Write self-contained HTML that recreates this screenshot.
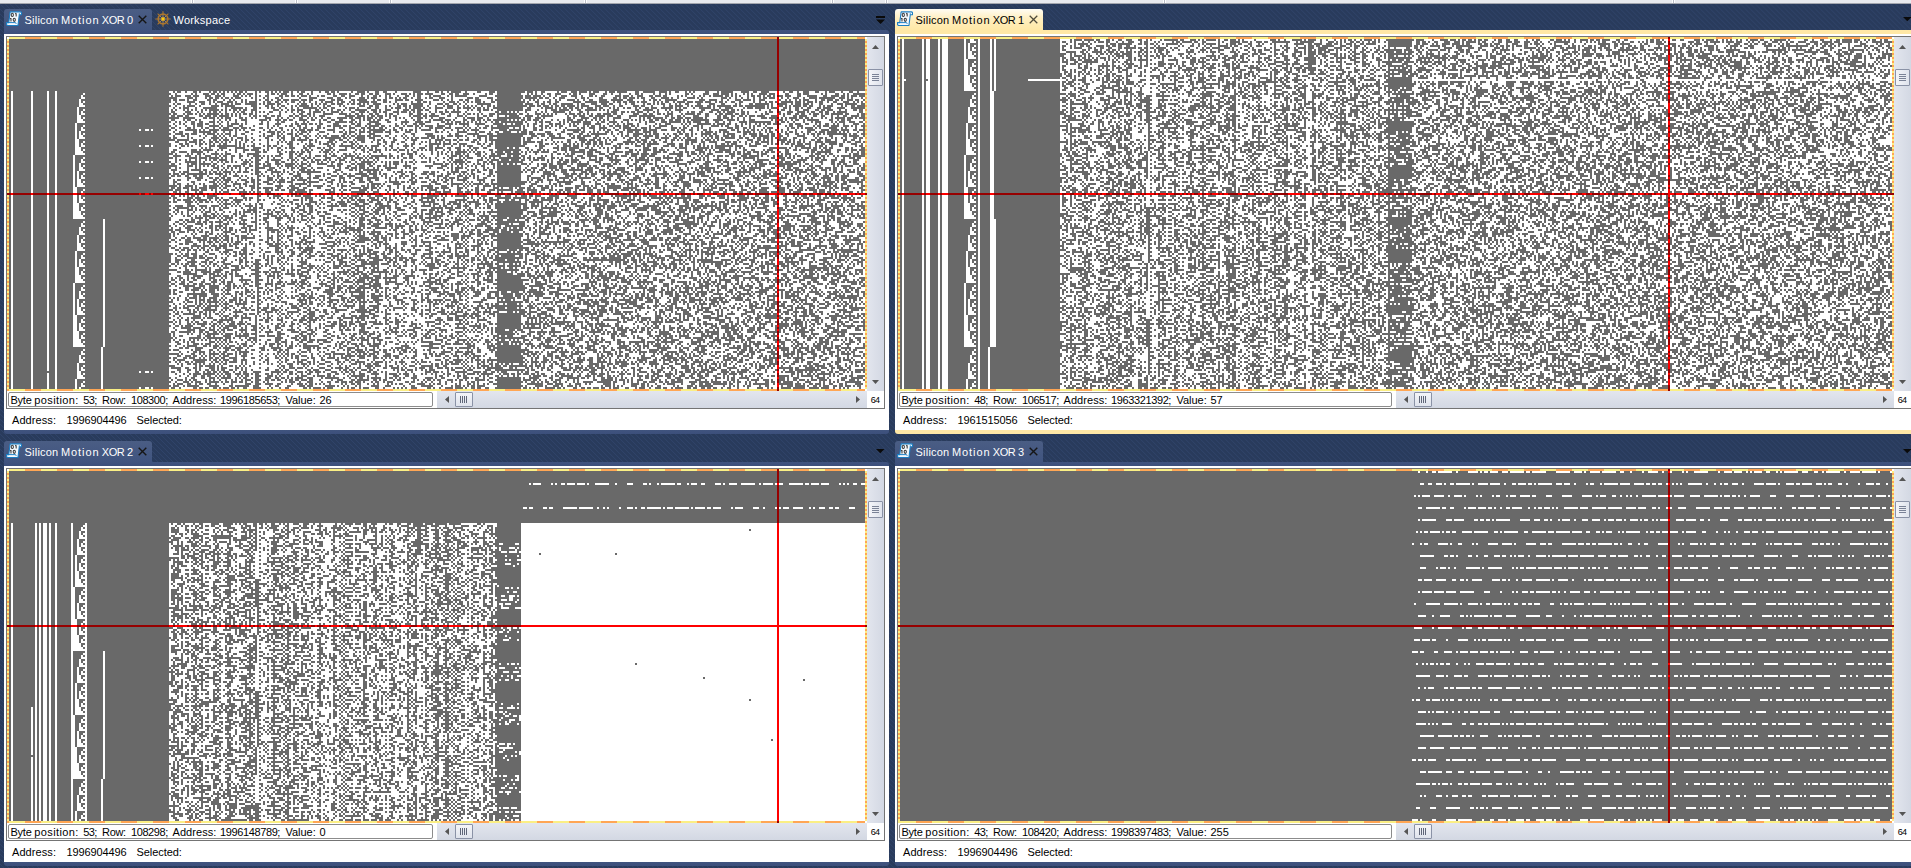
<!DOCTYPE html><html><head><meta charset="utf-8"><title>x</title><style>
*{box-sizing:border-box;margin:0;padding:0}
html,body{width:1911px;height:868px;overflow:hidden}
body{position:relative;font-family:"Liberation Sans",sans-serif;font-size:11px;color:#000;
 background:#2a3c5e repeating-linear-gradient(45deg,#293b5c 0,#293b5c 2.100px,#30446a 2.800px,#293b5c 3.536px)}
.a{position:absolute}
.top{left:0;top:0;width:1911px;height:4px;background:#e8eaef;border-bottom:1px solid #a3a6ae}
.tab{height:21px;border-radius:3px 3px 0 0}
.tab.in{background:linear-gradient(#4a5d84,#40547f)}
.tab.ac{background:linear-gradient(#fffcf3,#ffefc0 45%,#ffe8a6)}
.band.in{background:linear-gradient(#40547f,#3c4f7b)}
.band.ac{background:#ffe8a6}
.tt{top:0;height:23px;line-height:23px;white-space:nowrap;font-size:11px}
.in .tt{color:#fff}
.frame{background:#fff}
.ib{border:1px solid #747474}
.dash{background:
 repeating-linear-gradient(90deg,#fbef84 0,#fbef84 16px,#ffa654 16px,#ffa654 32px)}
.dashv{background:
 repeating-linear-gradient(180deg,#fbef84 0,#fbef84 2px,#ffa654 2px,#ffa654 4px)}
.sb{background:linear-gradient(90deg,#e3e6ee,#d3d8e3)}
.sbh{background:linear-gradient(180deg,#e3e6ee,#d3d8e3)}
.thumb{border:1px solid #8a92a6;border-radius:1px;background:linear-gradient(90deg,#f4f5f9,#dfe3ec)}
.thumbh{border:1px solid #8a92a6;border-radius:1px;background:linear-gradient(180deg,#f4f5f9,#dfe3ec)}
.tbx{border:1px solid #8c8c8c;border-radius:2px;background:#fff;height:15px;line-height:15px;white-space:nowrap;overflow:hidden;padding-left:2px}
.txt{white-space:nowrap;height:14px;line-height:14px}
.w{top:0;white-space:nowrap}
svg{position:absolute;display:block}
</style></head><body>
<div class="a top"></div>
<div class="a" style="left:191px;top:0;width:3px;height:3px;background:linear-gradient(90deg,#fff 0,#fff 1px,#b9bcc6 1px,#b9bcc6 2px,#fff 2px)"></div>
<div class="a" style="left:295px;top:0;width:3px;height:3px;background:linear-gradient(90deg,#fff 0,#fff 1px,#b9bcc6 1px,#b9bcc6 2px,#fff 2px)"></div>
<div class="a" style="left:389px;top:0;width:3px;height:3px;background:linear-gradient(90deg,#fff 0,#fff 1px,#b9bcc6 1px,#b9bcc6 2px,#fff 2px)"></div>
<div class="a" style="left:584px;top:0;width:3px;height:3px;background:linear-gradient(90deg,#fff 0,#fff 1px,#b9bcc6 1px,#b9bcc6 2px,#fff 2px)"></div>
<div class="a" style="left:831px;top:0;width:3px;height:3px;background:linear-gradient(90deg,#fff 0,#fff 1px,#b9bcc6 1px,#b9bcc6 2px,#fff 2px)"></div>
<div class="a" style="left:885px;top:0;width:3px;height:3px;background:linear-gradient(90deg,#fff 0,#fff 1px,#b9bcc6 1px,#b9bcc6 2px,#fff 2px)"></div>
<div class="a" style="left:1163px;top:0;width:3px;height:3px;background:linear-gradient(90deg,#fff 0,#fff 1px,#b9bcc6 1px,#b9bcc6 2px,#fff 2px)"></div>
<div class="a" style="left:1672px;top:0;width:3px;height:3px;background:linear-gradient(90deg,#fff 0,#fff 1px,#b9bcc6 1px,#b9bcc6 2px,#fff 2px)"></div>
<div class="a tab in" style="left:4px;top:9px;width:148px">
<svg class="a" style="left:2px;top:2px" width="16" height="16" viewBox="0 0 17 16" preserveAspectRatio="none">
<path d="M4.400.8H15.100c1 0 1.400.5 1.400 1.300V3.700H14.100L12.700 14.500H2.200C1.100 14.500.5 13.900.5 13V11.600H2.900z" fill="#f3f9fd" stroke="#1b7ec3" stroke-width="1.150" stroke-linejoin="round"/>
<path d="M.7 11.600H9.800c.7 0 1 .5 1 1.200M14.100 3.700V2.300" fill="none" stroke="#1b7ec3" stroke-width="1"/>
<g fill="none" stroke="#383838" stroke-width="1.100">
<ellipse cx="6.700" cy="3.900" rx="1.150" ry="1.600"/><path d="M10.800 2.200v3.400M9.800 3l1-.8"/>
<path d="M5.300 7.100v3.400M4.300 7.900l1-.8"/><ellipse cx="8.800" cy="8.800" rx="1.150" ry="1.600"/></g>
</svg>
<div class="a tt" style="left:20.500px;letter-spacing:.22px">Silicon</div>
<div class="a tt" style="left:57px;letter-spacing:.92px">Motion</div>
<div class="a tt" style="left:97.800px;letter-spacing:-.5px">XOR</div>
<div class="a tt" style="left:123px">0</div>
<svg class="a" style="left:134px;top:6px" width="9" height="9" viewBox="0 0 9 9"><path d="M.7.7l7.600 7.600M8.300.7L.7 8.300" stroke="#161616" stroke-width="1.4" fill="none"/></svg>
</div>
<div class="a in" style="left:152px;top:9px;width:90px;height:21px">
<svg class="a" style="left:2.5px;top:1.5px" width="16" height="16" viewBox="-8 -8 16 16">
<g stroke="#ad772e" fill="none">
<path d="M0-7.700V-5M0 5V7.700M-7.700 0H-5M5 0H7.700M-5.400-5.400L-3.600-3.600M3.600 3.600L5.400 5.400M-5.400 5.400L-3.600 3.600M3.600-3.600L5.400-5.400" stroke-width="1.050"/>
<path d="M0-4.500V4.500M-4.500 0H4.500M-3.200-3.200L3.200 3.200M-3.200 3.200L3.200-3.200" stroke-width=".7" stroke="#c9a066"/>
<circle r="4.800" stroke-width="1.700"/></g>
<circle r="1.700" fill="#f8cb12" stroke="#dfa314" stroke-width=".5"/>
</svg>
<div class="a tt" style="left:21.500px;letter-spacing:.22px">Workspace</div>
</div>
<div class="a band in" style="left:4px;top:30px;width:885px;height:4px;border-radius:0 3px 0 0"></div>
<div class="a band in" style="left:4px;top:430px;width:885px;height:4px;border-radius:0 0 3px 3px"></div>
<div class="a frame" style="left:4px;top:34px;width:885px;height:396px"></div>
<div class="a ib" style="left:6px;top:36px;width:879px;height:373px"></div>
<div class="a dash" style="left:7px;top:37px;width:860px;height:2px;background-position:2px 0"></div>
<div class="a dash" style="left:7px;top:389px;width:860px;height:2px;background-position:2px 0"></div>
<div class="a dashv" style="left:7px;top:39px;width:2px;height:350px"></div>
<div class="a dashv" style="left:865px;top:39px;width:2px;height:350px"></div>
<div class="a" style="left:7px;top:37px;width:2px;height:2px;background:#fff"></div>
<div class="a" style="left:865px;top:37px;width:2px;height:2px;background:#fff"></div>
<div class="a" style="left:865px;top:389px;width:2px;height:2px;background:#fff"></div>
<svg style="left:9px;top:39px" width="856" height="350" viewBox="0 0 428 175" shape-rendering="crispEdges"><rect width="428" height="175" fill="#696969"/><path d="M1 26.5h1m9 0h1m7 0h1m3 0h1m56 0h2m1 0h1m2 0h2m1 0h3m2 0h1m1 0h4m1 0h1m2 0h1m1 0h1m1 0h1m1 0h1m1 0h1m1 0h1m2 0h1m1 0h4m1 0h1m1 0h2m2 0h1m1 0h1m1 0h1m1 0h1m3 0h1m1 0h2m1 0h1m2 0h3m1 0h3m1 0h2m2 0h1m2 0h1m1 0h6m1 0h2m4 0h1m1 0h3m2 0h2m2 0h4m1 0h8m4 0h3m1 0h3m2 0h1m1 0h2m1 0h1m5 0h2m1 0h5m2 0h4m3 0h1m14 0h1m3 0h1m1 0h2m2 0h6m1 0h1m3 0h2m3 0h1m4 0h1m1 0h1m3 0h3m1 0h1m3 0h1m5 0h4m2 0h2m6 0h2m4 0h1m1 0h2m2 0h3m1 0h1m1 0h1m1 0h5m2 0h4m1 0h1m6 0h4m4 0h2m2 0h2m4 0h4m1 0h2m1 0h2m2 0h2m1 0h2m3 0h3m2 0h3m1 0h1m3 0h3m1 0h3m2 0h2m1 0h3M1 27.5h1m9 0h1m7 0h1m3 0h1m13 0h1m43 0h2m1 0h7m1 0h1m1 0h3m3 0h1m2 0h1m1 0h1m2 0h4m1 0h1m2 0h1m1 0h1m3 0h1m1 0h5m1 0h1m2 0h1m1 0h1m3 0h2m1 0h3m2 0h2m1 0h1m1 0h7m2 0h1m1 0h2m4 0h1m1 0h2m2 0h1m2 0h2m2 0h1m2 0h3m3 0h1m1 0h3m3 0h1m1 0h1m1 0h1m3 0h1m4 0h4m2 0h2m2 0h1m2 0h2m3 0h2m1 0h5m1 0h1m2 0h2m12 0h3m1 0h1m1 0h1m1 0h2m1 0h2m2 0h2m3 0h4m1 0h1m2 0h1m1 0h4m3 0h4m2 0h2m1 0h3m1 0h4m1 0h2m2 0h1m1 0h5m1 0h2m1 0h2m1 0h1m1 0h7m2 0h1m1 0h5m3 0h2m3 0h1m4 0h1m1 0h1m1 0h3m1 0h1m1 0h1m1 0h3m4 0h1m3 0h1m1 0h3m2 0h4m2 0h1m3 0h6m1 0h1m1 0h4m2 0h2m1 0h1m1 0h2M1 28.5h1m9 0h1m7 0h1m3 0h1m12 0h1m43 0h1m1 0h1m3 0h2m3 0h1m3 0h3m3 0h2m3 0h1m1 0h4m3 0h1m1 0h1m1 0h1m1 0h2m1 0h1m1 0h2m2 0h5m2 0h1m2 0h1m2 0h1m1 0h1m3 0h1m1 0h3m1 0h1m2 0h4m2 0h2m2 0h2m3 0h3m1 0h2m1 0h2m2 0h1m1 0h2m1 0h1m1 0h3m1 0h3m2 0h2m1 0h1m2 0h4m1 0h1m4 0h3m1 0h1m1 0h1m6 0h6m4 0h4m14 0h1m3 0h1m4 0h1m1 0h2m1 0h2m1 0h2m3 0h2m3 0h2m1 0h3m2 0h1m1 0h2m2 0h5m3 0h1m3 0h1m1 0h2m3 0h3m2 0h1m3 0h1m2 0h5m1 0h1m1 0h1m1 0h3m1 0h2m1 0h1m1 0h2m1 0h1m5 0h1m2 0h1m1 0h1m1 0h1m1 0h3m1 0h1m2 0h1m2 0h1m1 0h1m2 0h1m1 0h1m3 0h1m3 0h3m2 0h3m5 0h3m2 0h2m4 0h1m2 0h1m1 0h1m3 0h1M1 29.5h1m9 0h1m7 0h1m3 0h1m12 0h2m46 0h5m3 0h1m1 0h4m1 0h1m2 0h1m2 0h1m1 0h1m2 0h1m1 0h1m3 0h5m1 0h1m1 0h3m1 0h1m1 0h3m2 0h1m1 0h8m1 0h4m4 0h5m3 0h2m2 0h2m1 0h1m1 0h4m3 0h1m1 0h1m3 0h4m1 0h1m2 0h1m1 0h1m1 0h1m2 0h2m1 0h2m2 0h2m1 0h1m2 0h3m3 0h3m1 0h7m3 0h1m2 0h4m3 0h2m13 0h1m6 0h1m2 0h1m2 0h2m1 0h2m3 0h5m1 0h2m2 0h1m1 0h5m2 0h5m2 0h1m1 0h1m2 0h1m3 0h1m1 0h1m2 0h3m2 0h3m4 0h1m1 0h2m1 0h4m4 0h1m1 0h1m1 0h9m3 0h1m1 0h2m1 0h2m1 0h2m1 0h2m1 0h2m1 0h1m2 0h1m3 0h1m1 0h1m1 0h2m1 0h2m3 0h2m1 0h2m4 0h1m8 0h2m3 0h1m1 0h1m1 0h4m1 0h1M1 30.5h1m9 0h1m7 0h1m3 0h1m11 0h1m45 0h1m2 0h1m3 0h1m1 0h2m2 0h5m2 0h1m2 0h3m1 0h2m1 0h1m1 0h3m1 0h1m1 0h4m1 0h1m1 0h2m2 0h1m1 0h2m2 0h1m3 0h1m4 0h1m3 0h1m2 0h3m3 0h3m2 0h1m3 0h4m2 0h1m5 0h3m1 0h1m2 0h1m2 0h4m4 0h1m2 0h3m4 0h5m3 0h1m1 0h2m1 0h1m1 0h3m2 0h1m2 0h3m3 0h5m1 0h1m13 0h1m1 0h2m1 0h1m1 0h1m1 0h5m1 0h2m1 0h1m1 0h3m4 0h1m1 0h2m1 0h2m2 0h3m4 0h2m6 0h2m3 0h5m1 0h2m1 0h1m2 0h1m1 0h2m6 0h3m2 0h6m3 0h2m4 0h2m1 0h2m1 0h3m3 0h1m4 0h1m1 0h2m3 0h6m2 0h2m1 0h1m1 0h2m1 0h1m1 0h1m3 0h3m1 0h2m2 0h1m3 0h1m2 0h1m1 0h2m3 0h1m2 0h2M1 31.5h1m9 0h1m7 0h1m3 0h1m11 0h1m1 0h1m43 0h2m1 0h5m4 0h2m3 0h2m1 0h1m1 0h1m3 0h2m3 0h1m1 0h2m1 0h1m1 0h1m4 0h3m1 0h1m2 0h2m2 0h1m1 0h1m1 0h2m2 0h2m1 0h1m1 0h2m1 0h2m1 0h2m1 0h1m4 0h2m1 0h1m2 0h2m1 0h1m1 0h2m5 0h1m3 0h3m2 0h1m1 0h2m1 0h7m1 0h2m2 0h1m2 0h1m1 0h6m1 0h2m3 0h1m1 0h2m1 0h1m1 0h1m1 0h1m3 0h1m1 0h3m2 0h1m14 0h1m1 0h3m2 0h2m1 0h1m2 0h2m2 0h7m4 0h2m6 0h1m5 0h2m1 0h1m2 0h1m2 0h1m3 0h1m1 0h1m3 0h3m1 0h1m1 0h1m1 0h1m2 0h2m1 0h1m4 0h1m3 0h1m4 0h1m3 0h2m1 0h1m2 0h1m1 0h2m2 0h2m2 0h5m1 0h2m1 0h2m1 0h1m2 0h1m2 0h1m6 0h1m3 0h1m1 0h1m3 0h1m1 0h1m2 0h2m1 0h2m2 0h3m3 0h2m1 0h1m1 0h1m1 0h1M1 32.5h1m9 0h1m7 0h1m3 0h1m11 0h2m43 0h2m1 0h1m2 0h4m1 0h2m1 0h2m2 0h2m1 0h2m1 0h2m4 0h1m1 0h1m3 0h2m6 0h1m1 0h1m1 0h1m4 0h1m2 0h3m1 0h4m1 0h1m3 0h2m1 0h1m1 0h1m1 0h1m2 0h2m2 0h1m3 0h2m1 0h1m2 0h1m2 0h1m1 0h1m1 0h2m4 0h6m1 0h1m1 0h1m3 0h2m6 0h3m1 0h3m3 0h1m2 0h2m2 0h1m1 0h2m1 0h5m7 0h3m13 0h1m4 0h2m1 0h1m2 0h2m1 0h1m2 0h2m6 0h2m1 0h1m2 0h3m3 0h2m3 0h1m2 0h3m1 0h2m1 0h2m2 0h4m1 0h1m2 0h1m1 0h1m1 0h1m2 0h2m1 0h2m1 0h1m1 0h2m2 0h4m2 0h4m3 0h3m2 0h5m1 0h1m1 0h4m2 0h1m7 0h1m1 0h2m5 0h2m1 0h1m3 0h1m3 0h1m1 0h3m2 0h4m1 0h2m3 0h1m6 0h2M1 33.5h1m9 0h1m7 0h1m3 0h1m11 0h3m43 0h2m1 0h3m1 0h1m4 0h2m1 0h5m4 0h1m1 0h1m5 0h8m3 0h4m2 0h1m1 0h2m1 0h1m2 0h3m1 0h1m1 0h1m5 0h1m1 0h2m1 0h2m1 0h1m2 0h4m1 0h1m1 0h7m3 0h2m2 0h1m2 0h3m1 0h1m1 0h3m2 0h1m2 0h1m1 0h1m5 0h2m1 0h3m1 0h3m1 0h1m3 0h2m1 0h2m1 0h1m1 0h1m1 0h1m1 0h2m1 0h2m2 0h1m1 0h1m15 0h1m3 0h1m2 0h1m3 0h1m1 0h1m2 0h1m2 0h1m4 0h1m1 0h1m4 0h3m3 0h1m3 0h2m1 0h2m2 0h5m3 0h1m2 0h3m1 0h5m1 0h2m2 0h1m4 0h2m1 0h1m1 0h1m4 0h2m2 0h1m1 0h1m7 0h1m2 0h1m2 0h1m10 0h1m1 0h1m1 0h2m3 0h1m1 0h1m1 0h1m4 0h1m2 0h1m2 0h3m1 0h1m1 0h1m3 0h4m1 0h1m1 0h2m2 0h1M1 34.5h1m9 0h1m7 0h1m3 0h1m10 0h1m45 0h2m1 0h2m1 0h1m3 0h3m1 0h3m7 0h4m1 0h2m6 0h1m1 0h3m2 0h1m1 0h3m1 0h1m2 0h2m1 0h2m1 0h2m1 0h2m1 0h2m7 0h1m1 0h1m2 0h2m2 0h5m1 0h1m3 0h1m1 0h4m2 0h2m2 0h3m1 0h2m1 0h1m3 0h2m1 0h1m1 0h1m4 0h1m1 0h2m1 0h2m4 0h2m3 0h2m2 0h1m4 0h1m1 0h1m2 0h1m1 0h1m1 0h2m15 0h2m2 0h5m1 0h1m4 0h1m1 0h1m1 0h1m2 0h1m2 0h1m2 0h1m1 0h2m3 0h1m1 0h1m2 0h3m1 0h1m1 0h1m1 0h2m1 0h1m2 0h2m1 0h1m1 0h2m2 0h1m3 0h2m6 0h1m1 0h1m1 0h1m2 0h3m1 0h2m6 0h1m1 0h2m1 0h2m4 0h5m1 0h1m3 0h1m5 0h1m1 0h1m4 0h2m2 0h1m1 0h2m2 0h1m1 0h2m2 0h3m2 0h1m4 0h3m4 0h3M1 35.5h1m9 0h1m7 0h1m3 0h1m10 0h1m2 0h1m42 0h1m1 0h1m1 0h3m1 0h1m1 0h1m1 0h1m1 0h2m1 0h1m1 0h1m5 0h1m1 0h1m1 0h1m1 0h1m2 0h1m1 0h1m2 0h2m3 0h8m3 0h1m1 0h2m1 0h1m2 0h1m3 0h3m1 0h2m2 0h1m1 0h2m1 0h1m1 0h2m2 0h1m1 0h2m1 0h2m6 0h2m3 0h1m1 0h2m3 0h3m1 0h2m3 0h1m2 0h1m3 0h1m2 0h3m1 0h4m1 0h3m1 0h1m1 0h4m1 0h1m1 0h2m2 0h1m3 0h1m1 0h2m13 0h1m3 0h3m1 0h3m1 0h2m3 0h1m5 0h1m1 0h2m2 0h2m6 0h1m1 0h1m1 0h1m1 0h2m3 0h8m2 0h2m5 0h2m1 0h3m1 0h1m1 0h2m4 0h9m2 0h3m4 0h1m4 0h1m2 0h1m1 0h1m1 0h8m1 0h4m1 0h3m1 0h1m2 0h2m1 0h2m2 0h2m3 0h3m2 0h1m2 0h1m3 0h3m1 0h2m1 0h3m2 0h1m2 0h1M1 36.5h1m9 0h1m7 0h1m3 0h1m10 0h1m1 0h1m43 0h1m2 0h5m3 0h3m1 0h1m1 0h3m1 0h1m2 0h1m1 0h2m1 0h3m1 0h1m1 0h1m2 0h3m1 0h1m1 0h1m1 0h1m1 0h2m2 0h3m1 0h2m1 0h2m1 0h2m1 0h1m2 0h2m1 0h1m4 0h1m1 0h3m4 0h1m1 0h4m2 0h2m3 0h1m1 0h2m2 0h1m1 0h1m2 0h3m3 0h1m3 0h1m1 0h1m1 0h1m2 0h4m1 0h2m1 0h1m2 0h1m2 0h1m5 0h2m1 0h6m1 0h7m2 0h1m3 0h1m1 0h1m1 0h1m1 0h3m1 0h4m1 0h2m1 0h1m1 0h3m6 0h2m1 0h4m2 0h2m1 0h9m1 0h1m3 0h2m2 0h1m1 0h1m2 0h1m3 0h2m1 0h2m1 0h1m1 0h4m1 0h1m1 0h3m1 0h3m1 0h1m2 0h2m2 0h3m2 0h2m2 0h1m1 0h1m4 0h3m2 0h1m1 0h3m1 0h4m1 0h1m2 0h2m2 0h3m3 0h2m4 0h1m1 0h1m2 0h2m2 0h1m2 0h2m1 0h1m5 0h6m2 0h1M1 37.5h1m9 0h1m7 0h1m3 0h1m10 0h1m1 0h2m43 0h1m2 0h3m1 0h1m3 0h1m1 0h1m1 0h1m1 0h1m6 0h1m1 0h1m2 0h1m1 0h1m1 0h1m1 0h1m2 0h1m2 0h1m1 0h5m1 0h5m1 0h6m1 0h2m2 0h2m2 0h1m1 0h4m5 0h3m4 0h1m1 0h2m2 0h1m1 0h3m2 0h1m2 0h3m1 0h1m2 0h2m1 0h5m2 0h2m3 0h1m1 0h2m2 0h3m2 0h2m1 0h3m1 0h2m1 0h1m2 0h1m1 0h1m1 0h1m1 0h3m3 0h1m10 0h1m2 0h2m1 0h3m3 0h1m1 0h1m1 0h1m1 0h1m1 0h4m1 0h1m3 0h1m2 0h1m1 0h1m1 0h1m1 0h2m2 0h1m4 0h1m2 0h2m1 0h5m3 0h2m2 0h1m2 0h2m2 0h1m1 0h1m3 0h4m1 0h1m5 0h1m2 0h2m2 0h3m1 0h1m2 0h1m4 0h1m2 0h1m2 0h1m1 0h6m1 0h1m2 0h4m2 0h1m1 0h1m2 0h2m2 0h1m2 0h2m1 0h1m3 0h1m1 0h1m2 0h1m6 0h1m2 0h4m1 0h1M1 38.5h1m9 0h1m7 0h1m3 0h1m10 0h2m44 0h1m2 0h1m3 0h1m2 0h5m2 0h1m3 0h1m2 0h1m5 0h1m1 0h1m1 0h1m1 0h4m1 0h1m2 0h1m1 0h1m2 0h2m2 0h1m2 0h4m2 0h1m2 0h1m3 0h1m1 0h1m1 0h2m3 0h10m5 0h1m4 0h1m1 0h1m2 0h1m3 0h1m1 0h1m1 0h1m2 0h6m1 0h1m4 0h1m2 0h1m5 0h4m2 0h3m3 0h1m1 0h5m1 0h2m2 0h1m2 0h2m1 0h3m1 0h1m5 0h3m4 0h2m1 0h1m6 0h7m1 0h2m2 0h1m3 0h2m2 0h1m5 0h1m3 0h2m2 0h4m4 0h1m8 0h5m2 0h1m1 0h2m2 0h1m1 0h4m3 0h3m2 0h4m2 0h1m2 0h2m2 0h2m2 0h1m1 0h1m3 0h1m4 0h3m4 0h2m1 0h4m2 0h1m4 0h3m2 0h2m2 0h3m1 0h2m1 0h2m2 0h2m4 0h1M1 39.5h1m9 0h1m7 0h1m3 0h1m10 0h2m1 0h1m47 0h2m6 0h4m2 0h1m3 0h1m1 0h1m1 0h1m3 0h4m2 0h1m1 0h2m1 0h1m1 0h4m3 0h3m1 0h1m1 0h2m1 0h2m1 0h2m2 0h2m1 0h1m1 0h1m1 0h2m1 0h2m2 0h3m5 0h1m2 0h1m3 0h1m1 0h1m3 0h1m1 0h1m2 0h3m1 0h2m1 0h1m1 0h1m1 0h3m1 0h2m3 0h1m1 0h2m1 0h3m3 0h5m1 0h3m1 0h1m4 0h1m3 0h2m1 0h4m12 0h1m1 0h1m2 0h2m3 0h1m1 0h11m2 0h1m1 0h3m4 0h2m2 0h1m2 0h2m1 0h2m4 0h4m1 0h4m1 0h1m1 0h1m2 0h1m5 0h1m1 0h2m2 0h1m3 0h1m3 0h1m5 0h1m1 0h5m2 0h1m3 0h1m1 0h2m1 0h2m1 0h2m1 0h5m3 0h1m5 0h1m1 0h1m1 0h1m4 0h1m2 0h1m2 0h1m1 0h4m1 0h1m1 0h2m1 0h1m5 0h1m3 0h1m1 0h1M1 40.5h1m9 0h1m7 0h1m3 0h1m10 0h3m43 0h1m2 0h4m1 0h1m2 0h2m1 0h1m1 0h6m1 0h2m1 0h2m1 0h1m1 0h2m1 0h2m3 0h6m4 0h1m1 0h2m3 0h1m2 0h1m2 0h3m4 0h2m2 0h2m1 0h1m2 0h2m2 0h2m2 0h4m2 0h2m1 0h1m1 0h1m2 0h1m1 0h1m2 0h2m2 0h3m1 0h4m1 0h3m1 0h1m2 0h4m1 0h1m5 0h1m3 0h1m1 0h4m2 0h2m2 0h1m2 0h1m1 0h1m2 0h1m7 0h1m1 0h1m1 0h1m1 0h1m2 0h1m2 0h1m3 0h1m1 0h4m1 0h2m1 0h2m1 0h1m3 0h2m3 0h1m1 0h2m1 0h1m1 0h1m1 0h1m1 0h1m1 0h2m1 0h4m3 0h1m1 0h1m1 0h1m1 0h1m1 0h2m2 0h1m2 0h1m2 0h2m2 0h1m3 0h1m1 0h1m1 0h1m9 0h2m5 0h2m4 0h1m1 0h2m1 0h2m3 0h8m1 0h1m4 0h1m1 0h2m1 0h1m2 0h2m1 0h1m6 0h5m2 0h2m1 0h1m2 0h1m2 0h6M1 41.5h1m9 0h1m7 0h1m3 0h1m10 0h4m43 0h2m1 0h1m1 0h2m1 0h2m2 0h2m2 0h3m3 0h1m1 0h1m1 0h2m1 0h3m1 0h4m1 0h7m1 0h2m1 0h4m1 0h1m2 0h5m1 0h3m1 0h1m1 0h5m1 0h3m2 0h2m6 0h1m2 0h1m1 0h1m1 0h4m5 0h4m2 0h5m4 0h3m4 0h1m3 0h5m2 0h1m1 0h1m1 0h1m3 0h1m1 0h1m1 0h1m1 0h1m1 0h1m1 0h2m1 0h2m1 0h1m2 0h1m11 0h1m1 0h4m1 0h1m2 0h1m3 0h4m1 0h1m1 0h1m1 0h1m5 0h1m4 0h3m1 0h1m2 0h2m4 0h2m1 0h2m1 0h5m1 0h2m1 0h1m3 0h3m3 0h1m6 0h1m1 0h1m2 0h1m4 0h2m2 0h3m2 0h2m1 0h2m1 0h4m4 0h1m11 0h2m2 0h1m2 0h1m1 0h2m1 0h4m1 0h3m1 0h1m3 0h5m1 0h1m1 0h1m3 0h2m3 0h2m2 0h1M1 42.5h1m9 0h1m7 0h1m3 0h1m9 0h1m46 0h2m1 0h2m1 0h1m1 0h3m2 0h1m3 0h1m2 0h2m1 0h2m1 0h3m1 0h1m4 0h1m1 0h1m1 0h6m2 0h2m1 0h3m3 0h5m1 0h1m2 0h1m3 0h1m2 0h1m1 0h1m2 0h5m3 0h6m2 0h1m2 0h3m2 0h2m3 0h7m1 0h2m1 0h1m1 0h3m2 0h1m3 0h6m1 0h3m4 0h1m1 0h1m5 0h3m5 0h4m5 0h1m1 0h2m1 0h1m4 0h2m1 0h2m2 0h2m1 0h3m2 0h1m3 0h1m1 0h2m1 0h1m1 0h1m1 0h2m4 0h2m3 0h3m1 0h2m1 0h1m1 0h2m1 0h1m3 0h2m1 0h3m1 0h4m1 0h1m1 0h2m3 0h5m1 0h1m1 0h1m1 0h3m7 0h1m1 0h1m4 0h1m2 0h2m1 0h2m1 0h1m1 0h1m1 0h2m1 0h1m1 0h1m1 0h1m2 0h1m4 0h4m2 0h1m3 0h2m2 0h3m1 0h1m1 0h2m2 0h2m1 0h1m1 0h2m1 0h4m3 0h2M1 43.5h1m9 0h1m7 0h1m3 0h1m9 0h1m3 0h1m43 0h2m1 0h4m1 0h3m1 0h1m3 0h3m5 0h1m1 0h2m3 0h3m2 0h5m1 0h6m1 0h2m1 0h1m1 0h3m1 0h1m2 0h2m2 0h2m1 0h5m2 0h3m2 0h1m4 0h1m2 0h1m1 0h2m3 0h2m1 0h1m5 0h1m2 0h2m1 0h2m2 0h2m1 0h1m3 0h1m2 0h1m1 0h1m4 0h2m4 0h2m1 0h6m1 0h1m1 0h4m1 0h3m2 0h1m1 0h2m12 0h1m1 0h1m1 0h2m1 0h2m2 0h1m2 0h1m1 0h1m1 0h1m2 0h3m1 0h1m2 0h3m1 0h1m1 0h1m2 0h2m1 0h1m1 0h2m2 0h1m3 0h1m3 0h1m2 0h1m1 0h5m1 0h1m1 0h2m4 0h2m1 0h5m1 0h1m1 0h2m3 0h1m1 0h4m4 0h1m1 0h1m2 0h3m2 0h1m1 0h3m1 0h1m1 0h1m2 0h2m1 0h5m1 0h3m1 0h1m2 0h2m3 0h5m1 0h1m2 0h1m3 0h1m4 0h2m3 0h1m1 0h1m1 0h2M1 44.5h1m9 0h1m7 0h1m3 0h1m9 0h1m2 0h1m43 0h1m2 0h2m1 0h3m2 0h1m1 0h3m1 0h1m2 0h2m1 0h2m1 0h1m3 0h2m3 0h1m3 0h1m1 0h4m2 0h2m1 0h1m1 0h3m2 0h5m1 0h2m1 0h1m2 0h2m1 0h2m2 0h1m1 0h4m1 0h2m2 0h3m3 0h3m2 0h1m2 0h1m1 0h2m2 0h1m1 0h3m1 0h2m2 0h6m1 0h1m1 0h4m2 0h1m4 0h1m3 0h2m4 0h1m1 0h1m1 0h2m1 0h1m1 0h1m2 0h2m9 0h2m1 0h2m1 0h1m1 0h4m2 0h2m1 0h1m1 0h1m1 0h4m1 0h2m1 0h5m1 0h1m2 0h2m3 0h2m4 0h3m1 0h2m1 0h1m4 0h2m1 0h2m3 0h1m1 0h2m3 0h5m3 0h1m1 0h1m2 0h2m1 0h2m1 0h1m1 0h3m1 0h8m3 0h1m2 0h2m2 0h1m1 0h1m1 0h4m1 0h1m3 0h2m1 0h4m1 0h1m2 0h1m1 0h1m1 0h1m4 0h1m1 0h1m1 0h4m4 0h2m1 0h1m1 0h4m1 0h3M1 45.5h1m9 0h1m7 0h1m3 0h1m9 0h1m2 0h2m27 0h1m2 0h2m1 0h1m9 0h2m1 0h4m6 0h1m1 0h1m1 0h2m5 0h1m6 0h1m1 0h1m1 0h1m1 0h3m2 0h4m1 0h2m1 0h2m1 0h2m1 0h2m1 0h1m1 0h1m1 0h1m3 0h1m3 0h1m2 0h4m4 0h4m1 0h2m1 0h2m1 0h1m1 0h1m1 0h2m8 0h2m1 0h1m2 0h2m1 0h1m1 0h1m2 0h1m1 0h2m5 0h2m1 0h3m1 0h3m1 0h2m1 0h2m1 0h1m1 0h1m4 0h6m1 0h3m4 0h1m6 0h1m2 0h3m2 0h1m2 0h6m1 0h3m1 0h1m7 0h1m1 0h4m1 0h2m1 0h1m1 0h1m2 0h2m2 0h2m1 0h1m7 0h1m2 0h1m4 0h2m3 0h2m2 0h1m1 0h1m2 0h2m2 0h2m1 0h2m2 0h1m1 0h4m4 0h2m2 0h1m1 0h2m1 0h1m1 0h1m2 0h1m1 0h1m1 0h1m1 0h1m1 0h2m2 0h1m1 0h2m1 0h3m1 0h5m4 0h3m4 0h1m4 0h1m4 0h2m2 0h1M1 46.5h1m9 0h1m7 0h1m3 0h1m9 0h1m1 0h1m44 0h2m1 0h2m2 0h5m2 0h1m6 0h1m2 0h3m1 0h2m1 0h2m1 0h4m2 0h5m1 0h3m4 0h1m2 0h1m1 0h3m1 0h2m1 0h1m3 0h1m1 0h4m3 0h4m1 0h2m2 0h1m1 0h1m3 0h2m3 0h1m2 0h1m5 0h1m3 0h2m2 0h3m3 0h2m1 0h9m2 0h1m1 0h2m1 0h4m5 0h4m1 0h1m3 0h2m1 0h2m2 0h2m4 0h3m1 0h1m3 0h1m2 0h6m3 0h5m2 0h4m3 0h1m2 0h2m1 0h1m1 0h1m1 0h3m2 0h1m1 0h3m2 0h2m3 0h1m2 0h2m4 0h1m2 0h10m2 0h1m1 0h3m1 0h4m1 0h1m4 0h1m1 0h1m1 0h1m3 0h4m2 0h1m4 0h1m1 0h2m1 0h2m1 0h1m2 0h2m1 0h1m1 0h1m1 0h1m2 0h1m1 0h2m1 0h2m2 0h2m1 0h1m3 0h1m5 0h1m1 0h1m1 0h1m1 0h4m1 0h2M1 47.5h1m9 0h1m7 0h1m3 0h1m9 0h1m1 0h1m1 0h1m43 0h2m4 0h1m2 0h1m3 0h3m1 0h1m4 0h1m1 0h1m1 0h1m3 0h2m1 0h2m2 0h3m1 0h5m1 0h3m2 0h1m1 0h1m1 0h2m3 0h1m1 0h1m2 0h2m1 0h4m1 0h4m1 0h7m2 0h1m1 0h2m1 0h1m1 0h4m3 0h7m1 0h6m1 0h3m2 0h5m4 0h8m1 0h2m2 0h4m6 0h4m3 0h2m15 0h1m3 0h1m4 0h1m3 0h2m2 0h3m3 0h3m2 0h2m1 0h1m8 0h2m1 0h2m1 0h1m1 0h2m1 0h2m5 0h1m1 0h1m1 0h1m3 0h2m1 0h1m1 0h2m2 0h1m2 0h1m2 0h1m1 0h1m1 0h2m5 0h1m2 0h3m1 0h1m4 0h4m2 0h1m4 0h1m2 0h2m1 0h1m2 0h1m2 0h2m2 0h3m2 0h2m1 0h1m1 0h1m2 0h1m2 0h1m1 0h1m10 0h1m1 0h1m2 0h2M1 48.5h1m9 0h1m7 0h1m3 0h1m9 0h1m1 0h2m43 0h2m1 0h3m2 0h1m1 0h5m1 0h2m1 0h3m2 0h1m1 0h1m1 0h2m1 0h1m2 0h4m1 0h6m1 0h1m1 0h1m3 0h2m2 0h1m1 0h3m1 0h1m2 0h2m2 0h1m1 0h2m1 0h1m1 0h1m2 0h2m4 0h1m2 0h1m1 0h1m2 0h1m4 0h1m2 0h1m4 0h2m2 0h3m1 0h2m1 0h1m1 0h3m1 0h6m4 0h1m1 0h1m1 0h2m3 0h1m4 0h1m1 0h3m1 0h1m5 0h1m17 0h4m3 0h2m2 0h2m3 0h2m1 0h4m1 0h1m1 0h1m2 0h1m4 0h2m2 0h7m1 0h3m1 0h1m2 0h2m3 0h2m5 0h1m2 0h3m1 0h1m1 0h2m2 0h3m2 0h1m1 0h4m1 0h1m1 0h1m2 0h1m2 0h2m3 0h1m2 0h2m1 0h1m1 0h3m3 0h1m5 0h1m2 0h1m3 0h2m1 0h4m4 0h4m1 0h1m1 0h5m2 0h5m2 0h1m5 0h2M1 49.5h1m9 0h1m7 0h1m3 0h1m9 0h1m1 0h3m43 0h1m2 0h5m1 0h1m1 0h5m1 0h3m4 0h1m1 0h1m1 0h2m1 0h2m3 0h1m1 0h2m1 0h6m2 0h4m1 0h1m2 0h3m2 0h2m1 0h2m2 0h4m1 0h1m1 0h1m8 0h1m2 0h1m1 0h2m5 0h2m3 0h3m1 0h3m1 0h1m1 0h4m1 0h1m1 0h1m1 0h1m2 0h1m4 0h1m2 0h1m1 0h1m2 0h6m1 0h4m1 0h4m2 0h2m1 0h1m2 0h2m12 0h1m1 0h1m3 0h2m1 0h4m1 0h1m7 0h3m2 0h1m4 0h4m2 0h1m1 0h1m1 0h1m1 0h3m1 0h3m1 0h2m2 0h1m1 0h1m1 0h2m2 0h3m2 0h1m4 0h2m2 0h1m1 0h1m1 0h1m2 0h2m1 0h3m1 0h1m1 0h1m1 0h1m2 0h1m1 0h1m5 0h2m2 0h1m2 0h2m1 0h1m2 0h1m3 0h1m1 0h1m3 0h1m2 0h3m2 0h3m2 0h4m1 0h1m2 0h1m1 0h2m1 0h1m1 0h2m1 0h1m1 0h3m2 0h1m2 0h1M1 50.5h1m9 0h1m7 0h1m3 0h1m9 0h2m48 0h1m6 0h2m2 0h1m2 0h3m1 0h1m2 0h1m1 0h1m3 0h1m1 0h1m1 0h2m1 0h1m2 0h2m1 0h2m1 0h3m1 0h1m1 0h3m1 0h1m1 0h3m2 0h1m5 0h1m2 0h1m1 0h6m3 0h2m2 0h2m1 0h2m1 0h1m4 0h4m1 0h1m2 0h1m1 0h4m2 0h4m1 0h2m3 0h6m1 0h2m4 0h1m3 0h1m2 0h1m2 0h1m2 0h2m2 0h1m1 0h2m1 0h1m16 0h1m1 0h1m2 0h5m1 0h1m1 0h2m1 0h7m2 0h4m4 0h1m3 0h1m2 0h2m1 0h1m1 0h1m2 0h5m2 0h2m2 0h1m3 0h2m2 0h2m1 0h2m1 0h2m2 0h1m1 0h1m1 0h1m6 0h2m1 0h1m3 0h1m1 0h1m1 0h1m2 0h6m1 0h4m3 0h2m2 0h1m1 0h1m1 0h1m1 0h2m5 0h1m1 0h1m1 0h2m1 0h1m1 0h3m2 0h1m2 0h2m3 0h2m1 0h3m2 0h2m2 0h2m1 0h2M1 51.5h1m9 0h1m7 0h1m3 0h1m9 0h2m2 0h1m42 0h3m2 0h3m1 0h1m4 0h1m1 0h1m1 0h2m2 0h1m2 0h1m1 0h1m1 0h1m1 0h2m1 0h1m1 0h2m1 0h2m1 0h7m1 0h4m1 0h1m1 0h1m1 0h1m2 0h4m1 0h3m1 0h2m1 0h1m1 0h3m3 0h1m1 0h3m2 0h1m2 0h1m1 0h2m2 0h3m1 0h2m1 0h2m2 0h2m2 0h3m2 0h4m1 0h3m1 0h1m1 0h1m1 0h2m1 0h1m1 0h1m1 0h2m1 0h3m1 0h6m2 0h1m1 0h3m1 0h2m1 0h1m13 0h1m6 0h1m3 0h5m1 0h1m1 0h1m1 0h2m2 0h2m1 0h2m2 0h1m2 0h1m2 0h1m2 0h1m1 0h2m1 0h5m6 0h1m2 0h1m2 0h1m1 0h1m2 0h3m2 0h2m1 0h6m2 0h1m3 0h2m2 0h2m4 0h4m3 0h1m2 0h1m1 0h2m1 0h2m1 0h1m2 0h1m4 0h1m1 0h2m1 0h1m2 0h1m2 0h1m1 0h1m2 0h1m1 0h2m1 0h2m4 0h1m6 0h3m1 0h1m2 0h2m3 0h1M1 52.5h1m9 0h1m7 0h1m3 0h1m9 0h2m1 0h1m44 0h4m2 0h1m2 0h3m1 0h1m2 0h1m1 0h1m1 0h1m1 0h2m1 0h1m2 0h4m1 0h1m1 0h1m1 0h4m1 0h2m1 0h3m1 0h4m1 0h4m3 0h2m1 0h3m1 0h1m2 0h3m1 0h1m3 0h1m2 0h3m1 0h4m2 0h1m1 0h9m2 0h2m1 0h2m1 0h2m1 0h3m1 0h2m2 0h2m1 0h4m6 0h1m4 0h1m2 0h1m4 0h5m2 0h1m1 0h2m2 0h1m13 0h1m2 0h6m2 0h1m2 0h1m1 0h1m1 0h3m2 0h1m1 0h1m1 0h1m1 0h1m1 0h1m3 0h1m2 0h1m2 0h1m3 0h3m3 0h1m2 0h1m1 0h1m1 0h2m2 0h1m6 0h4m4 0h2m2 0h1m2 0h1m1 0h3m1 0h1m1 0h5m1 0h2m2 0h1m1 0h1m3 0h4m1 0h1m1 0h2m3 0h3m1 0h1m1 0h1m2 0h1m1 0h1m2 0h1m2 0h1m3 0h1m3 0h2m1 0h2m2 0h2m4 0h1m2 0h4m3 0h2m1 0h1M1 53.5h1m9 0h1m7 0h1m3 0h1m9 0h2m1 0h2m27 0h1m2 0h2m1 0h1m9 0h2m1 0h2m2 0h1m1 0h1m1 0h3m1 0h4m3 0h1m10 0h1m1 0h1m1 0h1m1 0h1m2 0h4m1 0h1m2 0h1m2 0h2m1 0h3m2 0h5m1 0h1m4 0h6m2 0h1m1 0h2m7 0h1m1 0h1m2 0h1m1 0h2m4 0h2m1 0h2m2 0h5m3 0h1m1 0h6m1 0h1m2 0h2m1 0h2m1 0h3m1 0h3m1 0h1m1 0h1m3 0h4m1 0h2m2 0h2m15 0h5m1 0h1m3 0h6m1 0h2m4 0h1m3 0h1m1 0h2m1 0h2m1 0h1m1 0h1m1 0h5m2 0h1m1 0h7m3 0h1m1 0h1m2 0h6m3 0h1m2 0h2m2 0h1m1 0h3m1 0h1m2 0h1m1 0h1m1 0h1m1 0h1m9 0h1m4 0h3m4 0h3m2 0h5m1 0h6m1 0h1m5 0h2m1 0h2m1 0h1m2 0h1m1 0h2m1 0h3m2 0h6m1 0h1m2 0h1M1 54.5h1m9 0h1m7 0h1m3 0h1m9 0h3m44 0h5m1 0h10m1 0h1m1 0h1m1 0h4m4 0h4m5 0h4m4 0h3m1 0h1m1 0h2m2 0h2m1 0h1m3 0h4m2 0h1m1 0h3m2 0h1m1 0h2m2 0h6m1 0h2m2 0h1m2 0h1m1 0h1m1 0h1m1 0h1m1 0h4m1 0h2m1 0h2m1 0h3m1 0h3m1 0h2m3 0h2m2 0h1m4 0h2m2 0h2m3 0h4m1 0h1m3 0h2m2 0h4m6 0h1m2 0h1m2 0h3m2 0h5m2 0h5m3 0h1m3 0h1m5 0h3m2 0h1m1 0h3m1 0h1m1 0h1m1 0h1m1 0h1m3 0h2m2 0h7m3 0h2m2 0h2m1 0h6m1 0h1m4 0h3m1 0h1m6 0h1m1 0h1m5 0h2m1 0h2m1 0h1m1 0h1m1 0h12m9 0h1m1 0h2m1 0h2m5 0h1m2 0h1m1 0h1m2 0h1m2 0h6m2 0h1m1 0h4M1 55.5h1m9 0h1m7 0h1m3 0h1m9 0h3m1 0h1m42 0h2m2 0h7m3 0h1m1 0h1m5 0h2m1 0h1m1 0h3m1 0h2m1 0h3m3 0h1m4 0h2m1 0h1m1 0h4m1 0h1m1 0h4m1 0h4m1 0h1m2 0h1m1 0h4m1 0h1m3 0h1m1 0h2m4 0h4m1 0h2m2 0h2m2 0h1m3 0h2m1 0h1m1 0h1m2 0h1m3 0h1m1 0h1m1 0h2m1 0h1m1 0h1m1 0h1m2 0h1m1 0h3m1 0h2m1 0h3m2 0h1m1 0h1m1 0h1m1 0h1m1 0h6m2 0h2m12 0h3m1 0h1m1 0h2m2 0h1m1 0h1m1 0h4m1 0h1m3 0h1m3 0h2m3 0h2m4 0h5m1 0h3m1 0h6m2 0h1m1 0h1m1 0h1m4 0h1m2 0h1m3 0h1m1 0h4m1 0h3m1 0h4m4 0h1m1 0h1m1 0h1m1 0h2m6 0h2m1 0h3m2 0h2m2 0h4m1 0h1m3 0h2m1 0h3m2 0h2m2 0h1m1 0h3m1 0h1m3 0h2m1 0h1m3 0h3m2 0h2m2 0h1m3 0h1M1 56.5h1m9 0h1m7 0h1m3 0h1m9 0h4m43 0h1m2 0h2m4 0h2m6 0h2m1 0h3m1 0h4m1 0h4m1 0h3m1 0h5m3 0h1m2 0h5m2 0h2m1 0h1m3 0h1m1 0h1m2 0h1m2 0h4m1 0h1m3 0h1m1 0h2m1 0h7m1 0h4m1 0h1m1 0h2m2 0h1m1 0h8m1 0h4m1 0h2m2 0h7m1 0h2m1 0h1m1 0h2m1 0h1m1 0h1m6 0h1m1 0h1m1 0h1m2 0h1m1 0h3m1 0h1m4 0h1m3 0h1m3 0h1m1 0h1m1 0h1m1 0h1m3 0h1m4 0h2m2 0h4m1 0h2m7 0h1m3 0h1m3 0h3m1 0h2m5 0h1m4 0h2m1 0h2m2 0h3m4 0h1m2 0h3m1 0h2m2 0h1m2 0h1m2 0h2m3 0h2m1 0h2m4 0h1m3 0h1m1 0h1m2 0h1m1 0h1m2 0h1m3 0h1m1 0h1m2 0h1m2 0h1m2 0h2m2 0h8m2 0h1m2 0h1m7 0h3m1 0h3m1 0h2m1 0h2m1 0h1M1 57.5h1m9 0h1m7 0h1m3 0h1m9 0h5m44 0h1m1 0h5m1 0h1m1 0h2m2 0h1m1 0h3m4 0h1m1 0h1m3 0h4m1 0h3m6 0h10m2 0h3m2 0h1m1 0h1m2 0h3m1 0h7m1 0h1m1 0h1m1 0h4m2 0h1m1 0h2m1 0h1m1 0h4m1 0h5m1 0h3m1 0h5m2 0h1m3 0h1m1 0h2m1 0h4m1 0h2m1 0h1m1 0h1m1 0h2m1 0h1m3 0h1m1 0h1m1 0h3m3 0h2m1 0h2m2 0h1m4 0h1m7 0h2m1 0h4m1 0h7m1 0h2m2 0h1m1 0h1m1 0h1m2 0h4m1 0h1m3 0h3m3 0h2m3 0h5m2 0h1m4 0h1m4 0h1m3 0h6m7 0h2m1 0h1m3 0h1m1 0h1m1 0h1m3 0h8m3 0h1m2 0h1m4 0h3m1 0h1m3 0h5m1 0h1m1 0h1m3 0h2m1 0h7m1 0h1m3 0h2m1 0h1m2 0h8m1 0h1m3 0h1M1 58.5h1m9 0h1m7 0h1m3 0h1m8 0h1m47 0h2m4 0h2m3 0h2m1 0h1m1 0h2m3 0h2m1 0h1m1 0h1m2 0h2m2 0h2m2 0h2m1 0h2m4 0h1m1 0h1m1 0h1m1 0h1m3 0h4m2 0h2m2 0h2m1 0h1m1 0h2m3 0h1m2 0h2m3 0h2m1 0h1m5 0h1m1 0h2m1 0h1m1 0h1m8 0h1m2 0h2m1 0h1m1 0h3m2 0h3m1 0h1m1 0h6m1 0h4m1 0h1m3 0h1m2 0h1m2 0h4m2 0h1m1 0h2m6 0h3m2 0h1m3 0h1m2 0h2m1 0h5m1 0h1m1 0h2m1 0h6m4 0h2m3 0h2m5 0h4m2 0h1m1 0h1m2 0h1m3 0h2m3 0h2m3 0h1m3 0h4m1 0h1m1 0h4m3 0h2m2 0h3m1 0h1m1 0h1m2 0h2m1 0h1m3 0h1m2 0h1m2 0h3m3 0h1m5 0h1m1 0h2m1 0h2m1 0h1m3 0h1m1 0h1m1 0h1m1 0h1m2 0h4m3 0h1m1 0h1m2 0h1m1 0h2m1 0h1m1 0h1m5 0h1M1 59.5h1m9 0h1m7 0h1m3 0h1m8 0h1m4 0h1m44 0h1m1 0h6m4 0h1m4 0h1m5 0h1m1 0h1m1 0h2m1 0h3m1 0h5m1 0h1m2 0h1m1 0h2m1 0h2m1 0h3m1 0h3m2 0h1m1 0h2m2 0h1m2 0h1m1 0h5m3 0h3m2 0h1m2 0h2m1 0h1m4 0h1m1 0h1m2 0h1m2 0h3m1 0h1m1 0h1m1 0h1m1 0h2m2 0h1m2 0h4m1 0h1m1 0h1m1 0h2m1 0h3m1 0h2m2 0h3m1 0h1m1 0h1m3 0h4m1 0h1m1 0h1m1 0h1m1 0h2m11 0h1m1 0h1m2 0h1m1 0h1m4 0h3m2 0h1m1 0h1m1 0h4m1 0h1m1 0h2m2 0h2m1 0h2m1 0h1m2 0h2m3 0h1m1 0h6m1 0h2m1 0h1m3 0h1m1 0h3m3 0h1m5 0h1m1 0h1m1 0h6m1 0h2m1 0h1m1 0h1m1 0h4m1 0h6m1 0h2m2 0h1m6 0h1m1 0h6m2 0h1m4 0h1m2 0h1m1 0h3m1 0h1m2 0h1m1 0h1m3 0h1m1 0h5m1 0h3m1 0h2m3 0h1m2 0h2M1 60.5h1m9 0h1m7 0h1m3 0h1m8 0h1m3 0h1m43 0h3m1 0h1m1 0h2m1 0h1m1 0h2m1 0h1m1 0h2m1 0h1m1 0h1m2 0h1m4 0h2m1 0h4m1 0h1m1 0h1m1 0h2m3 0h3m1 0h1m5 0h3m1 0h1m2 0h1m1 0h2m2 0h2m1 0h1m3 0h1m2 0h1m1 0h2m1 0h1m3 0h3m2 0h2m1 0h1m1 0h1m1 0h2m1 0h1m1 0h11m1 0h5m1 0h7m1 0h3m1 0h4m1 0h1m1 0h1m4 0h1m1 0h5m3 0h2m1 0h1m4 0h1m4 0h1m4 0h1m2 0h2m1 0h1m3 0h1m2 0h1m1 0h1m1 0h3m2 0h1m2 0h1m4 0h5m4 0h1m2 0h3m6 0h3m1 0h1m1 0h1m7 0h1m1 0h1m3 0h3m1 0h3m4 0h4m1 0h1m3 0h1m1 0h1m1 0h2m5 0h1m1 0h5m1 0h2m1 0h4m1 0h1m6 0h3m2 0h1m2 0h3m1 0h2m5 0h2m1 0h1m2 0h1m3 0h2m3 0h2m2 0h4m3 0h3M1 61.5h1m9 0h1m7 0h1m3 0h1m8 0h1m3 0h2m27 0h1m2 0h2m1 0h1m9 0h2m1 0h4m6 0h1m1 0h1m1 0h3m1 0h2m1 0h1m1 0h1m2 0h1m1 0h1m1 0h3m3 0h1m1 0h1m2 0h3m2 0h3m2 0h1m2 0h3m1 0h1m1 0h2m1 0h2m1 0h1m2 0h1m1 0h1m1 0h2m1 0h1m2 0h2m1 0h2m1 0h1m1 0h2m1 0h2m6 0h1m1 0h2m1 0h1m1 0h1m1 0h1m3 0h1m1 0h1m1 0h1m2 0h1m1 0h2m3 0h1m1 0h1m1 0h4m1 0h2m1 0h1m6 0h1m2 0h3m1 0h2m2 0h1m2 0h2m13 0h4m1 0h7m1 0h1m1 0h2m2 0h1m3 0h1m3 0h1m1 0h3m1 0h3m3 0h5m1 0h1m2 0h3m2 0h3m2 0h3m2 0h3m1 0h2m2 0h2m5 0h4m4 0h5m3 0h3m2 0h1m3 0h2m2 0h1m2 0h1m2 0h3m4 0h3m1 0h3m3 0h1m3 0h1m4 0h1m1 0h4m1 0h2m2 0h4m2 0h2m3 0h2m1 0h1m2 0h4M1 62.5h1m9 0h1m7 0h1m3 0h1m8 0h1m2 0h1m44 0h1m2 0h2m1 0h3m1 0h1m3 0h1m6 0h1m2 0h3m1 0h8m3 0h1m1 0h2m3 0h1m1 0h1m2 0h2m3 0h2m5 0h1m1 0h1m3 0h1m1 0h3m5 0h2m1 0h2m3 0h4m2 0h1m4 0h1m2 0h1m1 0h5m1 0h1m1 0h1m3 0h3m1 0h3m1 0h9m5 0h1m2 0h1m1 0h1m1 0h1m2 0h1m1 0h3m1 0h1m2 0h1m1 0h1m1 0h1m2 0h1m2 0h1m2 0h1m2 0h1m1 0h2m3 0h1m1 0h3m1 0h1m3 0h1m2 0h2m5 0h2m1 0h2m6 0h5m1 0h1m4 0h1m2 0h1m1 0h3m1 0h2m2 0h2m3 0h1m2 0h1m1 0h10m5 0h1m1 0h3m1 0h2m3 0h1m1 0h4m1 0h2m1 0h1m3 0h2m1 0h3m1 0h1m2 0h1m4 0h1m3 0h1m10 0h1m1 0h2m2 0h1m1 0h4m1 0h4m2 0h1m2 0h1m2 0h3m3 0h2M1 63.5h1m9 0h1m7 0h1m3 0h1m8 0h1m2 0h1m1 0h1m46 0h5m3 0h1m1 0h1m1 0h1m1 0h1m1 0h1m2 0h1m1 0h1m1 0h2m2 0h1m4 0h1m1 0h2m2 0h1m2 0h2m4 0h3m1 0h1m1 0h1m4 0h1m1 0h1m2 0h2m2 0h8m4 0h1m2 0h3m2 0h2m1 0h1m3 0h2m2 0h2m2 0h1m2 0h1m1 0h2m1 0h3m4 0h7m4 0h4m3 0h2m1 0h2m1 0h1m1 0h2m1 0h1m1 0h1m1 0h2m2 0h4m1 0h1m12 0h3m1 0h4m1 0h2m2 0h1m4 0h1m2 0h2m2 0h3m5 0h1m1 0h1m2 0h2m2 0h1m3 0h8m2 0h1m1 0h1m1 0h1m1 0h5m2 0h1m1 0h1m2 0h2m1 0h1m1 0h3m1 0h6m2 0h1m2 0h4m2 0h1m3 0h5m1 0h1m1 0h1m1 0h1m1 0h1m1 0h1m3 0h5m5 0h1m3 0h3m1 0h1m1 0h2m2 0h1m3 0h6m1 0h1m1 0h1m1 0h1m4 0h3m1 0h1M1 64.5h1m9 0h1m7 0h1m3 0h1m8 0h1m2 0h2m44 0h2m1 0h1m1 0h3m1 0h3m1 0h1m1 0h6m3 0h2m1 0h1m1 0h1m1 0h1m1 0h1m1 0h2m2 0h3m5 0h2m3 0h2m1 0h3m1 0h1m2 0h1m1 0h1m3 0h2m1 0h2m3 0h5m1 0h2m1 0h2m2 0h1m3 0h1m3 0h1m1 0h2m1 0h1m1 0h3m6 0h4m1 0h1m1 0h1m2 0h6m1 0h3m3 0h2m1 0h1m1 0h1m4 0h1m1 0h4m1 0h3m1 0h1m1 0h2m1 0h1m12 0h2m1 0h2m3 0h2m2 0h2m4 0h1m2 0h4m2 0h1m1 0h1m1 0h2m3 0h1m2 0h4m1 0h2m1 0h1m4 0h1m1 0h3m4 0h4m2 0h1m2 0h1m1 0h2m1 0h4m1 0h3m1 0h1m1 0h1m1 0h1m8 0h1m1 0h4m2 0h1m2 0h2m2 0h2m6 0h5m2 0h1m1 0h2m1 0h1m2 0h1m3 0h4m1 0h1m2 0h2m2 0h1m3 0h1m2 0h2m1 0h7m1 0h1M1 65.5h1m9 0h1m7 0h1m3 0h1m8 0h1m2 0h3m42 0h1m3 0h5m1 0h1m5 0h1m2 0h2m1 0h2m1 0h1m1 0h1m1 0h2m1 0h3m1 0h2m1 0h2m1 0h1m2 0h4m3 0h1m1 0h3m1 0h3m1 0h3m3 0h1m2 0h1m1 0h6m1 0h3m3 0h4m2 0h1m1 0h1m1 0h1m8 0h1m1 0h2m2 0h5m1 0h5m1 0h14m1 0h3m1 0h1m2 0h4m1 0h1m2 0h1m1 0h2m2 0h1m2 0h2m12 0h1m1 0h1m2 0h1m1 0h2m2 0h1m1 0h2m1 0h1m2 0h1m3 0h1m7 0h1m4 0h3m3 0h2m1 0h2m5 0h3m1 0h1m4 0h1m1 0h2m2 0h2m1 0h1m1 0h3m1 0h3m2 0h2m1 0h3m2 0h1m1 0h1m3 0h1m1 0h3m1 0h1m3 0h4m1 0h1m2 0h1m3 0h2m1 0h1m1 0h1m2 0h3m1 0h1m1 0h1m4 0h1m4 0h1m4 0h1m1 0h2m3 0h1m1 0h1m2 0h2m1 0h2m2 0h1m1 0h1m1 0h1M1 66.5h1m9 0h1m7 0h1m3 0h1m8 0h1m1 0h1m45 0h2m1 0h2m1 0h1m3 0h5m2 0h1m1 0h1m1 0h1m2 0h1m1 0h1m4 0h1m1 0h1m2 0h1m3 0h3m3 0h2m1 0h2m5 0h1m1 0h1m1 0h2m1 0h1m1 0h1m10 0h6m2 0h2m1 0h8m2 0h2m2 0h1m2 0h1m1 0h6m1 0h1m3 0h1m1 0h1m2 0h5m3 0h1m2 0h1m1 0h4m1 0h1m4 0h1m3 0h2m1 0h2m2 0h4m2 0h1m14 0h1m1 0h2m2 0h1m1 0h2m4 0h1m1 0h3m3 0h3m1 0h3m3 0h1m2 0h1m1 0h1m1 0h1m1 0h1m2 0h1m2 0h2m4 0h3m1 0h4m1 0h4m1 0h3m2 0h4m2 0h1m3 0h3m1 0h1m4 0h1m2 0h1m4 0h2m2 0h3m8 0h1m1 0h4m2 0h1m2 0h1m2 0h2m1 0h4m2 0h1m4 0h2m2 0h5m1 0h3m2 0h1m2 0h3m3 0h1m2 0h2M1 67.5h1m9 0h1m7 0h1m3 0h1m8 0h1m1 0h1m2 0h1m43 0h1m3 0h1m2 0h1m10 0h1m2 0h1m4 0h1m1 0h1m1 0h2m1 0h7m1 0h1m2 0h1m1 0h4m1 0h2m1 0h1m1 0h3m2 0h2m2 0h3m2 0h6m1 0h1m2 0h3m1 0h2m2 0h1m1 0h2m6 0h1m4 0h1m1 0h1m2 0h4m1 0h2m2 0h3m2 0h3m3 0h1m3 0h3m1 0h2m2 0h1m1 0h2m1 0h1m1 0h1m1 0h1m2 0h4m1 0h2m2 0h2m12 0h5m1 0h5m6 0h4m3 0h1m3 0h1m2 0h1m2 0h1m3 0h2m2 0h1m7 0h1m1 0h1m2 0h1m1 0h3m2 0h2m1 0h1m8 0h2m1 0h2m1 0h1m1 0h1m4 0h1m4 0h3m1 0h2m1 0h1m1 0h3m2 0h2m2 0h1m1 0h2m1 0h2m1 0h1m1 0h1m4 0h1m4 0h2m2 0h1m1 0h1m1 0h1m1 0h3m1 0h1m3 0h1m1 0h2m1 0h1m2 0h2m1 0h2m1 0h1m1 0h4m3 0h1M1 68.5h1m9 0h1m7 0h1m3 0h1m8 0h1m1 0h1m1 0h1m43 0h1m2 0h1m2 0h2m2 0h2m2 0h1m2 0h2m1 0h5m1 0h1m2 0h3m3 0h1m1 0h1m1 0h5m2 0h1m1 0h1m1 0h2m1 0h1m2 0h6m4 0h4m1 0h2m3 0h1m1 0h3m3 0h1m2 0h2m4 0h3m4 0h2m2 0h2m1 0h1m1 0h2m1 0h3m2 0h1m2 0h1m1 0h1m1 0h5m1 0h2m1 0h1m3 0h1m2 0h4m3 0h1m1 0h1m1 0h1m1 0h1m1 0h4m2 0h1m1 0h1m12 0h3m2 0h5m2 0h1m2 0h1m2 0h4m4 0h2m2 0h2m1 0h2m2 0h4m2 0h1m2 0h2m3 0h1m1 0h4m2 0h2m1 0h3m3 0h3m2 0h1m1 0h2m1 0h1m3 0h2m1 0h3m1 0h1m4 0h1m1 0h10m1 0h1m3 0h1m2 0h1m2 0h1m1 0h1m3 0h1m5 0h1m1 0h1m1 0h2m1 0h2m1 0h3m1 0h1m1 0h1m3 0h2m3 0h1m1 0h1m2 0h1m4 0h5M1 69.5h1m9 0h1m7 0h1m3 0h1m8 0h1m1 0h1m1 0h2m27 0h1m2 0h2m1 0h1m9 0h8m2 0h2m4 0h3m2 0h1m2 0h1m2 0h1m2 0h4m1 0h3m1 0h1m1 0h2m1 0h4m3 0h2m1 0h1m1 0h2m1 0h1m1 0h1m1 0h1m2 0h2m2 0h1m3 0h4m2 0h4m3 0h2m1 0h2m4 0h2m6 0h3m1 0h1m1 0h2m1 0h1m1 0h1m1 0h3m2 0h2m2 0h1m2 0h4m1 0h2m2 0h1m3 0h1m1 0h2m3 0h2m1 0h1m1 0h2m2 0h5m12 0h3m1 0h1m5 0h1m1 0h1m1 0h3m1 0h1m5 0h1m1 0h1m1 0h1m6 0h2m1 0h2m2 0h1m2 0h3m2 0h3m1 0h2m4 0h3m1 0h3m2 0h1m2 0h1m1 0h1m1 0h3m3 0h2m1 0h1m1 0h7m1 0h1m1 0h1m1 0h5m1 0h1m3 0h2m1 0h4m4 0h1m3 0h4m5 0h3m1 0h1m2 0h1m2 0h2m2 0h3m5 0h2m2 0h1m3 0h4m2 0h2M1 70.5h1m9 0h1m7 0h1m3 0h1m8 0h1m1 0h2m44 0h2m1 0h1m2 0h3m1 0h4m2 0h2m1 0h3m2 0h1m1 0h1m4 0h3m1 0h1m3 0h2m2 0h1m2 0h3m3 0h1m1 0h1m3 0h3m2 0h1m5 0h1m1 0h4m2 0h1m1 0h2m2 0h2m1 0h1m1 0h4m1 0h2m2 0h2m2 0h2m2 0h5m1 0h2m1 0h6m2 0h1m1 0h6m1 0h1m1 0h1m1 0h1m1 0h1m2 0h1m1 0h2m5 0h5m4 0h3m2 0h1m12 0h3m1 0h1m1 0h2m3 0h2m3 0h1m2 0h2m1 0h2m1 0h1m2 0h2m1 0h5m1 0h1m2 0h3m2 0h2m1 0h1m3 0h2m4 0h1m1 0h2m3 0h2m2 0h4m1 0h4m3 0h3m1 0h1m4 0h1m2 0h2m2 0h1m6 0h3m3 0h3m1 0h4m1 0h1m1 0h4m5 0h4m1 0h1m1 0h1m1 0h2m1 0h1m1 0h1m1 0h1m1 0h1m1 0h1m1 0h1m2 0h2m2 0h1m2 0h1m6 0h1M1 71.5h1m9 0h1m7 0h1m3 0h1m8 0h1m1 0h2m1 0h1m42 0h2m2 0h7m2 0h7m3 0h1m1 0h1m1 0h1m2 0h1m1 0h1m1 0h4m2 0h1m2 0h1m1 0h2m3 0h2m1 0h1m4 0h1m3 0h5m1 0h1m6 0h4m3 0h3m1 0h1m2 0h1m2 0h3m3 0h2m2 0h6m1 0h1m5 0h1m2 0h1m1 0h1m3 0h2m3 0h2m3 0h3m2 0h2m1 0h5m1 0h1m1 0h1m1 0h3m1 0h1m1 0h3m1 0h2m15 0h1m1 0h2m2 0h1m1 0h3m1 0h3m8 0h4m2 0h2m1 0h2m1 0h3m1 0h6m1 0h1m1 0h1m2 0h1m1 0h3m2 0h2m1 0h1m1 0h1m2 0h3m1 0h1m1 0h1m3 0h1m4 0h2m5 0h1m1 0h3m2 0h3m1 0h2m2 0h2m1 0h2m1 0h1m2 0h1m2 0h1m1 0h2m1 0h1m1 0h2m4 0h2m1 0h2m1 0h2m1 0h2m3 0h3m1 0h2m6 0h1m1 0h2m2 0h1m7 0h1M1 72.5h1m9 0h1m7 0h1m3 0h1m8 0h1m1 0h3m43 0h2m1 0h1m2 0h3m1 0h2m1 0h2m1 0h1m1 0h4m2 0h1m1 0h1m2 0h3m4 0h1m2 0h3m1 0h1m2 0h3m3 0h3m1 0h5m1 0h1m6 0h1m1 0h6m1 0h3m1 0h2m1 0h1m1 0h4m2 0h6m1 0h1m5 0h1m1 0h4m4 0h5m2 0h7m1 0h2m3 0h3m1 0h1m6 0h1m1 0h1m1 0h1m5 0h1m2 0h1m17 0h3m3 0h6m1 0h1m2 0h1m1 0h2m3 0h5m2 0h5m3 0h2m2 0h1m2 0h4m1 0h1m3 0h1m1 0h3m4 0h1m3 0h2m1 0h3m1 0h1m1 0h3m4 0h4m1 0h1m1 0h1m1 0h1m2 0h1m8 0h3m1 0h2m2 0h1m1 0h3m4 0h2m1 0h2m1 0h1m1 0h1m3 0h2m1 0h1m2 0h2m3 0h1m3 0h1m2 0h1m2 0h1m1 0h2m3 0h5m1 0h1m1 0h1M1 73.5h1m9 0h1m7 0h1m3 0h1m8 0h1m1 0h4m46 0h1m1 0h2m4 0h1m1 0h3m2 0h1m5 0h1m1 0h1m3 0h1m1 0h2m1 0h2m1 0h1m3 0h1m1 0h8m4 0h3m3 0h2m1 0h3m2 0h1m5 0h2m2 0h3m1 0h1m3 0h1m1 0h5m2 0h1m1 0h1m2 0h1m1 0h1m1 0h2m2 0h3m1 0h2m1 0h2m1 0h5m6 0h4m3 0h2m1 0h2m1 0h2m1 0h1m1 0h1m1 0h2m1 0h2m4 0h1m1 0h1m12 0h4m2 0h2m3 0h1m2 0h1m1 0h1m1 0h1m2 0h6m3 0h1m3 0h1m1 0h1m1 0h2m1 0h2m7 0h3m1 0h1m1 0h1m2 0h1m1 0h1m1 0h4m2 0h2m2 0h3m3 0h2m4 0h4m1 0h2m1 0h1m2 0h1m1 0h4m1 0h1m3 0h2m2 0h1m2 0h2m1 0h2m1 0h6m4 0h3m2 0h1m1 0h1m1 0h1m1 0h5m1 0h1m1 0h1m5 0h1m2 0h2m1 0h2m2 0h5M1 74.5h1m9 0h1m7 0h1m3 0h1m8 0h2m46 0h1m2 0h1m2 0h1m3 0h1m1 0h1m1 0h1m4 0h1m4 0h1m1 0h1m2 0h4m1 0h1m2 0h4m2 0h1m2 0h1m5 0h2m2 0h3m1 0h1m4 0h2m2 0h5m2 0h5m2 0h3m1 0h4m5 0h1m3 0h1m3 0h1m1 0h4m1 0h3m1 0h2m1 0h1m2 0h1m1 0h1m1 0h1m1 0h2m3 0h1m2 0h1m4 0h4m3 0h1m1 0h4m2 0h2m1 0h4m3 0h1m1 0h3m2 0h1m1 0h1m3 0h1m2 0h1m1 0h3m4 0h1m1 0h6m4 0h1m2 0h2m1 0h1m2 0h1m2 0h3m1 0h1m7 0h1m7 0h5m1 0h1m1 0h1m3 0h1m1 0h7m1 0h1m1 0h1m1 0h4m1 0h2m1 0h1m1 0h1m3 0h1m3 0h2m1 0h5m1 0h3m1 0h1m2 0h2m4 0h3m5 0h1m1 0h3m1 0h1m2 0h2m4 0h1m1 0h3m1 0h1m2 0h1m2 0h1m4 0h2m1 0h2m2 0h1M1 75.5h1m9 0h1m7 0h1m3 0h1m8 0h2m3 0h1m44 0h1m3 0h3m1 0h1m4 0h1m3 0h2m1 0h1m1 0h2m1 0h2m1 0h1m2 0h1m1 0h2m1 0h3m1 0h2m1 0h3m2 0h1m1 0h1m2 0h1m2 0h2m3 0h1m4 0h2m2 0h6m3 0h1m1 0h2m1 0h1m2 0h1m1 0h4m4 0h2m1 0h2m1 0h3m1 0h1m1 0h1m1 0h4m1 0h3m1 0h1m1 0h2m1 0h1m1 0h1m4 0h3m1 0h2m1 0h3m2 0h3m1 0h1m1 0h1m2 0h1m2 0h2m3 0h1m8 0h2m3 0h2m5 0h2m2 0h2m2 0h1m1 0h1m2 0h1m3 0h2m1 0h1m3 0h1m3 0h2m2 0h1m1 0h1m1 0h2m2 0h2m4 0h1m1 0h1m3 0h1m1 0h2m2 0h5m2 0h1m1 0h1m2 0h2m2 0h2m2 0h2m1 0h2m5 0h3m2 0h1m1 0h1m3 0h3m3 0h2m2 0h2m4 0h5m4 0h2m2 0h2m3 0h1m1 0h1m4 0h1m3 0h2m1 0h1m1 0h3m1 0h1m2 0h6M1 76.5h1m9 0h1m7 0h1m3 0h1m8 0h2m2 0h1m43 0h2m2 0h1m1 0h2m2 0h3m1 0h1m2 0h6m1 0h1m1 0h1m3 0h5m4 0h1m1 0h1m1 0h1m2 0h2m3 0h9m2 0h1m6 0h1m1 0h9m3 0h3m1 0h4m7 0h1m1 0h2m3 0h4m1 0h2m1 0h1m1 0h3m2 0h2m2 0h6m1 0h2m3 0h1m4 0h3m3 0h1m3 0h2m2 0h4m2 0h3m1 0h1m1 0h4m1 0h1m5 0h1m1 0h1m3 0h1m1 0h4m1 0h3m2 0h1m1 0h1m2 0h1m2 0h5m3 0h2m2 0h1m3 0h4m1 0h5m1 0h1m1 0h1m2 0h1m1 0h1m1 0h3m1 0h1m3 0h1m1 0h1m1 0h3m3 0h4m1 0h4m1 0h2m1 0h1m3 0h2m2 0h3m2 0h1m2 0h2m2 0h2m1 0h1m5 0h1m7 0h2m1 0h1m4 0h6m2 0h1m3 0h1m2 0h2m1 0h6m2 0h2m1 0h1m1 0h1M1 78.5h1m9 0h1m7 0h1m3 0h1m8 0h2m1 0h1m44 0h1m2 0h2m1 0h1m1 0h1m1 0h1m2 0h1m1 0h2m1 0h1m5 0h12m2 0h6m2 0h3m1 0h2m4 0h3m1 0h1m1 0h1m3 0h1m4 0h2m1 0h1m1 0h1m1 0h3m1 0h2m1 0h1m1 0h2m1 0h1m4 0h1m1 0h2m2 0h2m4 0h3m1 0h1m1 0h2m1 0h3m1 0h1m3 0h2m1 0h2m6 0h1m1 0h1m1 0h2m1 0h1m6 0h2m1 0h2m1 0h1m3 0h4m3 0h2m3 0h2m1 0h2m3 0h1m2 0h1m3 0h4m5 0h4m5 0h7m2 0h1m1 0h1m1 0h4m1 0h1m8 0h1m2 0h1m1 0h1m2 0h1m4 0h1m1 0h1m2 0h1m2 0h1m1 0h2m2 0h1m2 0h4m3 0h1m2 0h3m4 0h1m1 0h2m1 0h1m4 0h1m1 0h3m2 0h3m2 0h3m2 0h2m2 0h3m1 0h1m1 0h1m3 0h1m3 0h1m2 0h2m1 0h1m3 0h1m2 0h1m2 0h2m1 0h4m1 0h1M1 79.5h1m9 0h1m7 0h1m3 0h1m8 0h2m1 0h1m1 0h1m43 0h1m2 0h5m3 0h1m3 0h3m3 0h1m2 0h1m1 0h3m2 0h1m1 0h3m2 0h1m2 0h2m1 0h5m1 0h1m1 0h1m1 0h1m1 0h9m1 0h1m4 0h4m2 0h1m3 0h3m1 0h1m2 0h1m2 0h1m1 0h1m1 0h4m3 0h1m1 0h2m2 0h1m1 0h2m1 0h2m1 0h1m1 0h2m1 0h4m6 0h1m1 0h3m1 0h9m1 0h1m1 0h1m1 0h3m1 0h1m1 0h2m2 0h2m7 0h1m7 0h1m1 0h2m1 0h2m2 0h1m3 0h1m2 0h3m1 0h2m3 0h3m1 0h2m2 0h2m2 0h6m1 0h1m1 0h1m3 0h1m1 0h1m1 0h2m1 0h3m1 0h1m6 0h1m3 0h1m9 0h4m2 0h1m1 0h2m2 0h2m3 0h1m1 0h5m5 0h1m2 0h2m1 0h1m3 0h1m1 0h1m2 0h3m1 0h4m1 0h1m1 0h1m3 0h2m1 0h2m1 0h1m3 0h1m4 0h1m5 0h1m1 0h1m2 0h2M1 80.5h1m9 0h1m7 0h1m3 0h1m8 0h2m1 0h2m43 0h2m1 0h1m2 0h1m4 0h1m1 0h1m5 0h1m1 0h2m1 0h1m1 0h1m3 0h2m5 0h1m1 0h1m1 0h3m2 0h1m1 0h7m1 0h1m1 0h1m1 0h2m3 0h1m1 0h1m1 0h1m2 0h3m1 0h5m2 0h3m1 0h2m1 0h1m2 0h1m4 0h1m1 0h1m4 0h1m1 0h1m1 0h1m2 0h2m1 0h3m1 0h3m1 0h2m2 0h2m1 0h1m2 0h1m1 0h1m2 0h5m6 0h3m1 0h1m1 0h2m2 0h1m5 0h3m2 0h1m2 0h2m1 0h2m2 0h2m3 0h1m6 0h1m1 0h2m1 0h2m1 0h2m1 0h3m1 0h3m3 0h1m6 0h4m1 0h1m1 0h2m4 0h1m2 0h4m1 0h4m1 0h1m1 0h1m1 0h1m1 0h2m1 0h2m2 0h1m1 0h1m3 0h3m1 0h9m2 0h1m2 0h1m5 0h3m3 0h1m1 0h1m2 0h1m2 0h1m1 0h2m2 0h1m1 0h2m2 0h1m1 0h2m1 0h1m1 0h2m4 0h7m1 0h1m2 0h1m3 0h5M1 81.5h1m9 0h1m7 0h1m3 0h1m8 0h2m1 0h3m43 0h1m2 0h4m4 0h1m1 0h1m2 0h1m2 0h1m1 0h2m1 0h1m1 0h1m1 0h2m1 0h1m3 0h8m1 0h7m1 0h3m1 0h1m1 0h1m2 0h4m1 0h3m4 0h2m1 0h2m2 0h3m4 0h1m2 0h2m1 0h1m3 0h2m2 0h2m2 0h3m2 0h1m2 0h3m1 0h3m2 0h3m7 0h4m1 0h2m4 0h1m1 0h1m1 0h1m6 0h3m1 0h1m2 0h2m2 0h1m9 0h2m1 0h1m7 0h3m1 0h2m1 0h1m2 0h1m1 0h2m1 0h2m2 0h2m1 0h1m1 0h3m1 0h2m3 0h1m1 0h1m3 0h1m4 0h4m3 0h5m2 0h1m3 0h1m2 0h2m1 0h2m3 0h2m4 0h5m2 0h2m3 0h1m1 0h1m3 0h1m1 0h2m1 0h1m1 0h2m1 0h2m4 0h2m3 0h3m2 0h1m3 0h1m1 0h1m1 0h1m1 0h4m2 0h3m2 0h1m3 0h2m1 0h1m1 0h1m2 0h3M1 82.5h1m9 0h1m7 0h1m3 0h1m8 0h3m45 0h9m2 0h3m1 0h10m1 0h1m4 0h1m1 0h1m1 0h2m1 0h2m1 0h2m1 0h1m2 0h4m1 0h2m2 0h5m1 0h1m2 0h1m1 0h1m3 0h2m1 0h1m1 0h1m1 0h3m1 0h1m1 0h1m4 0h2m4 0h2m3 0h3m4 0h2m1 0h3m2 0h4m2 0h2m1 0h3m1 0h2m1 0h1m3 0h2m1 0h1m2 0h1m4 0h2m1 0h1m1 0h2m3 0h1m1 0h1m1 0h1m1 0h1m16 0h2m2 0h1m1 0h1m1 0h2m1 0h2m3 0h4m1 0h1m3 0h3m2 0h1m1 0h1m4 0h1m2 0h2m2 0h2m1 0h1m1 0h3m4 0h4m1 0h2m1 0h1m3 0h1m2 0h3m2 0h3m2 0h1m1 0h1m1 0h2m1 0h1m2 0h1m1 0h1m1 0h1m1 0h1m3 0h5m1 0h1m1 0h2m1 0h1m2 0h1m3 0h4m3 0h2m2 0h4m1 0h2m1 0h2m1 0h1m1 0h1m4 0h1m1 0h2m1 0h1m1 0h2m1 0h3m1 0h2m2 0h1m1 0h1M1 83.5h1m9 0h1m7 0h1m3 0h1m8 0h3m2 0h1m43 0h2m4 0h2m4 0h2m4 0h2m4 0h1m1 0h1m1 0h2m1 0h1m1 0h1m1 0h2m4 0h1m1 0h2m1 0h9m2 0h1m1 0h4m2 0h1m1 0h1m3 0h2m1 0h4m6 0h1m3 0h1m1 0h2m5 0h2m1 0h2m1 0h1m6 0h2m1 0h3m2 0h2m1 0h4m5 0h1m1 0h2m1 0h1m2 0h2m1 0h2m2 0h1m3 0h3m2 0h4m2 0h2m13 0h1m2 0h2m4 0h1m1 0h1m1 0h2m1 0h2m1 0h1m2 0h1m1 0h3m5 0h1m2 0h1m2 0h1m3 0h1m5 0h1m2 0h1m1 0h1m4 0h3m8 0h2m1 0h2m1 0h4m5 0h1m2 0h1m10 0h1m1 0h1m2 0h2m2 0h1m2 0h1m2 0h2m1 0h1m1 0h3m3 0h2m1 0h1m1 0h3m2 0h1m2 0h2m8 0h2m2 0h1m1 0h2m6 0h2m4 0h1M1 84.5h1m9 0h1m7 0h1m3 0h1m8 0h3m1 0h1m43 0h2m1 0h1m6 0h1m1 0h1m1 0h2m1 0h1m1 0h1m1 0h1m1 0h2m1 0h1m3 0h6m1 0h3m1 0h1m2 0h1m2 0h6m1 0h1m1 0h5m1 0h1m2 0h2m1 0h2m2 0h3m1 0h1m1 0h3m1 0h9m2 0h2m1 0h1m1 0h1m1 0h2m1 0h1m4 0h1m2 0h2m3 0h4m1 0h1m2 0h7m6 0h1m4 0h1m3 0h2m1 0h1m1 0h2m1 0h1m1 0h1m1 0h1m2 0h2m13 0h1m3 0h1m1 0h1m1 0h2m8 0h1m1 0h4m1 0h4m3 0h5m3 0h1m1 0h1m4 0h5m2 0h2m1 0h1m6 0h1m3 0h1m1 0h1m1 0h1m2 0h1m1 0h2m2 0h1m3 0h1m4 0h1m2 0h2m1 0h1m3 0h1m2 0h1m1 0h4m1 0h2m2 0h1m2 0h1m5 0h5m3 0h1m1 0h3m2 0h1m4 0h2m1 0h4m1 0h1m3 0h1m3 0h2m1 0h3m1 0h2m1 0h1M1 85.5h1m9 0h1m7 0h1m3 0h1m8 0h3m1 0h2m43 0h2m2 0h4m3 0h1m1 0h1m1 0h1m1 0h2m1 0h1m1 0h2m2 0h6m1 0h3m1 0h1m5 0h3m1 0h1m2 0h1m1 0h3m2 0h3m2 0h2m3 0h2m2 0h1m1 0h6m2 0h2m2 0h1m2 0h1m1 0h2m1 0h1m3 0h3m1 0h1m3 0h1m1 0h2m1 0h3m4 0h5m1 0h2m3 0h1m3 0h1m1 0h1m1 0h3m3 0h4m1 0h1m3 0h9m1 0h2m15 0h6m2 0h3m1 0h1m2 0h2m1 0h1m1 0h1m2 0h2m3 0h3m1 0h2m4 0h2m2 0h2m1 0h2m4 0h3m6 0h2m5 0h4m2 0h2m5 0h1m1 0h1m3 0h1m1 0h4m2 0h1m3 0h1m2 0h2m1 0h1m2 0h1m1 0h1m1 0h1m1 0h6m2 0h4m4 0h1m3 0h3m1 0h1m1 0h1m1 0h2m1 0h1m3 0h1m2 0h1m2 0h1m2 0h1m1 0h1m1 0h1m5 0h1M1 86.5h1m9 0h1m7 0h1m3 0h1m8 0h4m44 0h2m1 0h1m1 0h1m1 0h2m1 0h2m1 0h3m1 0h1m3 0h2m1 0h3m1 0h2m1 0h2m1 0h1m1 0h1m4 0h1m2 0h1m1 0h3m1 0h1m1 0h1m3 0h1m1 0h4m1 0h1m1 0h2m2 0h1m2 0h2m2 0h1m2 0h7m1 0h4m2 0h1m1 0h2m3 0h2m3 0h2m1 0h1m1 0h2m2 0h8m2 0h2m1 0h3m2 0h1m4 0h2m2 0h2m1 0h1m2 0h1m1 0h1m2 0h3m1 0h1m1 0h1m18 0h2m4 0h2m4 0h1m6 0h3m1 0h2m1 0h1m2 0h1m2 0h1m1 0h3m3 0h1m1 0h2m1 0h1m3 0h4m1 0h2m1 0h5m1 0h3m7 0h1m2 0h2m3 0h2m1 0h1m1 0h3m2 0h1m3 0h3m1 0h2m2 0h2m3 0h1m1 0h2m1 0h3m3 0h2m1 0h1m1 0h1m4 0h5m3 0h7m3 0h1m1 0h1m2 0h1m3 0h1m3 0h1m1 0h2m1 0h4m1 0h1M1 87.5h1m9 0h1m7 0h1m3 0h1m8 0h4m1 0h1m43 0h2m1 0h2m1 0h2m1 0h1m1 0h5m2 0h2m2 0h1m1 0h1m1 0h5m2 0h1m1 0h1m1 0h3m1 0h1m1 0h3m5 0h2m1 0h1m1 0h1m1 0h2m1 0h3m2 0h2m2 0h3m1 0h3m3 0h7m1 0h1m1 0h2m1 0h1m3 0h2m2 0h1m2 0h1m2 0h2m1 0h2m1 0h2m3 0h2m1 0h2m1 0h1m1 0h1m4 0h1m1 0h2m2 0h2m2 0h3m1 0h1m1 0h1m4 0h1m1 0h2m1 0h2m1 0h3m13 0h2m1 0h2m2 0h1m2 0h2m5 0h2m2 0h2m1 0h2m1 0h1m2 0h1m1 0h2m1 0h2m3 0h1m2 0h3m1 0h6m1 0h1m1 0h1m3 0h2m1 0h3m3 0h1m2 0h3m1 0h2m1 0h1m3 0h5m1 0h2m3 0h5m2 0h2m1 0h2m1 0h3m2 0h1m1 0h3m2 0h1m1 0h3m1 0h1m3 0h1m1 0h1m1 0h5m6 0h1m2 0h5m1 0h1m1 0h2m3 0h2m3 0h2m1 0h1M1 88.5h1m9 0h1m7 0h1m3 0h1m8 0h5m43 0h1m1 0h5m1 0h1m2 0h2m1 0h1m1 0h1m4 0h1m2 0h1m1 0h1m3 0h1m1 0h1m1 0h2m3 0h4m1 0h1m1 0h3m1 0h1m3 0h1m1 0h1m3 0h1m1 0h2m1 0h1m3 0h2m1 0h3m3 0h4m2 0h7m2 0h1m1 0h1m1 0h1m2 0h2m1 0h2m1 0h2m1 0h3m1 0h1m2 0h4m1 0h1m2 0h1m2 0h3m1 0h1m5 0h2m1 0h4m1 0h1m1 0h1m1 0h3m1 0h2m5 0h1m15 0h1m2 0h2m3 0h2m8 0h2m1 0h2m1 0h1m1 0h1m2 0h1m2 0h1m1 0h3m3 0h2m2 0h1m1 0h2m2 0h3m1 0h4m4 0h1m1 0h1m1 0h4m2 0h1m3 0h1m3 0h1m1 0h1m1 0h1m2 0h2m3 0h1m1 0h3m2 0h1m1 0h8m1 0h4m7 0h2m4 0h1m1 0h1m1 0h1m8 0h3m4 0h2m3 0h1m4 0h3m2 0h3m2 0h1m2 0h1M1 89.5h1m9 0h1m7 0h1m3 0h1m8 0h6m43 0h10m1 0h1m4 0h1m1 0h1m3 0h1m1 0h1m1 0h1m4 0h3m2 0h4m1 0h1m1 0h3m3 0h3m4 0h2m2 0h1m1 0h3m1 0h2m1 0h1m2 0h4m1 0h1m2 0h3m2 0h2m1 0h4m1 0h1m3 0h3m3 0h4m1 0h1m1 0h2m1 0h6m2 0h1m1 0h1m2 0h1m6 0h1m1 0h5m1 0h1m1 0h1m1 0h3m1 0h4m1 0h1m1 0h1m2 0h2m1 0h1m5 0h1m8 0h1m2 0h3m4 0h3m1 0h3m1 0h7m2 0h3m1 0h1m1 0h1m2 0h1m1 0h1m5 0h2m1 0h1m1 0h1m1 0h4m2 0h1m1 0h4m2 0h2m2 0h3m1 0h2m2 0h1m1 0h2m4 0h1m3 0h2m1 0h2m1 0h1m1 0h4m1 0h3m1 0h3m2 0h2m2 0h1m2 0h4m2 0h1m5 0h4m1 0h1m1 0h2m1 0h3m4 0h2m1 0h1m1 0h1m2 0h1m2 0h4m1 0h2m1 0h1M1 90.5h1m9 0h1m7 0h1m3 0h1m23 0h1m33 0h4m2 0h1m2 0h1m2 0h2m1 0h2m2 0h5m1 0h1m2 0h1m1 0h2m1 0h2m3 0h4m1 0h1m1 0h1m2 0h5m2 0h4m1 0h1m1 0h1m1 0h1m3 0h1m1 0h4m1 0h1m1 0h4m1 0h3m1 0h3m1 0h1m1 0h2m3 0h1m2 0h2m3 0h2m2 0h1m1 0h2m2 0h2m1 0h1m1 0h5m2 0h2m1 0h2m2 0h1m1 0h1m2 0h3m4 0h1m1 0h1m3 0h1m2 0h1m3 0h1m1 0h1m4 0h2m4 0h1m1 0h3m2 0h2m1 0h3m1 0h2m1 0h1m1 0h2m1 0h1m1 0h3m1 0h4m5 0h1m4 0h2m1 0h1m4 0h4m1 0h6m1 0h3m3 0h2m2 0h2m3 0h2m3 0h1m4 0h2m1 0h1m1 0h1m1 0h2m1 0h3m1 0h1m1 0h2m1 0h1m1 0h1m1 0h1m3 0h4m1 0h2m4 0h1m1 0h1m2 0h1m1 0h1m1 0h2m1 0h1m1 0h2m2 0h1m1 0h2m4 0h3m1 0h1m2 0h1m1 0h1m2 0h2m1 0h1m1 0h7M1 91.5h1m9 0h1m7 0h1m3 0h1m13 0h1m9 0h1m32 0h3m2 0h2m1 0h1m4 0h1m2 0h1m2 0h1m2 0h1m4 0h2m1 0h1m1 0h3m1 0h1m1 0h3m3 0h4m2 0h4m1 0h4m1 0h1m2 0h2m1 0h3m1 0h1m1 0h3m1 0h2m3 0h1m3 0h2m2 0h1m1 0h2m1 0h1m2 0h3m2 0h2m1 0h1m1 0h3m1 0h6m2 0h2m2 0h4m5 0h4m1 0h3m1 0h1m3 0h2m1 0h1m1 0h6m2 0h1m2 0h3m14 0h1m1 0h3m1 0h1m2 0h1m2 0h1m4 0h1m4 0h1m2 0h1m1 0h1m2 0h2m1 0h1m3 0h2m1 0h1m1 0h1m1 0h1m1 0h1m1 0h1m1 0h1m2 0h1m3 0h2m1 0h1m1 0h1m1 0h2m1 0h2m4 0h1m1 0h4m6 0h1m1 0h1m1 0h1m1 0h2m3 0h1m1 0h3m2 0h1m1 0h1m1 0h2m2 0h1m1 0h4m1 0h1m5 0h2m1 0h2m3 0h6m2 0h1m1 0h1m5 0h1m3 0h4m6 0h1m1 0h5M1 92.5h1m9 0h1m7 0h1m3 0h1m12 0h1m10 0h1m32 0h2m1 0h2m2 0h1m1 0h4m4 0h1m1 0h2m1 0h3m1 0h1m3 0h2m1 0h2m4 0h4m1 0h1m1 0h1m1 0h1m1 0h4m2 0h2m1 0h9m1 0h3m1 0h1m2 0h1m1 0h4m5 0h1m1 0h3m1 0h2m3 0h1m2 0h1m4 0h2m4 0h1m1 0h1m1 0h2m2 0h2m1 0h1m1 0h2m1 0h1m1 0h2m5 0h1m2 0h1m2 0h1m3 0h3m1 0h3m5 0h2m1 0h1m7 0h1m1 0h3m3 0h4m2 0h2m1 0h2m3 0h1m2 0h2m4 0h2m2 0h2m1 0h4m2 0h1m1 0h7m3 0h2m2 0h1m1 0h1m1 0h1m2 0h2m4 0h3m1 0h2m1 0h3m12 0h2m2 0h2m1 0h3m1 0h1m4 0h3m1 0h2m1 0h1m3 0h7m2 0h2m2 0h3m3 0h2m1 0h7m1 0h1m3 0h2m2 0h5m3 0h1m3 0h2m3 0h1M1 93.5h1m9 0h1m7 0h1m3 0h1m12 0h2m9 0h1m33 0h2m1 0h3m1 0h1m3 0h4m1 0h3m2 0h1m4 0h1m1 0h8m1 0h1m3 0h1m1 0h5m1 0h4m1 0h1m1 0h2m1 0h1m1 0h7m2 0h2m1 0h5m4 0h4m2 0h1m1 0h4m3 0h3m4 0h3m1 0h1m2 0h1m5 0h2m2 0h1m1 0h2m1 0h1m1 0h1m2 0h3m1 0h2m1 0h1m2 0h2m1 0h2m1 0h1m1 0h1m1 0h1m4 0h1m3 0h3m2 0h2m10 0h1m1 0h3m1 0h1m1 0h2m2 0h2m1 0h2m1 0h4m1 0h2m2 0h2m3 0h3m3 0h4m2 0h1m1 0h3m1 0h1m2 0h5m1 0h1m1 0h1m1 0h2m1 0h1m1 0h1m3 0h2m3 0h3m3 0h1m2 0h3m1 0h1m4 0h2m1 0h1m3 0h2m2 0h1m2 0h1m1 0h1m1 0h1m4 0h1m1 0h2m3 0h1m1 0h1m7 0h2m6 0h1m2 0h3m2 0h1m1 0h4m1 0h1m4 0h3m3 0h1M1 94.5h1m9 0h1m7 0h1m3 0h1m11 0h1m11 0h1m32 0h1m1 0h3m1 0h2m3 0h2m1 0h1m1 0h2m1 0h1m2 0h1m1 0h1m1 0h1m2 0h1m2 0h4m3 0h1m1 0h2m1 0h1m1 0h2m4 0h3m1 0h1m1 0h1m4 0h1m1 0h2m1 0h2m2 0h3m2 0h5m1 0h1m1 0h1m1 0h1m5 0h1m2 0h1m1 0h1m2 0h2m6 0h2m1 0h1m2 0h1m1 0h3m1 0h2m1 0h2m1 0h2m1 0h3m5 0h1m1 0h1m1 0h4m1 0h1m1 0h4m1 0h5m3 0h1m3 0h1m2 0h1m1 0h1m2 0h1m2 0h1m1 0h1m1 0h1m1 0h2m2 0h1m3 0h1m1 0h4m3 0h6m1 0h6m4 0h1m3 0h1m3 0h3m1 0h4m1 0h1m1 0h2m2 0h3m1 0h5m2 0h1m5 0h2m3 0h3m2 0h3m1 0h4m1 0h1m1 0h1m1 0h1m4 0h1m1 0h3m1 0h4m1 0h3m3 0h2m2 0h1m4 0h1m1 0h4m1 0h1m3 0h1m1 0h4m2 0h1m2 0h2m2 0h2m1 0h2m1 0h2m1 0h1M1 95.5h1m9 0h1m7 0h1m3 0h1m11 0h1m1 0h1m9 0h1m34 0h1m3 0h3m4 0h1m1 0h1m1 0h4m1 0h1m2 0h1m1 0h1m1 0h1m2 0h1m1 0h1m1 0h2m1 0h1m4 0h5m6 0h1m1 0h1m1 0h1m2 0h4m1 0h3m1 0h5m1 0h2m1 0h1m1 0h1m1 0h1m1 0h1m2 0h1m7 0h5m1 0h7m1 0h1m2 0h3m1 0h2m2 0h1m2 0h1m3 0h2m1 0h9m1 0h4m1 0h2m1 0h1m2 0h1m2 0h2m7 0h1m3 0h1m7 0h3m1 0h2m1 0h1m1 0h1m2 0h3m1 0h2m1 0h1m4 0h2m2 0h1m1 0h1m4 0h1m1 0h5m4 0h1m4 0h7m1 0h1m1 0h1m3 0h1m2 0h2m5 0h1m3 0h1m1 0h2m1 0h1m1 0h3m1 0h1m1 0h1m1 0h5m1 0h1m1 0h1m4 0h1m3 0h2m1 0h1m1 0h1m4 0h1m2 0h1m4 0h1m4 0h1m1 0h1m1 0h1m5 0h1m2 0h1m1 0h2m4 0h4m2 0h3m1 0h1m1 0h2m1 0h1M1 96.5h1m9 0h1m7 0h1m3 0h1m11 0h2m10 0h1m32 0h1m2 0h2m3 0h1m1 0h2m1 0h2m2 0h1m2 0h1m1 0h5m4 0h2m1 0h2m3 0h1m1 0h4m1 0h3m1 0h1m2 0h1m2 0h2m1 0h2m1 0h1m2 0h2m2 0h1m1 0h1m1 0h2m3 0h4m1 0h2m5 0h2m1 0h1m2 0h1m1 0h1m1 0h1m5 0h2m1 0h4m1 0h2m2 0h2m3 0h4m1 0h1m2 0h1m1 0h1m2 0h1m1 0h1m1 0h5m2 0h1m1 0h1m2 0h2m2 0h1m3 0h2m3 0h1m5 0h1m3 0h2m1 0h4m2 0h1m3 0h2m1 0h1m1 0h2m1 0h1m2 0h1m2 0h1m1 0h4m1 0h1m1 0h1m2 0h1m5 0h2m2 0h5m2 0h1m2 0h1m1 0h2m4 0h4m6 0h3m2 0h3m1 0h3m1 0h1m1 0h2m1 0h1m1 0h2m1 0h1m1 0h2m2 0h1m2 0h5m2 0h4m3 0h1m1 0h1m4 0h1m2 0h2m1 0h2m1 0h1m1 0h1m2 0h2m1 0h1m2 0h1m3 0h4m4 0h2m4 0h4M1 97.5h1m9 0h1m7 0h1m3 0h1m11 0h3m9 0h1m33 0h1m1 0h1m1 0h6m1 0h1m1 0h4m1 0h1m2 0h2m1 0h1m1 0h1m1 0h2m2 0h6m1 0h1m1 0h7m1 0h4m1 0h1m1 0h4m1 0h2m2 0h4m1 0h3m1 0h2m1 0h1m1 0h1m2 0h1m1 0h3m1 0h1m1 0h2m1 0h1m1 0h1m1 0h2m3 0h1m2 0h3m3 0h1m2 0h2m3 0h1m1 0h4m1 0h1m1 0h8m1 0h3m4 0h2m1 0h2m3 0h1m3 0h3m3 0h1m13 0h1m2 0h2m1 0h2m6 0h2m1 0h5m1 0h4m3 0h1m1 0h2m1 0h2m3 0h1m1 0h1m1 0h1m2 0h1m2 0h1m2 0h2m2 0h4m4 0h2m2 0h1m2 0h1m2 0h1m1 0h3m4 0h2m1 0h4m2 0h2m5 0h1m3 0h2m1 0h2m1 0h1m1 0h4m2 0h2m1 0h1m1 0h2m4 0h1m2 0h1m2 0h3m1 0h3m2 0h1m3 0h3m1 0h1m1 0h2m1 0h11m1 0h1M1 98.5h1m9 0h1m7 0h1m3 0h1m10 0h1m12 0h1m33 0h1m1 0h5m1 0h3m1 0h3m4 0h3m1 0h1m1 0h1m3 0h3m2 0h1m3 0h3m1 0h2m1 0h3m1 0h1m1 0h2m2 0h1m1 0h1m3 0h5m2 0h1m1 0h1m1 0h2m1 0h1m2 0h1m1 0h11m1 0h1m4 0h4m3 0h1m1 0h1m1 0h2m1 0h1m1 0h3m1 0h2m1 0h2m1 0h1m2 0h3m1 0h2m3 0h2m2 0h1m4 0h1m5 0h3m2 0h1m3 0h1m16 0h2m1 0h1m1 0h3m1 0h3m1 0h4m2 0h3m2 0h1m1 0h1m1 0h2m1 0h1m4 0h1m2 0h1m4 0h3m3 0h2m2 0h1m2 0h1m2 0h1m1 0h3m1 0h1m1 0h9m2 0h2m1 0h2m2 0h1m2 0h1m1 0h2m1 0h1m1 0h4m2 0h3m3 0h1m1 0h5m2 0h2m3 0h4m3 0h2m1 0h2m3 0h1m2 0h1m2 0h1m1 0h1m1 0h3m2 0h2m4 0h1m3 0h1m2 0h2M1 99.5h1m9 0h1m7 0h1m3 0h1m10 0h1m2 0h1m9 0h1m33 0h2m1 0h2m2 0h1m2 0h1m4 0h1m2 0h1m5 0h1m1 0h1m2 0h1m1 0h2m1 0h1m7 0h6m3 0h2m1 0h1m1 0h2m1 0h5m1 0h1m1 0h1m2 0h5m1 0h2m3 0h2m1 0h1m2 0h1m1 0h3m1 0h1m5 0h1m1 0h1m2 0h1m3 0h1m1 0h2m2 0h1m2 0h3m1 0h1m1 0h4m2 0h2m2 0h2m2 0h4m3 0h1m2 0h1m1 0h1m1 0h4m2 0h3m1 0h2m12 0h3m1 0h2m1 0h1m2 0h3m1 0h1m1 0h2m2 0h1m1 0h11m1 0h3m1 0h2m1 0h1m7 0h4m2 0h2m2 0h2m1 0h3m3 0h1m2 0h2m2 0h1m4 0h1m1 0h4m1 0h1m1 0h3m2 0h1m4 0h7m2 0h1m1 0h1m5 0h5m1 0h1m1 0h1m7 0h1m2 0h4m3 0h1m1 0h2m1 0h2m2 0h3m1 0h2m2 0h3m1 0h1m1 0h1m3 0h3M1 100.5h1m9 0h1m7 0h1m3 0h1m10 0h1m1 0h1m10 0h1m32 0h1m2 0h2m1 0h2m3 0h3m5 0h1m1 0h1m2 0h1m1 0h1m3 0h1m1 0h2m1 0h1m1 0h1m1 0h6m2 0h2m1 0h1m1 0h2m2 0h4m2 0h4m3 0h3m1 0h4m1 0h5m1 0h1m1 0h2m1 0h2m2 0h1m7 0h1m3 0h2m2 0h1m1 0h9m1 0h1m2 0h2m1 0h7m6 0h2m2 0h2m1 0h1m1 0h3m1 0h1m2 0h1m1 0h1m1 0h2m14 0h1m4 0h2m1 0h2m1 0h1m1 0h5m1 0h2m4 0h2m1 0h1m4 0h1m1 0h1m1 0h1m1 0h2m2 0h1m2 0h1m1 0h1m1 0h1m6 0h2m4 0h1m4 0h1m2 0h1m2 0h1m4 0h2m2 0h1m4 0h1m2 0h4m1 0h4m1 0h2m1 0h1m1 0h3m5 0h2m2 0h1m1 0h3m4 0h1m1 0h4m1 0h1m2 0h4m4 0h1m4 0h1m1 0h1m4 0h4m9 0h2M1 101.5h1m9 0h1m7 0h1m3 0h1m10 0h1m1 0h2m9 0h1m33 0h2m1 0h4m4 0h3m1 0h1m1 0h1m3 0h1m2 0h1m1 0h2m1 0h1m1 0h1m3 0h4m2 0h6m2 0h2m1 0h1m1 0h1m1 0h1m1 0h2m1 0h1m1 0h1m2 0h1m5 0h5m5 0h1m2 0h1m1 0h1m1 0h3m5 0h3m1 0h2m3 0h1m1 0h7m3 0h2m1 0h1m1 0h2m5 0h1m2 0h7m1 0h2m1 0h2m1 0h1m1 0h2m1 0h1m1 0h1m1 0h1m1 0h2m1 0h2m13 0h2m4 0h1m1 0h1m14 0h2m1 0h1m2 0h1m1 0h4m2 0h1m2 0h3m2 0h1m4 0h4m1 0h4m4 0h8m1 0h1m1 0h2m1 0h1m3 0h1m1 0h4m1 0h1m2 0h2m3 0h2m2 0h2m1 0h1m2 0h1m1 0h1m1 0h2m1 0h2m1 0h3m2 0h1m1 0h1m6 0h1m1 0h1m3 0h1m3 0h8m2 0h3m1 0h1m1 0h5m3 0h4m1 0h1M1 102.5h1m9 0h1m7 0h1m3 0h1m10 0h2m11 0h1m32 0h5m2 0h1m2 0h2m2 0h3m1 0h2m1 0h1m1 0h2m1 0h1m2 0h1m1 0h1m3 0h1m1 0h1m1 0h1m1 0h1m1 0h2m1 0h3m3 0h1m3 0h1m1 0h3m1 0h1m3 0h1m2 0h1m1 0h4m4 0h3m2 0h1m1 0h3m1 0h1m2 0h6m1 0h2m2 0h1m1 0h1m3 0h3m1 0h2m3 0h4m1 0h3m1 0h2m1 0h3m2 0h3m1 0h3m4 0h1m1 0h5m3 0h1m2 0h1m1 0h2m12 0h1m9 0h1m1 0h2m1 0h1m2 0h1m1 0h1m1 0h2m2 0h2m4 0h1m4 0h1m1 0h4m1 0h1m2 0h3m2 0h2m3 0h1m1 0h2m3 0h6m1 0h1m5 0h1m1 0h2m5 0h1m1 0h2m3 0h1m2 0h2m1 0h1m1 0h1m1 0h4m1 0h1m1 0h1m3 0h1m1 0h1m1 0h10m1 0h1m1 0h1m2 0h1m2 0h1m2 0h1m2 0h1m1 0h4m1 0h4m4 0h2m1 0h1m2 0h1m2 0h1m3 0h1M1 103.5h1m9 0h1m7 0h1m3 0h1m10 0h2m1 0h1m9 0h1m33 0h2m1 0h7m5 0h1m3 0h1m3 0h1m4 0h1m2 0h1m1 0h4m1 0h3m1 0h7m5 0h1m1 0h1m2 0h1m1 0h3m1 0h3m1 0h1m1 0h7m4 0h1m1 0h2m1 0h2m1 0h2m2 0h1m2 0h3m1 0h1m1 0h1m1 0h2m1 0h1m1 0h2m1 0h3m1 0h3m3 0h1m2 0h1m3 0h6m1 0h1m1 0h3m1 0h1m1 0h1m1 0h1m1 0h1m5 0h5m1 0h2m13 0h4m1 0h1m2 0h1m1 0h1m2 0h3m1 0h3m1 0h1m1 0h1m2 0h2m1 0h3m1 0h3m1 0h1m1 0h2m3 0h1m2 0h1m1 0h1m1 0h1m5 0h2m1 0h2m5 0h2m2 0h1m1 0h1m2 0h1m1 0h3m1 0h1m1 0h2m2 0h1m1 0h3m1 0h1m1 0h1m5 0h1m2 0h2m1 0h1m1 0h1m1 0h2m2 0h1m2 0h1m4 0h2m6 0h2m6 0h3m1 0h2m6 0h2m4 0h2m1 0h2m2 0h2m1 0h1m1 0h1M1 104.5h1m9 0h1m7 0h1m3 0h1m10 0h3m10 0h1m32 0h1m2 0h2m1 0h1m3 0h1m1 0h2m1 0h1m2 0h2m1 0h2m3 0h1m2 0h4m2 0h2m2 0h6m1 0h3m1 0h3m3 0h2m1 0h3m1 0h1m3 0h1m5 0h3m3 0h2m1 0h9m2 0h4m1 0h1m1 0h3m2 0h3m3 0h1m2 0h2m1 0h5m1 0h7m2 0h1m1 0h5m2 0h2m4 0h1m1 0h3m1 0h1m1 0h1m1 0h2m1 0h2m18 0h2m1 0h4m2 0h3m1 0h1m3 0h1m1 0h1m2 0h1m2 0h1m3 0h1m4 0h2m1 0h1m4 0h3m1 0h2m2 0h4m3 0h1m1 0h1m2 0h1m1 0h5m2 0h4m1 0h1m1 0h2m1 0h2m1 0h3m7 0h1m1 0h5m1 0h1m1 0h2m2 0h3m1 0h2m12 0h2m1 0h6m1 0h3m2 0h1m2 0h1m1 0h2m1 0h1m4 0h2m1 0h3m1 0h3m1 0h1m1 0h1M1 105.5h1m9 0h1m7 0h1m3 0h1m10 0h4m9 0h1m32 0h3m2 0h1m2 0h1m2 0h1m2 0h1m1 0h1m1 0h1m1 0h1m1 0h1m2 0h3m4 0h4m3 0h2m1 0h4m1 0h6m2 0h1m1 0h3m2 0h3m1 0h1m5 0h7m2 0h1m1 0h1m5 0h1m1 0h1m2 0h1m1 0h1m1 0h1m3 0h6m1 0h1m2 0h1m1 0h2m2 0h1m2 0h2m3 0h2m3 0h6m1 0h2m1 0h2m1 0h4m2 0h1m2 0h1m1 0h1m2 0h2m3 0h1m5 0h1m4 0h1m2 0h1m2 0h1m2 0h1m1 0h1m1 0h3m2 0h5m1 0h1m2 0h4m2 0h1m1 0h5m2 0h2m1 0h3m1 0h1m4 0h3m4 0h2m2 0h1m1 0h4m1 0h1m1 0h1m3 0h4m1 0h1m4 0h1m2 0h1m1 0h2m2 0h1m1 0h4m3 0h1m2 0h2m2 0h3m1 0h1m3 0h3m2 0h4m1 0h1m1 0h1m3 0h4m8 0h3m2 0h4m1 0h1m11 0h2M1 106.5h1m9 0h1m7 0h1m3 0h1m9 0h1m13 0h1m32 0h5m1 0h3m1 0h3m1 0h4m2 0h5m1 0h1m3 0h2m2 0h1m1 0h1m2 0h3m1 0h2m1 0h2m3 0h2m4 0h2m1 0h1m2 0h3m3 0h1m2 0h2m2 0h1m1 0h4m1 0h3m1 0h2m1 0h2m1 0h2m1 0h1m1 0h1m2 0h1m3 0h2m1 0h2m2 0h1m2 0h3m1 0h1m1 0h2m1 0h6m2 0h1m2 0h1m5 0h2m1 0h1m2 0h1m2 0h4m2 0h3m2 0h2m2 0h4m2 0h1m1 0h1m2 0h3m2 0h2m3 0h1m1 0h3m1 0h4m1 0h2m1 0h2m1 0h5m1 0h1m3 0h2m2 0h1m1 0h2m1 0h1m1 0h1m1 0h3m3 0h1m1 0h1m1 0h2m1 0h1m1 0h1m1 0h2m2 0h4m3 0h1m1 0h1m2 0h1m1 0h1m1 0h1m1 0h1m4 0h1m2 0h1m4 0h1m2 0h1m3 0h3m1 0h1m4 0h1m1 0h2m1 0h1m6 0h1m1 0h3m1 0h1m4 0h6m3 0h1m1 0h1m2 0h1m3 0h1m6 0h2M1 107.5h1m9 0h1m7 0h1m3 0h1m9 0h1m3 0h1m9 0h1m34 0h1m1 0h2m1 0h1m2 0h1m3 0h3m1 0h2m3 0h3m1 0h1m1 0h1m1 0h2m1 0h1m4 0h1m2 0h5m1 0h6m1 0h1m1 0h4m2 0h2m2 0h2m2 0h2m1 0h2m1 0h2m3 0h2m2 0h2m1 0h1m1 0h2m1 0h1m4 0h1m4 0h2m2 0h1m2 0h2m1 0h1m1 0h5m3 0h3m5 0h3m1 0h1m1 0h3m1 0h1m2 0h2m1 0h1m1 0h4m1 0h1m1 0h2m1 0h2m1 0h1m13 0h1m2 0h1m3 0h2m2 0h1m1 0h4m2 0h1m1 0h1m1 0h1m3 0h3m1 0h2m3 0h1m1 0h1m1 0h2m2 0h1m3 0h1m6 0h1m3 0h1m5 0h1m1 0h7m1 0h1m2 0h1m1 0h1m1 0h1m1 0h3m1 0h1m1 0h1m5 0h2m1 0h1m2 0h3m2 0h2m1 0h1m1 0h3m1 0h1m1 0h1m3 0h1m1 0h1m4 0h2m2 0h2m2 0h5m4 0h4m2 0h2m1 0h1m1 0h1m1 0h1m1 0h1m1 0h2m2 0h2m1 0h1M1 108.5h1m9 0h1m7 0h1m3 0h1m9 0h1m2 0h1m10 0h1m33 0h3m2 0h1m3 0h2m2 0h1m2 0h1m1 0h4m1 0h5m1 0h2m2 0h2m1 0h1m1 0h6m1 0h1m1 0h1m1 0h1m2 0h2m1 0h1m1 0h2m2 0h2m2 0h2m1 0h1m3 0h2m3 0h3m4 0h1m1 0h1m1 0h3m5 0h2m2 0h2m2 0h2m2 0h4m2 0h1m1 0h5m1 0h3m2 0h2m1 0h3m3 0h2m3 0h1m7 0h3m1 0h1m1 0h1m1 0h1m1 0h1m1 0h1m2 0h1m7 0h2m2 0h1m1 0h4m3 0h1m4 0h1m1 0h2m7 0h9m1 0h5m1 0h2m3 0h1m2 0h1m4 0h1m1 0h1m2 0h1m1 0h2m4 0h1m1 0h2m4 0h2m5 0h1m2 0h1m1 0h2m1 0h2m1 0h1m1 0h4m2 0h2m1 0h1m1 0h2m1 0h1m1 0h2m1 0h1m1 0h1m3 0h1m1 0h1m2 0h1m2 0h1m1 0h1m1 0h1m1 0h1m2 0h2m1 0h1m2 0h2m1 0h8m1 0h1m1 0h1m5 0h1m4 0h3M1 109.5h1m9 0h1m7 0h1m3 0h1m9 0h1m2 0h2m9 0h1m33 0h2m1 0h2m1 0h2m5 0h1m3 0h1m3 0h1m1 0h2m1 0h1m1 0h6m1 0h1m2 0h2m1 0h5m1 0h1m1 0h1m1 0h2m1 0h1m2 0h1m1 0h6m1 0h2m2 0h8m2 0h1m1 0h1m1 0h1m3 0h1m1 0h2m1 0h1m1 0h4m5 0h2m4 0h1m2 0h1m4 0h1m2 0h4m1 0h1m4 0h1m1 0h3m1 0h2m2 0h2m2 0h1m1 0h3m2 0h1m1 0h2m2 0h1m2 0h1m14 0h1m1 0h4m2 0h1m2 0h1m1 0h1m2 0h1m2 0h6m2 0h3m2 0h1m1 0h1m3 0h1m3 0h1m6 0h1m2 0h2m2 0h2m1 0h1m1 0h1m1 0h1m1 0h1m5 0h2m3 0h2m1 0h3m2 0h1m1 0h3m1 0h1m1 0h2m1 0h1m2 0h6m2 0h1m2 0h2m2 0h2m2 0h2m1 0h1m1 0h3m1 0h1m1 0h2m6 0h2m2 0h4m2 0h4m5 0h1m1 0h1m1 0h2m1 0h1m1 0h4m2 0h1M1 110.5h1m9 0h1m7 0h1m3 0h1m9 0h1m1 0h1m11 0h1m33 0h2m3 0h2m1 0h2m2 0h5m2 0h2m1 0h4m2 0h4m1 0h1m2 0h1m1 0h4m3 0h2m2 0h1m1 0h2m2 0h3m1 0h1m1 0h2m1 0h1m1 0h1m1 0h4m1 0h1m1 0h1m1 0h3m1 0h2m3 0h4m2 0h1m4 0h1m1 0h2m5 0h1m1 0h1m2 0h1m1 0h1m2 0h1m2 0h1m3 0h3m1 0h3m1 0h1m3 0h3m1 0h4m1 0h1m1 0h1m2 0h1m2 0h1m2 0h1m2 0h3m6 0h1m4 0h1m1 0h3m1 0h1m2 0h1m1 0h1m1 0h1m2 0h3m6 0h1m1 0h1m1 0h2m1 0h2m21 0h1m1 0h1m3 0h1m2 0h2m1 0h2m1 0h1m1 0h1m2 0h1m1 0h2m5 0h1m1 0h1m1 0h1m1 0h1m8 0h4m5 0h2m2 0h1m3 0h1m3 0h7m3 0h1m1 0h3m2 0h1m1 0h3m4 0h3m1 0h2m4 0h3m1 0h1m4 0h1m1 0h2m3 0h1M1 111.5h1m9 0h1m7 0h1m3 0h1m9 0h1m1 0h1m1 0h1m9 0h1m33 0h2m2 0h4m5 0h2m3 0h1m2 0h2m1 0h1m2 0h3m1 0h3m2 0h1m2 0h1m1 0h1m2 0h4m1 0h1m1 0h2m1 0h1m1 0h1m1 0h6m4 0h9m3 0h1m1 0h2m4 0h1m1 0h2m1 0h2m3 0h1m5 0h4m2 0h1m2 0h3m2 0h2m2 0h3m1 0h1m1 0h2m1 0h1m2 0h1m2 0h2m1 0h1m1 0h1m1 0h2m1 0h1m1 0h1m1 0h4m1 0h1m2 0h1m1 0h2m12 0h1m2 0h4m1 0h1m1 0h1m1 0h2m3 0h1m2 0h1m2 0h3m2 0h1m1 0h3m1 0h2m1 0h3m1 0h3m2 0h1m3 0h1m3 0h2m2 0h1m1 0h1m1 0h1m5 0h2m1 0h4m2 0h2m1 0h1m1 0h3m2 0h1m1 0h1m11 0h1m1 0h2m1 0h1m1 0h1m2 0h4m2 0h1m1 0h1m1 0h1m2 0h1m1 0h2m3 0h1m7 0h1m1 0h3m2 0h1m1 0h3m3 0h1m1 0h2m2 0h2m1 0h2m1 0h2m3 0h1M1 112.5h1m9 0h1m7 0h1m3 0h1m9 0h1m1 0h2m10 0h1m32 0h1m2 0h1m1 0h1m1 0h1m2 0h1m2 0h2m1 0h2m1 0h1m1 0h1m2 0h3m4 0h4m1 0h2m1 0h3m4 0h2m2 0h1m1 0h3m1 0h1m1 0h1m1 0h1m1 0h4m3 0h1m1 0h6m1 0h4m1 0h2m2 0h1m1 0h2m2 0h3m9 0h1m4 0h2m1 0h1m1 0h3m1 0h3m1 0h2m1 0h1m1 0h1m4 0h1m2 0h2m2 0h3m2 0h1m1 0h1m1 0h3m1 0h1m8 0h1m2 0h2m1 0h2m2 0h1m1 0h1m1 0h2m1 0h1m2 0h3m2 0h1m2 0h1m1 0h1m8 0h3m1 0h1m2 0h5m1 0h1m1 0h5m1 0h1m1 0h1m1 0h1m2 0h2m1 0h1m1 0h2m3 0h3m3 0h1m2 0h2m4 0h1m2 0h1m2 0h2m1 0h2m1 0h1m1 0h3m1 0h1m4 0h1m3 0h2m2 0h2m3 0h1m1 0h1m1 0h2m1 0h1m5 0h1m4 0h1m1 0h1m2 0h1m1 0h1m1 0h3m1 0h4m3 0h1m2 0h5m1 0h3m1 0h1m1 0h1m1 0h1m1 0h1M1 113.5h1m9 0h1m7 0h1m3 0h1m9 0h1m1 0h3m9 0h1m33 0h2m1 0h3m2 0h1m4 0h2m2 0h1m1 0h2m1 0h1m1 0h1m1 0h1m1 0h2m4 0h1m1 0h1m2 0h1m1 0h1m2 0h1m1 0h1m1 0h1m1 0h5m1 0h4m1 0h2m3 0h2m4 0h1m1 0h1m1 0h2m1 0h2m4 0h1m4 0h2m5 0h3m2 0h1m1 0h5m1 0h1m2 0h1m1 0h1m2 0h2m1 0h1m1 0h4m5 0h2m1 0h1m2 0h3m1 0h1m1 0h2m1 0h1m1 0h1m1 0h2m1 0h2m1 0h1m3 0h2m4 0h1m7 0h1m1 0h4m3 0h1m1 0h2m2 0h3m3 0h3m1 0h1m1 0h1m2 0h1m3 0h1m3 0h3m1 0h1m2 0h2m1 0h1m1 0h3m2 0h2m3 0h1m3 0h1m3 0h1m1 0h1m2 0h1m1 0h1m2 0h3m1 0h4m1 0h2m1 0h1m1 0h1m1 0h3m3 0h1m2 0h3m1 0h7m2 0h3m3 0h1m1 0h2m3 0h1m4 0h2m2 0h6m4 0h3m2 0h1m2 0h1m4 0h2m1 0h2m1 0h3m1 0h1M1 114.5h1m9 0h1m7 0h1m3 0h1m9 0h2m12 0h1m32 0h5m1 0h2m1 0h4m1 0h4m1 0h1m1 0h4m1 0h1m3 0h3m2 0h1m2 0h2m1 0h2m3 0h5m3 0h1m1 0h1m1 0h3m1 0h4m3 0h1m2 0h1m1 0h1m1 0h1m1 0h2m1 0h1m3 0h1m1 0h4m2 0h1m1 0h2m2 0h1m1 0h1m3 0h4m1 0h4m2 0h7m1 0h6m5 0h4m1 0h1m8 0h5m4 0h2m6 0h1m1 0h2m2 0h1m1 0h2m2 0h1m2 0h2m1 0h3m1 0h1m1 0h7m1 0h1m4 0h2m3 0h1m4 0h1m2 0h2m1 0h6m1 0h2m4 0h1m1 0h2m1 0h1m1 0h1m1 0h1m1 0h2m2 0h1m3 0h1m2 0h1m1 0h1m1 0h1m2 0h1m1 0h1m1 0h1m1 0h1m2 0h4m2 0h5m1 0h2m1 0h1m1 0h1m3 0h2m2 0h1m2 0h1m1 0h1m1 0h1m2 0h2m1 0h1m1 0h1m1 0h2m2 0h1m1 0h2m10 0h1m3 0h1m1 0h1m1 0h1m3 0h5M1 115.5h1m9 0h1m7 0h1m3 0h1m9 0h2m2 0h1m9 0h1m36 0h4m2 0h1m1 0h1m6 0h1m1 0h2m4 0h4m5 0h5m4 0h5m1 0h2m1 0h2m2 0h1m1 0h1m2 0h1m2 0h3m2 0h3m1 0h1m1 0h2m1 0h7m1 0h1m2 0h2m2 0h2m1 0h3m2 0h1m1 0h2m2 0h2m1 0h1m1 0h2m2 0h3m1 0h1m1 0h1m4 0h1m2 0h5m2 0h1m1 0h3m1 0h2m1 0h2m2 0h1m1 0h1m1 0h3m2 0h1m1 0h1m11 0h4m1 0h1m1 0h2m1 0h2m1 0h1m1 0h1m1 0h1m1 0h2m3 0h2m1 0h1m1 0h1m1 0h3m1 0h1m3 0h1m1 0h1m1 0h8m1 0h1m1 0h4m1 0h2m5 0h1m1 0h5m1 0h2m2 0h1m1 0h1m2 0h1m2 0h1m3 0h3m1 0h1m3 0h2m1 0h1m1 0h2m4 0h1m1 0h5m2 0h1m1 0h1m1 0h2m1 0h3m4 0h2m1 0h3m2 0h1m7 0h1m2 0h1m3 0h1m1 0h1m2 0h3m2 0h3m4 0h1M1 116.5h1m9 0h1m7 0h1m3 0h1m9 0h2m1 0h1m10 0h1m32 0h4m2 0h1m4 0h2m1 0h2m5 0h1m4 0h2m2 0h1m1 0h1m1 0h9m3 0h1m3 0h1m5 0h3m1 0h1m1 0h2m1 0h1m4 0h2m1 0h2m1 0h1m2 0h3m1 0h1m6 0h1m2 0h1m3 0h2m1 0h1m9 0h1m1 0h1m1 0h2m1 0h1m1 0h2m2 0h4m1 0h6m1 0h1m1 0h2m2 0h3m3 0h7m2 0h2m4 0h1m6 0h2m1 0h1m1 0h2m1 0h1m2 0h3m2 0h1m1 0h1m5 0h2m2 0h1m2 0h1m2 0h3m3 0h2m2 0h1m3 0h2m4 0h1m1 0h3m3 0h1m2 0h2m1 0h1m1 0h1m2 0h5m1 0h3m1 0h3m1 0h2m2 0h1m1 0h2m2 0h2m1 0h1m4 0h2m1 0h1m5 0h1m1 0h1m6 0h4m6 0h2m1 0h4m2 0h1m1 0h2m3 0h2m2 0h1m1 0h2m1 0h2m1 0h1m2 0h1m2 0h1m2 0h1m1 0h2m1 0h1m2 0h1M1 117.5h1m9 0h1m7 0h1m3 0h1m9 0h2m1 0h2m9 0h1m33 0h6m7 0h3m2 0h1m3 0h1m1 0h1m1 0h1m1 0h1m2 0h1m2 0h3m1 0h2m4 0h3m1 0h1m1 0h1m1 0h1m1 0h1m1 0h1m5 0h1m3 0h2m1 0h4m1 0h4m1 0h1m2 0h2m1 0h1m2 0h1m1 0h1m3 0h1m3 0h1m2 0h3m1 0h2m1 0h1m1 0h2m1 0h1m1 0h1m1 0h3m1 0h5m2 0h1m2 0h1m2 0h2m1 0h3m2 0h1m1 0h2m1 0h1m1 0h1m4 0h1m1 0h1m1 0h1m2 0h2m8 0h2m4 0h1m2 0h2m1 0h1m1 0h2m4 0h4m1 0h3m1 0h2m1 0h4m2 0h1m1 0h3m2 0h1m1 0h1m3 0h1m2 0h5m1 0h2m1 0h5m1 0h2m4 0h2m1 0h4m2 0h5m1 0h2m2 0h1m1 0h1m1 0h3m1 0h2m3 0h4m1 0h3m1 0h2m1 0h2m2 0h2m3 0h2m3 0h1m3 0h2m1 0h1m1 0h2m1 0h1m1 0h1m3 0h1m1 0h3m8 0h1m1 0h2m2 0h1m2 0h1m1 0h1M1 118.5h1m9 0h1m7 0h1m3 0h1m9 0h3m11 0h1m32 0h4m2 0h3m1 0h2m5 0h3m1 0h1m4 0h1m2 0h2m1 0h1m4 0h3m1 0h2m3 0h3m4 0h1m2 0h5m2 0h2m4 0h1m1 0h3m2 0h1m2 0h3m1 0h1m1 0h4m1 0h1m2 0h2m1 0h1m3 0h2m4 0h2m1 0h3m3 0h3m5 0h1m1 0h5m1 0h2m1 0h2m1 0h3m1 0h3m3 0h1m1 0h3m1 0h1m2 0h3m3 0h2m14 0h1m4 0h1m4 0h1m3 0h2m1 0h3m2 0h1m1 0h3m1 0h2m2 0h1m2 0h1m5 0h1m2 0h1m2 0h2m1 0h2m2 0h1m1 0h1m1 0h1m3 0h7m1 0h1m1 0h2m3 0h2m2 0h2m1 0h3m1 0h3m1 0h1m1 0h1m3 0h1m2 0h1m1 0h1m5 0h4m2 0h11m1 0h2m2 0h3m2 0h1m1 0h1m5 0h2m1 0h1m2 0h1m1 0h2m2 0h1m4 0h3m1 0h5M1 119.5h1m9 0h1m7 0h1m3 0h1m9 0h3m1 0h1m9 0h1m32 0h1m1 0h1m1 0h1m2 0h2m1 0h1m2 0h1m2 0h4m3 0h3m1 0h1m1 0h2m1 0h4m1 0h6m2 0h4m1 0h2m1 0h1m1 0h1m1 0h8m1 0h2m3 0h3m1 0h4m2 0h1m2 0h1m2 0h3m1 0h2m1 0h1m7 0h1m3 0h1m7 0h3m3 0h2m1 0h3m1 0h1m1 0h1m3 0h2m1 0h3m4 0h6m1 0h2m1 0h1m1 0h2m1 0h1m1 0h1m1 0h2m12 0h4m1 0h1m3 0h1m2 0h2m1 0h5m1 0h1m1 0h1m1 0h3m1 0h1m1 0h1m2 0h1m1 0h1m2 0h1m5 0h2m5 0h1m1 0h2m1 0h1m1 0h4m1 0h2m2 0h5m2 0h4m1 0h1m1 0h2m4 0h2m1 0h1m1 0h1m1 0h4m1 0h1m1 0h3m4 0h2m8 0h1m1 0h1m2 0h3m2 0h1m1 0h1m2 0h2m3 0h2m8 0h1m3 0h2m1 0h2m2 0h2m1 0h6M1 120.5h1m9 0h1m7 0h1m3 0h1m9 0h4m10 0h1m32 0h1m2 0h2m1 0h1m1 0h1m1 0h2m2 0h3m1 0h2m1 0h1m2 0h1m1 0h1m1 0h3m1 0h3m6 0h2m4 0h2m1 0h1m1 0h3m1 0h5m1 0h1m1 0h2m3 0h6m1 0h1m1 0h3m2 0h1m1 0h1m1 0h1m2 0h2m1 0h1m4 0h1m1 0h1m4 0h3m1 0h1m1 0h2m1 0h4m2 0h9m2 0h2m3 0h1m3 0h6m1 0h1m1 0h4m2 0h2m5 0h1m17 0h1m1 0h1m1 0h3m2 0h1m1 0h1m1 0h2m1 0h7m2 0h5m1 0h1m1 0h1m2 0h1m3 0h1m3 0h2m3 0h1m2 0h1m1 0h1m1 0h1m2 0h3m2 0h1m3 0h3m2 0h9m2 0h1m1 0h1m1 0h1m2 0h2m1 0h1m6 0h2m2 0h2m1 0h2m1 0h2m2 0h1m2 0h1m2 0h1m6 0h1m2 0h4m3 0h3m3 0h3m2 0h2m4 0h2m3 0h2m1 0h1m1 0h1M1 121.5h1m9 0h1m7 0h1m3 0h1m9 0h5m9 0h1m33 0h2m1 0h2m2 0h2m2 0h4m2 0h3m3 0h2m2 0h1m3 0h4m1 0h1m1 0h2m1 0h1m2 0h4m1 0h1m1 0h2m3 0h1m1 0h2m3 0h1m3 0h1m1 0h3m1 0h2m1 0h2m2 0h1m1 0h1m1 0h2m5 0h1m5 0h2m2 0h1m2 0h3m6 0h3m1 0h1m1 0h1m1 0h1m1 0h3m7 0h1m1 0h1m2 0h5m2 0h1m1 0h1m1 0h1m2 0h1m2 0h3m3 0h2m13 0h4m1 0h1m3 0h2m1 0h1m2 0h2m1 0h2m2 0h2m2 0h7m4 0h3m1 0h1m1 0h4m1 0h1m5 0h3m8 0h3m2 0h4m2 0h1m5 0h1m1 0h3m2 0h1m3 0h1m3 0h1m1 0h2m3 0h3m1 0h1m1 0h4m1 0h2m2 0h3m1 0h1m1 0h1m3 0h2m2 0h2m2 0h1m1 0h3m2 0h1m3 0h5m3 0h1m1 0h1m2 0h1m5 0h1m2 0h1M1 122.5h1m9 0h1m7 0h1m3 0h1m8 0h1m14 0h1m32 0h1m2 0h2m3 0h1m1 0h2m2 0h1m2 0h1m3 0h1m1 0h2m1 0h1m1 0h1m2 0h1m1 0h4m3 0h3m3 0h2m4 0h1m3 0h1m1 0h1m4 0h1m1 0h1m3 0h1m1 0h4m4 0h2m2 0h3m1 0h5m1 0h1m1 0h2m4 0h1m4 0h2m2 0h3m4 0h2m1 0h1m1 0h1m1 0h3m1 0h2m2 0h1m4 0h2m1 0h1m1 0h1m4 0h1m1 0h5m2 0h1m1 0h4m15 0h1m2 0h3m6 0h3m4 0h1m1 0h1m1 0h1m1 0h4m4 0h1m1 0h1m1 0h1m1 0h1m2 0h2m1 0h1m1 0h5m2 0h3m2 0h1m1 0h1m1 0h1m1 0h5m3 0h1m1 0h5m2 0h1m1 0h1m1 0h2m2 0h1m3 0h1m1 0h1m2 0h2m1 0h2m1 0h1m2 0h1m1 0h2m1 0h2m1 0h2m2 0h5m1 0h1m1 0h1m1 0h1m1 0h1m2 0h4m2 0h1m2 0h3m3 0h2m1 0h1m3 0h7m3 0h1m1 0h1M1 123.5h1m9 0h1m7 0h1m3 0h1m8 0h1m4 0h1m9 0h1m33 0h2m1 0h3m6 0h2m3 0h2m5 0h3m3 0h1m2 0h1m1 0h1m1 0h2m2 0h1m2 0h3m1 0h2m1 0h1m1 0h2m2 0h5m1 0h1m2 0h2m2 0h5m1 0h1m3 0h1m1 0h1m2 0h1m2 0h1m2 0h1m1 0h1m3 0h2m6 0h8m1 0h3m1 0h1m1 0h4m2 0h1m3 0h5m2 0h3m1 0h2m1 0h4m1 0h1m1 0h2m1 0h4m1 0h4m14 0h2m7 0h2m3 0h3m1 0h3m1 0h2m3 0h1m1 0h1m2 0h1m2 0h2m1 0h1m3 0h2m2 0h1m1 0h1m2 0h2m1 0h3m2 0h1m1 0h3m2 0h3m3 0h3m2 0h1m1 0h1m2 0h2m1 0h2m5 0h1m1 0h1m2 0h1m3 0h3m1 0h2m2 0h1m4 0h3m2 0h3m3 0h1m1 0h1m1 0h1m1 0h1m1 0h6m2 0h2m2 0h5m1 0h4m1 0h2m5 0h5M1 124.5h1m9 0h1m7 0h1m3 0h1m8 0h1m3 0h1m10 0h1m32 0h5m1 0h2m2 0h2m4 0h1m1 0h2m5 0h2m1 0h1m2 0h1m1 0h1m1 0h1m1 0h1m1 0h5m3 0h2m1 0h3m3 0h5m1 0h2m1 0h1m2 0h4m4 0h4m3 0h1m3 0h2m4 0h1m7 0h1m2 0h1m2 0h1m2 0h2m3 0h6m2 0h7m5 0h1m1 0h1m2 0h1m1 0h2m1 0h1m3 0h1m3 0h3m2 0h1m1 0h1m1 0h1m16 0h2m1 0h3m3 0h2m3 0h1m2 0h5m2 0h5m3 0h1m2 0h4m5 0h2m2 0h1m2 0h1m8 0h1m3 0h3m1 0h2m1 0h1m1 0h1m1 0h1m1 0h1m5 0h1m4 0h1m2 0h4m1 0h1m3 0h3m2 0h1m3 0h2m2 0h1m2 0h1m1 0h1m4 0h1m2 0h6m1 0h2m3 0h1m1 0h1m1 0h1m2 0h4m1 0h1m3 0h4m2 0h1m3 0h1m2 0h2M1 125.5h1m9 0h1m7 0h1m3 0h1m8 0h1m3 0h2m9 0h1m33 0h1m2 0h4m2 0h1m4 0h1m1 0h1m1 0h1m3 0h1m1 0h1m1 0h1m3 0h7m2 0h1m1 0h2m1 0h3m1 0h1m2 0h1m1 0h2m1 0h6m1 0h1m1 0h3m2 0h3m1 0h3m4 0h2m2 0h2m1 0h1m1 0h2m3 0h1m1 0h3m1 0h1m2 0h3m1 0h1m1 0h2m1 0h3m1 0h4m1 0h3m1 0h1m2 0h1m3 0h3m1 0h3m1 0h1m2 0h1m2 0h1m1 0h1m2 0h1m1 0h1m2 0h6m14 0h2m4 0h1m1 0h1m1 0h1m1 0h4m7 0h2m7 0h2m1 0h1m1 0h1m3 0h1m1 0h3m2 0h1m2 0h8m1 0h1m5 0h2m2 0h1m1 0h1m2 0h2m1 0h2m2 0h1m1 0h1m1 0h2m1 0h2m1 0h1m2 0h1m2 0h2m1 0h1m2 0h1m1 0h3m4 0h4m5 0h2m1 0h1m4 0h2m2 0h2m1 0h1m2 0h3m1 0h1m1 0h1m1 0h7m1 0h1m1 0h2m2 0h1m1 0h1m2 0h3M1 126.5h1m9 0h1m7 0h1m3 0h1m8 0h1m2 0h1m11 0h1m33 0h1m1 0h2m2 0h5m1 0h3m2 0h2m3 0h4m1 0h1m1 0h3m2 0h1m1 0h1m3 0h1m1 0h1m2 0h1m1 0h1m1 0h1m1 0h3m1 0h1m1 0h3m1 0h1m1 0h4m1 0h2m1 0h5m5 0h1m2 0h1m1 0h1m1 0h1m8 0h1m1 0h3m2 0h1m1 0h1m1 0h3m1 0h2m1 0h2m2 0h1m2 0h1m2 0h4m1 0h1m4 0h1m3 0h3m4 0h1m1 0h3m4 0h4m5 0h1m3 0h2m4 0h2m1 0h1m8 0h3m5 0h6m1 0h5m1 0h2m1 0h2m1 0h1m4 0h1m2 0h1m1 0h3m2 0h3m1 0h2m1 0h1m1 0h2m3 0h2m2 0h1m4 0h1m1 0h1m5 0h2m1 0h1m5 0h1m2 0h2m1 0h4m3 0h2m2 0h3m1 0h1m1 0h1m6 0h4m2 0h1m1 0h1m3 0h1m4 0h1m1 0h2m5 0h1m1 0h2m2 0h1m3 0h1m1 0h1m3 0h2m2 0h1M1 127.5h1m9 0h1m7 0h1m3 0h1m8 0h1m2 0h1m1 0h1m9 0h1m33 0h1m2 0h5m10 0h2m4 0h1m1 0h1m3 0h2m1 0h1m2 0h1m1 0h2m1 0h2m1 0h2m1 0h1m1 0h3m1 0h2m1 0h8m3 0h1m1 0h1m1 0h1m1 0h5m4 0h4m1 0h3m1 0h3m3 0h3m2 0h2m1 0h2m1 0h1m1 0h3m1 0h1m2 0h3m1 0h4m1 0h1m3 0h4m3 0h1m4 0h1m2 0h1m1 0h1m1 0h3m3 0h3m2 0h2m2 0h1m6 0h1m4 0h1m1 0h1m1 0h1m6 0h2m2 0h1m4 0h1m1 0h2m1 0h2m5 0h1m2 0h2m1 0h2m2 0h1m1 0h1m6 0h2m1 0h2m2 0h1m2 0h1m1 0h2m1 0h3m1 0h1m4 0h1m2 0h2m1 0h1m3 0h1m2 0h1m3 0h3m5 0h1m1 0h2m1 0h1m1 0h1m6 0h1m1 0h2m2 0h1m1 0h3m1 0h1m1 0h1m1 0h1m2 0h1m2 0h1m1 0h1m1 0h2m1 0h3m3 0h1m1 0h2m4 0h1m1 0h1m1 0h3m1 0h2m1 0h2M1 128.5h1m9 0h1m7 0h1m3 0h1m8 0h1m2 0h2m10 0h1m32 0h5m1 0h3m1 0h2m2 0h1m4 0h3m3 0h2m1 0h3m1 0h1m1 0h2m1 0h2m2 0h1m1 0h1m2 0h5m1 0h2m2 0h2m1 0h2m1 0h1m2 0h1m3 0h1m2 0h3m3 0h2m2 0h2m3 0h4m7 0h1m1 0h1m6 0h1m2 0h2m2 0h9m1 0h2m1 0h2m1 0h4m2 0h2m1 0h1m3 0h2m2 0h1m1 0h3m3 0h4m2 0h2m2 0h2m5 0h1m3 0h1m1 0h1m3 0h1m4 0h6m2 0h2m1 0h1m2 0h1m1 0h1m1 0h1m4 0h1m4 0h2m1 0h2m1 0h2m1 0h2m1 0h1m2 0h1m1 0h1m2 0h1m2 0h1m1 0h1m2 0h3m1 0h3m2 0h1m3 0h1m2 0h1m1 0h2m2 0h1m2 0h3m1 0h3m1 0h2m2 0h2m1 0h1m2 0h1m1 0h2m2 0h2m2 0h3m6 0h1m1 0h1m7 0h3m2 0h5m2 0h2m2 0h2m5 0h1m6 0h2M1 129.5h1m9 0h1m7 0h1m3 0h1m8 0h1m2 0h3m9 0h1m33 0h1m1 0h1m1 0h3m1 0h1m4 0h1m1 0h1m1 0h2m4 0h2m1 0h1m1 0h3m2 0h1m1 0h2m1 0h2m2 0h1m1 0h2m1 0h1m2 0h3m1 0h1m1 0h2m1 0h1m2 0h2m1 0h1m1 0h1m4 0h1m1 0h2m1 0h1m2 0h5m3 0h1m1 0h2m5 0h3m4 0h3m1 0h1m1 0h1m2 0h3m2 0h1m1 0h5m1 0h1m2 0h7m1 0h4m1 0h2m1 0h3m1 0h1m1 0h5m1 0h1m4 0h1m9 0h1m2 0h1m1 0h1m1 0h4m1 0h2m4 0h1m1 0h1m1 0h4m4 0h1m2 0h10m1 0h1m2 0h2m1 0h4m1 0h2m2 0h1m4 0h1m3 0h1m2 0h1m1 0h3m1 0h2m3 0h3m1 0h1m3 0h2m1 0h2m1 0h1m1 0h1m6 0h3m6 0h2m1 0h2m1 0h2m1 0h1m1 0h1m1 0h2m1 0h1m1 0h1m1 0h1m3 0h1m1 0h1m2 0h2m1 0h1m1 0h1m2 0h4m3 0h1m2 0h1m9 0h1m2 0h1M1 130.5h1m9 0h1m7 0h1m3 0h1m8 0h1m1 0h1m12 0h1m32 0h1m1 0h2m1 0h3m2 0h3m1 0h1m3 0h1m2 0h1m2 0h1m1 0h1m1 0h2m4 0h1m2 0h1m1 0h5m2 0h2m1 0h2m2 0h2m1 0h8m5 0h1m1 0h2m1 0h1m1 0h1m1 0h2m5 0h1m2 0h1m1 0h1m2 0h1m2 0h1m1 0h1m1 0h2m5 0h2m1 0h3m4 0h4m3 0h2m2 0h1m2 0h1m5 0h1m3 0h1m2 0h1m2 0h1m1 0h7m3 0h5m1 0h1m1 0h1m3 0h1m1 0h4m3 0h3m2 0h7m1 0h2m3 0h1m1 0h1m1 0h3m3 0h1m3 0h1m1 0h1m4 0h3m2 0h1m6 0h1m2 0h1m2 0h2m3 0h1m2 0h5m1 0h1m3 0h1m2 0h2m7 0h1m1 0h1m4 0h1m2 0h1m1 0h1m1 0h2m4 0h1m3 0h4m1 0h3m4 0h1m1 0h6m3 0h1m4 0h2m3 0h3m1 0h3m2 0h1m1 0h1m1 0h3m1 0h1m2 0h1m1 0h2M1 131.5h1m9 0h1m7 0h1m3 0h1m8 0h1m1 0h1m2 0h1m9 0h1m34 0h5m1 0h1m3 0h1m1 0h1m1 0h1m1 0h1m6 0h1m1 0h1m1 0h1m2 0h1m1 0h1m1 0h1m2 0h2m2 0h1m1 0h1m1 0h6m2 0h1m3 0h6m2 0h1m1 0h1m2 0h4m1 0h2m3 0h2m1 0h2m1 0h1m3 0h1m1 0h1m4 0h1m2 0h1m2 0h5m1 0h3m1 0h1m2 0h4m1 0h1m1 0h1m1 0h2m3 0h1m1 0h1m1 0h1m1 0h3m4 0h4m1 0h2m5 0h7m13 0h1m2 0h1m1 0h4m1 0h1m1 0h1m2 0h1m4 0h1m1 0h4m3 0h1m3 0h1m4 0h1m4 0h1m4 0h3m6 0h4m4 0h1m2 0h4m2 0h1m2 0h1m1 0h1m2 0h1m3 0h2m1 0h1m1 0h3m4 0h1m4 0h7m1 0h2m1 0h1m2 0h2m2 0h1m1 0h2m4 0h1m2 0h2m1 0h1m2 0h1m1 0h1m1 0h3m1 0h1m1 0h3m2 0h5m1 0h1m2 0h1m1 0h1m1 0h3m1 0h1M1 132.5h1m9 0h1m7 0h1m3 0h1m8 0h1m1 0h1m1 0h1m10 0h1m32 0h2m1 0h2m1 0h2m1 0h4m1 0h1m2 0h1m1 0h1m1 0h2m1 0h1m1 0h1m3 0h3m6 0h5m2 0h3m1 0h1m1 0h6m1 0h1m2 0h2m1 0h1m3 0h1m2 0h2m2 0h1m1 0h2m1 0h1m2 0h2m1 0h1m1 0h3m1 0h2m1 0h1m1 0h6m2 0h4m1 0h3m1 0h1m1 0h1m2 0h2m2 0h6m1 0h1m3 0h1m1 0h2m1 0h1m1 0h1m1 0h1m2 0h1m1 0h6m1 0h2m2 0h1m1 0h1m2 0h2m1 0h1m5 0h1m1 0h4m1 0h1m1 0h1m2 0h1m3 0h1m1 0h1m1 0h5m2 0h1m1 0h1m2 0h1m4 0h1m3 0h3m2 0h4m5 0h1m4 0h2m2 0h5m1 0h1m1 0h2m1 0h2m3 0h3m1 0h1m1 0h3m1 0h1m4 0h1m3 0h1m1 0h2m1 0h5m1 0h1m1 0h4m2 0h1m2 0h2m1 0h1m1 0h1m4 0h1m2 0h4m1 0h2m1 0h1m5 0h3m3 0h1m2 0h2m2 0h1m1 0h1m2 0h1m1 0h1m1 0h1m1 0h1M1 133.5h1m9 0h1m7 0h1m3 0h1m8 0h1m1 0h1m1 0h2m9 0h1m33 0h2m1 0h3m1 0h1m4 0h1m2 0h1m1 0h1m6 0h1m1 0h1m1 0h1m2 0h2m1 0h2m1 0h3m1 0h2m1 0h4m1 0h3m1 0h2m1 0h4m3 0h1m2 0h2m1 0h4m1 0h1m1 0h2m2 0h1m1 0h2m1 0h1m6 0h2m3 0h2m5 0h2m2 0h1m2 0h5m1 0h4m1 0h3m1 0h1m1 0h1m1 0h1m1 0h5m5 0h1m1 0h2m1 0h1m1 0h1m1 0h2m3 0h2m1 0h1m16 0h2m3 0h1m1 0h3m1 0h4m1 0h1m2 0h1m1 0h1m3 0h7m4 0h1m5 0h2m1 0h2m1 0h1m1 0h2m1 0h2m5 0h2m1 0h2m3 0h1m2 0h1m3 0h1m1 0h5m1 0h2m1 0h1m1 0h1m1 0h3m1 0h1m2 0h1m1 0h4m1 0h1m1 0h3m1 0h1m1 0h1m4 0h2m1 0h2m1 0h1m2 0h1m4 0h1m3 0h2m1 0h1m1 0h3m3 0h1m1 0h3m2 0h2m1 0h1m2 0h1m2 0h1m2 0h1m1 0h4M1 134.5h1m9 0h1m7 0h1m3 0h1m8 0h1m1 0h2m11 0h1m32 0h2m2 0h1m1 0h1m3 0h3m2 0h1m1 0h1m3 0h2m1 0h3m3 0h2m1 0h3m3 0h1m1 0h3m2 0h1m3 0h1m2 0h2m1 0h3m1 0h1m4 0h2m2 0h1m1 0h1m1 0h8m3 0h5m1 0h1m1 0h3m3 0h1m1 0h2m3 0h4m1 0h2m5 0h1m1 0h2m2 0h1m1 0h5m1 0h2m2 0h1m1 0h2m1 0h1m1 0h2m2 0h1m2 0h3m3 0h1m2 0h1m3 0h1m5 0h1m5 0h1m1 0h2m1 0h1m3 0h1m1 0h1m1 0h1m4 0h3m1 0h1m1 0h1m2 0h1m3 0h4m1 0h1m1 0h2m1 0h1m2 0h2m2 0h1m1 0h2m6 0h2m4 0h1m2 0h2m1 0h4m1 0h1m2 0h1m4 0h2m2 0h1m1 0h1m1 0h1m5 0h4m1 0h1m2 0h2m2 0h1m2 0h4m2 0h1m4 0h1m1 0h1m3 0h1m1 0h2m2 0h2m1 0h1m5 0h2m1 0h1m1 0h2m4 0h3m1 0h4m1 0h2M1 135.5h1m9 0h1m7 0h1m3 0h1m8 0h1m1 0h2m1 0h1m9 0h1m34 0h1m1 0h5m2 0h1m1 0h1m1 0h2m7 0h2m1 0h1m1 0h1m1 0h2m1 0h1m1 0h2m2 0h1m2 0h1m1 0h1m3 0h2m4 0h1m1 0h1m1 0h5m2 0h3m2 0h2m2 0h2m2 0h4m6 0h4m6 0h1m3 0h1m1 0h3m1 0h1m1 0h1m1 0h4m1 0h3m3 0h2m1 0h1m3 0h1m1 0h3m2 0h4m1 0h1m1 0h1m1 0h2m2 0h2m2 0h3m1 0h1m1 0h3m14 0h2m1 0h3m2 0h3m4 0h2m2 0h1m2 0h1m3 0h1m5 0h2m1 0h1m5 0h1m2 0h1m2 0h8m1 0h1m1 0h6m1 0h2m2 0h1m4 0h2m1 0h1m3 0h1m1 0h3m3 0h1m2 0h3m2 0h1m1 0h2m1 0h4m1 0h2m2 0h2m2 0h5m3 0h2m3 0h3m3 0h1m1 0h3m2 0h1m2 0h2m1 0h9m5 0h2m4 0h1m1 0h1M1 136.5h1m9 0h1m7 0h1m3 0h1m8 0h1m1 0h3m10 0h1m32 0h2m1 0h1m1 0h1m1 0h3m1 0h1m2 0h1m2 0h1m1 0h1m1 0h1m1 0h2m1 0h1m1 0h4m5 0h7m2 0h2m4 0h1m1 0h1m1 0h3m6 0h2m2 0h1m3 0h2m1 0h1m2 0h2m1 0h1m2 0h6m2 0h1m7 0h2m2 0h1m1 0h1m1 0h14m1 0h2m1 0h3m1 0h3m4 0h1m1 0h1m1 0h1m4 0h1m1 0h3m1 0h1m2 0h1m4 0h1m3 0h4m3 0h1m1 0h1m4 0h1m4 0h2m3 0h3m1 0h2m2 0h5m3 0h1m5 0h1m2 0h1m4 0h2m1 0h1m3 0h1m5 0h1m1 0h5m1 0h3m1 0h1m3 0h3m1 0h1m1 0h3m3 0h3m2 0h2m5 0h2m1 0h1m1 0h4m1 0h6m5 0h2m1 0h3m1 0h1m1 0h2m2 0h1m3 0h2m3 0h1m3 0h1m2 0h1m1 0h1m2 0h4m2 0h2m1 0h1m5 0h6M1 137.5h1m9 0h1m7 0h1m3 0h1m8 0h1m1 0h4m9 0h1m33 0h2m2 0h2m6 0h2m1 0h1m2 0h1m1 0h2m2 0h1m1 0h3m1 0h2m1 0h3m2 0h1m3 0h1m1 0h2m1 0h1m1 0h4m1 0h1m2 0h1m1 0h1m1 0h3m1 0h3m4 0h5m2 0h2m1 0h4m1 0h2m1 0h5m2 0h2m3 0h5m3 0h2m2 0h2m2 0h2m1 0h3m2 0h1m2 0h1m3 0h2m3 0h1m4 0h3m3 0h1m4 0h2m1 0h2m3 0h1m14 0h1m2 0h3m5 0h1m1 0h4m3 0h1m1 0h2m1 0h2m3 0h2m4 0h1m2 0h2m1 0h2m5 0h1m1 0h1m1 0h3m1 0h3m1 0h4m1 0h1m1 0h1m1 0h2m1 0h2m3 0h1m4 0h2m1 0h2m1 0h4m2 0h1m1 0h1m1 0h2m4 0h3m3 0h3m1 0h1m1 0h1m1 0h1m3 0h1m3 0h1m1 0h1m2 0h1m1 0h1m1 0h3m2 0h1m3 0h3m1 0h2m1 0h3m2 0h2m1 0h2m1 0h3m1 0h1M1 138.5h1m9 0h1m7 0h1m3 0h1m8 0h2m13 0h1m32 0h2m1 0h2m1 0h6m4 0h2m1 0h1m1 0h4m1 0h1m3 0h2m3 0h1m1 0h1m1 0h4m1 0h1m1 0h3m1 0h1m1 0h3m1 0h2m1 0h1m1 0h3m1 0h2m2 0h1m3 0h2m3 0h3m1 0h4m2 0h3m3 0h1m5 0h2m3 0h3m1 0h6m1 0h3m1 0h2m1 0h3m1 0h3m2 0h7m1 0h3m6 0h1m2 0h1m3 0h3m1 0h2m1 0h1m12 0h1m2 0h1m1 0h1m1 0h1m2 0h2m4 0h6m1 0h3m3 0h1m1 0h1m2 0h1m1 0h2m3 0h9m2 0h3m1 0h1m3 0h7m3 0h2m1 0h1m1 0h4m1 0h1m1 0h1m3 0h5m4 0h3m3 0h1m1 0h7m1 0h2m2 0h3m2 0h1m9 0h6m2 0h1m5 0h1m4 0h5m7 0h1m5 0h1m2 0h1M1 139.5h1m9 0h1m7 0h1m3 0h1m8 0h2m3 0h1m9 0h1m33 0h3m1 0h1m1 0h2m1 0h1m5 0h1m1 0h1m3 0h4m1 0h1m1 0h1m2 0h1m1 0h2m5 0h2m1 0h3m1 0h1m2 0h3m1 0h1m1 0h1m2 0h1m1 0h4m2 0h1m3 0h1m2 0h1m1 0h2m3 0h2m2 0h1m5 0h1m5 0h1m1 0h1m2 0h4m2 0h1m1 0h2m1 0h3m1 0h10m1 0h1m1 0h3m2 0h3m3 0h1m2 0h2m1 0h1m1 0h1m2 0h1m1 0h2m1 0h2m1 0h3m12 0h3m5 0h1m4 0h2m2 0h1m2 0h1m2 0h4m1 0h3m1 0h2m5 0h4m1 0h4m1 0h1m4 0h1m2 0h1m1 0h1m5 0h2m4 0h2m1 0h2m2 0h1m1 0h1m1 0h1m1 0h2m1 0h1m1 0h2m8 0h3m3 0h2m2 0h3m1 0h1m2 0h1m3 0h2m9 0h1m3 0h2m1 0h3m1 0h5m3 0h2m2 0h1m3 0h2m3 0h1m1 0h1m3 0h1m1 0h1M1 140.5h1m9 0h1m7 0h1m3 0h1m8 0h2m2 0h1m10 0h1m32 0h2m1 0h2m1 0h2m2 0h2m1 0h3m1 0h5m2 0h1m7 0h4m1 0h3m1 0h2m1 0h1m2 0h1m2 0h1m1 0h2m3 0h5m2 0h1m4 0h1m4 0h1m1 0h1m1 0h7m2 0h4m1 0h2m1 0h1m2 0h5m1 0h4m2 0h3m2 0h1m1 0h6m1 0h9m4 0h2m3 0h1m4 0h1m1 0h5m5 0h5m12 0h3m1 0h1m1 0h1m1 0h1m1 0h1m1 0h1m1 0h1m1 0h1m1 0h3m1 0h5m1 0h4m1 0h2m1 0h1m2 0h2m8 0h2m1 0h1m3 0h2m1 0h1m3 0h1m1 0h2m2 0h1m1 0h1m1 0h1m2 0h1m3 0h1m3 0h2m1 0h1m2 0h4m1 0h2m5 0h2m1 0h3m1 0h2m1 0h1m2 0h2m2 0h1m1 0h3m1 0h3m1 0h2m3 0h1m1 0h1m3 0h1m1 0h1m1 0h1m4 0h1m1 0h4m3 0h1m1 0h4m2 0h5M1 141.5h1m9 0h1m7 0h1m3 0h1m8 0h2m2 0h2m9 0h1m34 0h1m1 0h1m1 0h3m1 0h1m1 0h1m2 0h2m2 0h2m1 0h2m3 0h2m1 0h1m2 0h2m2 0h1m1 0h4m1 0h4m2 0h6m1 0h1m1 0h2m1 0h3m2 0h2m2 0h1m1 0h6m2 0h1m2 0h1m1 0h1m2 0h1m2 0h1m3 0h2m1 0h1m4 0h1m1 0h2m1 0h1m2 0h1m3 0h1m2 0h2m1 0h6m5 0h2m1 0h1m1 0h7m1 0h1m1 0h1m1 0h1m1 0h2m1 0h4m2 0h3m12 0h2m2 0h1m1 0h1m1 0h1m2 0h1m1 0h1m2 0h1m8 0h1m1 0h1m3 0h1m2 0h4m1 0h1m1 0h7m2 0h1m2 0h4m1 0h1m2 0h2m1 0h1m6 0h1m5 0h2m2 0h7m1 0h2m2 0h6m3 0h2m2 0h2m1 0h1m2 0h1m1 0h1m1 0h2m2 0h2m3 0h2m2 0h1m1 0h1m1 0h3m5 0h1m1 0h1m1 0h2m2 0h1m1 0h5m1 0h1m3 0h1m2 0h2m3 0h1M1 142.5h1m9 0h1m7 0h1m3 0h1m8 0h2m1 0h1m11 0h1m32 0h2m1 0h2m1 0h3m2 0h1m1 0h1m5 0h1m1 0h1m2 0h1m1 0h1m1 0h2m3 0h1m4 0h1m2 0h2m1 0h1m1 0h5m1 0h2m2 0h1m1 0h3m2 0h1m1 0h2m2 0h1m1 0h4m1 0h1m1 0h3m3 0h1m2 0h1m1 0h1m3 0h2m4 0h3m5 0h1m2 0h3m2 0h6m3 0h1m1 0h3m1 0h3m3 0h2m2 0h3m4 0h1m2 0h3m1 0h1m1 0h1m1 0h2m2 0h1m14 0h1m8 0h1m3 0h1m7 0h1m1 0h1m2 0h3m1 0h2m3 0h1m5 0h1m1 0h3m2 0h7m1 0h4m1 0h1m1 0h2m2 0h1m1 0h8m1 0h5m2 0h2m2 0h1m5 0h1m1 0h1m1 0h2m2 0h1m1 0h1m2 0h2m2 0h4m1 0h1m4 0h2m1 0h2m6 0h1m6 0h1m1 0h2m2 0h1m2 0h2m1 0h2m2 0h1m1 0h1m2 0h3m1 0h5M1 143.5h1m9 0h1m7 0h1m3 0h1m8 0h2m1 0h1m1 0h1m9 0h1m33 0h2m2 0h1m1 0h1m4 0h4m2 0h3m2 0h1m1 0h1m1 0h1m6 0h1m1 0h2m1 0h2m3 0h2m1 0h2m1 0h3m2 0h1m2 0h2m2 0h3m1 0h3m2 0h4m1 0h2m5 0h2m4 0h1m1 0h2m1 0h1m3 0h3m1 0h8m1 0h3m1 0h1m2 0h2m2 0h1m1 0h2m1 0h2m1 0h1m2 0h4m1 0h2m1 0h3m1 0h2m1 0h2m6 0h1m2 0h5m12 0h1m1 0h1m1 0h1m2 0h2m1 0h1m1 0h1m2 0h4m1 0h2m5 0h3m1 0h1m1 0h1m2 0h1m1 0h1m6 0h2m2 0h1m1 0h7m1 0h3m1 0h2m1 0h1m2 0h2m1 0h2m1 0h4m2 0h3m1 0h4m1 0h2m1 0h2m3 0h2m4 0h1m3 0h1m1 0h2m2 0h2m1 0h2m1 0h1m1 0h3m1 0h1m7 0h1m1 0h1m1 0h1m2 0h1m1 0h1m1 0h1m1 0h5m3 0h3m2 0h1m6 0h1M1 144.5h1m9 0h1m7 0h1m3 0h1m8 0h2m1 0h2m10 0h1m32 0h2m1 0h3m5 0h1m4 0h2m1 0h1m1 0h1m1 0h2m1 0h1m3 0h2m2 0h2m1 0h1m1 0h3m2 0h1m1 0h1m1 0h1m1 0h3m3 0h5m1 0h2m1 0h3m1 0h1m1 0h2m1 0h1m1 0h1m1 0h3m1 0h3m1 0h1m1 0h1m1 0h2m1 0h3m2 0h1m2 0h2m2 0h3m1 0h1m1 0h1m3 0h7m4 0h7m3 0h7m6 0h3m1 0h1m2 0h1m1 0h1m1 0h1m1 0h1m13 0h1m9 0h1m2 0h2m2 0h4m2 0h1m1 0h1m1 0h3m3 0h2m1 0h1m2 0h1m1 0h4m2 0h1m3 0h1m2 0h2m1 0h1m1 0h1m2 0h1m2 0h1m3 0h2m1 0h2m3 0h1m2 0h1m1 0h2m3 0h1m1 0h1m1 0h3m2 0h1m2 0h1m7 0h1m1 0h1m1 0h3m3 0h1m4 0h5m4 0h1m1 0h1m1 0h2m2 0h1m3 0h2m1 0h2m1 0h1m1 0h2m4 0h1m1 0h4m2 0h2m2 0h2M1 145.5h1m9 0h1m7 0h1m3 0h1m8 0h2m1 0h3m9 0h1m32 0h3m1 0h5m4 0h2m3 0h2m3 0h1m1 0h1m2 0h1m3 0h3m4 0h2m3 0h2m1 0h3m1 0h2m1 0h2m1 0h2m4 0h2m1 0h3m3 0h1m1 0h4m2 0h5m2 0h1m3 0h1m1 0h2m3 0h9m1 0h2m2 0h1m1 0h3m1 0h1m4 0h3m1 0h1m1 0h1m3 0h2m4 0h2m1 0h5m1 0h1m1 0h1m1 0h1m1 0h2m1 0h2m1 0h1m1 0h1m5 0h2m3 0h1m3 0h3m1 0h5m1 0h4m2 0h4m1 0h1m1 0h1m1 0h1m2 0h3m2 0h1m2 0h1m3 0h1m1 0h3m1 0h1m5 0h1m2 0h1m1 0h2m2 0h1m1 0h1m1 0h3m1 0h1m1 0h2m2 0h2m1 0h1m4 0h1m1 0h1m1 0h1m1 0h2m2 0h2m1 0h1m1 0h3m2 0h1m4 0h1m1 0h2m4 0h1m2 0h2m2 0h3m3 0h1m1 0h2m2 0h1m1 0h1m3 0h2m3 0h4m3 0h2m3 0h1m3 0h4m3 0h1M1 146.5h1m9 0h1m7 0h1m3 0h1m8 0h3m12 0h1m32 0h1m2 0h2m6 0h1m1 0h2m2 0h1m2 0h2m2 0h1m1 0h1m1 0h5m1 0h2m1 0h1m1 0h4m1 0h1m1 0h2m4 0h2m2 0h5m4 0h1m3 0h2m2 0h4m2 0h3m1 0h3m1 0h8m5 0h2m1 0h1m1 0h3m2 0h1m4 0h1m1 0h1m1 0h3m2 0h5m2 0h2m1 0h2m1 0h1m1 0h4m4 0h1m1 0h1m1 0h1m1 0h1m2 0h2m1 0h2m1 0h1m9 0h1m1 0h2m2 0h2m3 0h1m5 0h1m6 0h6m3 0h1m1 0h3m6 0h1m1 0h1m2 0h1m2 0h2m3 0h2m3 0h1m2 0h2m2 0h2m1 0h1m5 0h2m1 0h1m2 0h1m2 0h1m1 0h2m4 0h1m7 0h3m3 0h1m2 0h1m1 0h3m3 0h1m1 0h1m1 0h4m6 0h1m1 0h4m1 0h1m6 0h1m1 0h5m2 0h2m8 0h9M1 147.5h1m9 0h1m7 0h1m3 0h1m8 0h3m2 0h1m9 0h1m33 0h1m1 0h6m1 0h1m1 0h3m1 0h1m1 0h1m6 0h1m1 0h1m4 0h1m1 0h1m1 0h1m3 0h1m3 0h5m1 0h4m4 0h7m2 0h2m3 0h1m1 0h5m2 0h5m2 0h2m1 0h1m2 0h1m1 0h1m2 0h1m3 0h2m1 0h2m1 0h1m1 0h2m1 0h3m1 0h2m2 0h1m1 0h2m1 0h1m2 0h1m2 0h2m1 0h5m1 0h2m1 0h2m1 0h8m1 0h4m1 0h2m9 0h1m1 0h4m2 0h3m2 0h1m1 0h2m1 0h1m1 0h6m3 0h1m1 0h2m1 0h1m1 0h3m1 0h3m2 0h1m1 0h1m3 0h1m3 0h3m1 0h7m2 0h4m6 0h4m1 0h1m1 0h1m1 0h2m1 0h3m2 0h1m1 0h1m4 0h2m1 0h1m2 0h1m3 0h1m1 0h5m2 0h3m2 0h3m1 0h1m1 0h3m2 0h2m1 0h1m1 0h1m2 0h3m4 0h4m3 0h2m1 0h1m2 0h2m7 0h1M1 148.5h1m9 0h1m7 0h1m3 0h1m8 0h3m1 0h1m10 0h1m33 0h1m1 0h2m2 0h7m2 0h2m3 0h1m1 0h4m4 0h2m7 0h3m1 0h1m3 0h1m4 0h1m2 0h3m1 0h3m2 0h1m3 0h1m1 0h1m1 0h4m2 0h2m2 0h1m1 0h3m1 0h2m2 0h3m1 0h2m2 0h3m2 0h8m3 0h1m1 0h1m1 0h1m2 0h3m2 0h1m1 0h2m1 0h1m2 0h1m1 0h1m2 0h1m1 0h1m2 0h1m1 0h4m2 0h4m1 0h2m3 0h1m2 0h1m3 0h4m3 0h1m1 0h1m1 0h2m2 0h4m3 0h1m5 0h3m2 0h1m2 0h1m1 0h1m1 0h1m2 0h6m2 0h1m1 0h1m3 0h3m1 0h1m1 0h5m2 0h1m3 0h1m2 0h1m2 0h1m1 0h1m5 0h6m6 0h2m1 0h2m1 0h1m3 0h2m3 0h1m1 0h2m2 0h2m1 0h2m2 0h1m4 0h1m1 0h5m1 0h3m3 0h1m1 0h1m1 0h5m1 0h1m8 0h4m1 0h5M1 149.5h1m9 0h1m7 0h1m3 0h1m8 0h3m1 0h2m9 0h1m34 0h1m1 0h6m6 0h1m1 0h1m8 0h1m3 0h1m1 0h2m1 0h2m1 0h1m4 0h9m4 0h4m3 0h1m1 0h1m2 0h1m1 0h8m2 0h3m2 0h1m1 0h2m2 0h1m1 0h1m3 0h1m1 0h1m4 0h3m3 0h2m1 0h7m2 0h3m1 0h1m3 0h2m1 0h3m2 0h2m2 0h1m1 0h4m1 0h1m1 0h4m1 0h5m1 0h1m14 0h4m4 0h1m1 0h1m2 0h3m2 0h5m2 0h2m2 0h3m1 0h2m1 0h2m1 0h4m2 0h6m1 0h2m1 0h1m3 0h2m1 0h2m1 0h1m1 0h1m1 0h1m4 0h3m1 0h2m3 0h1m5 0h1m1 0h1m2 0h1m2 0h1m3 0h1m3 0h1m3 0h2m4 0h6m2 0h1m1 0h1m1 0h3m1 0h5m1 0h2m1 0h1m3 0h1m1 0h1m3 0h1m2 0h2m1 0h4m1 0h1m1 0h2m3 0h1M1 150.5h1m9 0h1m7 0h1m3 0h1m8 0h4m11 0h1m33 0h1m1 0h2m1 0h1m1 0h2m1 0h1m1 0h1m1 0h1m1 0h1m1 0h1m1 0h2m1 0h1m1 0h1m2 0h1m1 0h5m1 0h2m2 0h1m2 0h1m1 0h3m2 0h2m3 0h2m1 0h4m2 0h1m3 0h1m3 0h1m5 0h2m1 0h6m1 0h2m2 0h1m1 0h1m4 0h2m1 0h1m3 0h7m1 0h9m1 0h1m1 0h6m4 0h2m2 0h3m5 0h1m1 0h1m2 0h1m1 0h2m2 0h1m1 0h1m2 0h1m2 0h2m1 0h1m1 0h1m1 0h2m3 0h1m1 0h2m2 0h2m4 0h1m1 0h1m2 0h2m3 0h1m4 0h3m2 0h1m2 0h1m2 0h4m1 0h1m2 0h10m2 0h5m3 0h1m2 0h2m4 0h6m1 0h2m4 0h4m4 0h2m5 0h3m2 0h1m2 0h11m4 0h2m3 0h1m2 0h5m2 0h4m2 0h1m2 0h2m3 0h1m1 0h1m1 0h1m2 0h2m2 0h2M1 151.5h1m9 0h1m7 0h1m3 0h1m8 0h4m1 0h1m9 0h1m33 0h2m2 0h2m1 0h1m1 0h1m2 0h7m3 0h1m1 0h1m1 0h1m1 0h1m2 0h1m1 0h4m1 0h2m1 0h1m1 0h4m1 0h4m2 0h1m3 0h2m1 0h3m2 0h2m3 0h2m1 0h2m4 0h3m1 0h1m2 0h1m2 0h5m1 0h2m1 0h2m1 0h2m1 0h2m1 0h1m2 0h3m1 0h1m1 0h1m1 0h1m1 0h1m1 0h2m6 0h4m1 0h1m1 0h4m2 0h2m1 0h1m1 0h1m1 0h2m1 0h3m3 0h3m6 0h1m5 0h1m1 0h2m1 0h5m1 0h1m3 0h1m1 0h2m1 0h1m1 0h2m1 0h1m1 0h1m1 0h3m2 0h1m3 0h1m2 0h1m3 0h3m4 0h2m8 0h1m4 0h1m1 0h1m7 0h2m2 0h4m5 0h1m1 0h2m3 0h1m2 0h4m1 0h2m2 0h1m1 0h1m1 0h1m3 0h1m2 0h1m1 0h5m5 0h3m1 0h1m2 0h2m1 0h5m1 0h1m5 0h1m1 0h5m1 0h2m3 0h2m1 0h2M1 152.5h1m9 0h1m7 0h1m3 0h1m8 0h5m10 0h1m32 0h4m2 0h3m1 0h2m3 0h1m1 0h1m3 0h2m1 0h1m1 0h1m1 0h1m1 0h4m1 0h1m3 0h3m1 0h2m1 0h2m1 0h1m3 0h1m2 0h2m1 0h2m1 0h2m1 0h2m2 0h6m2 0h6m1 0h1m2 0h2m1 0h1m3 0h1m2 0h2m2 0h1m4 0h2m1 0h4m2 0h3m1 0h3m1 0h7m6 0h2m3 0h1m5 0h1m3 0h1m1 0h4m1 0h1m1 0h1m1 0h1m3 0h1m3 0h1m1 0h1m1 0h1m2 0h1m4 0h3m3 0h1m1 0h4m4 0h1m4 0h6m1 0h2m3 0h5m1 0h3m2 0h1m1 0h2m1 0h2m2 0h2m1 0h1m1 0h1m1 0h1m3 0h2m1 0h2m1 0h2m2 0h3m1 0h1m3 0h1m1 0h3m1 0h1m1 0h3m1 0h1m4 0h6m2 0h1m1 0h1m4 0h1m3 0h1m1 0h2m1 0h1m2 0h4m1 0h1m3 0h1m1 0h3m1 0h1m3 0h1m2 0h1m1 0h4m1 0h1m3 0h3m1 0h2M1 153.5h1m9 0h1m7 0h1m3 0h1m8 0h6m9 0h1m33 0h2m1 0h3m1 0h1m5 0h3m2 0h1m1 0h1m3 0h1m1 0h1m1 0h1m3 0h2m1 0h1m2 0h1m2 0h5m1 0h2m2 0h2m1 0h1m1 0h1m1 0h1m2 0h1m1 0h1m1 0h1m8 0h4m2 0h2m1 0h1m1 0h1m2 0h4m2 0h1m2 0h2m5 0h2m1 0h8m4 0h6m6 0h4m2 0h11m4 0h6m4 0h1m12 0h3m1 0h1m2 0h1m2 0h1m5 0h1m1 0h6m3 0h2m2 0h2m4 0h3m2 0h1m1 0h5m5 0h2m1 0h1m2 0h1m3 0h2m4 0h1m1 0h1m1 0h3m1 0h2m1 0h3m1 0h3m5 0h1m2 0h1m1 0h3m1 0h1m1 0h2m1 0h1m2 0h1m4 0h2m2 0h4m2 0h1m1 0h1m2 0h1m1 0h3m1 0h1m2 0h1m1 0h2m1 0h2m4 0h1m2 0h2m1 0h1m3 0h3m1 0h7M1 154.5h1m9 0h1m7 0h1m3 0h1m22 0h1m33 0h5m2 0h1m2 0h3m4 0h5m2 0h1m1 0h1m4 0h2m4 0h2m1 0h5m3 0h3m5 0h3m3 0h5m4 0h1m1 0h1m2 0h1m2 0h3m1 0h2m2 0h2m4 0h1m1 0h3m1 0h3m1 0h1m1 0h6m1 0h1m4 0h1m3 0h1m1 0h7m5 0h1m1 0h2m3 0h1m1 0h1m6 0h1m1 0h1m1 0h4m2 0h1m14 0h2m1 0h2m1 0h1m1 0h1m1 0h2m5 0h1m3 0h4m1 0h1m2 0h1m1 0h1m3 0h1m1 0h2m1 0h1m2 0h2m1 0h2m5 0h1m1 0h2m1 0h1m1 0h1m1 0h1m1 0h4m7 0h2m1 0h1m1 0h1m3 0h3m2 0h1m2 0h4m1 0h1m2 0h4m6 0h1m2 0h1m2 0h2m1 0h3m3 0h1m8 0h2m2 0h1m5 0h1m1 0h1m3 0h1m5 0h1m2 0h1m5 0h2M1 155.5h1m9 0h1m7 0h1m3 0h1m13 0h1m8 0h1m34 0h1m3 0h6m1 0h1m3 0h4m2 0h2m1 0h3m2 0h1m2 0h1m2 0h2m1 0h2m2 0h3m2 0h1m1 0h2m2 0h1m2 0h1m2 0h5m1 0h3m2 0h3m1 0h4m1 0h4m1 0h2m1 0h1m2 0h2m4 0h1m1 0h1m3 0h2m1 0h1m2 0h1m1 0h1m1 0h1m1 0h1m3 0h2m1 0h1m1 0h3m1 0h1m2 0h6m1 0h3m1 0h2m1 0h4m1 0h1m1 0h2m2 0h4m3 0h1m16 0h7m1 0h5m2 0h1m1 0h1m1 0h3m1 0h1m1 0h4m5 0h3m1 0h3m2 0h2m1 0h2m3 0h1m1 0h1m2 0h4m5 0h1m3 0h6m2 0h2m1 0h2m3 0h1m3 0h9m2 0h4m1 0h1m3 0h1m2 0h1m1 0h1m3 0h3m1 0h1m2 0h1m4 0h2m1 0h1m2 0h2m2 0h1m2 0h1m2 0h1m1 0h1m2 0h3m2 0h2m1 0h1m1 0h1m2 0h4M1 156.5h1m9 0h1m7 0h1m3 0h1m12 0h1m9 0h1m33 0h5m1 0h3m1 0h2m2 0h1m3 0h2m1 0h1m1 0h2m1 0h1m2 0h4m1 0h1m5 0h5m1 0h8m2 0h1m1 0h1m1 0h4m1 0h1m3 0h1m1 0h4m1 0h1m1 0h3m2 0h6m1 0h1m2 0h1m4 0h1m1 0h2m3 0h2m2 0h3m1 0h2m1 0h1m2 0h1m1 0h1m2 0h6m1 0h1m1 0h3m5 0h2m4 0h1m4 0h2m2 0h5m1 0h1m15 0h1m3 0h1m2 0h1m1 0h2m1 0h1m3 0h1m5 0h1m1 0h1m4 0h1m1 0h3m2 0h1m1 0h1m4 0h2m1 0h1m2 0h3m2 0h1m1 0h1m4 0h1m4 0h1m2 0h2m5 0h1m3 0h3m1 0h2m4 0h3m1 0h1m3 0h1m1 0h4m2 0h1m3 0h2m3 0h1m2 0h3m4 0h1m1 0h2m1 0h1m1 0h1m2 0h1m3 0h2m4 0h3m2 0h2m3 0h1m1 0h1m2 0h1m1 0h1m2 0h2m2 0h1M1 157.5h1m9 0h1m7 0h1m3 0h1m12 0h2m8 0h1m38 0h1m1 0h4m2 0h2m1 0h1m1 0h2m5 0h1m2 0h1m3 0h1m1 0h1m1 0h1m2 0h2m1 0h4m1 0h2m1 0h2m1 0h1m1 0h1m1 0h1m2 0h1m2 0h2m1 0h5m1 0h2m1 0h3m3 0h1m6 0h1m2 0h2m1 0h1m1 0h1m2 0h1m3 0h1m1 0h3m3 0h4m2 0h6m1 0h3m2 0h1m2 0h1m1 0h1m3 0h3m1 0h1m1 0h3m3 0h1m2 0h5m1 0h4m13 0h1m3 0h1m3 0h1m1 0h3m3 0h4m2 0h3m4 0h1m2 0h6m1 0h1m1 0h2m3 0h1m1 0h1m1 0h2m2 0h5m1 0h1m1 0h4m1 0h1m1 0h1m1 0h1m2 0h1m1 0h1m2 0h2m2 0h1m1 0h1m1 0h2m1 0h1m2 0h1m1 0h2m1 0h5m2 0h3m3 0h2m1 0h1m2 0h3m1 0h4m4 0h2m6 0h1m1 0h1m3 0h2m3 0h3m2 0h1m2 0h2m1 0h1m5 0h1m1 0h4M1 158.5h1m9 0h1m7 0h1m3 0h1m11 0h1m10 0h1m33 0h4m2 0h2m3 0h1m2 0h2m1 0h1m1 0h1m1 0h1m1 0h2m1 0h1m3 0h3m1 0h2m3 0h6m1 0h2m1 0h4m1 0h1m1 0h1m1 0h1m1 0h1m1 0h1m2 0h1m3 0h2m1 0h3m1 0h1m1 0h2m1 0h1m1 0h3m1 0h1m5 0h1m4 0h1m2 0h1m2 0h3m4 0h1m3 0h3m1 0h3m2 0h4m1 0h2m1 0h1m3 0h2m2 0h2m3 0h1m1 0h1m1 0h1m1 0h1m4 0h1m1 0h5m14 0h2m2 0h1m1 0h1m1 0h2m1 0h1m3 0h1m2 0h1m3 0h1m2 0h3m1 0h8m1 0h1m2 0h1m1 0h1m1 0h2m3 0h1m2 0h6m2 0h3m2 0h4m5 0h2m1 0h1m1 0h1m1 0h1m1 0h1m3 0h1m1 0h4m2 0h2m1 0h1m3 0h1m1 0h2m1 0h2m3 0h1m1 0h3m2 0h1m1 0h1m1 0h1m1 0h1m2 0h1m3 0h1m1 0h2m1 0h1m1 0h5m2 0h1m2 0h4m1 0h1m2 0h4m1 0h2m4 0h1M1 159.5h1m9 0h1m7 0h1m3 0h1m11 0h1m1 0h1m8 0h1m34 0h1m2 0h3m2 0h1m3 0h2m1 0h1m1 0h2m2 0h1m2 0h1m2 0h2m4 0h3m1 0h3m2 0h3m1 0h2m1 0h3m2 0h1m1 0h1m1 0h2m1 0h1m2 0h4m1 0h1m2 0h3m1 0h2m4 0h1m1 0h1m3 0h1m1 0h4m3 0h4m3 0h1m1 0h1m1 0h1m1 0h2m2 0h2m1 0h1m1 0h1m2 0h5m2 0h7m1 0h2m1 0h3m1 0h4m1 0h1m2 0h1m1 0h5m1 0h3m14 0h3m1 0h1m2 0h2m2 0h2m1 0h1m3 0h2m2 0h1m1 0h2m2 0h1m1 0h2m2 0h2m3 0h1m1 0h1m1 0h3m1 0h3m1 0h1m1 0h1m1 0h1m1 0h1m5 0h2m1 0h2m2 0h1m5 0h1m3 0h1m3 0h3m1 0h7m2 0h2m1 0h1m5 0h2m1 0h3m2 0h2m2 0h1m2 0h1m6 0h3m2 0h1m5 0h2m4 0h2m1 0h2m2 0h4m2 0h1m1 0h1m1 0h1m1 0h4m1 0h1M1 160.5h1m9 0h1m7 0h1m3 0h1m11 0h2m9 0h1m33 0h2m1 0h1m4 0h4m7 0h1m1 0h1m2 0h1m1 0h1m3 0h2m2 0h2m3 0h6m1 0h2m2 0h5m1 0h2m2 0h4m1 0h1m3 0h3m1 0h3m2 0h5m2 0h3m2 0h1m2 0h1m1 0h4m1 0h2m1 0h4m1 0h3m1 0h4m1 0h6m1 0h2m1 0h6m3 0h2m2 0h2m5 0h1m1 0h2m1 0h1m3 0h1m1 0h1m18 0h1m1 0h2m1 0h1m1 0h3m3 0h1m1 0h3m3 0h2m1 0h1m1 0h1m4 0h1m3 0h2m2 0h1m1 0h2m1 0h2m1 0h1m1 0h1m1 0h1m1 0h4m5 0h3m2 0h1m1 0h1m4 0h1m3 0h1m3 0h2m1 0h1m2 0h1m1 0h2m3 0h5m4 0h1m2 0h1m2 0h1m2 0h7m5 0h1m2 0h2m1 0h5m2 0h1m2 0h4m1 0h3m3 0h5m2 0h1m4 0h1m1 0h5M1 161.5h1m9 0h1m7 0h1m3 0h1m11 0h3m8 0h1m34 0h2m1 0h1m1 0h2m2 0h1m1 0h1m5 0h3m1 0h1m2 0h1m1 0h1m1 0h1m4 0h2m1 0h1m1 0h3m1 0h4m1 0h1m1 0h4m1 0h1m1 0h1m1 0h3m1 0h1m3 0h2m2 0h1m1 0h1m1 0h3m3 0h3m2 0h1m1 0h2m1 0h2m5 0h3m1 0h1m4 0h1m1 0h1m1 0h2m1 0h1m3 0h3m2 0h1m1 0h1m3 0h1m1 0h5m1 0h1m1 0h1m2 0h1m3 0h1m1 0h1m1 0h1m1 0h2m1 0h1m2 0h1m1 0h1m1 0h2m14 0h1m1 0h1m4 0h1m3 0h1m1 0h1m2 0h2m1 0h2m1 0h2m5 0h3m2 0h2m5 0h1m1 0h2m6 0h2m1 0h1m1 0h1m2 0h1m1 0h1m4 0h3m1 0h2m2 0h1m1 0h2m1 0h1m2 0h2m5 0h1m2 0h2m1 0h1m1 0h1m1 0h1m1 0h2m1 0h2m3 0h5m1 0h1m1 0h2m1 0h2m2 0h1m2 0h1m1 0h1m2 0h2m3 0h1m1 0h2m3 0h3m1 0h5m1 0h1m3 0h4m2 0h1m3 0h1M1 162.5h1m9 0h1m7 0h1m3 0h1m10 0h1m11 0h1m33 0h4m1 0h1m1 0h2m2 0h1m2 0h1m1 0h1m1 0h2m1 0h1m1 0h2m1 0h1m2 0h7m1 0h1m1 0h3m1 0h2m1 0h3m1 0h1m1 0h3m1 0h3m3 0h2m1 0h1m3 0h1m1 0h1m1 0h2m3 0h3m1 0h2m1 0h1m1 0h4m3 0h1m1 0h1m1 0h1m2 0h1m3 0h3m1 0h4m1 0h2m1 0h1m1 0h4m1 0h1m1 0h5m1 0h1m2 0h1m1 0h1m2 0h1m4 0h1m1 0h1m1 0h5m2 0h1m1 0h2m2 0h1m2 0h1m1 0h1m2 0h1m1 0h3m2 0h1m1 0h2m1 0h1m1 0h1m1 0h1m1 0h3m1 0h1m2 0h1m2 0h2m2 0h3m1 0h4m5 0h1m1 0h2m3 0h1m2 0h1m4 0h1m2 0h1m1 0h2m1 0h2m5 0h2m3 0h3m3 0h2m1 0h2m2 0h2m1 0h1m2 0h2m3 0h1m1 0h1m2 0h1m1 0h2m1 0h4m1 0h1m2 0h1m1 0h1m1 0h2m1 0h1m5 0h2m1 0h3m2 0h6m2 0h1m3 0h2m1 0h1m2 0h2m2 0h3m1 0h2m1 0h1m1 0h2M1 163.5h1m9 0h1m7 0h1m3 0h1m10 0h1m2 0h1m8 0h1m36 0h3m1 0h6m1 0h1m2 0h1m5 0h1m1 0h1m1 0h3m2 0h1m1 0h1m1 0h1m1 0h2m1 0h13m1 0h1m2 0h2m2 0h5m1 0h1m1 0h4m1 0h4m2 0h4m1 0h2m1 0h1m1 0h4m1 0h2m4 0h1m3 0h2m1 0h1m2 0h2m1 0h2m1 0h2m3 0h3m6 0h1m2 0h2m2 0h8m1 0h1m1 0h1m1 0h2m1 0h1m4 0h1m1 0h1m3 0h1m2 0h1m9 0h1m2 0h1m3 0h1m1 0h2m2 0h3m2 0h3m1 0h2m2 0h1m1 0h2m3 0h1m2 0h1m2 0h1m1 0h2m1 0h2m4 0h5m1 0h6m1 0h1m1 0h2m1 0h3m2 0h4m4 0h1m1 0h2m3 0h1m1 0h1m1 0h2m1 0h1m1 0h1m2 0h3m1 0h2m1 0h1m1 0h3m1 0h1m1 0h1m3 0h1m2 0h1m1 0h1m1 0h1m1 0h3m1 0h4m1 0h1m2 0h1m2 0h1m5 0h2m2 0h2m2 0h2m1 0h1m1 0h2m2 0h1m1 0h1M1 164.5h1m9 0h1m7 0h1m3 0h1m10 0h1m1 0h1m9 0h1m33 0h1m5 0h2m2 0h2m2 0h1m1 0h4m3 0h1m1 0h1m3 0h4m2 0h1m1 0h1m1 0h6m1 0h3m1 0h5m1 0h1m1 0h2m3 0h1m3 0h1m1 0h2m1 0h3m3 0h3m1 0h1m4 0h1m2 0h2m1 0h1m2 0h3m2 0h1m1 0h4m2 0h2m4 0h1m1 0h1m1 0h4m1 0h1m3 0h2m2 0h2m3 0h1m2 0h1m1 0h1m4 0h1m1 0h1m1 0h1m1 0h1m2 0h1m1 0h1m8 0h3m2 0h1m1 0h4m2 0h1m1 0h2m1 0h1m2 0h1m1 0h1m1 0h4m3 0h1m2 0h1m4 0h1m1 0h1m3 0h1m4 0h2m1 0h1m2 0h2m1 0h4m2 0h2m2 0h2m1 0h3m1 0h2m2 0h1m1 0h1m2 0h3m4 0h1m2 0h3m1 0h1m1 0h1m3 0h1m2 0h3m5 0h4m1 0h1m1 0h2m1 0h1m3 0h1m1 0h1m1 0h2m8 0h1m2 0h3m5 0h1m1 0h1m3 0h2m2 0h1m3 0h2m2 0h6M1 165.5h1m9 0h1m7 0h1m3 0h1m10 0h1m1 0h2m8 0h1m33 0h4m2 0h3m2 0h2m1 0h1m1 0h2m2 0h1m2 0h1m1 0h1m2 0h2m2 0h1m1 0h2m1 0h1m1 0h2m1 0h6m2 0h3m2 0h1m1 0h1m2 0h3m1 0h5m2 0h1m3 0h3m3 0h4m1 0h1m2 0h1m2 0h1m1 0h2m3 0h1m2 0h2m1 0h7m1 0h1m1 0h1m2 0h1m3 0h1m1 0h2m1 0h1m1 0h1m3 0h6m1 0h1m2 0h4m1 0h1m3 0h6m3 0h2m15 0h1m1 0h1m2 0h3m1 0h2m2 0h6m4 0h1m2 0h1m1 0h1m3 0h1m3 0h2m1 0h1m1 0h1m1 0h6m1 0h1m1 0h2m1 0h1m2 0h5m1 0h2m3 0h4m1 0h1m1 0h4m3 0h1m1 0h1m1 0h1m4 0h1m3 0h2m3 0h1m1 0h3m1 0h1m4 0h4m2 0h2m1 0h4m2 0h2m1 0h2m2 0h1m13 0h3m1 0h1m1 0h3m4 0h1m1 0h2M1 166.5h1m9 0h1m11 0h1m10 0h2m10 0h1m18 0h1m2 0h2m1 0h1m8 0h1m2 0h2m1 0h3m1 0h3m2 0h2m1 0h1m2 0h1m2 0h1m1 0h1m3 0h2m1 0h2m1 0h1m2 0h3m4 0h5m5 0h1m2 0h1m2 0h2m3 0h1m1 0h1m2 0h1m3 0h1m1 0h3m3 0h2m1 0h1m2 0h1m2 0h2m1 0h3m2 0h1m2 0h2m1 0h1m1 0h5m1 0h3m1 0h2m1 0h6m3 0h1m3 0h1m1 0h2m1 0h3m6 0h3m4 0h1m2 0h2m2 0h1m1 0h1m3 0h5m1 0h1m1 0h1m2 0h3m2 0h6m1 0h2m2 0h6m1 0h1m1 0h1m1 0h3m3 0h3m1 0h2m1 0h1m2 0h1m1 0h1m1 0h1m1 0h3m1 0h2m4 0h2m2 0h1m2 0h1m1 0h2m1 0h2m1 0h1m2 0h1m3 0h1m2 0h1m3 0h1m3 0h4m4 0h1m2 0h1m5 0h1m1 0h2m1 0h4m1 0h3m1 0h1m1 0h1m1 0h1m5 0h1m3 0h1m1 0h1m2 0h1m1 0h2m2 0h2m2 0h1m2 0h2m1 0h1m1 0h1m1 0h1m3 0h1M1 167.5h1m9 0h1m7 0h1m3 0h1m10 0h2m1 0h1m8 0h1m33 0h3m1 0h3m1 0h2m1 0h1m4 0h1m6 0h1m1 0h1m1 0h1m3 0h2m3 0h1m3 0h1m1 0h1m2 0h3m2 0h1m1 0h2m1 0h1m1 0h3m2 0h1m1 0h2m1 0h2m2 0h3m1 0h4m2 0h2m2 0h2m1 0h2m1 0h1m1 0h2m3 0h3m4 0h3m1 0h1m4 0h1m1 0h1m3 0h2m1 0h3m1 0h1m1 0h2m1 0h1m1 0h3m1 0h1m2 0h3m1 0h2m1 0h1m4 0h1m1 0h1m6 0h3m1 0h1m3 0h1m2 0h1m2 0h1m3 0h1m2 0h1m1 0h1m2 0h5m1 0h1m3 0h1m1 0h1m1 0h3m1 0h3m1 0h1m3 0h1m3 0h1m1 0h5m3 0h1m2 0h1m1 0h1m1 0h4m1 0h2m3 0h3m4 0h1m1 0h2m2 0h3m2 0h1m2 0h2m2 0h4m2 0h1m2 0h1m4 0h1m2 0h4m2 0h1m3 0h7m1 0h6m2 0h1m1 0h1m1 0h2m2 0h1m1 0h1m7 0h1m1 0h2m2 0h4m1 0h6M1 168.5h1m9 0h1m7 0h1m3 0h1m10 0h3m9 0h1m33 0h5m1 0h3m1 0h2m2 0h2m2 0h1m2 0h2m1 0h1m1 0h1m1 0h1m2 0h3m1 0h1m1 0h1m2 0h3m3 0h3m3 0h1m1 0h1m1 0h3m1 0h4m1 0h1m3 0h3m1 0h1m4 0h1m2 0h1m1 0h6m1 0h1m7 0h1m1 0h3m1 0h4m1 0h3m3 0h3m2 0h2m2 0h9m1 0h1m2 0h2m1 0h2m1 0h1m2 0h1m2 0h6m1 0h1m1 0h1m1 0h3m2 0h1m1 0h2m1 0h2m1 0h1m1 0h5m1 0h1m4 0h1m2 0h2m1 0h1m2 0h1m6 0h2m2 0h2m3 0h1m1 0h1m3 0h2m2 0h1m1 0h1m1 0h1m1 0h5m1 0h1m3 0h1m2 0h1m2 0h1m3 0h1m3 0h1m1 0h2m3 0h2m2 0h2m3 0h1m2 0h2m2 0h3m1 0h1m1 0h2m1 0h3m1 0h1m1 0h1m1 0h1m1 0h2m1 0h3m1 0h1m2 0h1m6 0h1m1 0h2m1 0h1m6 0h1m2 0h2m1 0h2m1 0h1m1 0h1m1 0h3m1 0h1m2 0h2M1 169.5h1m9 0h1m7 0h1m3 0h1m10 0h4m8 0h1m34 0h2m1 0h4m1 0h2m2 0h3m2 0h2m3 0h1m1 0h1m5 0h2m1 0h1m1 0h1m2 0h2m1 0h1m2 0h3m3 0h2m2 0h1m2 0h1m1 0h1m1 0h1m4 0h2m3 0h4m1 0h1m7 0h2m1 0h2m1 0h2m1 0h1m2 0h2m1 0h1m5 0h2m1 0h1m2 0h1m1 0h1m1 0h1m1 0h3m3 0h4m4 0h1m1 0h2m2 0h6m1 0h2m3 0h1m1 0h1m2 0h2m1 0h2m2 0h2m12 0h1m1 0h2m5 0h5m2 0h3m2 0h2m6 0h1m2 0h1m1 0h2m1 0h3m2 0h1m3 0h1m1 0h2m1 0h1m1 0h2m1 0h3m1 0h2m2 0h1m1 0h1m2 0h4m2 0h2m3 0h2m2 0h1m2 0h2m3 0h5m3 0h1m1 0h1m1 0h1m2 0h2m5 0h4m1 0h1m1 0h7m4 0h1m1 0h2m3 0h6m1 0h2m4 0h1m1 0h6m3 0h2m6 0h1M1 170.5h1m9 0h1m7 0h1m3 0h1m9 0h1m12 0h1m33 0h1m1 0h2m3 0h1m1 0h1m1 0h1m2 0h4m1 0h1m1 0h1m1 0h2m1 0h2m1 0h2m1 0h1m1 0h2m1 0h1m3 0h2m3 0h2m2 0h1m2 0h1m2 0h2m1 0h1m2 0h1m2 0h1m3 0h1m2 0h3m1 0h5m1 0h2m3 0h4m2 0h1m6 0h2m2 0h1m1 0h1m2 0h3m1 0h1m2 0h6m1 0h1m1 0h2m1 0h1m2 0h1m1 0h1m2 0h3m3 0h1m1 0h1m2 0h1m1 0h4m5 0h1m1 0h3m13 0h1m4 0h1m2 0h1m1 0h2m1 0h2m1 0h1m3 0h3m1 0h2m1 0h1m1 0h7m2 0h2m6 0h1m1 0h1m3 0h1m1 0h1m1 0h2m3 0h4m3 0h1m1 0h2m1 0h2m2 0h1m3 0h6m3 0h2m1 0h2m1 0h1m1 0h5m1 0h1m2 0h1m1 0h4m1 0h1m4 0h2m3 0h1m1 0h2m4 0h1m1 0h2m2 0h1m3 0h1m1 0h1m3 0h1m4 0h1m1 0h3m1 0h1m2 0h2m3 0h1m1 0h2M1 171.5h1m9 0h1m7 0h1m3 0h1m9 0h1m3 0h1m8 0h1m34 0h2m1 0h3m3 0h1m1 0h1m3 0h2m1 0h1m5 0h1m1 0h1m2 0h1m3 0h1m2 0h1m1 0h2m1 0h1m2 0h2m1 0h1m1 0h6m1 0h1m1 0h1m3 0h2m1 0h3m3 0h4m1 0h2m2 0h2m2 0h1m3 0h1m2 0h1m3 0h1m1 0h3m1 0h1m2 0h2m1 0h1m3 0h6m2 0h1m2 0h3m1 0h1m1 0h2m1 0h3m1 0h2m1 0h2m1 0h3m1 0h3m1 0h1m2 0h1m1 0h5m2 0h2m13 0h1m1 0h2m2 0h1m1 0h1m1 0h1m2 0h2m2 0h1m1 0h2m1 0h3m1 0h1m1 0h2m5 0h2m7 0h1m2 0h3m1 0h1m1 0h1m1 0h2m1 0h2m2 0h1m3 0h2m2 0h1m2 0h1m6 0h3m4 0h1m5 0h1m5 0h1m2 0h1m1 0h1m1 0h1m2 0h2m1 0h1m1 0h2m1 0h4m2 0h1m2 0h1m2 0h1m5 0h2m1 0h3m3 0h4m1 0h1m1 0h2m1 0h1m1 0h1m1 0h3m8 0h2M1 172.5h1m9 0h1m7 0h1m3 0h1m9 0h1m2 0h1m9 0h1m33 0h2m1 0h1m3 0h2m2 0h2m1 0h1m2 0h2m2 0h2m1 0h3m1 0h3m1 0h6m3 0h2m3 0h2m4 0h2m2 0h5m1 0h2m3 0h1m1 0h1m2 0h1m1 0h1m1 0h1m1 0h2m1 0h5m1 0h1m1 0h2m2 0h1m2 0h3m1 0h2m1 0h1m1 0h4m1 0h1m1 0h1m1 0h1m2 0h3m1 0h3m4 0h2m1 0h1m1 0h1m2 0h2m1 0h4m1 0h1m1 0h3m2 0h1m1 0h1m1 0h2m1 0h1m1 0h2m14 0h3m8 0h2m3 0h1m4 0h3m1 0h2m3 0h2m1 0h1m1 0h6m4 0h1m1 0h4m1 0h3m4 0h1m2 0h1m1 0h3m1 0h3m1 0h1m4 0h3m1 0h4m2 0h2m2 0h1m3 0h1m7 0h1m2 0h2m1 0h3m1 0h1m1 0h1m8 0h2m1 0h1m8 0h1m3 0h1m1 0h2m2 0h1m3 0h1m1 0h2m2 0h3m2 0h1m1 0h4m4 0h1M1 173.5h1m9 0h1m7 0h1m3 0h1m9 0h1m2 0h2m8 0h1m34 0h1m3 0h2m1 0h1m6 0h5m5 0h5m2 0h1m7 0h2m3 0h5m1 0h2m2 0h4m2 0h4m3 0h1m3 0h6m5 0h1m1 0h2m1 0h1m1 0h3m1 0h1m1 0h5m4 0h3m3 0h6m1 0h3m2 0h3m6 0h4m1 0h4m1 0h1m3 0h1m1 0h1m1 0h1m2 0h1m4 0h6m13 0h1m1 0h4m4 0h1m1 0h3m3 0h1m1 0h2m3 0h1m1 0h1m1 0h10m1 0h1m3 0h1m1 0h1m1 0h1m1 0h4m3 0h2m2 0h1m1 0h1m1 0h2m2 0h6m1 0h1m1 0h4m3 0h1m1 0h1m7 0h5m1 0h2m1 0h1m1 0h1m1 0h2m1 0h1m2 0h4m1 0h2m2 0h4m1 0h1m1 0h2m3 0h1m5 0h1m1 0h2m2 0h1m1 0h1m3 0h2m2 0h1m2 0h1m3 0h1m1 0h1m2 0h2M1 174.5h1m9 0h1m7 0h1m3 0h1m9 0h1m1 0h1m10 0h1m18 0h1m2 0h2m1 0h1m8 0h1m2 0h2m1 0h6m2 0h1m2 0h1m2 0h2m2 0h1m1 0h1m3 0h1m2 0h1m1 0h2m2 0h3m4 0h3m1 0h1m1 0h3m1 0h2m2 0h7m2 0h1m1 0h1m4 0h1m1 0h1m3 0h4m1 0h2m1 0h1m2 0h2m1 0h1m3 0h3m2 0h2m1 0h4m1 0h1m1 0h1m1 0h1m1 0h2m3 0h5m2 0h1m1 0h2m1 0h2m4 0h1m4 0h1m1 0h2m2 0h1m2 0h2m2 0h3m13 0h1m2 0h1m1 0h1m1 0h1m1 0h3m5 0h1m2 0h1m1 0h4m2 0h2m2 0h1m2 0h1m3 0h1m2 0h2m1 0h1m3 0h3m2 0h3m1 0h1m3 0h2m1 0h2m3 0h1m2 0h2m1 0h1m4 0h2m2 0h1m2 0h2m2 0h1m2 0h1m2 0h2m1 0h2m2 0h3m1 0h4m1 0h4m3 0h2m1 0h1m1 0h2m1 0h1m5 0h1m6 0h2m5 0h1m4 0h2m1 0h2m1 0h1m1 0h1m1 0h5m1 0h2" stroke="#fff" stroke-width="1" fill="none"/><path d="M0 77.5h428M384.5 0v175" stroke="#960000" stroke-width="1" fill="none"/><path d="M1 77.5h1M11 77.5h1M19 77.5h1M23 77.5h1M32 77.5h2M36 77.5h2M65 77.5h1M68 77.5h2M71 77.5h1M81 77.5h2M88 77.5h1M92 77.5h1M97 77.5h2M100 77.5h2M103 77.5h1M105 77.5h1M107 77.5h3M111 77.5h4M116 77.5h1M120 77.5h1M122 77.5h2M125 77.5h1M127 77.5h2M133 77.5h1M135 77.5h1M137 77.5h4M144 77.5h1M147 77.5h2M152 77.5h3M157 77.5h2M161 77.5h1M163 77.5h1M165 77.5h2M169 77.5h5M179 77.5h1M183 77.5h2M186 77.5h2M189 77.5h3M194 77.5h3M200 77.5h1M202 77.5h4M208 77.5h1M211 77.5h1M213 77.5h2M219 77.5h5M225 77.5h2M228 77.5h1M230 77.5h1M232 77.5h2M235 77.5h4M243 77.5h1M248 77.5h1M253 77.5h1M256 77.5h1M258 77.5h2M262 77.5h5M268 77.5h1M270 77.5h1M272 77.5h1M274 77.5h1M280 77.5h3M286 77.5h1M289 77.5h1M291 77.5h1M294 77.5h1M296 77.5h2M305 77.5h2M309 77.5h1M315 77.5h2M318 77.5h1M321 77.5h5M327 77.5h6M335 77.5h1M341 77.5h1M343 77.5h1M347 77.5h5M354 77.5h2M358 77.5h3M364 77.5h1M367 77.5h1M372 77.5h1M380 77.5h4M385 77.5h1M387 77.5h1M395 77.5h2M399 77.5h1M402 77.5h2M407 77.5h1M411 77.5h1M413 77.5h2M416 77.5h3M420 77.5h3M424 77.5h1M426 77.5h2M384.5 26v2M384.5 29v3M384.5 33v2M384.5 37v2M384.5 40v1M384.5 45v1M384.5 47v3M384.5 53v2M384.5 56v1M384.5 59v1M384.5 61v1M384.5 63v1M384.5 65v2M384.5 68v3M384.5 73v1M384.5 76v1M384.5 78v1M384.5 81v1M384.5 83v1M384.5 85v5M384.5 92v2M384.5 96v1M384.5 100v2M384.5 103v2M384.5 107v1M384.5 110v3M384.5 114v1M384.5 117v1M384.5 119v1M384.5 123v2M384.5 126v1M384.5 129v2M384.5 137v1M384.5 139v1M384.5 143v1M384.5 145v1M384.5 148v1M384.5 151v2M384.5 154v2M384.5 160v1M384.5 163v2M384.5 166v1M384.5 169v1M384.5 172v2" stroke="#f00" stroke-width="1" fill="none"/></svg>
<div class="a" style="left:7px;top:193px;width:2px;height:2px;background:#960000"></div>
<div class="a" style="left:865px;top:193px;width:2px;height:2px;background:#960000"></div>
<div class="a" style="left:777px;top:37px;width:2px;height:2px;background:#960000"></div>
<div class="a" style="left:777px;top:389px;width:2px;height:2px;background:#960000"></div>
<div class="a sb" style="left:867px;top:37px;width:17px;height:354px">
<svg style="left:5px;top:8px" width="7" height="4" viewBox="0 0 7 4"><path d="M0 4L3.500 0 7 4z" fill="#555"/></svg>
<svg style="left:5px;top:343px" width="7" height="4" viewBox="0 0 7 4"><path d="M0 0L3.500 4 7 0z" fill="#555"/></svg>
<div class="a thumb" style="left:1px;top:32px;width:15px;height:17px"><svg style="left:3px;top:4px" width="7" height="7" viewBox="0 0 7 7" shape-rendering="crispEdges"><path d="M0 .5h7M0 2.500h7M0 4.500h7M0 6.500h7" stroke="#7a8296" stroke-width="1"/></svg></div>
</div>
<div class="a tbx" style="left:8px;top:392px;width:424.5px;padding:0"><span class="a w" style="left:1.4px;letter-spacing:-0.20px">Byte</span><span class="a w" style="left:25.3px;letter-spacing:0.38px">position:</span><span class="a w" style="left:74.3px;letter-spacing:-0.60px">53;</span><span class="a w" style="left:93.1px;letter-spacing:-0.39px">Row:</span><span class="a w" style="left:122px;letter-spacing:-0.43px">108300;</span><span class="a w" style="left:163.5px;letter-spacing:0.07px">Address:</span><span class="a w" style="left:211.1px;letter-spacing:-0.39px">1996185653;</span><span class="a w" style="left:276.5px;letter-spacing:-0.03px">Value:</span><span class="a w" style="left:310.4px;letter-spacing:0.00px">26</span></div>
<div class="a sbh" style="left:437px;top:391px;width:430px;height:17px">
<svg style="left:8px;top:5px" width="4" height="7" viewBox="0 0 4 7"><path d="M4 0L0 3.500 4 7z" fill="#555"/></svg>
<svg style="left:418.5px;top:5px" width="4" height="7" viewBox="0 0 4 7"><path d="M0 0L4 3.500 0 7z" fill="#555"/></svg>
<div class="a thumbh" style="left:18px;top:1px;width:18px;height:15px"><svg style="left:4px;top:3px" width="8" height="7" viewBox="0 0 8 7" shape-rendering="crispEdges"><path d="M.5 0v7M2.500 0v7M4.500 0v7M6.500 0v7" stroke="#5f6678" stroke-width="1"/></svg></div>
</div>
<div class="a" style="left:867px;top:391px;width:17px;height:17px;background:#fff;font-size:9px;line-height:18px;text-align:center;letter-spacing:-.8px;color:#000;padding-right:1px">64</div>
<div class="a txt" style="left:12px;top:413px;letter-spacing:.08px">Address:</div>
<div class="a txt" style="left:66.5px;top:413px;letter-spacing:-.13px">1996904496</div>
<div class="a txt" style="left:136.5px;top:413px;letter-spacing:-.07px">Selected:</div>
<div class="a tab ac" style="left:895px;top:9px;width:148px">
<svg class="a" style="left:2px;top:2px" width="16" height="16" viewBox="0 0 17 16" preserveAspectRatio="none">
<path d="M4.400.8H15.100c1 0 1.400.5 1.400 1.300V3.700H14.100L12.700 14.500H2.200C1.100 14.500.5 13.900.5 13V11.600H2.900z" fill="#f3f9fd" stroke="#1b7ec3" stroke-width="1.150" stroke-linejoin="round"/>
<path d="M.7 11.600H9.800c.7 0 1 .5 1 1.200M14.100 3.700V2.300" fill="none" stroke="#1b7ec3" stroke-width="1"/>
<g fill="none" stroke="#383838" stroke-width="1.100">
<ellipse cx="6.700" cy="3.900" rx="1.150" ry="1.600"/><path d="M10.800 2.200v3.400M9.800 3l1-.8"/>
<path d="M5.300 7.100v3.400M4.300 7.900l1-.8"/><ellipse cx="8.800" cy="8.800" rx="1.150" ry="1.600"/></g>
</svg>
<div class="a tt" style="left:20.500px;letter-spacing:.22px">Silicon</div>
<div class="a tt" style="left:57px;letter-spacing:.92px">Motion</div>
<div class="a tt" style="left:97.800px;letter-spacing:-.5px">XOR</div>
<div class="a tt" style="left:123px">1</div>
<svg class="a" style="left:134px;top:6px" width="9" height="9" viewBox="0 0 9 9"><path d="M.7.7l7.600 7.600M8.300.7L.7 8.300" stroke="#4f4b3c" stroke-width="1.25" fill="none"/></svg>
</div>
<div class="a band ac" style="left:895px;top:30px;width:1021px;height:4px;border-radius:0 3px 0 0"></div>
<div class="a band ac" style="left:895px;top:430px;width:1021px;height:4px;border-radius:0 0 3px 3px"></div>
<div class="a frame" style="left:895px;top:34px;width:1021px;height:396px"></div>
<div class="a ib" style="left:897px;top:36px;width:1015px;height:373px"></div>
<div class="a dash" style="left:898px;top:37px;width:996px;height:2px;background-position:2px 0"></div>
<div class="a dash" style="left:898px;top:389px;width:996px;height:2px;background-position:2px 0"></div>
<div class="a dashv" style="left:898px;top:39px;width:2px;height:350px"></div>
<div class="a dashv" style="left:1892px;top:39px;width:2px;height:350px"></div>
<div class="a" style="left:898px;top:37px;width:2px;height:2px;background:#fff"></div>
<div class="a" style="left:1892px;top:37px;width:2px;height:2px;background:#fff"></div>
<div class="a" style="left:1892px;top:389px;width:2px;height:2px;background:#fff"></div>
<svg style="left:900px;top:39px" width="992" height="350" viewBox="0 0 496 175" shape-rendering="crispEdges"><rect width="496" height="175" fill="#696969"/><path d="M1 0.5h1m9 0h1m1 0h2m4 0h1m1 0h3m8 0h1m2 0h2m2 0h1m5 0h1m1 0h1m32 0h5m1 0h1m4 0h1m5 0h1m2 0h3m2 0h1m1 0h2m2 0h2m3 0h3m2 0h2m1 0h1m1 0h4m1 0h1m7 0h1m2 0h3m3 0h1m1 0h1m1 0h1m5 0h1m1 0h2m2 0h1m3 0h1m1 0h1m1 0h5m1 0h7m3 0h1m1 0h2m1 0h3m5 0h1m1 0h1m4 0h2m1 0h2m1 0h3m1 0h2m1 0h1m1 0h1m2 0h1m1 0h2m1 0h1m4 0h1m1 0h1m1 0h3m14 0h1m4 0h4m1 0h3m4 0h1m3 0h1m1 0h1m2 0h1m2 0h1m1 0h1m2 0h1m2 0h3m1 0h1m2 0h2m2 0h2m2 0h4m1 0h2m1 0h1m2 0h5m2 0h1m3 0h1m1 0h1m1 0h2m1 0h2m4 0h1m2 0h1m2 0h1m4 0h3m2 0h2m2 0h9m1 0h1m2 0h1m2 0h1m1 0h2m1 0h1m2 0h2m2 0h5m3 0h1m1 0h1m4 0h1m1 0h2m1 0h1m1 0h1m1 0h2m1 0h1m1 0h2m1 0h1m4 0h1m2 0h3m1 0h1m6 0h1m1 0h7m2 0h2m1 0h3m2 0h3m1 0h2m2 0h1m5 0h1m3 0h2m1 0h1m1 0h1m2 0h2m1 0h1m2 0h2M1 1.5h1m9 0h1m1 0h2m4 0h1m1 0h3m8 0h1m2 0h3m1 0h1m5 0h1m1 0h1m32 0h1m2 0h2m1 0h1m1 0h3m1 0h2m1 0h2m1 0h1m3 0h1m2 0h3m1 0h2m1 0h2m3 0h3m1 0h1m2 0h3m1 0h1m1 0h6m1 0h1m2 0h1m5 0h1m2 0h2m2 0h6m1 0h1m1 0h3m5 0h1m3 0h1m1 0h2m3 0h1m2 0h2m9 0h3m1 0h1m7 0h3m1 0h3m3 0h1m1 0h1m1 0h1m1 0h2m2 0h1m2 0h1m1 0h2m1 0h1m2 0h1m1 0h2m1 0h1m12 0h2m2 0h1m2 0h1m1 0h2m2 0h3m3 0h2m3 0h1m1 0h1m5 0h1m1 0h1m2 0h3m1 0h2m2 0h2m3 0h1m3 0h2m3 0h2m2 0h1m1 0h3m1 0h2m8 0h2m1 0h2m1 0h2m1 0h1m1 0h1m1 0h1m1 0h1m2 0h3m2 0h1m1 0h1m1 0h3m2 0h2m1 0h1m1 0h1m1 0h1m2 0h1m3 0h1m1 0h1m1 0h9m3 0h1m2 0h2m2 0h1m5 0h1m1 0h1m4 0h1m3 0h3m1 0h1m1 0h2m1 0h2m2 0h2m3 0h1m1 0h2m1 0h1m2 0h2m4 0h2m4 0h2m5 0h1m3 0h1m5 0h1m2 0h1m1 0h2m1 0h2m5 0h1M1 2.5h1m9 0h1m1 0h2m4 0h1m1 0h3m8 0h1m1 0h1m4 0h1m5 0h1m1 0h1m32 0h3m1 0h3m1 0h1m5 0h1m1 0h7m1 0h1m3 0h1m7 0h3m2 0h1m2 0h1m2 0h1m1 0h2m1 0h1m6 0h1m1 0h5m1 0h2m1 0h1m1 0h1m5 0h1m1 0h3m1 0h1m3 0h1m2 0h3m2 0h3m1 0h1m1 0h3m1 0h1m1 0h5m1 0h3m5 0h2m2 0h1m4 0h2m3 0h1m2 0h1m1 0h2m3 0h1m1 0h2m2 0h1m5 0h6m12 0h2m2 0h1m3 0h2m1 0h1m1 0h2m4 0h1m4 0h1m1 0h1m2 0h4m2 0h1m2 0h1m1 0h1m3 0h3m1 0h2m3 0h3m2 0h1m1 0h1m3 0h1m1 0h3m1 0h1m1 0h4m2 0h2m1 0h5m1 0h6m6 0h2m2 0h1m5 0h5m1 0h1m2 0h4m4 0h2m4 0h3m2 0h2m1 0h1m4 0h2m1 0h3m1 0h6m1 0h2m3 0h2m2 0h1m1 0h1m2 0h2m2 0h1m2 0h3m1 0h1m1 0h1m2 0h3m1 0h4m2 0h2m2 0h1m1 0h1m2 0h1m2 0h2m2 0h3m1 0h5m3 0h5m1 0h1m2 0h2m1 0h1M1 3.5h1m9 0h1m1 0h2m4 0h1m1 0h3m8 0h1m1 0h1m2 0h1m1 0h1m5 0h1m1 0h1m32 0h1m2 0h2m1 0h1m1 0h2m2 0h1m2 0h3m4 0h1m2 0h1m2 0h1m2 0h2m2 0h2m1 0h5m1 0h3m1 0h1m1 0h3m1 0h5m1 0h1m1 0h3m2 0h2m1 0h2m1 0h2m1 0h3m5 0h1m1 0h1m2 0h3m2 0h1m1 0h2m3 0h6m1 0h2m1 0h1m2 0h4m1 0h3m1 0h1m3 0h1m2 0h1m6 0h3m3 0h2m1 0h1m3 0h2m1 0h6m1 0h2m1 0h1m12 0h1m2 0h1m2 0h3m5 0h1m2 0h3m1 0h1m8 0h4m4 0h1m2 0h1m1 0h1m2 0h1m2 0h1m1 0h1m3 0h1m2 0h4m1 0h1m1 0h6m4 0h3m1 0h1m2 0h1m1 0h1m1 0h2m2 0h1m1 0h2m3 0h1m1 0h2m2 0h2m1 0h2m2 0h1m1 0h2m2 0h2m1 0h4m1 0h2m3 0h1m2 0h1m1 0h1m2 0h1m1 0h1m1 0h1m1 0h3m5 0h1m1 0h4m1 0h1m4 0h1m1 0h3m3 0h5m4 0h1m1 0h2m2 0h1m11 0h2m1 0h1m1 0h2m2 0h1m2 0h1m1 0h1m1 0h4m1 0h2m4 0h1m2 0h1m2 0h2m2 0h2m2 0h1M1 4.5h1m9 0h1m1 0h2m4 0h1m1 0h3m8 0h1m1 0h1m1 0h1m2 0h1m5 0h1m1 0h1m32 0h1m1 0h3m1 0h1m4 0h3m2 0h1m1 0h2m2 0h2m2 0h3m2 0h1m6 0h1m2 0h1m2 0h1m2 0h1m5 0h2m1 0h1m2 0h5m1 0h3m1 0h2m1 0h1m2 0h1m4 0h2m3 0h1m1 0h3m1 0h3m1 0h1m1 0h5m1 0h2m1 0h1m1 0h3m1 0h1m2 0h2m1 0h1m4 0h1m3 0h2m5 0h3m4 0h2m2 0h2m2 0h2m1 0h1m1 0h3m1 0h1m1 0h1m1 0h2m1 0h2m1 0h5m2 0h2m2 0h1m1 0h2m1 0h5m1 0h2m4 0h2m3 0h3m3 0h2m2 0h6m3 0h1m1 0h1m1 0h2m1 0h5m6 0h1m1 0h1m2 0h1m1 0h1m2 0h2m2 0h1m5 0h1m1 0h2m4 0h1m1 0h1m2 0h1m3 0h2m1 0h2m2 0h1m2 0h1m3 0h1m2 0h5m4 0h1m1 0h1m2 0h1m1 0h2m2 0h1m3 0h4m1 0h3m3 0h1m1 0h3m1 0h2m1 0h1m1 0h4m2 0h1m2 0h6m1 0h5m1 0h1m2 0h1m1 0h3m1 0h1m1 0h4m2 0h3m2 0h3m2 0h4m2 0h1m1 0h1m1 0h5m1 0h1m1 0h2m2 0h2m1 0h2M1 5.5h1m9 0h1m1 0h2m4 0h1m1 0h3m8 0h1m1 0h1m1 0h2m1 0h1m5 0h1m1 0h1m32 0h1m2 0h8m2 0h1m1 0h2m2 0h1m1 0h2m2 0h1m2 0h1m1 0h3m1 0h1m1 0h4m2 0h1m1 0h3m1 0h1m3 0h1m1 0h2m1 0h2m1 0h3m1 0h1m2 0h3m3 0h2m1 0h3m3 0h4m1 0h1m1 0h3m2 0h2m2 0h1m2 0h1m3 0h2m3 0h2m2 0h3m2 0h3m1 0h1m2 0h1m1 0h1m4 0h1m3 0h1m1 0h1m1 0h1m1 0h2m1 0h1m1 0h3m2 0h2m1 0h2m2 0h2m9 0h1m4 0h2m2 0h1m1 0h2m5 0h1m3 0h1m1 0h4m3 0h1m2 0h4m1 0h1m2 0h3m2 0h2m5 0h1m1 0h3m1 0h4m1 0h2m2 0h1m1 0h1m1 0h1m2 0h4m3 0h3m1 0h1m1 0h1m4 0h1m2 0h2m1 0h2m3 0h3m8 0h3m3 0h1m3 0h1m1 0h1m1 0h1m4 0h1m1 0h2m1 0h3m2 0h1m2 0h1m1 0h1m1 0h1m3 0h1m2 0h3m7 0h13m10 0h1m1 0h1m7 0h1m2 0h2m2 0h2m2 0h1m1 0h3m2 0h3m8 0h1m1 0h2m1 0h1m2 0h3m1 0h1M1 6.5h1m9 0h1m1 0h2m4 0h1m1 0h3m8 0h1m1 0h2m3 0h1m5 0h1m1 0h1m32 0h3m5 0h2m2 0h1m1 0h2m5 0h1m1 0h1m3 0h1m1 0h1m2 0h1m3 0h1m1 0h1m2 0h1m2 0h1m1 0h1m1 0h1m2 0h2m2 0h8m4 0h2m1 0h1m1 0h1m1 0h1m3 0h1m1 0h5m3 0h1m1 0h4m1 0h2m1 0h1m2 0h4m1 0h1m1 0h3m1 0h1m1 0h3m4 0h1m1 0h1m4 0h1m2 0h1m3 0h3m1 0h5m1 0h1m2 0h2m2 0h1m2 0h2m2 0h1m2 0h1m4 0h1m3 0h1m1 0h1m3 0h2m2 0h2m1 0h1m1 0h3m1 0h4m1 0h2m2 0h1m2 0h1m2 0h2m2 0h4m1 0h2m1 0h1m1 0h1m1 0h1m1 0h9m2 0h2m1 0h2m2 0h2m2 0h3m2 0h1m1 0h2m1 0h1m3 0h2m1 0h1m2 0h2m1 0h6m1 0h1m4 0h1m1 0h1m1 0h3m1 0h1m1 0h2m1 0h4m1 0h4m1 0h1m1 0h2m1 0h1m2 0h2m3 0h1m2 0h1m2 0h3m1 0h3m3 0h1m4 0h2m4 0h1m1 0h2m1 0h1m1 0h1m3 0h2m2 0h1m2 0h1m2 0h3m1 0h4m7 0h1m4 0h3m1 0h1m1 0h1m3 0h1m2 0h4m1 0h2m1 0h4m1 0h1m1 0h1m1 0h2M1 7.5h1m9 0h1m1 0h2m4 0h1m1 0h3m8 0h1m1 0h2m1 0h1m1 0h1m5 0h1m1 0h1m35 0h2m1 0h1m1 0h3m2 0h1m1 0h3m1 0h1m2 0h1m1 0h1m1 0h1m3 0h1m5 0h3m1 0h1m1 0h1m1 0h4m1 0h1m2 0h1m1 0h5m3 0h2m1 0h2m1 0h8m1 0h3m2 0h5m2 0h2m3 0h2m3 0h1m3 0h4m2 0h1m2 0h4m2 0h2m1 0h1m1 0h1m4 0h1m4 0h2m4 0h1m1 0h1m1 0h2m1 0h1m3 0h1m2 0h3m1 0h2m1 0h2m1 0h1m12 0h2m1 0h1m1 0h2m4 0h2m1 0h2m2 0h4m2 0h3m1 0h1m1 0h7m1 0h1m1 0h2m3 0h2m2 0h1m1 0h2m2 0h1m1 0h3m1 0h1m1 0h1m2 0h1m1 0h1m1 0h3m1 0h2m4 0h1m1 0h1m1 0h1m6 0h1m3 0h3m1 0h1m4 0h4m5 0h1m1 0h2m2 0h1m3 0h1m2 0h2m2 0h1m2 0h1m2 0h2m3 0h2m1 0h1m5 0h8m1 0h1m1 0h1m1 0h3m1 0h1m2 0h1m1 0h9m1 0h1m1 0h1m2 0h5m4 0h4m2 0h4m3 0h3m3 0h1m4 0h2m3 0h3m2 0h1m1 0h3M1 8.5h1m9 0h1m1 0h2m4 0h1m1 0h3m8 0h1m1 0h3m2 0h1m5 0h1m1 0h1m34 0h3m1 0h1m4 0h1m1 0h1m2 0h3m1 0h4m1 0h1m1 0h1m4 0h1m3 0h3m2 0h1m2 0h1m2 0h1m2 0h1m2 0h1m2 0h4m1 0h2m1 0h1m1 0h7m5 0h1m1 0h2m2 0h2m3 0h1m2 0h2m1 0h1m1 0h2m1 0h4m2 0h1m1 0h3m3 0h2m2 0h1m2 0h3m3 0h1m1 0h2m3 0h3m2 0h1m1 0h1m1 0h1m1 0h1m2 0h3m3 0h2m1 0h3m1 0h1m1 0h1m3 0h1m1 0h3m1 0h1m1 0h1m1 0h2m1 0h1m1 0h1m1 0h1m5 0h1m2 0h1m1 0h1m3 0h2m1 0h3m2 0h1m3 0h2m1 0h1m3 0h3m2 0h3m2 0h6m1 0h1m3 0h1m4 0h1m1 0h2m1 0h2m2 0h2m1 0h2m1 0h2m5 0h2m4 0h1m3 0h1m1 0h1m3 0h1m1 0h2m1 0h5m1 0h1m1 0h3m3 0h2m4 0h1m1 0h1m2 0h2m3 0h1m6 0h2m3 0h1m2 0h1m2 0h1m3 0h1m3 0h1m3 0h3m1 0h1m1 0h3m1 0h2m1 0h3m1 0h4m1 0h3m2 0h1m1 0h8m2 0h3m3 0h2m1 0h2m4 0h1m1 0h2m1 0h3m1 0h1m2 0h1M1 9.5h1m9 0h1m1 0h2m4 0h1m1 0h3m8 0h1m1 0h4m1 0h1m5 0h1m1 0h1m32 0h1m2 0h2m2 0h2m1 0h1m2 0h1m1 0h1m1 0h1m1 0h1m3 0h1m1 0h2m1 0h1m1 0h1m1 0h2m2 0h1m1 0h2m1 0h2m1 0h3m1 0h1m1 0h1m1 0h5m1 0h3m1 0h1m2 0h1m2 0h2m3 0h2m1 0h1m1 0h1m1 0h1m2 0h1m4 0h2m2 0h1m1 0h5m2 0h1m3 0h3m2 0h2m2 0h3m2 0h3m6 0h1m1 0h2m1 0h2m2 0h1m5 0h1m2 0h1m3 0h1m2 0h3m1 0h1m2 0h2m1 0h1m12 0h3m7 0h1m7 0h1m4 0h7m1 0h1m1 0h4m1 0h1m3 0h2m3 0h1m1 0h2m3 0h1m1 0h1m1 0h1m8 0h1m2 0h3m1 0h1m1 0h1m2 0h2m1 0h3m1 0h5m1 0h1m1 0h1m1 0h5m1 0h1m1 0h4m1 0h2m1 0h2m1 0h1m1 0h2m3 0h1m7 0h2m3 0h1m1 0h3m1 0h2m6 0h2m1 0h1m2 0h1m1 0h2m1 0h5m4 0h1m2 0h1m1 0h2m1 0h1m1 0h1m3 0h2m1 0h2m2 0h5m1 0h2m1 0h1m2 0h2m4 0h2m1 0h2m1 0h2m1 0h1m1 0h2m4 0h1m1 0h2m2 0h1m5 0h1m1 0h1M1 10.5h1m9 0h1m1 0h2m4 0h1m1 0h3m8 0h2m5 0h1m5 0h1m1 0h1m32 0h1m1 0h1m1 0h1m3 0h1m2 0h1m4 0h1m2 0h3m1 0h1m1 0h1m1 0h1m1 0h4m3 0h1m1 0h1m5 0h1m1 0h5m1 0h2m5 0h6m3 0h1m1 0h1m1 0h1m2 0h1m3 0h3m3 0h2m1 0h1m1 0h1m1 0h2m1 0h4m1 0h2m1 0h1m2 0h1m1 0h4m3 0h3m2 0h2m6 0h2m1 0h2m1 0h4m1 0h1m1 0h4m3 0h3m1 0h1m1 0h4m3 0h3m1 0h1m2 0h1m3 0h1m2 0h3m3 0h1m1 0h1m1 0h1m1 0h2m1 0h1m2 0h1m1 0h2m1 0h1m4 0h1m1 0h4m4 0h1m1 0h2m1 0h2m2 0h1m4 0h2m3 0h1m2 0h1m1 0h2m3 0h1m2 0h1m1 0h2m4 0h2m2 0h1m3 0h3m2 0h9m1 0h3m2 0h1m1 0h1m1 0h1m1 0h1m1 0h3m1 0h2m1 0h1m1 0h1m2 0h1m4 0h2m1 0h1m6 0h1m1 0h3m1 0h1m4 0h1m2 0h1m2 0h1m2 0h1m1 0h2m1 0h2m1 0h3m3 0h1m1 0h2m1 0h2m2 0h2m2 0h1m2 0h2m4 0h3m1 0h2m4 0h1m2 0h1m1 0h2m2 0h2m2 0h1m3 0h3m1 0h5m1 0h1m1 0h3m1 0h1M1 11.5h1m9 0h1m1 0h2m4 0h1m1 0h3m8 0h2m3 0h1m1 0h1m5 0h1m1 0h1m32 0h1m3 0h3m2 0h2m8 0h4m1 0h2m2 0h1m1 0h2m2 0h1m1 0h4m1 0h2m1 0h5m3 0h6m1 0h2m2 0h2m3 0h1m4 0h8m2 0h3m1 0h1m1 0h1m4 0h2m1 0h1m3 0h2m1 0h3m5 0h1m1 0h3m2 0h5m4 0h2m1 0h1m1 0h2m2 0h1m3 0h1m1 0h4m3 0h1m2 0h2m1 0h3m1 0h1m10 0h1m5 0h1m1 0h1m6 0h1m4 0h1m1 0h5m1 0h1m3 0h3m1 0h1m1 0h2m1 0h4m5 0h1m1 0h2m3 0h1m2 0h3m6 0h1m1 0h1m1 0h1m1 0h2m1 0h2m1 0h3m3 0h1m1 0h2m4 0h1m2 0h1m3 0h2m1 0h4m1 0h1m1 0h1m1 0h3m3 0h2m1 0h4m1 0h3m1 0h1m1 0h2m2 0h1m1 0h1m1 0h2m1 0h2m2 0h2m2 0h1m1 0h1m1 0h1m1 0h1m3 0h1m6 0h2m2 0h2m1 0h1m2 0h2m2 0h1m4 0h2m1 0h1m3 0h2m1 0h1m1 0h1m3 0h2m1 0h2m1 0h1m2 0h1m3 0h1m4 0h1m6 0h1m1 0h4m1 0h1m1 0h1m1 0h4M1 12.5h1m9 0h1m1 0h2m4 0h1m1 0h3m8 0h2m2 0h1m2 0h1m5 0h1m1 0h1m32 0h3m1 0h1m3 0h1m2 0h2m1 0h1m1 0h5m1 0h1m1 0h2m1 0h4m1 0h1m4 0h3m1 0h2m1 0h1m1 0h1m1 0h1m4 0h1m3 0h1m1 0h2m1 0h3m2 0h1m1 0h2m1 0h1m2 0h1m2 0h1m1 0h2m3 0h1m2 0h1m1 0h9m1 0h1m1 0h2m4 0h3m4 0h1m4 0h2m6 0h2m1 0h2m1 0h6m1 0h2m3 0h1m1 0h3m4 0h4m1 0h3m3 0h5m3 0h3m1 0h2m1 0h1m2 0h2m2 0h1m2 0h1m1 0h2m4 0h2m1 0h1m2 0h2m2 0h2m3 0h2m2 0h1m8 0h3m1 0h1m1 0h3m1 0h5m1 0h7m1 0h1m1 0h1m1 0h1m2 0h1m2 0h2m3 0h1m2 0h3m1 0h3m1 0h1m1 0h3m1 0h1m1 0h2m1 0h4m2 0h1m2 0h5m3 0h3m2 0h1m1 0h2m2 0h1m1 0h1m4 0h1m2 0h2m3 0h1m3 0h2m4 0h2m2 0h7m1 0h1m3 0h1m1 0h2m1 0h3m1 0h7m1 0h1m1 0h2m1 0h7m1 0h1m2 0h2m6 0h3m2 0h1m1 0h1m1 0h1m1 0h1m1 0h3m1 0h1M1 13.5h1m9 0h1m1 0h2m4 0h1m1 0h3m8 0h2m2 0h2m1 0h1m5 0h1m1 0h1m32 0h1m2 0h6m1 0h2m2 0h5m6 0h1m2 0h1m1 0h2m1 0h1m2 0h1m2 0h1m1 0h1m2 0h5m3 0h3m1 0h1m1 0h1m1 0h1m2 0h3m1 0h4m2 0h2m2 0h2m1 0h1m4 0h1m1 0h1m2 0h2m2 0h1m2 0h1m1 0h1m1 0h1m1 0h1m1 0h3m3 0h2m1 0h2m1 0h3m2 0h2m2 0h3m1 0h2m2 0h1m3 0h1m2 0h7m1 0h2m2 0h1m1 0h1m1 0h2m1 0h1m2 0h1m8 0h1m3 0h2m1 0h2m1 0h2m2 0h2m1 0h2m2 0h1m1 0h1m2 0h1m2 0h3m2 0h2m6 0h1m6 0h3m1 0h5m1 0h1m1 0h1m8 0h2m1 0h3m2 0h1m5 0h3m1 0h1m3 0h2m1 0h2m1 0h5m4 0h1m1 0h3m1 0h2m2 0h5m1 0h3m2 0h4m3 0h3m6 0h2m3 0h1m4 0h2m1 0h1m2 0h2m7 0h1m1 0h2m1 0h2m1 0h1m1 0h2m2 0h2m3 0h2m3 0h3m2 0h3m1 0h1m1 0h2m1 0h1m1 0h2m4 0h2m1 0h5m8 0h1m3 0h4m3 0h1M1 14.5h1m9 0h1m1 0h2m4 0h1m1 0h3m8 0h2m1 0h1m3 0h1m5 0h1m1 0h1m32 0h1m1 0h7m2 0h1m2 0h1m1 0h3m1 0h1m1 0h1m1 0h2m1 0h1m3 0h2m3 0h3m2 0h4m1 0h1m2 0h3m1 0h1m2 0h3m2 0h2m3 0h1m2 0h1m2 0h1m5 0h5m2 0h1m4 0h4m6 0h5m1 0h1m1 0h3m3 0h1m1 0h1m4 0h1m6 0h6m1 0h3m1 0h1m1 0h2m2 0h2m1 0h5m1 0h3m1 0h2m1 0h3m1 0h2m1 0h1m1 0h1m3 0h1m1 0h3m4 0h3m1 0h5m2 0h2m2 0h3m2 0h1m1 0h1m3 0h1m3 0h1m4 0h1m3 0h2m1 0h1m1 0h1m1 0h1m2 0h1m1 0h1m5 0h1m1 0h1m2 0h3m1 0h3m1 0h2m1 0h1m3 0h1m1 0h4m4 0h1m2 0h8m1 0h5m2 0h1m2 0h2m1 0h1m2 0h2m6 0h2m1 0h1m2 0h2m2 0h4m1 0h1m1 0h2m3 0h2m1 0h1m1 0h2m1 0h1m8 0h1m1 0h2m3 0h1m2 0h1m3 0h1m2 0h2m2 0h3m1 0h1m2 0h1m1 0h1m2 0h1m1 0h2m3 0h1m2 0h1m2 0h1m1 0h1m1 0h2m1 0h1m2 0h1m1 0h2m1 0h1m1 0h1m1 0h6M1 15.5h1m9 0h1m1 0h2m4 0h1m1 0h3m8 0h2m1 0h1m1 0h1m1 0h1m5 0h1m1 0h1m32 0h1m2 0h2m1 0h1m1 0h3m2 0h2m1 0h1m1 0h1m2 0h2m2 0h1m1 0h2m1 0h1m3 0h3m1 0h4m1 0h3m2 0h1m1 0h3m1 0h5m1 0h1m7 0h4m1 0h1m2 0h3m1 0h1m1 0h2m1 0h1m2 0h2m3 0h2m1 0h2m6 0h2m3 0h1m1 0h1m2 0h1m1 0h2m2 0h1m2 0h1m4 0h1m2 0h1m1 0h2m2 0h1m4 0h5m3 0h1m2 0h2m2 0h1m2 0h1m2 0h1m9 0h1m2 0h2m8 0h2m2 0h1m1 0h2m5 0h1m2 0h1m3 0h1m2 0h2m2 0h3m1 0h1m1 0h3m1 0h1m1 0h1m1 0h2m2 0h1m1 0h5m5 0h1m1 0h1m1 0h2m1 0h1m1 0h3m1 0h1m2 0h5m2 0h2m2 0h1m3 0h3m1 0h2m1 0h1m4 0h1m1 0h1m1 0h3m1 0h1m1 0h3m3 0h1m3 0h2m1 0h1m8 0h1m1 0h4m1 0h2m2 0h2m1 0h1m1 0h2m2 0h1m2 0h1m1 0h5m1 0h1m1 0h3m1 0h1m2 0h2m1 0h2m2 0h1m1 0h5m3 0h2m1 0h1m1 0h2m1 0h1m3 0h1m1 0h1m1 0h1m7 0h4m1 0h3m1 0h2m1 0h1m1 0h1m1 0h1M1 16.5h1m9 0h1m1 0h2m4 0h1m1 0h3m8 0h2m1 0h2m2 0h1m5 0h1m1 0h1m32 0h2m2 0h1m1 0h1m1 0h1m2 0h1m1 0h1m1 0h4m1 0h1m1 0h1m1 0h1m1 0h3m2 0h2m1 0h3m1 0h2m1 0h1m1 0h2m1 0h4m1 0h1m2 0h1m4 0h3m1 0h1m1 0h2m1 0h1m1 0h1m1 0h2m1 0h1m2 0h2m1 0h2m2 0h2m1 0h1m2 0h3m3 0h2m1 0h5m1 0h1m3 0h3m3 0h3m1 0h1m2 0h2m2 0h3m2 0h1m1 0h7m2 0h1m2 0h1m2 0h2m1 0h2m1 0h2m1 0h5m2 0h1m1 0h2m7 0h1m1 0h1m2 0h2m2 0h5m3 0h7m1 0h2m2 0h3m1 0h2m6 0h2m2 0h1m3 0h1m5 0h1m3 0h1m2 0h1m1 0h1m4 0h1m1 0h1m6 0h1m4 0h4m4 0h2m3 0h1m1 0h2m1 0h1m2 0h2m2 0h4m5 0h1m1 0h2m3 0h2m1 0h1m2 0h1m1 0h1m2 0h1m2 0h3m4 0h3m1 0h2m2 0h2m3 0h1m2 0h4m2 0h1m1 0h1m1 0h3m1 0h1m2 0h1m7 0h2m1 0h3m2 0h2m3 0h1m1 0h1m2 0h3m1 0h1m5 0h1m1 0h4m1 0h1m3 0h1m5 0h3m2 0h2m1 0h1M1 17.5h1m9 0h1m1 0h2m4 0h1m1 0h3m8 0h2m1 0h3m1 0h1m5 0h1m1 0h1m33 0h1m1 0h1m2 0h3m1 0h1m1 0h1m2 0h2m1 0h1m2 0h2m2 0h1m2 0h5m1 0h1m1 0h4m1 0h9m2 0h5m1 0h1m1 0h3m1 0h1m2 0h2m3 0h3m1 0h4m2 0h2m1 0h2m2 0h1m1 0h1m3 0h1m1 0h1m1 0h4m1 0h1m1 0h1m2 0h3m1 0h1m1 0h1m3 0h5m4 0h1m4 0h2m2 0h2m3 0h2m1 0h4m1 0h5m2 0h5m1 0h1m6 0h1m3 0h1m4 0h3m1 0h2m1 0h1m1 0h1m4 0h1m5 0h1m1 0h6m2 0h2m1 0h1m1 0h2m1 0h2m2 0h1m3 0h3m1 0h2m3 0h1m5 0h2m3 0h1m2 0h2m1 0h9m5 0h1m2 0h1m2 0h1m1 0h1m1 0h1m1 0h2m4 0h1m1 0h4m2 0h1m3 0h1m1 0h2m3 0h1m2 0h1m1 0h3m6 0h2m1 0h1m1 0h4m2 0h4m3 0h2m1 0h2m3 0h1m2 0h2m2 0h1m1 0h3m1 0h1m3 0h1m1 0h2m1 0h1m1 0h1m1 0h1m1 0h2m2 0h1m2 0h1m4 0h2m1 0h1m1 0h1m1 0h5m1 0h1m1 0h4m1 0h5m1 0h1m1 0h2m3 0h1M1 18.5h1m9 0h1m1 0h2m4 0h1m1 0h3m8 0h3m4 0h1m5 0h1m1 0h1m33 0h2m3 0h1m1 0h1m1 0h2m1 0h2m1 0h2m1 0h3m3 0h1m1 0h1m3 0h2m3 0h3m2 0h1m1 0h2m5 0h1m2 0h2m4 0h2m1 0h1m3 0h3m1 0h1m1 0h2m4 0h2m5 0h1m2 0h1m2 0h1m1 0h1m1 0h1m2 0h1m1 0h5m1 0h1m1 0h4m2 0h4m2 0h1m3 0h4m1 0h4m2 0h3m1 0h1m1 0h2m2 0h2m1 0h2m2 0h1m2 0h2m1 0h1m2 0h1m3 0h1m1 0h4m2 0h1m3 0h1m1 0h1m2 0h1m1 0h1m1 0h5m1 0h2m1 0h1m3 0h1m1 0h1m6 0h1m5 0h1m4 0h2m3 0h1m2 0h3m4 0h1m1 0h3m1 0h1m2 0h1m3 0h3m1 0h2m5 0h1m2 0h1m1 0h1m7 0h2m1 0h2m2 0h3m2 0h1m2 0h2m1 0h1m3 0h2m2 0h1m3 0h2m3 0h1m4 0h1m2 0h2m2 0h1m1 0h1m1 0h1m1 0h2m1 0h2m2 0h2m2 0h4m3 0h4m1 0h1m1 0h2m1 0h1m3 0h3m1 0h4m1 0h1m3 0h1m1 0h1m1 0h1m1 0h1m1 0h6m4 0h1m2 0h1m2 0h2m1 0h1m1 0h2m2 0h2m1 0h3m1 0h1m1 0h1m2 0h2M1 19.5h1m9 0h1m1 0h2m4 0h1m1 0h3m8 0h3m2 0h1m1 0h1m5 0h1m1 0h1m32 0h1m2 0h2m1 0h1m1 0h3m2 0h6m1 0h1m1 0h1m2 0h2m1 0h1m1 0h1m1 0h1m1 0h12m1 0h1m2 0h1m1 0h2m1 0h2m1 0h1m3 0h3m1 0h1m1 0h1m4 0h2m1 0h3m3 0h3m1 0h1m4 0h1m2 0h3m1 0h2m4 0h1m1 0h1m2 0h1m2 0h1m2 0h2m2 0h5m1 0h1m1 0h2m2 0h1m1 0h2m2 0h1m3 0h2m1 0h1m2 0h2m3 0h3m2 0h5m1 0h1m12 0h3m5 0h3m1 0h3m1 0h1m1 0h1m3 0h1m3 0h3m1 0h3m1 0h3m2 0h3m1 0h4m3 0h2m1 0h5m1 0h4m6 0h4m5 0h4m1 0h1m2 0h2m2 0h3m2 0h2m1 0h1m1 0h1m3 0h2m1 0h1m3 0h1m2 0h3m1 0h4m1 0h1m2 0h2m1 0h4m11 0h2m4 0h3m1 0h3m4 0h2m2 0h4m1 0h2m8 0h1m1 0h1m2 0h1m4 0h1m6 0h1m1 0h1m1 0h3m2 0h3m1 0h5m2 0h2m1 0h1m1 0h4m1 0h1m1 0h6m2 0h3M1 20.5h2m8 0h1m2 0h1m4 0h1m1 0h3m8 0h3m1 0h1m2 0h1m5 0h1m1 0h1m16 0h19m1 0h2m2 0h1m4 0h2m1 0h2m2 0h1m1 0h1m2 0h1m1 0h1m3 0h2m2 0h5m3 0h2m1 0h3m1 0h1m1 0h3m1 0h1m2 0h5m2 0h3m3 0h1m2 0h1m2 0h1m3 0h1m1 0h3m1 0h1m1 0h4m1 0h1m1 0h2m1 0h3m3 0h1m1 0h1m2 0h1m2 0h2m5 0h1m1 0h3m3 0h1m2 0h1m1 0h4m1 0h2m2 0h1m4 0h2m1 0h1m6 0h1m1 0h3m13 0h29m1 0h12m1 0h49m1 0h5m1 0h5m1 0h9m2 0h9m1 0h2m1 0h17m1 0h7m1 0h7m1 0h1m2 0h11m1 0h16m1 0h8m1 0h18m1 0h2m1 0h4m1 0h9M1 21.5h1m9 0h1m1 0h2m4 0h1m1 0h3m8 0h3m1 0h2m1 0h1m5 0h1m1 0h1m32 0h1m2 0h1m3 0h4m2 0h3m1 0h4m3 0h1m5 0h1m1 0h1m4 0h2m2 0h8m1 0h7m1 0h1m3 0h1m1 0h1m2 0h1m5 0h6m1 0h1m1 0h1m2 0h1m2 0h3m3 0h5m10 0h1m2 0h1m2 0h2m2 0h2m1 0h8m1 0h3m9 0h2m3 0h1m1 0h8m2 0h2m14 0h1m1 0h1m1 0h1m1 0h1m2 0h1m1 0h2m5 0h1m8 0h1m1 0h2m1 0h2m3 0h2m1 0h7m5 0h2m4 0h1m2 0h2m1 0h2m5 0h1m1 0h1m1 0h2m2 0h5m1 0h1m2 0h2m1 0h1m3 0h1m1 0h1m2 0h1m1 0h1m1 0h2m3 0h3m1 0h2m2 0h7m1 0h2m3 0h2m2 0h1m1 0h2m1 0h2m1 0h3m1 0h3m1 0h1m1 0h1m1 0h3m1 0h1m2 0h2m1 0h2m1 0h1m2 0h1m3 0h1m2 0h5m1 0h3m1 0h1m3 0h6m6 0h1m4 0h1m1 0h3m1 0h3m2 0h2m1 0h1m1 0h1m1 0h1m2 0h5m4 0h2M1 22.5h1m9 0h1m1 0h2m4 0h1m1 0h3m8 0h4m3 0h1m5 0h1m1 0h1m32 0h1m1 0h1m3 0h1m1 0h1m1 0h2m3 0h6m1 0h2m1 0h3m2 0h1m1 0h1m4 0h1m1 0h3m1 0h2m3 0h2m8 0h7m2 0h1m1 0h2m1 0h1m7 0h3m5 0h1m1 0h1m1 0h2m4 0h1m1 0h1m2 0h4m1 0h3m2 0h6m2 0h1m1 0h2m2 0h2m1 0h3m1 0h3m2 0h5m1 0h1m2 0h3m1 0h1m1 0h1m1 0h1m3 0h1m1 0h2m14 0h2m1 0h1m1 0h2m3 0h1m5 0h1m2 0h2m2 0h3m1 0h3m1 0h1m1 0h4m1 0h1m2 0h4m4 0h4m6 0h2m2 0h1m1 0h2m2 0h3m2 0h1m2 0h3m2 0h2m2 0h1m2 0h3m1 0h3m1 0h1m1 0h1m1 0h1m3 0h1m1 0h3m1 0h1m1 0h1m1 0h1m1 0h2m1 0h2m3 0h1m7 0h1m1 0h2m1 0h2m2 0h1m1 0h2m1 0h2m3 0h1m3 0h3m1 0h1m1 0h5m1 0h5m1 0h1m3 0h2m1 0h3m1 0h1m1 0h1m2 0h1m1 0h1m1 0h1m2 0h1m2 0h1m2 0h7m3 0h1m1 0h1m1 0h1m1 0h2m6 0h1m1 0h1m2 0h2m1 0h1M1 23.5h1m9 0h1m1 0h2m4 0h1m1 0h3m8 0h4m1 0h1m1 0h1m5 0h1m1 0h1m32 0h1m2 0h2m2 0h4m1 0h1m1 0h6m3 0h1m1 0h1m4 0h2m1 0h4m1 0h1m1 0h1m1 0h7m1 0h1m1 0h1m1 0h3m1 0h1m3 0h2m1 0h1m1 0h4m2 0h2m1 0h3m1 0h1m4 0h1m2 0h1m1 0h1m1 0h1m2 0h1m5 0h1m2 0h3m4 0h1m3 0h2m2 0h2m3 0h2m2 0h1m2 0h1m1 0h1m3 0h1m5 0h2m1 0h1m1 0h1m1 0h1m6 0h1m2 0h2m15 0h3m1 0h2m2 0h1m1 0h2m2 0h3m1 0h3m4 0h1m1 0h1m1 0h2m2 0h6m3 0h2m1 0h1m4 0h4m1 0h2m2 0h1m2 0h1m6 0h3m3 0h4m1 0h6m1 0h3m1 0h1m3 0h1m1 0h2m1 0h1m3 0h6m2 0h2m2 0h2m1 0h1m1 0h1m2 0h2m2 0h2m1 0h2m2 0h1m2 0h1m3 0h1m1 0h3m2 0h1m1 0h2m2 0h1m1 0h1m1 0h1m10 0h2m1 0h3m4 0h3m1 0h3m1 0h6m2 0h3m2 0h3m2 0h2m1 0h1m1 0h1m2 0h1m1 0h2m2 0h1m2 0h1m1 0h2m3 0h3m3 0h2M1 24.5h1m9 0h1m1 0h2m4 0h1m1 0h3m8 0h5m2 0h1m5 0h1m1 0h1m32 0h2m2 0h3m1 0h1m2 0h2m1 0h4m2 0h1m6 0h2m2 0h1m2 0h1m1 0h4m1 0h4m1 0h2m1 0h2m2 0h1m2 0h1m2 0h1m1 0h5m3 0h1m7 0h2m1 0h2m3 0h1m1 0h2m2 0h1m1 0h1m1 0h1m2 0h1m1 0h2m1 0h2m1 0h1m1 0h3m1 0h1m3 0h1m1 0h1m4 0h4m1 0h5m1 0h4m1 0h1m1 0h1m1 0h1m1 0h2m2 0h1m2 0h1m1 0h5m2 0h1m1 0h1m6 0h1m1 0h1m3 0h3m3 0h1m1 0h3m1 0h1m1 0h1m1 0h1m1 0h6m1 0h2m1 0h1m1 0h1m2 0h1m1 0h5m2 0h1m2 0h1m1 0h1m2 0h2m7 0h2m1 0h1m2 0h1m3 0h1m2 0h4m2 0h5m3 0h2m2 0h3m2 0h1m2 0h2m2 0h2m1 0h1m5 0h2m1 0h2m2 0h2m1 0h1m1 0h2m2 0h1m3 0h1m3 0h1m2 0h1m1 0h4m2 0h8m1 0h2m3 0h2m2 0h3m3 0h6m3 0h3m2 0h1m1 0h1m1 0h1m2 0h2m5 0h1m1 0h5m1 0h2m3 0h1m1 0h1m3 0h1m2 0h1m5 0h3m3 0h2m1 0h2m2 0h1M1 25.5h1m9 0h1m1 0h2m4 0h1m1 0h3m8 0h6m1 0h1m5 0h1m1 0h1m32 0h1m2 0h4m1 0h2m3 0h4m1 0h2m2 0h4m4 0h1m3 0h1m1 0h4m1 0h8m1 0h3m1 0h2m4 0h2m1 0h2m2 0h2m1 0h2m1 0h8m2 0h1m1 0h2m1 0h2m1 0h1m2 0h2m1 0h1m1 0h1m1 0h1m2 0h3m4 0h7m2 0h2m1 0h2m1 0h1m3 0h2m1 0h2m2 0h1m4 0h3m1 0h1m4 0h1m1 0h1m1 0h1m1 0h2m1 0h2m1 0h1m1 0h1m3 0h1m6 0h5m4 0h1m1 0h4m3 0h1m3 0h5m1 0h1m1 0h1m7 0h2m1 0h1m2 0h3m1 0h1m2 0h3m2 0h2m1 0h4m1 0h1m5 0h4m2 0h3m3 0h4m5 0h1m1 0h1m3 0h4m1 0h2m1 0h6m3 0h1m1 0h5m2 0h3m3 0h4m1 0h3m1 0h2m2 0h6m1 0h1m1 0h1m1 0h9m1 0h1m3 0h3m1 0h5m1 0h2m2 0h2m1 0h3m1 0h1m5 0h3m1 0h3m1 0h1m1 0h3m1 0h1m1 0h5m1 0h1m1 0h2m1 0h2m2 0h1m1 0h1m1 0h3m5 0h2M1 26.5h1m9 0h1m1 0h2m4 0h1m1 0h3m15 0h1m5 0h2m33 0h5m1 0h3m1 0h2m3 0h3m2 0h1m2 0h3m1 0h1m8 0h2m3 0h4m1 0h4m3 0h1m1 0h1m1 0h1m1 0h4m3 0h5m1 0h1m5 0h4m3 0h2m1 0h1m3 0h2m1 0h1m2 0h1m1 0h3m1 0h3m1 0h3m3 0h2m2 0h1m2 0h1m1 0h3m1 0h4m1 0h2m1 0h4m1 0h1m2 0h1m1 0h4m1 0h3m1 0h1m1 0h1m3 0h3m3 0h1m1 0h1m2 0h1m1 0h3m1 0h3m10 0h1m1 0h1m1 0h1m5 0h3m1 0h2m1 0h1m6 0h2m2 0h3m2 0h1m2 0h4m2 0h1m1 0h1m1 0h3m2 0h2m1 0h1m1 0h1m3 0h1m3 0h1m3 0h1m2 0h1m7 0h1m3 0h2m1 0h1m1 0h8m2 0h2m1 0h2m8 0h3m4 0h6m1 0h3m1 0h1m1 0h2m2 0h5m1 0h3m4 0h3m3 0h2m1 0h1m12 0h2m8 0h1m3 0h1m1 0h3m1 0h12m1 0h2m1 0h3m2 0h2m1 0h1m1 0h1m1 0h2m1 0h1m1 0h1m1 0h1M1 27.5h1m9 0h1m1 0h2m4 0h1m1 0h3m13 0h1m1 0h1m5 0h2m36 0h1m4 0h2m2 0h4m1 0h1m4 0h4m1 0h2m1 0h3m1 0h1m2 0h2m3 0h6m2 0h1m1 0h7m1 0h1m1 0h2m2 0h2m1 0h1m6 0h2m2 0h1m1 0h5m2 0h1m1 0h1m2 0h3m2 0h1m1 0h1m2 0h2m6 0h2m1 0h1m3 0h1m3 0h3m2 0h1m3 0h3m2 0h2m1 0h1m2 0h2m1 0h1m3 0h2m1 0h3m4 0h2m1 0h1m1 0h1m11 0h1m5 0h1m1 0h2m1 0h4m3 0h1m4 0h1m2 0h1m1 0h3m4 0h2m1 0h2m3 0h1m1 0h2m2 0h5m1 0h2m2 0h1m2 0h3m2 0h1m1 0h2m2 0h1m4 0h3m1 0h2m2 0h1m2 0h1m4 0h1m1 0h1m2 0h1m3 0h3m4 0h1m1 0h1m2 0h1m1 0h2m1 0h1m3 0h1m5 0h2m1 0h1m2 0h1m1 0h1m1 0h1m1 0h1m1 0h2m1 0h1m2 0h1m1 0h1m3 0h3m1 0h1m1 0h1m1 0h2m1 0h1m3 0h1m1 0h1m7 0h3m1 0h3m2 0h2m3 0h4m1 0h1m6 0h1m2 0h2m1 0h3m3 0h4m3 0h2m1 0h1m2 0h2m1 0h1M1 28.5h1m9 0h1m1 0h2m4 0h1m1 0h3m12 0h1m2 0h1m5 0h2m33 0h3m1 0h1m3 0h1m1 0h5m1 0h7m2 0h1m1 0h2m1 0h2m2 0h1m1 0h1m1 0h1m2 0h2m3 0h2m7 0h1m2 0h6m1 0h1m2 0h1m1 0h1m6 0h2m1 0h1m3 0h1m3 0h1m1 0h1m2 0h1m3 0h1m2 0h5m1 0h1m1 0h1m1 0h1m1 0h1m1 0h1m1 0h3m4 0h3m5 0h2m1 0h6m1 0h4m1 0h1m2 0h1m2 0h1m2 0h5m1 0h3m1 0h3m1 0h1m5 0h3m1 0h1m1 0h1m1 0h1m6 0h4m1 0h1m1 0h1m1 0h3m2 0h3m4 0h1m2 0h1m2 0h1m1 0h1m3 0h2m2 0h1m1 0h3m5 0h2m1 0h3m2 0h3m1 0h1m1 0h4m1 0h1m5 0h1m1 0h1m1 0h2m1 0h1m1 0h3m1 0h2m2 0h1m1 0h1m1 0h2m1 0h2m2 0h4m1 0h1m1 0h1m2 0h1m1 0h1m2 0h1m1 0h2m7 0h1m1 0h1m1 0h1m1 0h1m2 0h1m2 0h2m2 0h3m1 0h3m1 0h5m7 0h1m1 0h3m2 0h3m2 0h1m1 0h1m6 0h2m1 0h3m1 0h2m3 0h2m8 0h2m2 0h3m2 0h3m1 0h2m5 0h1M1 29.5h1m9 0h1m1 0h2m4 0h1m1 0h3m12 0h2m1 0h1m5 0h2m33 0h1m2 0h1m1 0h2m1 0h3m2 0h1m3 0h3m2 0h2m4 0h1m1 0h2m1 0h2m1 0h2m1 0h1m1 0h1m3 0h6m1 0h7m1 0h10m3 0h2m1 0h4m2 0h2m4 0h3m3 0h2m5 0h6m3 0h2m3 0h2m2 0h2m2 0h3m2 0h1m1 0h1m1 0h1m4 0h1m2 0h1m3 0h1m4 0h2m2 0h2m2 0h2m3 0h3m12 0h4m3 0h2m1 0h4m3 0h2m1 0h1m2 0h1m1 0h1m1 0h1m3 0h1m1 0h5m4 0h1m1 0h1m2 0h2m13 0h5m2 0h4m8 0h2m1 0h1m2 0h2m2 0h2m2 0h2m1 0h1m1 0h1m1 0h1m2 0h1m1 0h1m1 0h2m1 0h2m1 0h5m1 0h1m1 0h1m6 0h1m1 0h2m3 0h3m2 0h6m2 0h2m1 0h1m1 0h2m1 0h5m1 0h1m2 0h2m2 0h4m3 0h2m2 0h1m5 0h1m1 0h3m1 0h3m4 0h1m2 0h2m1 0h1m4 0h1m4 0h1m1 0h5m1 0h2m1 0h1m1 0h3m1 0h1m2 0h1M1 30.5h1m9 0h1m1 0h2m4 0h1m1 0h3m11 0h1m3 0h1m5 0h2m37 0h1m1 0h2m3 0h1m1 0h2m1 0h4m5 0h3m1 0h1m1 0h1m2 0h1m1 0h1m1 0h1m7 0h3m5 0h1m1 0h1m2 0h2m1 0h1m1 0h2m1 0h1m2 0h1m1 0h1m1 0h1m1 0h1m3 0h2m1 0h1m1 0h1m2 0h1m1 0h4m1 0h1m1 0h2m1 0h5m1 0h6m2 0h1m1 0h1m4 0h1m1 0h3m1 0h6m2 0h3m1 0h1m2 0h1m5 0h5m1 0h1m1 0h3m2 0h3m2 0h1m5 0h1m2 0h1m3 0h2m5 0h2m2 0h2m2 0h2m3 0h1m2 0h2m1 0h1m2 0h8m1 0h2m2 0h2m1 0h2m2 0h2m2 0h1m4 0h2m3 0h2m1 0h2m1 0h1m1 0h4m4 0h2m1 0h1m1 0h1m2 0h2m3 0h2m3 0h1m1 0h3m3 0h1m2 0h2m2 0h2m6 0h2m1 0h1m6 0h2m1 0h1m2 0h3m1 0h1m3 0h3m1 0h3m1 0h2m1 0h1m1 0h3m8 0h1m3 0h1m1 0h1m3 0h1m2 0h3m1 0h1m1 0h1m2 0h1m2 0h1m1 0h1m2 0h2m3 0h6m1 0h2m1 0h1m1 0h1m3 0h4m5 0h1m1 0h3M1 31.5h1m9 0h1m1 0h2m4 0h1m1 0h3m11 0h1m1 0h1m1 0h1m5 0h2m33 0h1m2 0h2m2 0h4m2 0h1m1 0h3m1 0h3m1 0h1m1 0h2m4 0h1m1 0h1m2 0h4m5 0h4m1 0h1m1 0h7m1 0h1m3 0h1m1 0h4m3 0h2m1 0h3m3 0h1m3 0h1m1 0h4m1 0h5m1 0h1m1 0h1m1 0h4m2 0h1m1 0h2m1 0h1m1 0h2m1 0h3m1 0h1m3 0h3m1 0h1m1 0h3m4 0h1m3 0h3m1 0h1m5 0h2m4 0h2m10 0h1m7 0h2m1 0h3m1 0h1m2 0h3m1 0h1m1 0h5m1 0h3m3 0h1m6 0h4m4 0h1m2 0h2m2 0h1m1 0h3m3 0h1m1 0h3m1 0h1m4 0h1m3 0h1m2 0h2m1 0h1m2 0h2m1 0h1m1 0h1m1 0h2m1 0h1m1 0h1m4 0h1m1 0h1m2 0h1m1 0h1m1 0h3m2 0h5m2 0h4m1 0h2m1 0h1m1 0h3m1 0h1m1 0h1m1 0h2m1 0h1m2 0h1m1 0h1m1 0h1m4 0h1m1 0h1m1 0h1m1 0h1m1 0h1m3 0h3m1 0h1m1 0h1m2 0h2m1 0h2m1 0h2m2 0h3m1 0h2m2 0h1m3 0h1m1 0h1m1 0h3m1 0h3m1 0h2m1 0h3m1 0h1m1 0h3m1 0h3m2 0h1m1 0h4m1 0h1m1 0h1M1 32.5h1m9 0h1m1 0h2m4 0h1m1 0h3m11 0h2m2 0h1m5 0h2m33 0h3m1 0h1m9 0h5m1 0h2m3 0h1m2 0h1m2 0h1m4 0h2m3 0h2m3 0h3m2 0h1m1 0h1m5 0h8m3 0h1m2 0h1m2 0h2m2 0h2m3 0h1m2 0h1m1 0h1m2 0h1m1 0h4m1 0h5m1 0h1m1 0h3m1 0h1m1 0h3m1 0h1m2 0h1m3 0h1m2 0h2m2 0h1m1 0h3m1 0h2m2 0h2m2 0h1m1 0h3m1 0h1m3 0h1m1 0h1m1 0h3m2 0h1m1 0h1m2 0h1m1 0h2m4 0h1m2 0h1m2 0h3m3 0h2m2 0h6m2 0h2m2 0h1m1 0h1m1 0h5m1 0h1m1 0h2m2 0h1m1 0h3m1 0h1m1 0h3m3 0h1m1 0h2m3 0h2m1 0h2m2 0h3m2 0h2m1 0h4m2 0h1m5 0h2m2 0h4m2 0h1m4 0h1m2 0h1m1 0h3m1 0h2m1 0h2m1 0h4m1 0h1m1 0h1m2 0h1m1 0h1m3 0h2m5 0h1m1 0h1m4 0h1m1 0h1m2 0h1m1 0h1m1 0h1m2 0h2m1 0h1m2 0h1m1 0h1m2 0h1m3 0h2m2 0h2m6 0h3m3 0h1m1 0h2m7 0h6m3 0h5m2 0h6m2 0h2m2 0h2M1 33.5h1m9 0h1m1 0h2m4 0h1m1 0h3m11 0h3m1 0h1m5 0h2m33 0h1m2 0h2m1 0h6m2 0h1m1 0h5m1 0h1m1 0h1m3 0h5m1 0h1m2 0h1m3 0h1m3 0h4m4 0h4m1 0h1m1 0h1m1 0h3m9 0h1m2 0h2m3 0h3m3 0h3m1 0h1m2 0h1m1 0h1m3 0h1m1 0h3m3 0h1m2 0h1m2 0h2m1 0h2m1 0h1m1 0h3m1 0h2m2 0h1m1 0h2m3 0h1m1 0h1m2 0h3m8 0h5m2 0h4m2 0h1m7 0h1m1 0h2m1 0h1m1 0h2m2 0h3m1 0h2m1 0h1m5 0h2m1 0h4m4 0h1m3 0h1m1 0h9m2 0h3m1 0h3m2 0h3m1 0h1m1 0h1m1 0h1m1 0h1m3 0h1m2 0h4m2 0h3m1 0h1m1 0h1m2 0h1m1 0h3m1 0h2m3 0h1m2 0h1m2 0h3m1 0h5m3 0h1m4 0h2m3 0h1m3 0h2m2 0h1m1 0h1m2 0h1m1 0h1m3 0h1m1 0h4m2 0h1m1 0h1m1 0h1m2 0h1m2 0h1m3 0h2m1 0h1m1 0h1m1 0h1m1 0h4m2 0h1m3 0h2m2 0h1m3 0h2m4 0h4m1 0h1m3 0h4m1 0h1m2 0h3m1 0h2m5 0h1m1 0h1m1 0h3M1 34.5h1m9 0h1m1 0h2m4 0h1m1 0h3m10 0h1m4 0h1m5 0h2m33 0h3m1 0h1m3 0h2m1 0h1m2 0h1m1 0h1m1 0h4m4 0h2m4 0h1m2 0h2m1 0h1m2 0h2m3 0h2m3 0h1m1 0h2m1 0h4m1 0h3m4 0h1m1 0h1m1 0h1m5 0h1m2 0h2m5 0h3m1 0h2m2 0h1m1 0h1m1 0h2m2 0h1m1 0h1m1 0h3m4 0h2m1 0h1m3 0h1m5 0h1m1 0h1m1 0h1m1 0h4m1 0h1m1 0h4m1 0h2m1 0h2m1 0h1m1 0h2m2 0h3m1 0h2m1 0h1m1 0h1m1 0h2m1 0h1m2 0h2m2 0h2m4 0h4m2 0h1m1 0h2m2 0h1m4 0h1m2 0h1m2 0h1m1 0h2m1 0h1m1 0h2m2 0h1m4 0h2m1 0h1m7 0h1m2 0h1m2 0h3m2 0h4m5 0h2m1 0h1m2 0h1m2 0h2m4 0h4m1 0h2m3 0h3m1 0h2m1 0h1m2 0h2m1 0h1m1 0h7m1 0h1m2 0h1m1 0h1m3 0h1m2 0h2m1 0h1m4 0h3m2 0h1m1 0h4m1 0h1m1 0h1m3 0h2m1 0h1m3 0h1m1 0h2m3 0h2m2 0h1m2 0h1m1 0h3m2 0h1m3 0h1m1 0h1m1 0h1m4 0h1m1 0h4m2 0h2m1 0h4m1 0h1m2 0h1m5 0h3m2 0h1M1 35.5h1m9 0h1m1 0h2m4 0h1m1 0h3m10 0h1m2 0h1m1 0h1m5 0h2m33 0h1m2 0h2m2 0h4m2 0h1m1 0h3m3 0h1m2 0h2m3 0h2m1 0h2m1 0h1m1 0h4m4 0h2m1 0h2m2 0h4m2 0h1m1 0h1m2 0h1m5 0h1m1 0h1m1 0h2m1 0h2m2 0h2m1 0h1m4 0h5m1 0h2m1 0h1m4 0h1m2 0h3m7 0h1m4 0h1m1 0h4m2 0h1m2 0h1m1 0h3m1 0h1m1 0h1m3 0h2m5 0h2m1 0h1m1 0h1m1 0h2m2 0h1m14 0h3m2 0h2m1 0h4m2 0h1m4 0h2m2 0h1m1 0h3m1 0h2m1 0h3m1 0h1m1 0h5m1 0h4m2 0h2m2 0h1m2 0h2m2 0h1m1 0h3m4 0h3m1 0h1m1 0h1m1 0h2m1 0h1m2 0h3m2 0h2m2 0h2m1 0h1m1 0h2m1 0h1m1 0h1m3 0h2m3 0h2m2 0h3m1 0h1m1 0h1m1 0h1m1 0h1m2 0h1m3 0h6m6 0h1m1 0h4m1 0h1m1 0h1m3 0h1m3 0h2m3 0h3m1 0h1m1 0h4m1 0h1m2 0h1m2 0h3m1 0h2m2 0h1m6 0h1m5 0h4m1 0h2m3 0h1m2 0h1m1 0h1m4 0h1m2 0h1m4 0h1m2 0h2m1 0h1M1 36.5h1m9 0h1m1 0h2m4 0h1m1 0h3m10 0h1m1 0h1m2 0h1m5 0h2m35 0h1m1 0h1m1 0h1m3 0h3m1 0h1m1 0h2m1 0h2m2 0h3m1 0h1m3 0h1m1 0h1m1 0h3m3 0h1m6 0h1m1 0h1m3 0h1m1 0h1m2 0h4m1 0h1m2 0h4m1 0h1m1 0h1m5 0h3m1 0h3m1 0h1m1 0h1m1 0h2m1 0h4m1 0h5m1 0h1m1 0h3m2 0h6m2 0h1m2 0h2m2 0h2m2 0h1m2 0h2m2 0h1m2 0h3m4 0h1m2 0h1m1 0h1m1 0h1m1 0h1m1 0h2m1 0h1m1 0h1m1 0h1m1 0h2m1 0h1m6 0h3m1 0h3m1 0h1m1 0h1m3 0h4m2 0h1m1 0h2m4 0h1m1 0h1m1 0h1m1 0h1m3 0h1m2 0h4m5 0h1m3 0h2m2 0h1m2 0h1m1 0h2m3 0h2m5 0h1m2 0h1m1 0h2m2 0h1m1 0h3m1 0h1m2 0h1m1 0h1m1 0h1m2 0h4m2 0h1m1 0h2m1 0h4m1 0h1m1 0h4m4 0h2m4 0h1m2 0h1m6 0h2m4 0h1m1 0h5m1 0h2m1 0h1m1 0h6m1 0h1m1 0h1m4 0h1m1 0h2m1 0h1m2 0h1m1 0h2m2 0h2m3 0h2m2 0h1m1 0h3m1 0h2m1 0h3m5 0h2m1 0h1m2 0h1m4 0h1m1 0h2m1 0h3m1 0h1M1 37.5h1m9 0h1m1 0h2m4 0h1m1 0h3m10 0h1m1 0h2m1 0h1m5 0h2m36 0h2m2 0h4m2 0h1m1 0h3m1 0h1m2 0h2m1 0h2m1 0h1m1 0h2m4 0h2m1 0h1m1 0h2m2 0h4m1 0h1m2 0h3m2 0h1m4 0h3m1 0h2m2 0h3m2 0h5m1 0h1m2 0h1m2 0h5m1 0h2m1 0h1m1 0h1m2 0h1m1 0h2m3 0h1m2 0h1m1 0h1m3 0h2m1 0h1m1 0h1m1 0h1m3 0h1m1 0h1m1 0h1m3 0h2m4 0h1m2 0h1m2 0h2m2 0h1m1 0h1m1 0h1m2 0h2m1 0h1m5 0h1m6 0h2m3 0h5m1 0h3m2 0h3m1 0h2m3 0h2m3 0h2m1 0h4m5 0h2m4 0h1m1 0h3m3 0h1m2 0h3m1 0h2m4 0h3m1 0h2m1 0h1m1 0h1m1 0h3m1 0h3m2 0h1m1 0h1m1 0h1m1 0h1m4 0h3m1 0h1m1 0h1m3 0h1m1 0h1m1 0h1m1 0h2m2 0h1m1 0h1m2 0h1m10 0h1m1 0h1m2 0h2m1 0h1m1 0h1m2 0h1m1 0h2m2 0h1m1 0h1m3 0h1m1 0h2m2 0h1m4 0h2m2 0h3m2 0h1m1 0h2m2 0h1m1 0h2m1 0h4m6 0h2m1 0h3m1 0h2m1 0h1m1 0h1m2 0h1m2 0h1m2 0h3m1 0h1m2 0h3m1 0h2m3 0h1M1 38.5h1m9 0h1m1 0h2m4 0h1m1 0h3m10 0h2m3 0h1m5 0h2m33 0h2m4 0h1m1 0h1m1 0h1m4 0h3m2 0h3m1 0h1m2 0h2m3 0h1m2 0h2m1 0h1m2 0h2m3 0h2m5 0h1m2 0h1m3 0h4m3 0h3m2 0h1m2 0h1m2 0h1m1 0h2m2 0h1m5 0h4m1 0h1m2 0h1m1 0h1m1 0h3m1 0h1m1 0h1m1 0h2m2 0h2m2 0h1m1 0h1m1 0h4m2 0h3m1 0h1m1 0h1m1 0h1m2 0h1m1 0h1m1 0h1m2 0h1m2 0h4m2 0h1m1 0h2m2 0h3m1 0h2m2 0h2m1 0h1m8 0h4m1 0h4m5 0h1m6 0h4m4 0h1m5 0h1m1 0h2m5 0h2m4 0h3m1 0h2m1 0h3m2 0h2m1 0h1m8 0h1m2 0h1m1 0h3m2 0h4m5 0h1m1 0h1m1 0h1m2 0h1m2 0h1m1 0h1m1 0h1m2 0h3m4 0h2m1 0h2m2 0h2m2 0h3m3 0h2m1 0h3m2 0h2m2 0h1m2 0h1m1 0h3m5 0h1m2 0h1m2 0h1m2 0h1m1 0h1m1 0h1m5 0h2m1 0h5m5 0h1m3 0h4m1 0h1m2 0h1m5 0h1m2 0h1m1 0h2m2 0h2m1 0h1m2 0h2m2 0h3m2 0h2M1 39.5h1m9 0h1m1 0h2m4 0h1m1 0h3m10 0h2m1 0h1m1 0h1m5 0h2m33 0h1m2 0h1m4 0h3m1 0h1m1 0h1m1 0h5m1 0h1m1 0h2m2 0h1m1 0h7m1 0h2m1 0h2m2 0h1m3 0h2m1 0h4m2 0h1m1 0h1m1 0h5m1 0h1m4 0h2m1 0h1m1 0h2m1 0h2m2 0h1m2 0h4m2 0h2m3 0h1m1 0h1m1 0h4m4 0h1m2 0h2m1 0h1m2 0h1m3 0h2m1 0h3m1 0h1m2 0h1m2 0h1m5 0h5m2 0h1m1 0h3m2 0h1m1 0h1m5 0h1m7 0h1m1 0h8m3 0h2m2 0h3m3 0h2m1 0h2m1 0h2m2 0h2m2 0h1m1 0h3m3 0h1m2 0h1m3 0h7m1 0h1m1 0h2m1 0h3m1 0h1m1 0h2m4 0h2m4 0h3m1 0h1m1 0h1m1 0h3m1 0h4m1 0h2m2 0h1m2 0h5m5 0h4m2 0h1m4 0h1m1 0h1m3 0h3m1 0h1m1 0h2m2 0h1m1 0h2m1 0h5m7 0h1m3 0h2m2 0h2m1 0h2m2 0h1m2 0h2m1 0h1m3 0h1m1 0h1m1 0h5m1 0h2m1 0h1m1 0h2m2 0h3m1 0h1m1 0h4m1 0h1m2 0h4m1 0h1m1 0h3m1 0h5m1 0h2m2 0h2M1 40.5h1m9 0h1m1 0h2m4 0h1m1 0h3m10 0h3m2 0h1m5 0h2m33 0h3m8 0h1m1 0h4m1 0h1m2 0h4m1 0h4m1 0h1m1 0h1m3 0h3m1 0h1m4 0h2m2 0h4m3 0h1m1 0h1m1 0h1m4 0h7m5 0h4m6 0h1m1 0h4m1 0h1m1 0h5m1 0h1m2 0h1m1 0h3m3 0h1m1 0h1m1 0h1m2 0h1m1 0h1m1 0h1m2 0h2m1 0h2m1 0h3m1 0h2m1 0h1m1 0h3m2 0h3m1 0h1m2 0h2m1 0h1m1 0h3m3 0h1m3 0h1m1 0h5m1 0h1m3 0h2m1 0h1m3 0h1m5 0h1m3 0h1m1 0h2m3 0h1m1 0h1m2 0h9m3 0h1m2 0h1m1 0h1m2 0h3m2 0h1m3 0h3m2 0h6m2 0h1m2 0h2m2 0h2m1 0h1m1 0h2m1 0h2m2 0h1m1 0h2m1 0h2m1 0h1m2 0h2m1 0h1m1 0h1m1 0h2m1 0h1m5 0h1m3 0h1m4 0h6m1 0h2m1 0h2m1 0h1m2 0h1m2 0h2m2 0h3m1 0h2m1 0h4m3 0h3m2 0h2m2 0h1m3 0h1m3 0h1m5 0h2m1 0h2m2 0h5m1 0h4m1 0h2m1 0h1m5 0h1m1 0h1m2 0h3m1 0h1m3 0h1m1 0h1m1 0h3M1 41.5h1m9 0h1m1 0h2m4 0h1m1 0h3m10 0h4m1 0h1m5 0h2m33 0h1m2 0h1m1 0h6m1 0h1m1 0h2m1 0h2m3 0h2m2 0h1m1 0h1m1 0h2m2 0h1m1 0h1m1 0h5m2 0h6m1 0h1m2 0h1m2 0h1m1 0h1m1 0h1m6 0h2m2 0h2m2 0h1m3 0h1m1 0h1m1 0h1m2 0h4m1 0h4m2 0h1m5 0h3m1 0h1m1 0h2m1 0h2m1 0h1m1 0h3m1 0h4m1 0h1m1 0h2m1 0h2m2 0h1m6 0h5m1 0h2m1 0h2m3 0h1m1 0h1m16 0h2m1 0h1m3 0h2m1 0h3m1 0h3m1 0h1m2 0h1m2 0h2m4 0h1m1 0h2m2 0h1m1 0h1m1 0h5m1 0h2m1 0h4m7 0h2m1 0h1m3 0h2m1 0h2m4 0h1m1 0h4m3 0h2m2 0h2m1 0h1m1 0h2m2 0h4m2 0h1m1 0h1m2 0h1m8 0h2m4 0h3m1 0h3m3 0h1m1 0h3m1 0h1m1 0h1m1 0h2m2 0h1m1 0h4m2 0h2m1 0h4m2 0h1m2 0h3m1 0h1m2 0h1m2 0h2m2 0h4m1 0h3m3 0h3m6 0h7m1 0h1m1 0h5m2 0h1m1 0h1m1 0h3m4 0h4m1 0h1m1 0h1M1 42.5h1m9 0h1m1 0h2m4 0h1m1 0h3m9 0h1m5 0h1m5 0h2m33 0h3m1 0h1m1 0h3m3 0h3m2 0h2m1 0h1m1 0h2m1 0h3m1 0h1m1 0h2m3 0h3m2 0h1m1 0h1m2 0h3m7 0h1m2 0h4m4 0h4m1 0h1m5 0h1m1 0h3m2 0h1m2 0h1m1 0h3m1 0h11m1 0h3m1 0h1m4 0h1m4 0h2m1 0h7m1 0h1m1 0h1m1 0h3m10 0h3m1 0h1m2 0h2m1 0h1m3 0h1m15 0h2m5 0h2m3 0h2m1 0h2m2 0h3m1 0h3m1 0h1m4 0h1m1 0h1m1 0h1m2 0h1m8 0h1m1 0h3m1 0h1m3 0h1m2 0h1m6 0h1m1 0h4m1 0h3m3 0h1m1 0h1m2 0h1m1 0h4m3 0h2m3 0h3m5 0h1m3 0h1m3 0h2m2 0h2m1 0h1m1 0h1m4 0h3m4 0h1m2 0h1m5 0h3m3 0h3m2 0h3m2 0h1m7 0h1m5 0h3m4 0h5m1 0h1m6 0h1m1 0h4m2 0h4m3 0h1m1 0h2m1 0h1m3 0h2m1 0h1m1 0h5m2 0h1m1 0h4M1 43.5h1m9 0h1m1 0h2m4 0h1m1 0h3m9 0h1m3 0h1m1 0h1m5 0h2m37 0h1m1 0h4m3 0h1m1 0h4m1 0h1m1 0h3m2 0h1m2 0h2m1 0h1m1 0h2m1 0h6m1 0h3m2 0h2m2 0h4m2 0h1m1 0h3m1 0h1m6 0h2m1 0h3m6 0h1m2 0h1m1 0h1m3 0h2m5 0h1m2 0h3m4 0h1m7 0h3m1 0h3m1 0h2m1 0h1m1 0h2m1 0h3m1 0h1m1 0h1m1 0h2m3 0h1m2 0h1m1 0h1m1 0h1m1 0h2m2 0h1m1 0h1m13 0h2m1 0h5m2 0h1m2 0h2m4 0h1m2 0h2m3 0h1m4 0h2m1 0h1m1 0h1m1 0h1m4 0h2m8 0h1m4 0h1m3 0h2m1 0h1m1 0h2m3 0h4m1 0h1m1 0h2m1 0h1m1 0h1m1 0h2m2 0h7m1 0h2m4 0h1m1 0h3m2 0h1m2 0h2m1 0h2m1 0h1m4 0h1m3 0h2m1 0h1m1 0h2m3 0h1m2 0h1m3 0h4m10 0h1m1 0h1m2 0h1m1 0h5m2 0h1m2 0h3m1 0h3m1 0h1m1 0h4m1 0h1m1 0h1m4 0h3m1 0h5m3 0h3m1 0h1m2 0h1m1 0h3m2 0h6m1 0h4M1 44.5h1m9 0h1m1 0h2m4 0h1m1 0h3m9 0h1m2 0h1m2 0h1m5 0h2m33 0h3m1 0h1m6 0h2m2 0h4m1 0h2m1 0h1m1 0h1m1 0h1m3 0h1m1 0h1m2 0h3m1 0h1m1 0h2m2 0h4m9 0h1m2 0h2m1 0h2m1 0h2m2 0h1m2 0h4m2 0h1m4 0h1m1 0h1m2 0h5m1 0h2m1 0h2m1 0h2m2 0h2m1 0h2m2 0h3m1 0h1m4 0h1m1 0h1m1 0h10m2 0h1m2 0h1m2 0h2m1 0h2m2 0h1m3 0h1m1 0h1m2 0h2m13 0h2m2 0h2m3 0h1m1 0h1m1 0h2m1 0h1m1 0h1m1 0h3m1 0h1m1 0h1m2 0h3m1 0h1m3 0h1m2 0h5m1 0h1m1 0h2m2 0h3m3 0h1m3 0h3m1 0h1m1 0h1m2 0h3m2 0h3m5 0h2m3 0h1m1 0h1m2 0h2m1 0h2m1 0h1m7 0h1m1 0h1m4 0h1m2 0h1m1 0h2m14 0h1m1 0h2m3 0h3m2 0h1m2 0h9m1 0h1m5 0h1m1 0h1m1 0h2m1 0h2m1 0h1m1 0h1m3 0h1m2 0h2m1 0h1m1 0h1m3 0h1m1 0h1m5 0h2m1 0h1m1 0h1m2 0h1m5 0h4m3 0h3m2 0h1m1 0h1m3 0h2m2 0h1M1 45.5h1m9 0h1m1 0h2m4 0h1m1 0h3m9 0h1m2 0h2m1 0h1m5 0h2m33 0h1m3 0h1m1 0h1m1 0h1m6 0h4m5 0h2m2 0h1m1 0h2m4 0h4m1 0h3m1 0h4m1 0h1m1 0h2m1 0h2m1 0h3m1 0h3m3 0h2m1 0h1m1 0h4m1 0h1m3 0h1m2 0h1m2 0h3m2 0h3m3 0h1m1 0h1m1 0h4m5 0h1m6 0h1m1 0h5m2 0h1m2 0h1m1 0h2m8 0h2m1 0h1m6 0h1m1 0h7m14 0h2m1 0h2m2 0h1m1 0h1m4 0h2m1 0h4m2 0h2m3 0h4m1 0h4m2 0h1m2 0h1m1 0h1m1 0h1m2 0h2m3 0h1m3 0h1m2 0h4m1 0h2m1 0h1m4 0h1m1 0h6m1 0h2m1 0h1m1 0h2m1 0h1m1 0h1m3 0h1m1 0h2m1 0h1m4 0h3m1 0h1m1 0h1m1 0h2m2 0h1m1 0h3m3 0h1m2 0h3m2 0h1m3 0h1m1 0h1m1 0h1m2 0h2m2 0h2m1 0h2m2 0h3m3 0h2m3 0h2m1 0h1m5 0h1m1 0h1m1 0h1m1 0h2m1 0h2m5 0h3m1 0h1m4 0h2m1 0h1m1 0h1m1 0h1m2 0h3m1 0h1m2 0h1m5 0h1m1 0h4m3 0h1m1 0h2M1 46.5h1m9 0h1m1 0h2m4 0h1m1 0h3m9 0h1m1 0h1m3 0h1m5 0h2m33 0h3m1 0h1m3 0h1m4 0h1m2 0h1m1 0h2m1 0h4m2 0h1m4 0h1m2 0h4m2 0h3m2 0h1m1 0h1m3 0h2m5 0h4m4 0h2m1 0h3m2 0h4m1 0h1m3 0h3m3 0h6m2 0h1m2 0h1m1 0h2m1 0h2m1 0h2m2 0h5m5 0h2m1 0h1m2 0h1m1 0h2m1 0h4m1 0h1m3 0h2m3 0h3m1 0h1m1 0h3m1 0h2m8 0h1m2 0h1m1 0h1m2 0h2m4 0h4m2 0h1m1 0h1m2 0h3m3 0h1m1 0h1m1 0h1m1 0h1m1 0h2m2 0h2m4 0h1m2 0h3m1 0h2m2 0h2m1 0h1m3 0h1m1 0h1m1 0h1m1 0h3m4 0h1m3 0h1m1 0h4m1 0h1m2 0h2m1 0h1m3 0h1m1 0h1m1 0h4m2 0h6m1 0h1m1 0h2m1 0h6m2 0h2m1 0h2m2 0h2m1 0h1m1 0h2m4 0h1m3 0h2m3 0h1m6 0h4m2 0h1m4 0h2m1 0h1m2 0h1m5 0h5m1 0h2m3 0h2m3 0h1m1 0h1m1 0h3m1 0h2m1 0h2m1 0h2m3 0h1m2 0h2m2 0h3m1 0h2m2 0h1m1 0h1m1 0h1m3 0h2M1 47.5h1m9 0h1m1 0h2m4 0h1m1 0h3m9 0h1m1 0h1m1 0h1m1 0h1m5 0h2m33 0h2m1 0h1m2 0h5m1 0h8m5 0h1m3 0h1m2 0h1m3 0h8m1 0h3m2 0h1m1 0h4m2 0h1m1 0h1m1 0h1m1 0h1m4 0h1m1 0h4m2 0h4m2 0h1m1 0h1m1 0h5m2 0h2m1 0h2m2 0h1m2 0h2m5 0h1m1 0h4m1 0h3m2 0h3m2 0h1m1 0h6m1 0h3m1 0h1m2 0h1m2 0h1m2 0h1m4 0h1m1 0h1m3 0h1m1 0h1m4 0h1m6 0h4m7 0h2m1 0h1m2 0h1m1 0h4m1 0h1m1 0h1m1 0h2m1 0h1m2 0h1m1 0h2m4 0h2m4 0h1m1 0h2m3 0h3m2 0h2m3 0h2m7 0h2m8 0h3m1 0h1m3 0h1m1 0h2m1 0h1m2 0h5m1 0h1m2 0h1m2 0h1m1 0h1m2 0h1m1 0h1m1 0h1m3 0h1m4 0h1m3 0h1m1 0h1m2 0h2m1 0h1m3 0h1m6 0h3m1 0h1m2 0h1m2 0h3m1 0h1m1 0h5m1 0h2m1 0h1m1 0h4m1 0h2m1 0h2m2 0h2m1 0h2m3 0h1m3 0h1m1 0h1m1 0h2m1 0h2m1 0h1m1 0h1m2 0h2m1 0h2m2 0h1m1 0h3m1 0h1m1 0h3m1 0h1m1 0h1M1 48.5h1m9 0h1m1 0h2m4 0h1m1 0h3m9 0h1m1 0h2m2 0h1m5 0h2m33 0h5m3 0h1m1 0h2m2 0h1m1 0h2m4 0h3m2 0h1m1 0h1m1 0h1m1 0h2m1 0h6m1 0h1m3 0h2m2 0h1m1 0h1m2 0h2m1 0h5m3 0h1m1 0h2m1 0h1m2 0h1m4 0h4m1 0h1m2 0h1m1 0h1m1 0h4m2 0h1m1 0h5m1 0h1m1 0h3m1 0h1m1 0h1m1 0h3m4 0h2m3 0h1m2 0h2m2 0h3m1 0h1m1 0h1m7 0h3m4 0h1m1 0h1m2 0h2m2 0h3m9 0h1m1 0h2m6 0h2m1 0h3m1 0h1m1 0h3m1 0h2m3 0h2m3 0h1m1 0h1m6 0h1m2 0h2m2 0h3m3 0h2m1 0h4m3 0h8m6 0h1m3 0h4m1 0h2m7 0h8m1 0h3m1 0h2m1 0h3m3 0h1m1 0h1m2 0h2m5 0h1m2 0h3m2 0h3m1 0h1m1 0h1m2 0h1m3 0h2m3 0h1m3 0h1m2 0h1m2 0h1m5 0h1m1 0h1m1 0h1m1 0h1m1 0h1m3 0h1m3 0h4m5 0h1m4 0h2m2 0h2m3 0h3m4 0h4m1 0h5m1 0h3m2 0h4M1 49.5h1m9 0h1m1 0h2m4 0h1m1 0h3m9 0h1m1 0h3m1 0h1m5 0h2m33 0h2m1 0h2m1 0h6m3 0h3m3 0h1m1 0h1m2 0h1m1 0h1m2 0h1m2 0h1m1 0h8m1 0h4m1 0h1m1 0h2m1 0h1m6 0h3m2 0h3m3 0h2m1 0h3m1 0h2m1 0h4m1 0h4m1 0h3m1 0h1m5 0h1m1 0h2m4 0h1m2 0h1m1 0h1m3 0h2m1 0h2m1 0h1m1 0h1m1 0h1m2 0h2m1 0h2m3 0h2m1 0h1m2 0h1m2 0h1m2 0h1m1 0h1m1 0h1m3 0h1m6 0h1m4 0h1m2 0h3m3 0h1m1 0h1m1 0h3m2 0h5m1 0h1m1 0h3m2 0h2m2 0h4m4 0h3m1 0h2m2 0h7m3 0h3m1 0h1m2 0h3m4 0h3m1 0h3m1 0h3m1 0h1m2 0h5m2 0h1m1 0h2m2 0h2m3 0h2m2 0h1m1 0h2m1 0h3m1 0h2m1 0h1m2 0h4m1 0h1m1 0h4m1 0h1m3 0h1m3 0h1m3 0h2m1 0h2m1 0h1m1 0h1m2 0h3m5 0h1m2 0h2m1 0h4m3 0h2m1 0h3m3 0h1m2 0h1m1 0h4m1 0h1m2 0h5m1 0h1m1 0h1m2 0h1m1 0h1m2 0h1m1 0h2m1 0h6m3 0h1m4 0h3M1 50.5h1m9 0h1m1 0h2m4 0h1m1 0h3m9 0h2m4 0h1m5 0h2m33 0h3m1 0h1m1 0h1m1 0h1m2 0h4m1 0h7m1 0h1m1 0h2m3 0h1m3 0h3m2 0h2m1 0h1m4 0h2m1 0h1m1 0h2m1 0h2m1 0h5m2 0h7m4 0h1m3 0h1m2 0h1m5 0h4m1 0h4m1 0h3m1 0h1m1 0h3m1 0h1m1 0h1m1 0h5m2 0h1m1 0h4m1 0h2m1 0h2m1 0h4m1 0h1m1 0h3m1 0h1m1 0h1m1 0h4m1 0h3m1 0h1m3 0h2m1 0h1m1 0h1m2 0h1m4 0h1m1 0h2m2 0h1m3 0h4m1 0h3m1 0h8m2 0h1m3 0h2m1 0h1m5 0h6m5 0h1m4 0h1m4 0h1m4 0h1m5 0h1m1 0h2m1 0h2m2 0h5m1 0h6m2 0h3m1 0h1m1 0h3m1 0h1m1 0h2m2 0h3m1 0h1m3 0h1m1 0h1m1 0h2m3 0h2m3 0h2m1 0h3m1 0h1m2 0h1m1 0h2m1 0h1m4 0h2m1 0h4m2 0h1m2 0h2m3 0h1m1 0h2m1 0h1m2 0h2m4 0h1m3 0h2m1 0h3m3 0h2m2 0h1m3 0h3m1 0h1m4 0h1m3 0h4m1 0h1m1 0h1m1 0h2m3 0h7M1 51.5h1m9 0h1m1 0h2m4 0h1m1 0h3m9 0h2m2 0h1m1 0h1m5 0h2m37 0h1m1 0h1m2 0h1m4 0h2m9 0h3m2 0h5m2 0h3m1 0h3m1 0h1m1 0h1m4 0h7m1 0h1m1 0h3m3 0h2m2 0h2m1 0h1m1 0h3m2 0h4m2 0h4m2 0h1m6 0h1m2 0h2m1 0h1m6 0h3m1 0h3m1 0h3m3 0h1m4 0h2m2 0h1m2 0h2m1 0h2m3 0h1m3 0h1m1 0h1m1 0h3m2 0h3m14 0h1m1 0h3m1 0h2m2 0h1m1 0h4m1 0h5m2 0h1m1 0h2m1 0h1m3 0h2m1 0h1m1 0h2m3 0h3m1 0h1m2 0h1m1 0h1m3 0h9m4 0h1m1 0h1m1 0h2m1 0h1m1 0h1m2 0h2m3 0h1m2 0h1m3 0h3m1 0h1m1 0h1m1 0h3m2 0h1m2 0h1m2 0h2m1 0h3m1 0h7m1 0h1m1 0h1m1 0h1m1 0h2m1 0h1m1 0h1m1 0h1m3 0h1m6 0h1m3 0h1m1 0h1m1 0h1m1 0h1m1 0h3m2 0h1m2 0h4m4 0h1m2 0h1m1 0h6m2 0h1m2 0h3m3 0h1m2 0h1m1 0h2m1 0h2m1 0h2m5 0h3m1 0h3m1 0h1m2 0h8M1 52.5h1m9 0h1m1 0h2m4 0h1m1 0h3m9 0h2m1 0h1m2 0h1m5 0h2m33 0h3m1 0h1m3 0h1m5 0h2m1 0h2m2 0h1m1 0h1m2 0h3m2 0h1m1 0h1m2 0h1m1 0h1m1 0h1m1 0h2m2 0h5m2 0h1m2 0h1m1 0h7m1 0h5m1 0h1m2 0h1m2 0h1m1 0h4m1 0h2m1 0h1m1 0h2m5 0h2m1 0h1m1 0h3m3 0h3m1 0h1m1 0h1m1 0h3m1 0h6m1 0h4m1 0h1m3 0h4m3 0h2m4 0h2m1 0h1m1 0h9m2 0h2m1 0h2m5 0h1m2 0h1m1 0h4m1 0h3m5 0h1m1 0h2m1 0h1m1 0h3m1 0h2m2 0h2m1 0h1m1 0h4m3 0h1m1 0h2m3 0h3m3 0h1m1 0h3m3 0h1m1 0h2m4 0h4m1 0h3m1 0h2m1 0h3m2 0h3m2 0h2m1 0h2m2 0h1m1 0h1m3 0h1m2 0h1m2 0h1m1 0h5m2 0h2m1 0h1m2 0h3m2 0h2m1 0h1m1 0h1m1 0h2m2 0h2m2 0h2m5 0h6m4 0h4m2 0h5m1 0h1m2 0h1m2 0h1m1 0h3m1 0h4m1 0h1m2 0h4m2 0h1m1 0h2m1 0h2m1 0h2m3 0h1m3 0h2m2 0h3m1 0h1m1 0h1m2 0h6M1 53.5h1m9 0h1m1 0h2m4 0h1m1 0h3m9 0h2m1 0h2m1 0h1m5 0h2m33 0h2m1 0h2m1 0h1m2 0h5m1 0h2m1 0h2m2 0h1m5 0h1m2 0h1m2 0h2m1 0h3m1 0h3m1 0h2m1 0h2m2 0h2m1 0h2m3 0h5m3 0h1m4 0h5m2 0h1m2 0h3m2 0h3m3 0h1m2 0h1m7 0h3m2 0h2m2 0h1m4 0h1m1 0h2m1 0h1m2 0h4m2 0h2m8 0h2m1 0h1m1 0h1m1 0h1m4 0h1m1 0h2m2 0h1m1 0h1m3 0h1m5 0h2m4 0h1m1 0h1m1 0h1m6 0h1m1 0h2m1 0h1m1 0h1m5 0h1m4 0h1m3 0h1m2 0h1m1 0h2m1 0h1m6 0h1m1 0h3m3 0h4m2 0h1m1 0h4m1 0h1m1 0h2m3 0h3m1 0h1m7 0h1m1 0h1m1 0h4m2 0h4m2 0h1m1 0h1m1 0h1m5 0h3m3 0h2m2 0h1m9 0h1m4 0h1m1 0h2m1 0h1m4 0h3m1 0h2m2 0h4m3 0h3m3 0h5m1 0h1m1 0h1m2 0h2m5 0h2m1 0h2m5 0h1m3 0h1m1 0h1m1 0h1m3 0h2m1 0h3m3 0h2m3 0h2m1 0h1m1 0h1m1 0h1m1 0h1m2 0h1M1 54.5h1m9 0h1m1 0h2m4 0h1m1 0h3m9 0h3m3 0h1m5 0h2m33 0h2m2 0h1m2 0h3m1 0h1m4 0h6m2 0h1m3 0h1m6 0h3m3 0h1m1 0h1m3 0h2m4 0h4m2 0h5m1 0h1m1 0h1m1 0h1m2 0h1m7 0h1m1 0h1m2 0h2m1 0h1m2 0h3m1 0h1m2 0h1m1 0h1m2 0h2m1 0h1m1 0h3m1 0h1m1 0h2m2 0h1m1 0h6m1 0h3m4 0h3m2 0h2m1 0h3m1 0h1m1 0h6m1 0h2m1 0h1m3 0h1m8 0h1m3 0h7m3 0h1m3 0h2m3 0h1m2 0h5m1 0h2m3 0h1m2 0h1m1 0h3m1 0h1m2 0h1m1 0h5m1 0h3m1 0h2m2 0h1m3 0h1m2 0h1m3 0h1m2 0h1m2 0h1m2 0h1m1 0h2m1 0h2m1 0h1m1 0h4m1 0h3m2 0h1m1 0h2m1 0h2m1 0h2m1 0h1m1 0h1m2 0h1m3 0h4m2 0h2m2 0h1m3 0h1m5 0h1m2 0h3m2 0h1m5 0h1m7 0h3m3 0h3m3 0h1m3 0h3m1 0h1m2 0h1m1 0h1m2 0h5m1 0h1m2 0h1m3 0h5m1 0h1m1 0h5m1 0h1m2 0h2m2 0h6m7 0h1M1 55.5h1m9 0h1m1 0h2m4 0h1m1 0h3m9 0h3m1 0h1m1 0h1m5 0h2m33 0h1m3 0h1m1 0h2m1 0h2m1 0h1m5 0h7m3 0h4m2 0h1m1 0h1m2 0h1m1 0h3m1 0h2m3 0h1m1 0h7m1 0h1m2 0h2m8 0h1m2 0h5m2 0h1m1 0h2m2 0h1m1 0h1m4 0h2m4 0h1m1 0h2m3 0h1m1 0h2m1 0h4m1 0h2m2 0h3m2 0h1m1 0h1m2 0h2m2 0h1m3 0h1m1 0h1m2 0h3m4 0h2m2 0h2m1 0h1m2 0h1m13 0h3m3 0h1m1 0h1m5 0h2m2 0h2m1 0h2m2 0h4m2 0h1m2 0h1m6 0h2m3 0h1m2 0h2m1 0h2m1 0h2m1 0h4m2 0h1m1 0h5m3 0h1m2 0h1m3 0h5m1 0h1m1 0h3m1 0h1m1 0h1m1 0h2m1 0h1m3 0h3m9 0h1m2 0h1m1 0h1m1 0h1m4 0h1m2 0h1m2 0h3m1 0h4m1 0h1m1 0h1m1 0h1m1 0h3m1 0h1m8 0h2m2 0h4m5 0h1m2 0h2m3 0h2m2 0h2m2 0h2m1 0h2m7 0h8m1 0h1m2 0h1m1 0h6m1 0h1m1 0h3m1 0h1m4 0h1M1 56.5h1m9 0h1m1 0h2m4 0h1m1 0h3m9 0h4m2 0h1m5 0h2m33 0h3m2 0h1m2 0h1m1 0h3m1 0h1m1 0h1m1 0h5m2 0h1m1 0h1m3 0h2m3 0h1m1 0h2m1 0h1m2 0h1m1 0h3m1 0h1m1 0h2m2 0h1m4 0h2m3 0h5m1 0h2m4 0h4m3 0h1m2 0h2m3 0h1m2 0h1m1 0h6m2 0h1m1 0h3m1 0h5m3 0h2m1 0h3m2 0h1m3 0h1m1 0h4m1 0h1m1 0h2m5 0h3m1 0h1m2 0h2m1 0h1m1 0h4m1 0h2m3 0h3m1 0h3m1 0h1m1 0h1m3 0h5m1 0h3m1 0h1m2 0h2m3 0h3m2 0h3m2 0h6m3 0h5m2 0h1m1 0h2m3 0h1m1 0h2m1 0h3m2 0h1m6 0h2m3 0h1m1 0h2m2 0h1m1 0h3m3 0h1m3 0h1m1 0h2m1 0h2m2 0h3m3 0h1m1 0h3m1 0h4m1 0h3m1 0h2m1 0h2m1 0h2m4 0h1m2 0h4m4 0h2m1 0h4m1 0h2m1 0h2m1 0h1m3 0h1m1 0h2m1 0h3m3 0h1m1 0h1m1 0h1m5 0h1m1 0h2m3 0h1m3 0h1m3 0h8m1 0h2m2 0h1m1 0h2m2 0h3m2 0h1m1 0h4m1 0h3M1 57.5h1m9 0h1m1 0h2m4 0h1m1 0h3m9 0h5m1 0h1m5 0h2m34 0h1m1 0h1m1 0h1m3 0h2m3 0h7m1 0h1m5 0h1m1 0h3m3 0h3m3 0h1m1 0h2m2 0h1m3 0h3m3 0h3m2 0h1m2 0h1m1 0h2m3 0h7m1 0h3m1 0h1m1 0h6m1 0h2m5 0h2m1 0h3m2 0h1m1 0h1m2 0h1m1 0h2m1 0h2m1 0h3m2 0h2m2 0h1m1 0h2m2 0h1m5 0h1m2 0h1m3 0h2m1 0h9m1 0h1m2 0h1m9 0h1m2 0h2m1 0h1m1 0h2m4 0h2m4 0h5m2 0h1m1 0h1m1 0h3m3 0h2m2 0h3m4 0h2m4 0h6m2 0h3m4 0h1m2 0h1m3 0h1m2 0h1m1 0h6m2 0h1m1 0h1m1 0h6m3 0h3m5 0h1m1 0h2m2 0h1m1 0h2m3 0h1m1 0h1m1 0h1m1 0h1m1 0h1m2 0h3m1 0h7m2 0h2m10 0h1m1 0h2m2 0h1m1 0h2m3 0h1m1 0h1m3 0h3m1 0h1m1 0h1m1 0h2m1 0h2m1 0h3m2 0h12m3 0h2m1 0h1m1 0h1m1 0h4m2 0h3m1 0h1m3 0h3m1 0h3M1 58.5h1m9 0h1m1 0h2m4 0h1m1 0h3m8 0h1m6 0h1m5 0h2m34 0h2m3 0h1m4 0h2m1 0h1m2 0h1m1 0h3m1 0h1m3 0h3m1 0h1m1 0h1m1 0h1m1 0h2m1 0h2m2 0h1m1 0h3m2 0h1m1 0h1m2 0h1m1 0h3m1 0h1m3 0h5m1 0h1m5 0h1m2 0h2m2 0h2m1 0h3m1 0h2m3 0h2m1 0h4m2 0h1m1 0h1m1 0h3m1 0h3m1 0h1m2 0h1m1 0h4m1 0h1m1 0h1m1 0h2m1 0h3m1 0h1m1 0h3m1 0h7m3 0h2m1 0h1m3 0h2m1 0h1m1 0h1m5 0h1m2 0h1m1 0h1m2 0h1m4 0h2m1 0h2m1 0h2m1 0h1m1 0h2m1 0h2m1 0h1m1 0h4m3 0h1m2 0h2m1 0h3m2 0h2m1 0h4m5 0h3m2 0h1m3 0h1m1 0h3m3 0h3m3 0h2m3 0h1m1 0h1m7 0h2m1 0h1m1 0h1m4 0h4m3 0h1m2 0h1m6 0h1m5 0h1m1 0h1m3 0h3m2 0h2m1 0h4m2 0h3m2 0h3m2 0h3m1 0h2m4 0h3m2 0h2m2 0h2m1 0h2m4 0h1m1 0h1m6 0h3m1 0h3m3 0h3m2 0h1m1 0h1m1 0h1m1 0h3m1 0h2m1 0h2m1 0h3m2 0h1m2 0h1m2 0h1M1 59.5h1m9 0h1m1 0h2m4 0h1m1 0h3m8 0h1m4 0h1m1 0h1m5 0h2m33 0h1m1 0h3m2 0h4m3 0h6m1 0h1m2 0h3m1 0h1m1 0h2m1 0h1m2 0h5m3 0h4m2 0h1m1 0h4m3 0h1m2 0h2m2 0h1m6 0h2m1 0h5m1 0h2m2 0h1m1 0h5m1 0h1m1 0h1m2 0h3m1 0h5m4 0h1m1 0h1m1 0h1m1 0h3m3 0h2m2 0h1m1 0h1m2 0h2m2 0h1m5 0h4m3 0h3m1 0h1m2 0h2m1 0h2m5 0h1m8 0h2m1 0h2m4 0h4m1 0h1m3 0h1m1 0h1m4 0h2m2 0h5m5 0h1m1 0h3m3 0h1m2 0h3m1 0h2m1 0h1m2 0h1m1 0h5m1 0h2m2 0h4m1 0h3m1 0h2m2 0h2m2 0h3m2 0h2m1 0h1m3 0h2m2 0h2m2 0h2m2 0h4m1 0h1m3 0h1m1 0h1m4 0h1m2 0h1m1 0h2m5 0h1m3 0h1m2 0h2m2 0h1m2 0h2m2 0h1m2 0h1m3 0h4m4 0h5m1 0h2m3 0h3m4 0h1m1 0h1m2 0h3m3 0h3m1 0h12m1 0h6m1 0h1m2 0h1m1 0h4m2 0h2M1 60.5h1m9 0h1m1 0h2m4 0h1m1 0h3m8 0h1m3 0h1m2 0h1m5 0h2m33 0h3m4 0h1m3 0h2m1 0h5m1 0h4m1 0h2m2 0h2m1 0h1m3 0h1m1 0h1m5 0h1m1 0h3m4 0h1m2 0h1m2 0h5m2 0h5m1 0h1m5 0h1m1 0h2m1 0h1m1 0h1m6 0h2m1 0h1m2 0h6m2 0h5m4 0h3m3 0h1m1 0h3m2 0h3m1 0h1m1 0h4m4 0h2m4 0h3m2 0h1m2 0h1m3 0h1m1 0h2m4 0h4m1 0h1m3 0h1m3 0h3m2 0h1m2 0h2m3 0h2m1 0h1m3 0h2m1 0h3m1 0h1m3 0h1m1 0h2m1 0h1m3 0h1m3 0h5m5 0h2m1 0h1m4 0h1m1 0h1m1 0h2m5 0h2m1 0h2m2 0h2m1 0h2m2 0h1m3 0h2m1 0h1m2 0h1m3 0h1m3 0h1m2 0h3m1 0h3m2 0h6m2 0h4m1 0h7m2 0h2m1 0h1m2 0h1m1 0h2m2 0h1m1 0h1m3 0h1m2 0h1m2 0h1m1 0h1m3 0h1m1 0h1m1 0h3m1 0h2m1 0h1m1 0h11m2 0h5m1 0h1m1 0h1m1 0h2m1 0h2m2 0h1m1 0h1m1 0h8m1 0h1m2 0h3m2 0h2M1 61.5h1m9 0h1m1 0h2m4 0h1m1 0h3m8 0h1m3 0h2m1 0h1m5 0h2m33 0h1m1 0h3m1 0h1m2 0h2m2 0h1m1 0h2m2 0h1m2 0h1m2 0h2m1 0h1m1 0h1m3 0h1m2 0h1m3 0h2m1 0h3m1 0h3m1 0h5m1 0h1m3 0h1m2 0h1m1 0h2m4 0h1m2 0h2m2 0h1m1 0h2m1 0h1m1 0h5m1 0h2m2 0h1m1 0h1m1 0h1m2 0h3m1 0h1m2 0h1m3 0h2m2 0h1m1 0h5m2 0h1m4 0h1m3 0h2m4 0h1m4 0h1m1 0h1m2 0h4m1 0h4m9 0h1m5 0h1m1 0h5m1 0h1m1 0h1m1 0h4m1 0h1m2 0h1m1 0h4m2 0h1m1 0h3m3 0h1m1 0h1m1 0h1m1 0h1m1 0h2m1 0h2m4 0h1m2 0h3m3 0h1m2 0h3m3 0h1m3 0h1m4 0h1m5 0h2m3 0h2m1 0h4m1 0h2m2 0h2m4 0h1m5 0h1m4 0h2m3 0h1m3 0h4m1 0h1m1 0h2m3 0h2m1 0h1m3 0h1m2 0h4m1 0h4m2 0h1m2 0h2m6 0h1m2 0h1m1 0h3m1 0h1m1 0h3m2 0h1m1 0h1m1 0h4m2 0h1m1 0h1m4 0h1m1 0h4m1 0h5m2 0h1m5 0h1m1 0h3m4 0h3M1 62.5h1m9 0h1m1 0h2m4 0h1m1 0h3m8 0h1m2 0h1m3 0h1m5 0h2m34 0h4m6 0h1m3 0h3m2 0h4m2 0h2m3 0h1m3 0h3m3 0h2m1 0h1m1 0h3m4 0h4m2 0h4m5 0h2m1 0h2m1 0h2m1 0h1m2 0h3m1 0h2m1 0h2m1 0h4m1 0h1m2 0h1m1 0h2m1 0h2m1 0h2m2 0h1m3 0h1m1 0h1m1 0h1m2 0h1m1 0h3m1 0h4m1 0h1m3 0h3m2 0h4m1 0h1m2 0h4m2 0h2m1 0h2m1 0h1m1 0h1m1 0h2m2 0h4m5 0h3m1 0h3m1 0h1m1 0h1m4 0h1m3 0h1m1 0h2m1 0h1m4 0h1m1 0h1m3 0h1m1 0h1m1 0h1m1 0h3m5 0h3m1 0h3m1 0h2m1 0h1m1 0h2m1 0h3m2 0h4m1 0h1m2 0h2m2 0h2m3 0h2m1 0h1m3 0h1m2 0h2m1 0h1m2 0h1m3 0h3m1 0h2m2 0h2m1 0h1m1 0h1m2 0h3m1 0h2m2 0h1m1 0h1m2 0h1m2 0h3m1 0h1m1 0h1m1 0h2m3 0h1m1 0h1m1 0h1m5 0h5m2 0h2m1 0h1m1 0h2m5 0h5m2 0h3m2 0h2m2 0h3m3 0h1m1 0h2m7 0h2m3 0h1m1 0h1m1 0h1m2 0h2m1 0h1m1 0h5m1 0h1M1 63.5h1m9 0h1m1 0h2m4 0h1m1 0h3m8 0h1m2 0h1m1 0h1m1 0h1m5 0h2m33 0h1m2 0h2m1 0h5m1 0h1m2 0h2m1 0h2m2 0h2m4 0h1m1 0h1m1 0h1m3 0h3m2 0h2m1 0h3m1 0h4m2 0h4m4 0h3m1 0h1m1 0h3m2 0h6m3 0h1m1 0h2m2 0h4m2 0h1m1 0h2m1 0h1m1 0h2m2 0h1m8 0h3m2 0h2m1 0h1m1 0h1m4 0h1m3 0h3m5 0h2m7 0h1m2 0h2m2 0h1m3 0h1m3 0h1m10 0h4m1 0h1m4 0h1m1 0h5m6 0h1m5 0h1m3 0h1m1 0h2m1 0h1m1 0h8m3 0h2m2 0h4m2 0h2m2 0h3m3 0h2m1 0h1m1 0h1m1 0h2m1 0h1m2 0h1m1 0h1m2 0h1m2 0h2m1 0h1m5 0h1m3 0h2m1 0h1m1 0h2m1 0h1m6 0h1m2 0h1m1 0h1m3 0h7m1 0h4m1 0h1m9 0h1m1 0h3m6 0h2m2 0h1m5 0h4m4 0h1m3 0h1m1 0h1m1 0h3m1 0h1m2 0h6m1 0h2m2 0h2m1 0h3m3 0h1m6 0h3m1 0h2m1 0h3m2 0h1m2 0h2M1 64.5h1m9 0h1m1 0h2m4 0h1m1 0h3m8 0h1m2 0h2m2 0h1m5 0h2m33 0h2m2 0h1m2 0h2m4 0h1m3 0h1m2 0h1m1 0h2m3 0h2m2 0h2m5 0h1m5 0h1m1 0h1m6 0h1m2 0h1m1 0h5m2 0h1m1 0h4m1 0h1m1 0h3m1 0h1m2 0h1m2 0h4m3 0h3m1 0h3m2 0h4m2 0h13m2 0h2m1 0h2m1 0h1m3 0h2m1 0h3m2 0h1m1 0h3m2 0h5m1 0h1m2 0h1m2 0h1m2 0h2m14 0h1m1 0h4m1 0h2m1 0h1m1 0h1m1 0h1m3 0h1m1 0h1m4 0h1m1 0h2m1 0h1m1 0h1m3 0h3m2 0h1m3 0h1m6 0h2m1 0h1m2 0h5m2 0h3m2 0h1m3 0h2m1 0h3m5 0h1m1 0h1m3 0h4m3 0h1m3 0h1m1 0h1m1 0h2m2 0h2m2 0h2m3 0h1m1 0h2m1 0h1m1 0h1m2 0h1m1 0h1m1 0h3m2 0h1m1 0h1m1 0h3m3 0h2m4 0h1m4 0h1m1 0h2m1 0h2m1 0h3m2 0h1m1 0h2m3 0h1m3 0h4m1 0h1m1 0h3m1 0h1m1 0h1m2 0h3m3 0h1m1 0h2m3 0h3m2 0h1m1 0h3m1 0h1m1 0h2m5 0h1m2 0h2M1 65.5h1m9 0h1m1 0h2m4 0h1m1 0h3m8 0h1m2 0h3m1 0h1m5 0h2m36 0h2m2 0h1m1 0h2m1 0h3m1 0h2m1 0h1m4 0h4m1 0h6m2 0h5m2 0h7m1 0h1m1 0h3m1 0h1m1 0h1m1 0h4m2 0h1m4 0h2m1 0h3m1 0h1m1 0h4m2 0h3m3 0h2m8 0h3m4 0h1m2 0h1m1 0h10m2 0h1m1 0h2m1 0h1m4 0h1m4 0h1m3 0h1m1 0h2m1 0h2m1 0h4m1 0h1m2 0h1m14 0h3m2 0h3m2 0h1m1 0h1m1 0h4m2 0h1m4 0h1m1 0h2m4 0h3m4 0h2m2 0h1m1 0h1m1 0h1m5 0h2m4 0h1m1 0h3m2 0h2m2 0h1m2 0h1m1 0h4m3 0h1m4 0h2m2 0h1m1 0h1m1 0h3m2 0h1m4 0h1m2 0h1m2 0h1m1 0h2m1 0h1m2 0h2m1 0h1m1 0h1m2 0h1m2 0h2m3 0h1m1 0h1m1 0h2m4 0h1m1 0h1m1 0h1m2 0h1m3 0h1m3 0h1m2 0h2m2 0h1m1 0h2m1 0h2m1 0h4m1 0h1m2 0h3m1 0h3m1 0h6m3 0h1m1 0h1m4 0h2m1 0h1m1 0h3m8 0h3m1 0h1m1 0h4m3 0h1M1 66.5h1m9 0h1m1 0h2m4 0h1m1 0h3m8 0h1m1 0h1m4 0h1m5 0h2m33 0h3m1 0h1m1 0h1m7 0h1m1 0h3m2 0h2m4 0h2m2 0h3m1 0h4m1 0h2m2 0h1m1 0h3m2 0h3m5 0h3m1 0h2m2 0h1m2 0h1m1 0h2m6 0h2m1 0h1m3 0h2m2 0h1m1 0h2m1 0h1m1 0h5m1 0h1m1 0h1m1 0h1m1 0h1m5 0h2m5 0h3m2 0h2m1 0h7m1 0h1m1 0h1m1 0h3m2 0h3m1 0h1m3 0h3m2 0h3m12 0h1m5 0h1m1 0h1m4 0h1m3 0h1m2 0h1m1 0h2m4 0h2m3 0h1m1 0h1m4 0h2m2 0h5m5 0h1m1 0h2m1 0h1m2 0h1m1 0h3m1 0h1m1 0h1m1 0h1m1 0h2m2 0h1m2 0h2m1 0h2m1 0h1m2 0h1m1 0h1m3 0h2m1 0h1m1 0h1m3 0h1m1 0h2m1 0h3m1 0h2m1 0h2m3 0h1m1 0h1m1 0h2m2 0h3m2 0h2m1 0h1m1 0h2m1 0h1m2 0h1m1 0h3m1 0h4m1 0h5m3 0h1m2 0h2m4 0h2m1 0h1m5 0h2m1 0h1m3 0h2m1 0h5m3 0h2m1 0h2m1 0h4m3 0h1m5 0h1m3 0h3m4 0h1m1 0h1m1 0h4M1 67.5h1m9 0h1m1 0h2m4 0h1m1 0h3m8 0h1m1 0h1m2 0h1m1 0h1m5 0h2m33 0h1m3 0h7m4 0h2m1 0h2m1 0h2m1 0h1m3 0h1m3 0h2m1 0h3m3 0h2m1 0h5m1 0h3m1 0h2m1 0h2m1 0h1m2 0h2m1 0h3m4 0h3m1 0h1m2 0h1m6 0h6m1 0h1m2 0h1m2 0h1m3 0h4m3 0h1m3 0h1m3 0h3m2 0h2m2 0h1m4 0h2m2 0h1m2 0h2m1 0h2m1 0h2m3 0h1m1 0h2m2 0h3m1 0h1m1 0h1m13 0h1m3 0h3m1 0h1m2 0h1m1 0h1m2 0h2m3 0h1m1 0h2m1 0h3m4 0h1m4 0h2m1 0h1m1 0h3m3 0h2m1 0h1m1 0h1m3 0h2m1 0h2m4 0h2m4 0h4m2 0h3m3 0h3m1 0h1m5 0h2m1 0h1m2 0h2m11 0h1m1 0h2m3 0h1m4 0h1m2 0h2m2 0h2m1 0h3m1 0h2m1 0h5m1 0h2m1 0h3m2 0h3m1 0h2m4 0h1m2 0h1m1 0h1m2 0h2m1 0h4m2 0h4m1 0h1m3 0h1m1 0h2m1 0h1m2 0h2m4 0h1m2 0h1m2 0h2m1 0h1m1 0h2m1 0h1m2 0h2m2 0h1m1 0h2m4 0h2M1 68.5h1m9 0h1m1 0h2m4 0h1m1 0h3m8 0h1m1 0h1m1 0h1m2 0h1m5 0h2m33 0h3m1 0h2m2 0h1m1 0h2m2 0h5m1 0h4m1 0h3m3 0h2m1 0h2m2 0h1m1 0h2m2 0h1m1 0h1m1 0h1m1 0h1m8 0h5m3 0h6m5 0h1m1 0h2m2 0h1m3 0h1m1 0h4m1 0h1m2 0h1m1 0h5m1 0h1m1 0h2m1 0h1m2 0h4m1 0h1m4 0h2m2 0h1m1 0h1m1 0h1m2 0h2m2 0h1m1 0h3m1 0h1m1 0h4m1 0h1m3 0h1m1 0h2m2 0h1m15 0h1m1 0h1m1 0h1m1 0h4m3 0h2m1 0h1m1 0h2m2 0h2m1 0h3m1 0h1m2 0h1m1 0h1m1 0h1m1 0h1m2 0h3m2 0h4m5 0h1m1 0h2m1 0h1m3 0h3m1 0h2m10 0h2m4 0h1m1 0h2m2 0h2m1 0h3m3 0h2m2 0h1m1 0h1m1 0h1m5 0h1m6 0h4m2 0h3m1 0h4m1 0h6m2 0h2m2 0h1m2 0h1m2 0h1m1 0h2m1 0h4m3 0h3m1 0h1m5 0h2m2 0h2m1 0h2m1 0h1m2 0h10m2 0h2m1 0h4m2 0h1m3 0h4m1 0h1m1 0h4m2 0h1m3 0h2m2 0h1M1 69.5h1m9 0h1m1 0h2m4 0h1m1 0h3m8 0h1m1 0h1m1 0h2m1 0h1m5 0h2m36 0h1m2 0h1m2 0h3m2 0h1m1 0h2m1 0h1m2 0h1m3 0h1m2 0h3m2 0h1m1 0h1m1 0h1m1 0h3m1 0h2m1 0h1m2 0h1m1 0h7m1 0h1m1 0h1m1 0h1m1 0h1m2 0h1m3 0h6m1 0h1m2 0h1m1 0h1m1 0h1m1 0h2m6 0h1m1 0h1m1 0h1m2 0h3m4 0h1m2 0h3m1 0h4m1 0h3m2 0h1m2 0h1m1 0h1m3 0h3m3 0h1m2 0h3m4 0h3m1 0h2m1 0h2m1 0h1m12 0h2m2 0h5m2 0h1m1 0h2m1 0h1m3 0h4m3 0h1m1 0h1m6 0h1m2 0h1m2 0h4m2 0h2m5 0h4m2 0h1m3 0h2m1 0h1m1 0h2m4 0h1m2 0h1m1 0h1m1 0h1m1 0h4m1 0h2m2 0h1m1 0h1m2 0h1m2 0h1m1 0h2m3 0h2m5 0h1m2 0h3m5 0h1m2 0h3m4 0h2m3 0h1m2 0h1m10 0h1m2 0h2m2 0h3m2 0h3m3 0h1m3 0h1m1 0h3m2 0h1m1 0h2m1 0h1m1 0h2m1 0h6m4 0h1m3 0h5m1 0h1m1 0h3m1 0h2m2 0h8m2 0h3M1 70.5h1m9 0h1m1 0h2m4 0h1m1 0h3m8 0h1m1 0h2m3 0h1m5 0h2m34 0h2m1 0h1m3 0h1m2 0h2m1 0h1m2 0h1m2 0h4m3 0h2m3 0h3m3 0h1m2 0h1m1 0h2m1 0h1m3 0h1m2 0h2m1 0h1m1 0h7m1 0h3m1 0h1m1 0h1m4 0h2m1 0h2m1 0h1m2 0h1m1 0h1m1 0h1m1 0h1m2 0h1m2 0h1m1 0h8m1 0h2m2 0h4m1 0h1m2 0h4m3 0h1m1 0h1m1 0h1m1 0h6m1 0h1m1 0h4m1 0h3m4 0h2m1 0h1m3 0h1m4 0h1m2 0h2m2 0h2m3 0h2m2 0h3m1 0h1m3 0h1m10 0h1m1 0h1m2 0h1m2 0h5m1 0h4m2 0h1m4 0h1m1 0h2m2 0h1m3 0h3m1 0h1m2 0h1m2 0h2m1 0h3m3 0h2m2 0h1m4 0h1m1 0h1m2 0h1m2 0h1m1 0h1m1 0h1m1 0h1m3 0h5m1 0h1m1 0h3m4 0h1m12 0h1m3 0h1m2 0h1m1 0h1m2 0h1m1 0h1m3 0h3m4 0h2m4 0h2m3 0h1m1 0h2m2 0h1m2 0h1m4 0h2m2 0h6m3 0h1m1 0h2m1 0h8m4 0h1m1 0h1m2 0h1m2 0h2m1 0h1m3 0h1m1 0h1m1 0h3m2 0h1M1 71.5h1m9 0h1m1 0h2m4 0h1m1 0h3m8 0h1m1 0h2m1 0h1m1 0h1m5 0h2m34 0h1m2 0h3m1 0h3m1 0h8m2 0h1m2 0h1m2 0h1m2 0h1m2 0h1m2 0h1m1 0h1m1 0h6m1 0h3m1 0h4m2 0h1m1 0h1m3 0h1m2 0h3m3 0h8m1 0h2m1 0h1m2 0h3m1 0h1m1 0h1m1 0h1m4 0h1m2 0h4m7 0h2m3 0h7m1 0h1m2 0h1m3 0h1m3 0h8m1 0h3m2 0h3m1 0h1m1 0h2m2 0h1m7 0h1m4 0h2m1 0h1m1 0h11m1 0h1m2 0h1m4 0h1m2 0h2m1 0h2m2 0h1m2 0h4m1 0h1m2 0h1m1 0h1m3 0h1m2 0h1m1 0h3m1 0h1m4 0h4m3 0h1m2 0h4m2 0h2m1 0h1m1 0h3m1 0h1m3 0h1m1 0h1m3 0h4m1 0h2m1 0h3m1 0h3m4 0h2m4 0h2m1 0h3m2 0h2m1 0h1m3 0h2m1 0h5m1 0h2m5 0h3m1 0h3m2 0h1m1 0h3m2 0h8m2 0h1m4 0h1m5 0h2m1 0h1m1 0h1m2 0h3m1 0h1m2 0h3m1 0h2m1 0h1m2 0h2m8 0h1m4 0h1m1 0h2m1 0h1M1 72.5h1m9 0h1m1 0h2m4 0h1m1 0h3m8 0h1m1 0h3m2 0h1m5 0h2m33 0h6m1 0h3m1 0h1m1 0h1m4 0h4m3 0h1m1 0h1m3 0h1m6 0h1m2 0h1m1 0h2m1 0h3m1 0h1m1 0h2m5 0h6m1 0h3m1 0h2m3 0h1m2 0h6m4 0h6m1 0h1m1 0h7m5 0h2m3 0h3m1 0h1m2 0h1m3 0h2m1 0h5m1 0h3m2 0h7m1 0h2m6 0h2m4 0h2m4 0h2m2 0h1m3 0h4m1 0h2m1 0h1m3 0h2m1 0h3m1 0h1m2 0h2m1 0h4m1 0h1m1 0h2m1 0h1m3 0h1m1 0h2m1 0h13m1 0h2m1 0h2m4 0h1m1 0h2m1 0h3m2 0h2m1 0h2m6 0h3m3 0h1m2 0h1m1 0h3m2 0h4m7 0h1m1 0h1m2 0h1m1 0h2m1 0h1m1 0h2m1 0h3m3 0h1m2 0h1m4 0h2m2 0h1m4 0h1m1 0h3m2 0h3m1 0h1m1 0h1m1 0h1m5 0h1m1 0h1m3 0h1m2 0h2m2 0h1m1 0h2m1 0h1m2 0h2m1 0h2m1 0h3m2 0h2m1 0h5m1 0h2m1 0h5m2 0h1m1 0h1m1 0h1m2 0h1m2 0h2m1 0h1M1 73.5h1m9 0h1m1 0h2m4 0h1m1 0h3m8 0h1m1 0h4m1 0h1m5 0h2m34 0h1m1 0h1m2 0h5m1 0h1m2 0h5m2 0h4m3 0h1m1 0h1m2 0h1m3 0h2m2 0h7m1 0h1m1 0h5m3 0h1m1 0h1m2 0h1m1 0h1m5 0h3m1 0h3m1 0h5m2 0h2m4 0h1m2 0h1m3 0h1m2 0h3m2 0h1m1 0h1m8 0h2m1 0h2m1 0h3m4 0h2m2 0h1m5 0h1m2 0h1m1 0h1m1 0h1m5 0h1m3 0h2m1 0h1m4 0h1m4 0h2m1 0h7m2 0h2m2 0h2m4 0h2m1 0h1m4 0h9m1 0h1m2 0h1m1 0h3m2 0h2m2 0h2m3 0h1m3 0h1m2 0h2m3 0h1m2 0h1m1 0h1m1 0h3m1 0h1m1 0h3m1 0h1m3 0h5m1 0h2m1 0h1m1 0h1m3 0h3m1 0h1m5 0h2m3 0h2m1 0h1m2 0h3m1 0h4m1 0h3m1 0h4m1 0h1m2 0h1m2 0h2m2 0h2m1 0h1m1 0h1m4 0h3m1 0h1m1 0h1m3 0h3m2 0h1m1 0h1m4 0h1m2 0h1m5 0h2m1 0h1m4 0h3m1 0h1m2 0h1m5 0h3m1 0h4m1 0h1m3 0h1m1 0h2m3 0h2M1 74.5h1m9 0h1m1 0h2m4 0h1m1 0h3m8 0h2m5 0h1m5 0h2m33 0h1m1 0h1m2 0h1m2 0h4m2 0h1m2 0h2m1 0h2m3 0h1m1 0h2m1 0h4m4 0h1m1 0h1m2 0h2m1 0h2m3 0h1m1 0h1m2 0h1m1 0h5m4 0h4m1 0h1m1 0h1m4 0h2m5 0h1m1 0h1m1 0h4m1 0h1m1 0h2m1 0h5m1 0h1m1 0h3m1 0h3m1 0h1m4 0h1m2 0h3m1 0h1m1 0h2m2 0h1m1 0h2m1 0h7m1 0h6m3 0h1m1 0h1m3 0h1m3 0h3m2 0h2m1 0h1m4 0h3m2 0h1m2 0h4m4 0h3m6 0h3m2 0h3m4 0h1m1 0h2m1 0h1m2 0h2m1 0h2m2 0h2m1 0h1m2 0h3m1 0h1m1 0h1m1 0h2m1 0h1m2 0h1m1 0h1m1 0h1m2 0h2m1 0h1m1 0h3m4 0h2m1 0h1m1 0h1m1 0h1m3 0h1m1 0h1m1 0h2m1 0h1m2 0h1m1 0h1m1 0h1m1 0h2m1 0h1m2 0h1m1 0h1m1 0h1m1 0h1m3 0h1m2 0h1m2 0h1m4 0h1m1 0h1m4 0h2m4 0h1m1 0h1m7 0h1m1 0h2m6 0h1m1 0h1m2 0h1m2 0h1m1 0h1m4 0h1m3 0h3m1 0h2m3 0h2m1 0h2m3 0h2m4 0h1m1 0h1m1 0h2m1 0h1m2 0h5m1 0h1M1 75.5h1m9 0h1m1 0h2m4 0h1m1 0h3m8 0h2m3 0h1m1 0h1m5 0h2m33 0h1m2 0h2m4 0h2m3 0h4m2 0h1m1 0h1m1 0h1m3 0h1m1 0h1m3 0h1m1 0h4m1 0h1m1 0h5m2 0h7m1 0h1m1 0h1m3 0h2m3 0h1m3 0h2m1 0h5m1 0h1m3 0h1m1 0h1m1 0h1m3 0h2m1 0h1m1 0h1m1 0h2m1 0h3m4 0h1m2 0h3m2 0h3m2 0h2m5 0h1m2 0h1m2 0h1m5 0h2m1 0h2m2 0h2m1 0h2m1 0h2m2 0h1m17 0h1m2 0h1m1 0h2m1 0h2m1 0h1m1 0h3m2 0h1m2 0h2m1 0h1m3 0h1m4 0h3m1 0h3m1 0h2m1 0h2m1 0h1m2 0h2m3 0h2m1 0h3m4 0h2m2 0h2m1 0h1m4 0h4m5 0h6m1 0h1m1 0h2m4 0h3m2 0h1m2 0h3m1 0h3m1 0h1m1 0h2m1 0h1m1 0h2m1 0h2m1 0h6m3 0h1m1 0h4m1 0h9m1 0h1m1 0h1m1 0h2m2 0h1m1 0h4m4 0h2m2 0h2m1 0h3m3 0h2m1 0h1m2 0h3m1 0h1m2 0h1m1 0h1m1 0h2m1 0h2m3 0h5m1 0h3m1 0h2m1 0h2m8 0h1M1 76.5h1m9 0h1m1 0h2m4 0h1m1 0h3m8 0h2m2 0h1m2 0h1m5 0h2m33 0h3m2 0h1m2 0h1m2 0h1m2 0h1m1 0h1m2 0h5m3 0h1m2 0h2m4 0h2m3 0h1m1 0h2m1 0h1m1 0h2m3 0h1m2 0h1m1 0h4m1 0h1m1 0h1m4 0h1m1 0h2m4 0h1m2 0h2m5 0h1m1 0h4m1 0h2m1 0h1m1 0h1m1 0h3m2 0h5m1 0h4m1 0h1m2 0h1m1 0h1m1 0h1m2 0h2m2 0h1m1 0h4m1 0h1m1 0h5m1 0h2m1 0h1m4 0h2m1 0h1m8 0h1m1 0h1m2 0h2m2 0h1m1 0h5m2 0h3m1 0h1m1 0h2m4 0h2m2 0h1m4 0h1m3 0h1m4 0h2m2 0h1m1 0h1m3 0h1m2 0h1m1 0h1m2 0h1m1 0h1m4 0h1m5 0h4m1 0h1m1 0h5m6 0h1m2 0h2m1 0h1m1 0h1m3 0h1m6 0h3m1 0h2m1 0h1m1 0h1m1 0h3m2 0h1m1 0h3m2 0h1m4 0h3m4 0h1m1 0h1m1 0h2m2 0h1m1 0h1m2 0h2m1 0h4m2 0h2m5 0h1m2 0h1m1 0h1m2 0h2m2 0h1m1 0h2m3 0h4m1 0h1m2 0h1m2 0h2m2 0h2m5 0h1m1 0h1m2 0h2m1 0h2m1 0h1m3 0h3m2 0h1m1 0h1m1 0h1m1 0h1M1 78.5h1m9 0h1m1 0h2m4 0h1m1 0h3m8 0h2m1 0h1m3 0h1m5 0h2m33 0h1m1 0h3m1 0h1m1 0h1m2 0h1m1 0h1m4 0h1m1 0h2m4 0h2m2 0h1m1 0h2m2 0h3m1 0h1m1 0h3m1 0h3m4 0h2m3 0h2m1 0h4m1 0h3m1 0h1m1 0h2m4 0h7m6 0h2m5 0h6m2 0h1m2 0h3m2 0h1m1 0h1m1 0h2m3 0h4m2 0h2m3 0h6m2 0h2m3 0h3m2 0h1m2 0h1m2 0h1m3 0h1m2 0h1m2 0h1m3 0h1m1 0h2m2 0h2m5 0h2m1 0h1m1 0h2m3 0h1m3 0h5m3 0h4m1 0h5m2 0h2m3 0h1m1 0h3m1 0h1m1 0h1m1 0h5m1 0h4m1 0h10m1 0h2m1 0h2m1 0h1m4 0h2m3 0h2m1 0h1m3 0h2m1 0h2m3 0h2m1 0h1m5 0h4m1 0h2m2 0h1m2 0h3m1 0h1m1 0h4m2 0h3m2 0h1m1 0h1m1 0h2m1 0h2m1 0h2m2 0h5m2 0h2m4 0h3m1 0h1m4 0h1m2 0h2m2 0h1m1 0h2m2 0h1m2 0h2m2 0h1m2 0h1m2 0h2m2 0h1m4 0h1m1 0h3m3 0h1m1 0h4m1 0h2m1 0h2M1 79.5h1m9 0h1m1 0h2m4 0h1m1 0h3m8 0h2m1 0h1m1 0h1m1 0h1m5 0h2m33 0h1m2 0h2m1 0h1m1 0h4m2 0h5m3 0h1m1 0h2m2 0h3m3 0h4m1 0h3m1 0h8m1 0h4m1 0h2m1 0h1m6 0h3m3 0h8m2 0h1m1 0h2m2 0h1m1 0h1m2 0h4m3 0h1m3 0h1m2 0h1m1 0h3m1 0h3m2 0h2m2 0h3m1 0h2m1 0h1m2 0h2m2 0h1m4 0h1m2 0h2m5 0h2m1 0h1m1 0h2m1 0h2m1 0h1m12 0h2m2 0h1m1 0h2m1 0h2m2 0h1m5 0h2m1 0h2m1 0h1m2 0h5m4 0h3m1 0h4m6 0h2m2 0h1m1 0h2m1 0h1m1 0h1m1 0h3m2 0h2m5 0h3m1 0h1m1 0h2m1 0h1m4 0h1m3 0h1m1 0h1m1 0h2m1 0h3m1 0h2m1 0h2m3 0h1m1 0h1m3 0h4m2 0h2m2 0h2m1 0h3m1 0h4m2 0h3m2 0h1m1 0h2m2 0h1m4 0h4m1 0h2m1 0h1m1 0h4m7 0h1m2 0h2m1 0h1m1 0h2m2 0h1m1 0h1m2 0h1m2 0h1m1 0h1m2 0h3m2 0h3m2 0h1m1 0h4m2 0h1m2 0h1m2 0h1m2 0h1m4 0h2m1 0h1M1 80.5h1m9 0h1m1 0h2m4 0h1m1 0h3m8 0h2m1 0h2m2 0h1m5 0h2m33 0h1m3 0h1m1 0h2m3 0h4m3 0h1m1 0h3m1 0h4m1 0h4m3 0h1m1 0h1m2 0h1m1 0h2m2 0h2m4 0h1m2 0h1m1 0h2m1 0h2m1 0h1m1 0h3m1 0h1m1 0h1m5 0h1m2 0h2m2 0h1m4 0h4m1 0h1m2 0h1m1 0h1m1 0h1m3 0h1m1 0h1m1 0h1m1 0h1m1 0h1m1 0h1m1 0h1m2 0h1m1 0h3m1 0h6m1 0h1m1 0h2m1 0h1m1 0h1m1 0h2m1 0h3m1 0h1m1 0h1m1 0h2m1 0h1m2 0h1m1 0h2m1 0h1m2 0h4m2 0h1m1 0h1m1 0h1m3 0h1m1 0h1m1 0h1m1 0h2m1 0h2m1 0h1m3 0h1m4 0h1m1 0h4m1 0h2m1 0h2m1 0h2m1 0h2m3 0h3m2 0h3m5 0h1m3 0h3m1 0h4m8 0h3m3 0h1m2 0h1m1 0h1m1 0h1m1 0h4m1 0h1m2 0h1m1 0h3m3 0h4m1 0h1m2 0h1m1 0h2m1 0h1m4 0h1m2 0h1m1 0h2m1 0h3m1 0h1m1 0h1m1 0h1m1 0h4m3 0h1m1 0h1m1 0h1m1 0h1m1 0h1m2 0h1m1 0h1m1 0h1m1 0h1m3 0h1m1 0h3m2 0h1m1 0h1m2 0h6m4 0h2m1 0h1m1 0h1m1 0h1m2 0h2m1 0h2m1 0h5m3 0h2m2 0h1m2 0h1m2 0h2m1 0h1m1 0h1m1 0h1M1 81.5h1m9 0h1m1 0h2m4 0h1m1 0h3m8 0h2m1 0h3m1 0h1m5 0h2m33 0h1m2 0h2m1 0h5m5 0h6m1 0h1m1 0h1m6 0h1m1 0h6m1 0h5m1 0h12m1 0h1m1 0h2m3 0h2m4 0h2m1 0h2m2 0h1m1 0h2m1 0h1m2 0h4m1 0h3m1 0h1m7 0h2m2 0h1m4 0h4m1 0h7m1 0h2m6 0h3m1 0h1m3 0h1m1 0h3m2 0h2m1 0h2m2 0h2m2 0h1m8 0h1m3 0h1m1 0h2m1 0h2m1 0h1m1 0h3m2 0h1m2 0h6m3 0h1m9 0h1m1 0h3m1 0h2m1 0h2m4 0h2m1 0h6m5 0h1m2 0h1m1 0h3m2 0h3m2 0h5m1 0h1m1 0h5m4 0h1m2 0h1m3 0h3m1 0h1m2 0h4m1 0h3m1 0h3m1 0h4m2 0h1m3 0h1m3 0h5m1 0h1m1 0h3m1 0h5m3 0h3m1 0h1m3 0h1m1 0h1m1 0h4m3 0h1m2 0h1m2 0h9m1 0h2m2 0h5m1 0h1m2 0h1m4 0h2m2 0h1m1 0h1m5 0h1m5 0h1m1 0h3m1 0h6M1 82.5h1m9 0h1m1 0h2m4 0h1m1 0h3m8 0h3m4 0h1m5 0h2m33 0h1m1 0h3m1 0h1m1 0h1m3 0h1m1 0h1m1 0h1m1 0h3m1 0h1m4 0h1m5 0h1m2 0h1m3 0h2m1 0h2m1 0h1m1 0h1m4 0h1m5 0h5m1 0h1m1 0h4m1 0h1m5 0h1m3 0h1m2 0h3m1 0h3m1 0h1m1 0h1m2 0h1m2 0h2m1 0h3m1 0h1m1 0h1m1 0h5m1 0h1m4 0h3m1 0h3m1 0h2m1 0h6m2 0h2m5 0h1m1 0h2m1 0h2m4 0h3m2 0h3m2 0h6m2 0h1m1 0h1m1 0h3m3 0h2m1 0h2m1 0h4m1 0h2m1 0h3m4 0h3m1 0h1m3 0h1m2 0h4m2 0h1m1 0h2m1 0h3m2 0h2m3 0h1m2 0h2m2 0h1m1 0h5m2 0h2m2 0h3m1 0h6m1 0h2m3 0h5m2 0h1m2 0h1m2 0h2m3 0h1m3 0h1m1 0h1m4 0h1m1 0h1m2 0h1m3 0h1m1 0h5m2 0h1m1 0h1m6 0h1m1 0h1m1 0h1m3 0h1m2 0h1m6 0h3m1 0h1m1 0h4m4 0h3m1 0h2m1 0h1m1 0h2m2 0h3m3 0h3m8 0h2m1 0h5m6 0h1m3 0h2M1 83.5h1m9 0h1m1 0h2m4 0h1m1 0h3m8 0h3m2 0h1m1 0h1m5 0h2m33 0h1m2 0h2m1 0h2m1 0h2m2 0h1m1 0h2m1 0h2m3 0h1m2 0h1m1 0h2m1 0h2m1 0h3m1 0h2m1 0h1m1 0h4m1 0h3m1 0h1m1 0h3m1 0h1m1 0h1m1 0h1m1 0h2m2 0h1m1 0h1m4 0h3m3 0h3m1 0h1m1 0h4m3 0h2m1 0h2m2 0h1m1 0h3m1 0h1m3 0h1m1 0h1m1 0h2m2 0h1m3 0h3m1 0h1m5 0h2m2 0h1m5 0h1m3 0h1m2 0h2m1 0h3m1 0h3m3 0h1m1 0h1m6 0h1m3 0h1m1 0h5m1 0h2m1 0h1m2 0h4m2 0h5m1 0h4m2 0h1m7 0h3m1 0h1m3 0h1m7 0h1m1 0h1m1 0h3m1 0h2m2 0h2m4 0h1m3 0h1m1 0h1m1 0h1m1 0h3m2 0h2m2 0h1m1 0h1m7 0h1m1 0h3m6 0h1m1 0h1m1 0h2m3 0h1m5 0h3m2 0h1m1 0h1m6 0h1m3 0h1m1 0h2m1 0h2m1 0h2m1 0h4m3 0h2m1 0h1m5 0h1m1 0h1m2 0h1m1 0h2m1 0h1m1 0h1m1 0h2m1 0h1m5 0h1m1 0h4m1 0h3m2 0h1m2 0h2m1 0h1m3 0h3m3 0h3m2 0h1m1 0h1m2 0h2m2 0h1M1 84.5h1m9 0h1m1 0h2m4 0h1m1 0h3m8 0h3m1 0h1m2 0h1m5 0h2m33 0h3m1 0h2m2 0h1m2 0h1m2 0h1m1 0h8m1 0h1m1 0h1m1 0h1m1 0h1m1 0h2m1 0h1m1 0h2m1 0h1m6 0h1m4 0h1m2 0h1m1 0h2m1 0h2m3 0h2m1 0h4m1 0h1m3 0h4m3 0h2m1 0h1m1 0h1m1 0h2m1 0h1m2 0h7m1 0h1m1 0h4m2 0h2m1 0h2m2 0h1m1 0h2m1 0h1m2 0h2m1 0h1m2 0h2m1 0h3m2 0h3m3 0h1m6 0h1m1 0h1m3 0h2m1 0h1m1 0h4m3 0h1m2 0h2m1 0h4m3 0h2m1 0h1m4 0h1m1 0h2m1 0h1m3 0h2m1 0h3m1 0h1m4 0h4m1 0h1m2 0h1m1 0h3m1 0h2m2 0h1m1 0h1m2 0h2m2 0h1m1 0h1m3 0h5m1 0h2m1 0h1m2 0h1m1 0h2m1 0h1m2 0h1m2 0h2m3 0h1m1 0h1m3 0h1m3 0h2m1 0h1m2 0h1m2 0h1m1 0h1m3 0h2m2 0h2m1 0h3m3 0h4m2 0h2m3 0h1m2 0h1m3 0h2m1 0h1m3 0h2m2 0h2m1 0h2m4 0h1m2 0h1m1 0h3m1 0h3m1 0h1m1 0h1m1 0h1m4 0h1m3 0h5m2 0h1m1 0h2m1 0h2m2 0h1m2 0h1m2 0h1m1 0h3m3 0h3m2 0h1M1 85.5h1m9 0h1m1 0h2m4 0h1m1 0h3m8 0h3m1 0h2m1 0h1m5 0h2m33 0h1m2 0h1m1 0h6m4 0h1m1 0h3m2 0h1m3 0h1m2 0h2m4 0h2m1 0h2m2 0h1m2 0h1m1 0h1m2 0h1m2 0h3m4 0h1m3 0h1m3 0h2m4 0h5m1 0h1m1 0h1m2 0h1m1 0h4m2 0h1m3 0h1m1 0h1m1 0h2m1 0h3m1 0h1m3 0h2m1 0h3m1 0h6m2 0h2m4 0h1m3 0h1m5 0h1m1 0h1m1 0h1m3 0h1m1 0h5m2 0h2m14 0h2m1 0h1m4 0h1m2 0h1m4 0h3m1 0h1m1 0h1m2 0h2m2 0h3m2 0h1m1 0h2m1 0h2m1 0h1m4 0h1m3 0h1m2 0h3m1 0h1m2 0h1m4 0h1m3 0h1m2 0h2m1 0h1m1 0h2m1 0h7m2 0h1m1 0h2m3 0h2m1 0h1m1 0h1m1 0h1m4 0h3m2 0h2m3 0h1m2 0h6m5 0h4m2 0h2m3 0h1m1 0h1m2 0h1m3 0h1m3 0h1m1 0h6m2 0h2m4 0h1m2 0h2m1 0h1m4 0h2m1 0h2m1 0h1m1 0h1m1 0h2m1 0h1m4 0h1m3 0h1m2 0h1m1 0h2m1 0h1m1 0h2m1 0h4m1 0h1m1 0h3m2 0h5m2 0h1M1 86.5h1m9 0h1m1 0h2m4 0h1m1 0h3m8 0h4m3 0h1m5 0h2m33 0h3m1 0h1m3 0h1m2 0h2m1 0h1m1 0h3m1 0h2m4 0h1m1 0h1m2 0h3m3 0h1m3 0h1m4 0h1m1 0h2m1 0h1m1 0h1m2 0h9m1 0h1m1 0h2m2 0h1m2 0h1m2 0h4m2 0h2m2 0h6m1 0h1m2 0h1m1 0h1m7 0h1m1 0h3m1 0h1m1 0h1m4 0h1m2 0h1m4 0h3m4 0h2m3 0h3m1 0h1m2 0h1m1 0h1m3 0h3m4 0h3m4 0h1m1 0h1m1 0h1m4 0h2m1 0h2m4 0h2m1 0h1m1 0h2m1 0h1m7 0h1m1 0h2m4 0h2m4 0h1m2 0h3m4 0h1m2 0h1m3 0h2m1 0h1m1 0h1m4 0h3m1 0h1m1 0h1m3 0h1m4 0h1m1 0h1m2 0h6m1 0h1m4 0h2m3 0h4m1 0h1m1 0h1m1 0h1m1 0h2m1 0h1m2 0h2m2 0h1m3 0h2m2 0h2m2 0h1m1 0h5m1 0h1m3 0h1m1 0h2m4 0h3m1 0h1m3 0h1m1 0h3m1 0h1m1 0h3m1 0h1m2 0h5m1 0h3m3 0h3m1 0h1m3 0h2m2 0h1m2 0h1m1 0h2m11 0h1m1 0h1m2 0h3m1 0h1m1 0h7M1 87.5h1m9 0h1m1 0h2m4 0h1m1 0h3m8 0h4m1 0h1m1 0h1m5 0h2m37 0h4m1 0h2m1 0h6m1 0h1m5 0h1m2 0h5m1 0h4m1 0h1m1 0h2m2 0h2m1 0h3m1 0h4m1 0h2m1 0h3m3 0h1m1 0h3m2 0h2m1 0h3m2 0h2m2 0h2m2 0h3m2 0h2m1 0h2m4 0h4m1 0h1m2 0h2m1 0h2m2 0h4m1 0h2m3 0h4m1 0h2m2 0h2m1 0h2m1 0h1m2 0h1m3 0h1m2 0h1m1 0h4m1 0h2m1 0h1m4 0h1m7 0h3m8 0h1m1 0h1m1 0h1m2 0h6m3 0h1m7 0h1m1 0h1m1 0h1m2 0h4m1 0h6m1 0h2m2 0h1m3 0h1m1 0h1m3 0h2m2 0h2m1 0h1m1 0h2m5 0h1m2 0h1m1 0h1m1 0h2m1 0h4m4 0h1m2 0h1m1 0h1m1 0h1m1 0h1m1 0h1m4 0h2m9 0h1m1 0h1m5 0h1m2 0h2m1 0h1m4 0h1m1 0h2m1 0h1m1 0h1m2 0h2m1 0h2m2 0h2m1 0h1m1 0h1m1 0h3m1 0h1m2 0h3m6 0h1m1 0h6m7 0h1m2 0h2m1 0h2m2 0h1m1 0h1m4 0h3m2 0h2m3 0h1m4 0h1m1 0h1m1 0h1M1 88.5h1m9 0h1m1 0h2m4 0h1m1 0h3m8 0h5m2 0h1m5 0h2m35 0h1m4 0h2m2 0h1m2 0h1m1 0h3m1 0h3m1 0h2m1 0h1m1 0h1m1 0h2m4 0h2m1 0h2m9 0h3m2 0h2m1 0h2m7 0h3m1 0h1m1 0h2m2 0h4m3 0h1m2 0h1m2 0h6m1 0h7m2 0h4m1 0h1m1 0h3m4 0h1m2 0h3m2 0h2m1 0h1m1 0h3m2 0h2m1 0h3m3 0h5m2 0h2m1 0h1m1 0h4m2 0h3m1 0h1m1 0h1m6 0h1m2 0h1m3 0h4m1 0h1m1 0h1m2 0h3m1 0h1m4 0h2m3 0h1m1 0h1m1 0h1m2 0h1m3 0h1m1 0h1m2 0h1m1 0h1m1 0h1m1 0h2m5 0h1m1 0h1m3 0h1m2 0h2m2 0h1m5 0h2m3 0h1m2 0h2m4 0h1m4 0h3m2 0h1m4 0h5m2 0h1m7 0h2m1 0h3m1 0h2m1 0h3m2 0h3m1 0h1m2 0h1m1 0h3m7 0h1m7 0h1m3 0h1m2 0h3m4 0h3m2 0h5m2 0h2m1 0h2m1 0h2m4 0h2m1 0h2m1 0h2m6 0h5m1 0h1m2 0h4m1 0h3M1 89.5h1m9 0h1m1 0h2m4 0h1m1 0h3m8 0h6m1 0h1m5 0h2m33 0h1m2 0h2m1 0h5m4 0h3m1 0h3m1 0h1m1 0h1m4 0h3m2 0h5m1 0h2m2 0h3m2 0h1m2 0h3m2 0h3m1 0h1m1 0h2m2 0h1m3 0h6m2 0h2m1 0h1m3 0h4m3 0h4m6 0h1m1 0h1m2 0h1m1 0h1m4 0h1m2 0h3m1 0h3m1 0h2m1 0h2m1 0h1m3 0h1m1 0h1m1 0h1m1 0h2m1 0h3m1 0h1m3 0h2m1 0h2m1 0h2m14 0h2m4 0h1m1 0h1m1 0h2m1 0h1m1 0h1m1 0h1m3 0h2m2 0h3m1 0h1m3 0h3m1 0h1m2 0h2m6 0h1m1 0h1m1 0h2m2 0h3m1 0h4m1 0h1m1 0h2m2 0h2m1 0h3m3 0h3m2 0h2m2 0h2m1 0h2m1 0h1m3 0h3m1 0h1m2 0h2m1 0h4m1 0h1m1 0h2m1 0h1m1 0h4m4 0h4m1 0h1m1 0h2m2 0h5m5 0h1m2 0h1m5 0h1m3 0h1m3 0h3m3 0h2m2 0h2m2 0h1m5 0h1m2 0h1m1 0h4m6 0h2m4 0h1m4 0h1m1 0h1m1 0h4m5 0h5m2 0h2m1 0h4M1 90.5h1m9 0h1m1 0h2m4 0h1m1 0h3m15 0h1m5 0h3m32 0h2m4 0h1m1 0h1m2 0h1m2 0h1m3 0h2m2 0h1m1 0h2m1 0h2m2 0h1m1 0h2m1 0h1m1 0h1m1 0h1m1 0h1m3 0h3m4 0h1m2 0h1m2 0h1m1 0h3m2 0h3m1 0h3m5 0h2m1 0h1m2 0h2m2 0h1m1 0h2m1 0h1m1 0h4m1 0h3m1 0h1m1 0h1m1 0h1m2 0h1m2 0h5m2 0h1m1 0h3m3 0h1m5 0h5m1 0h4m1 0h1m1 0h2m6 0h3m1 0h3m13 0h1m2 0h1m2 0h3m3 0h3m2 0h2m2 0h1m1 0h2m7 0h3m1 0h3m1 0h4m3 0h1m1 0h1m2 0h1m1 0h1m1 0h1m1 0h4m1 0h3m1 0h1m4 0h3m3 0h3m3 0h1m1 0h1m1 0h1m2 0h1m2 0h1m2 0h1m1 0h3m3 0h1m2 0h1m1 0h1m1 0h1m2 0h8m1 0h1m1 0h2m2 0h2m2 0h2m2 0h2m1 0h1m1 0h1m5 0h1m1 0h2m1 0h2m1 0h4m1 0h1m1 0h4m3 0h1m1 0h2m2 0h1m1 0h1m2 0h5m1 0h1m4 0h1m1 0h2m1 0h1m3 0h1m5 0h1m3 0h1m2 0h1m1 0h1m1 0h2m3 0h2m1 0h3m4 0h1m1 0h4M1 91.5h1m9 0h1m1 0h2m4 0h1m1 0h3m13 0h1m1 0h1m5 0h3m32 0h2m1 0h1m1 0h7m1 0h2m1 0h3m4 0h1m1 0h1m2 0h1m1 0h1m3 0h1m1 0h4m2 0h1m2 0h4m1 0h1m2 0h4m1 0h1m3 0h6m1 0h2m2 0h2m1 0h3m6 0h1m1 0h3m9 0h1m1 0h2m1 0h4m2 0h2m3 0h2m2 0h5m1 0h3m2 0h1m2 0h2m8 0h2m1 0h1m3 0h1m1 0h1m1 0h1m2 0h1m5 0h1m12 0h1m3 0h2m1 0h1m3 0h4m3 0h2m1 0h1m2 0h1m1 0h3m1 0h4m5 0h2m1 0h1m4 0h1m4 0h1m1 0h4m1 0h1m2 0h1m2 0h1m1 0h3m4 0h2m1 0h5m1 0h4m2 0h1m1 0h1m3 0h3m1 0h1m3 0h1m1 0h1m1 0h2m3 0h1m5 0h4m1 0h1m1 0h3m4 0h8m1 0h1m3 0h1m1 0h2m2 0h5m1 0h1m3 0h1m1 0h3m1 0h1m1 0h4m3 0h1m1 0h4m4 0h2m2 0h1m1 0h1m3 0h7m3 0h1m1 0h1m1 0h1m1 0h1m2 0h1m2 0h2m1 0h3m2 0h3m1 0h1m2 0h1m1 0h3M1 92.5h1m9 0h1m1 0h2m4 0h1m1 0h3m12 0h1m2 0h1m5 0h3m32 0h1m1 0h1m1 0h1m1 0h1m1 0h1m1 0h4m2 0h3m1 0h2m5 0h1m4 0h2m1 0h2m1 0h1m2 0h1m4 0h1m1 0h1m7 0h1m2 0h4m1 0h1m2 0h3m2 0h1m2 0h1m2 0h2m1 0h1m1 0h1m6 0h1m1 0h2m1 0h1m2 0h1m1 0h3m1 0h1m1 0h1m1 0h1m1 0h2m4 0h1m1 0h1m2 0h1m2 0h3m1 0h2m4 0h4m1 0h1m3 0h4m5 0h1m2 0h2m1 0h1m2 0h2m13 0h2m1 0h1m3 0h2m1 0h1m1 0h6m1 0h1m1 0h2m1 0h1m6 0h1m5 0h5m2 0h1m2 0h1m1 0h1m1 0h1m1 0h2m1 0h5m3 0h1m1 0h2m1 0h1m1 0h1m1 0h2m1 0h1m1 0h2m1 0h1m3 0h6m1 0h2m3 0h2m4 0h3m1 0h1m1 0h2m1 0h1m1 0h2m2 0h4m1 0h1m1 0h2m6 0h1m2 0h1m1 0h1m1 0h2m4 0h2m5 0h2m3 0h5m1 0h2m2 0h1m3 0h1m2 0h4m2 0h2m1 0h1m2 0h1m1 0h3m4 0h2m3 0h1m3 0h2m2 0h1m3 0h2m1 0h1m2 0h1m2 0h2m2 0h1m1 0h2m1 0h1m1 0h1m3 0h1M1 93.5h1m9 0h1m1 0h2m4 0h1m1 0h3m12 0h2m1 0h1m5 0h3m33 0h1m2 0h1m1 0h1m2 0h3m1 0h1m1 0h2m2 0h1m2 0h2m1 0h2m1 0h3m1 0h4m1 0h3m2 0h1m2 0h1m3 0h2m1 0h5m1 0h1m3 0h3m3 0h1m4 0h6m3 0h1m2 0h1m1 0h5m2 0h2m2 0h1m2 0h6m1 0h2m1 0h2m2 0h2m1 0h2m1 0h2m2 0h1m2 0h1m1 0h2m1 0h2m2 0h2m4 0h2m3 0h1m1 0h1m2 0h3m1 0h2m1 0h2m3 0h1m8 0h1m5 0h1m1 0h4m4 0h2m1 0h4m1 0h1m1 0h2m1 0h2m1 0h2m1 0h1m1 0h1m1 0h3m1 0h6m3 0h1m2 0h2m1 0h3m1 0h2m2 0h1m2 0h2m1 0h1m1 0h3m1 0h2m3 0h3m1 0h3m1 0h2m9 0h2m1 0h3m1 0h1m1 0h1m1 0h1m1 0h2m2 0h1m3 0h3m1 0h1m1 0h1m2 0h1m1 0h2m1 0h4m3 0h1m1 0h1m1 0h2m4 0h2m1 0h1m1 0h4m1 0h2m2 0h7m2 0h3m6 0h4m4 0h3m3 0h4m2 0h1m1 0h3m3 0h4m5 0h2m3 0h1m3 0h1m3 0h2m1 0h2M1 94.5h1m9 0h1m1 0h2m4 0h1m1 0h3m11 0h1m3 0h1m5 0h3m33 0h2m1 0h1m6 0h1m1 0h1m3 0h1m2 0h2m2 0h1m1 0h2m3 0h3m2 0h3m2 0h1m4 0h5m2 0h1m2 0h6m3 0h6m1 0h1m2 0h1m4 0h2m3 0h1m2 0h1m1 0h2m1 0h1m1 0h3m2 0h2m1 0h2m3 0h1m1 0h1m1 0h2m2 0h1m4 0h5m1 0h4m1 0h1m1 0h6m1 0h1m1 0h2m1 0h4m1 0h2m3 0h1m1 0h2m2 0h2m1 0h1m6 0h1m2 0h1m2 0h3m3 0h1m1 0h2m1 0h2m1 0h1m1 0h6m2 0h1m1 0h1m1 0h1m1 0h2m4 0h1m2 0h1m2 0h2m1 0h1m1 0h1m4 0h3m1 0h2m1 0h6m1 0h2m1 0h2m1 0h1m6 0h2m5 0h1m5 0h1m1 0h2m2 0h3m1 0h2m4 0h1m2 0h1m5 0h1m1 0h2m1 0h4m1 0h1m1 0h7m1 0h1m4 0h1m2 0h2m2 0h1m1 0h1m1 0h5m6 0h1m2 0h2m1 0h4m1 0h1m2 0h6m1 0h5m1 0h7m5 0h1m8 0h1m7 0h3m2 0h2m1 0h1m1 0h1m1 0h5M1 95.5h1m9 0h1m1 0h2m4 0h1m1 0h3m11 0h1m1 0h1m1 0h1m5 0h3m32 0h1m3 0h2m1 0h4m1 0h1m2 0h3m1 0h1m5 0h1m1 0h2m1 0h3m1 0h2m1 0h3m1 0h1m3 0h1m1 0h2m1 0h1m1 0h5m3 0h1m1 0h2m2 0h1m1 0h1m1 0h1m2 0h2m1 0h3m3 0h2m1 0h2m1 0h4m2 0h2m1 0h1m3 0h1m1 0h3m1 0h3m1 0h1m1 0h1m1 0h6m3 0h3m1 0h1m2 0h1m1 0h2m5 0h1m2 0h2m6 0h1m1 0h1m3 0h2m1 0h2m1 0h1m4 0h1m7 0h3m6 0h1m1 0h1m2 0h1m1 0h2m3 0h1m4 0h3m1 0h3m1 0h1m2 0h2m1 0h1m2 0h1m2 0h1m4 0h1m3 0h1m1 0h6m2 0h2m1 0h1m4 0h2m1 0h1m1 0h2m2 0h1m1 0h1m1 0h3m2 0h1m6 0h2m1 0h1m2 0h1m1 0h1m1 0h2m4 0h1m1 0h1m2 0h1m2 0h1m1 0h2m1 0h1m1 0h2m1 0h1m3 0h2m1 0h1m1 0h1m1 0h2m1 0h1m2 0h1m5 0h2m2 0h2m1 0h2m5 0h1m1 0h2m1 0h1m3 0h3m1 0h1m1 0h1m2 0h5m1 0h1m3 0h1m1 0h2m6 0h1m8 0h8m2 0h2m2 0h1m1 0h7M1 96.5h1m9 0h1m1 0h2m4 0h1m1 0h3m11 0h2m2 0h1m5 0h3m32 0h3m1 0h2m1 0h1m6 0h1m1 0h2m1 0h3m1 0h2m7 0h1m4 0h1m3 0h1m4 0h3m2 0h1m1 0h1m2 0h1m2 0h6m2 0h2m1 0h1m4 0h1m2 0h1m1 0h3m1 0h5m2 0h3m1 0h1m2 0h1m1 0h1m1 0h1m1 0h1m1 0h1m1 0h3m3 0h2m1 0h2m2 0h3m1 0h1m2 0h2m4 0h1m1 0h1m1 0h2m1 0h6m1 0h3m1 0h1m2 0h2m1 0h1m3 0h1m2 0h1m1 0h1m4 0h1m3 0h2m1 0h1m2 0h3m1 0h3m3 0h1m6 0h1m3 0h3m7 0h3m3 0h1m7 0h7m3 0h5m4 0h1m1 0h1m4 0h2m1 0h2m1 0h4m1 0h1m2 0h1m3 0h1m4 0h2m1 0h1m2 0h1m1 0h1m1 0h2m3 0h1m2 0h3m2 0h1m1 0h1m1 0h1m1 0h2m1 0h1m2 0h4m3 0h5m5 0h5m1 0h2m1 0h3m1 0h2m1 0h2m1 0h3m1 0h6m1 0h1m1 0h2m4 0h1m1 0h2m2 0h4m1 0h3m1 0h1m1 0h2m1 0h1m1 0h1m1 0h4m1 0h5m5 0h5m2 0h1m2 0h1M1 97.5h1m9 0h1m1 0h2m4 0h1m1 0h3m11 0h3m1 0h1m5 0h3m32 0h1m1 0h3m3 0h3m1 0h1m3 0h3m1 0h2m1 0h1m2 0h1m1 0h1m1 0h1m3 0h6m2 0h1m2 0h1m1 0h1m2 0h1m1 0h5m3 0h1m3 0h1m1 0h1m1 0h1m4 0h6m4 0h4m1 0h1m2 0h1m2 0h1m2 0h1m3 0h1m2 0h3m7 0h1m1 0h1m2 0h3m1 0h3m2 0h1m1 0h1m2 0h2m2 0h2m1 0h1m1 0h7m1 0h1m1 0h3m2 0h1m3 0h1m1 0h1m6 0h1m6 0h1m1 0h1m4 0h3m1 0h5m3 0h2m2 0h1m2 0h1m1 0h2m3 0h1m3 0h2m6 0h1m1 0h2m1 0h2m1 0h1m3 0h6m1 0h1m1 0h4m1 0h1m1 0h2m1 0h1m3 0h1m1 0h6m2 0h1m1 0h1m2 0h2m4 0h1m1 0h7m2 0h4m2 0h1m1 0h1m1 0h1m2 0h1m2 0h1m1 0h3m5 0h1m5 0h3m6 0h1m2 0h1m2 0h1m4 0h4m5 0h1m1 0h1m2 0h1m1 0h1m1 0h1m6 0h6m3 0h1m1 0h1m7 0h1m1 0h1m1 0h1m2 0h3m2 0h1m2 0h2m1 0h4m1 0h1m6 0h1M1 98.5h1m9 0h1m1 0h2m4 0h1m1 0h3m10 0h1m4 0h1m5 0h3m32 0h3m1 0h2m2 0h1m3 0h2m3 0h1m1 0h4m1 0h4m4 0h1m2 0h1m1 0h1m1 0h1m1 0h1m1 0h1m2 0h2m3 0h1m1 0h1m2 0h1m2 0h1m1 0h2m2 0h1m3 0h2m1 0h1m2 0h1m4 0h2m3 0h1m1 0h2m1 0h3m2 0h1m1 0h2m1 0h4m4 0h1m3 0h1m2 0h2m1 0h1m2 0h1m1 0h3m2 0h2m2 0h1m2 0h3m3 0h6m2 0h2m1 0h1m2 0h2m1 0h1m3 0h2m1 0h4m1 0h1m4 0h1m4 0h1m1 0h4m3 0h1m1 0h1m2 0h2m1 0h2m1 0h1m1 0h3m4 0h1m4 0h2m2 0h1m1 0h1m1 0h1m3 0h2m1 0h3m1 0h2m3 0h2m1 0h1m2 0h5m2 0h2m2 0h1m1 0h1m3 0h1m1 0h1m2 0h1m2 0h3m2 0h1m2 0h1m3 0h4m3 0h2m1 0h1m3 0h2m2 0h2m1 0h1m2 0h1m1 0h1m5 0h1m1 0h1m2 0h4m1 0h1m8 0h2m2 0h3m2 0h1m2 0h1m4 0h1m2 0h2m1 0h2m5 0h1m2 0h2m1 0h8m1 0h1m8 0h1m2 0h2m1 0h1m3 0h2m1 0h1m5 0h1m2 0h2m1 0h2m1 0h2M1 99.5h1m9 0h1m1 0h2m4 0h1m1 0h3m10 0h1m2 0h1m1 0h1m5 0h3m32 0h1m2 0h4m1 0h4m2 0h3m1 0h1m2 0h1m2 0h2m1 0h2m1 0h4m3 0h3m1 0h1m1 0h1m1 0h2m1 0h1m2 0h5m1 0h1m2 0h1m1 0h3m1 0h1m2 0h1m3 0h2m1 0h1m1 0h3m7 0h2m1 0h2m1 0h4m3 0h1m2 0h3m4 0h1m2 0h3m2 0h2m2 0h2m1 0h1m1 0h1m1 0h2m1 0h2m6 0h1m4 0h1m3 0h1m1 0h3m1 0h2m3 0h1m3 0h1m5 0h1m4 0h2m1 0h2m1 0h2m1 0h3m3 0h1m1 0h2m1 0h1m1 0h1m3 0h2m1 0h2m1 0h1m2 0h1m1 0h1m2 0h1m1 0h7m2 0h2m1 0h5m2 0h1m1 0h2m1 0h1m2 0h2m1 0h2m3 0h1m1 0h3m3 0h3m2 0h2m1 0h1m1 0h1m1 0h1m1 0h3m4 0h2m1 0h1m1 0h1m1 0h4m1 0h1m1 0h2m8 0h2m1 0h1m1 0h4m1 0h2m1 0h1m2 0h1m1 0h8m2 0h2m1 0h2m2 0h1m1 0h8m1 0h1m3 0h1m1 0h2m1 0h2m3 0h4m1 0h3m4 0h4m1 0h1m1 0h1m7 0h1m1 0h1m1 0h1m1 0h2m1 0h1m1 0h1m3 0h1m2 0h3m1 0h1M1 100.5h1m9 0h1m1 0h2m4 0h1m1 0h3m10 0h1m1 0h1m2 0h1m5 0h3m33 0h2m5 0h1m2 0h3m2 0h1m3 0h2m1 0h2m2 0h1m1 0h1m1 0h3m2 0h1m1 0h1m3 0h2m2 0h3m2 0h1m1 0h1m2 0h1m3 0h2m2 0h1m1 0h3m1 0h1m1 0h1m5 0h1m1 0h2m3 0h2m1 0h1m1 0h4m3 0h1m2 0h5m4 0h3m3 0h4m2 0h1m2 0h2m2 0h1m2 0h2m1 0h2m1 0h1m1 0h1m1 0h3m2 0h1m1 0h2m1 0h2m3 0h1m1 0h1m2 0h3m3 0h1m8 0h1m1 0h5m2 0h1m3 0h1m1 0h2m1 0h1m2 0h7m3 0h3m1 0h1m1 0h1m2 0h1m2 0h1m2 0h2m1 0h2m1 0h1m2 0h1m2 0h1m1 0h1m1 0h3m2 0h3m3 0h5m1 0h1m1 0h3m8 0h1m2 0h2m4 0h2m1 0h1m1 0h2m1 0h4m5 0h5m7 0h1m2 0h6m3 0h1m1 0h4m1 0h1m4 0h3m1 0h2m2 0h2m2 0h1m3 0h2m1 0h2m2 0h1m1 0h2m2 0h3m1 0h1m3 0h3m2 0h1m4 0h2m2 0h3m2 0h2m1 0h1m2 0h4m1 0h1m1 0h2m1 0h1m1 0h2m2 0h1m1 0h1m1 0h1m2 0h1M1 101.5h1m9 0h1m1 0h2m4 0h1m1 0h3m10 0h1m1 0h2m1 0h1m5 0h3m32 0h1m2 0h2m1 0h3m1 0h1m3 0h3m1 0h2m2 0h1m5 0h3m1 0h1m1 0h1m1 0h2m1 0h2m2 0h1m1 0h2m1 0h1m1 0h1m1 0h5m1 0h1m1 0h1m3 0h1m3 0h1m2 0h4m1 0h7m3 0h2m1 0h2m1 0h1m1 0h1m2 0h1m6 0h2m7 0h7m1 0h1m2 0h2m2 0h1m2 0h1m1 0h2m2 0h1m2 0h2m1 0h2m1 0h3m1 0h1m2 0h1m1 0h1m1 0h4m16 0h3m1 0h1m1 0h1m2 0h1m1 0h1m4 0h6m1 0h1m1 0h1m1 0h2m3 0h3m1 0h1m1 0h1m1 0h1m1 0h1m1 0h1m1 0h2m2 0h3m1 0h1m1 0h1m1 0h1m3 0h1m3 0h3m1 0h1m1 0h2m1 0h3m3 0h2m1 0h1m1 0h2m2 0h1m1 0h2m4 0h1m1 0h1m5 0h1m2 0h1m1 0h1m3 0h1m1 0h2m1 0h1m2 0h2m1 0h1m2 0h2m4 0h1m5 0h4m1 0h1m1 0h1m1 0h2m1 0h3m1 0h1m2 0h3m2 0h1m1 0h1m2 0h1m3 0h1m2 0h1m2 0h2m1 0h3m2 0h3m2 0h1m3 0h3m4 0h6m2 0h1m2 0h2m2 0h1m1 0h1m1 0h1m1 0h1m2 0h1m2 0h1m1 0h2m3 0h1M1 102.5h1m9 0h1m1 0h2m4 0h1m1 0h3m10 0h2m3 0h1m5 0h3m32 0h1m1 0h1m4 0h2m1 0h1m2 0h2m1 0h7m2 0h3m3 0h3m3 0h2m1 0h1m1 0h2m2 0h1m1 0h1m2 0h3m3 0h3m1 0h2m1 0h1m3 0h1m3 0h1m2 0h1m2 0h1m1 0h6m2 0h1m1 0h4m1 0h1m1 0h2m1 0h1m1 0h3m3 0h5m2 0h2m4 0h1m3 0h1m3 0h1m1 0h2m2 0h5m2 0h3m1 0h1m2 0h1m2 0h1m1 0h3m1 0h1m2 0h3m2 0h1m3 0h1m1 0h2m4 0h1m6 0h2m2 0h1m4 0h1m1 0h6m3 0h2m4 0h1m2 0h1m1 0h2m1 0h2m1 0h4m1 0h2m2 0h2m1 0h2m1 0h1m2 0h2m3 0h1m1 0h2m2 0h1m1 0h1m2 0h2m1 0h3m2 0h2m3 0h2m1 0h5m1 0h1m6 0h1m2 0h1m3 0h1m5 0h3m1 0h1m3 0h1m1 0h1m2 0h3m1 0h4m3 0h1m1 0h1m1 0h3m1 0h1m1 0h2m1 0h4m1 0h1m1 0h1m1 0h1m3 0h3m3 0h3m1 0h2m1 0h2m2 0h1m1 0h2m1 0h1m2 0h2m1 0h1m1 0h1m2 0h3m2 0h3m1 0h1m1 0h2m1 0h1m2 0h1m3 0h1m1 0h1m1 0h2m1 0h1m1 0h1m2 0h1M1 103.5h1m9 0h1m1 0h2m4 0h1m1 0h3m10 0h2m1 0h1m1 0h1m5 0h3m34 0h11m1 0h4m3 0h2m5 0h1m1 0h2m2 0h4m1 0h1m1 0h3m1 0h4m1 0h3m1 0h3m1 0h1m3 0h1m1 0h2m4 0h1m2 0h2m2 0h2m1 0h2m1 0h1m1 0h2m1 0h3m1 0h1m1 0h2m2 0h2m4 0h3m2 0h1m1 0h1m2 0h3m2 0h3m1 0h3m1 0h1m1 0h2m2 0h2m2 0h1m2 0h5m1 0h3m2 0h4m2 0h1m2 0h1m1 0h1m5 0h1m7 0h1m2 0h3m1 0h5m1 0h1m1 0h1m1 0h2m1 0h1m2 0h2m1 0h2m1 0h1m2 0h6m1 0h2m1 0h1m1 0h1m1 0h2m1 0h1m2 0h2m2 0h3m1 0h1m3 0h3m1 0h1m2 0h2m1 0h2m2 0h1m2 0h1m1 0h5m1 0h1m1 0h3m1 0h1m4 0h2m1 0h3m1 0h1m1 0h1m1 0h1m1 0h1m1 0h2m2 0h2m2 0h1m1 0h3m1 0h1m3 0h5m4 0h1m1 0h1m6 0h3m3 0h2m4 0h1m2 0h2m1 0h2m1 0h1m4 0h2m1 0h2m4 0h1m8 0h2m1 0h1m7 0h2m2 0h1m6 0h1m1 0h2m2 0h1m1 0h4m4 0h6M1 104.5h1m9 0h1m1 0h2m4 0h1m1 0h3m10 0h3m2 0h1m5 0h3m32 0h1m1 0h1m1 0h5m2 0h3m1 0h1m2 0h6m1 0h3m3 0h11m1 0h1m2 0h2m8 0h1m1 0h2m1 0h2m3 0h2m1 0h2m7 0h1m1 0h2m2 0h2m2 0h1m1 0h1m1 0h1m3 0h3m1 0h1m2 0h1m3 0h1m1 0h1m1 0h1m2 0h1m1 0h1m7 0h2m2 0h2m1 0h3m2 0h1m1 0h1m2 0h3m1 0h6m1 0h2m1 0h1m1 0h2m2 0h2m5 0h1m2 0h1m1 0h1m1 0h2m2 0h1m1 0h1m1 0h2m2 0h1m1 0h5m3 0h1m5 0h1m1 0h2m3 0h4m3 0h1m1 0h3m1 0h3m1 0h2m1 0h1m2 0h3m6 0h5m1 0h1m3 0h1m2 0h1m1 0h1m2 0h2m2 0h1m2 0h1m1 0h1m3 0h3m1 0h6m2 0h2m2 0h3m8 0h2m1 0h1m1 0h1m2 0h1m2 0h1m1 0h2m2 0h1m1 0h1m1 0h2m1 0h1m1 0h3m2 0h2m5 0h1m3 0h2m1 0h4m2 0h1m1 0h1m1 0h1m3 0h1m3 0h1m1 0h2m4 0h4m1 0h1m1 0h1m1 0h2m1 0h1m2 0h2m2 0h1m3 0h2m2 0h2m1 0h5m3 0h2m1 0h1m2 0h1M1 105.5h1m9 0h1m1 0h2m4 0h1m1 0h3m10 0h4m1 0h1m5 0h3m35 0h3m2 0h2m1 0h2m1 0h4m1 0h1m5 0h1m2 0h1m1 0h2m2 0h1m1 0h1m1 0h6m1 0h4m1 0h1m1 0h1m2 0h2m3 0h1m1 0h2m4 0h1m2 0h1m1 0h8m1 0h1m5 0h3m2 0h2m2 0h1m6 0h2m5 0h1m2 0h1m2 0h1m1 0h3m2 0h2m1 0h2m4 0h1m4 0h1m1 0h1m3 0h1m1 0h1m7 0h2m1 0h2m2 0h1m16 0h1m4 0h1m1 0h2m3 0h1m1 0h1m1 0h1m2 0h1m2 0h1m3 0h1m1 0h1m4 0h1m1 0h5m1 0h3m1 0h1m1 0h3m5 0h5m1 0h6m1 0h4m1 0h1m1 0h2m2 0h1m5 0h3m1 0h1m2 0h2m6 0h1m2 0h2m1 0h1m1 0h1m1 0h1m2 0h1m1 0h1m1 0h2m4 0h1m4 0h2m1 0h1m2 0h3m2 0h1m2 0h1m2 0h2m1 0h1m1 0h1m1 0h1m2 0h1m2 0h2m1 0h2m1 0h2m1 0h2m1 0h4m7 0h1m1 0h2m1 0h1m2 0h1m2 0h1m3 0h1m1 0h2m3 0h1m1 0h1m1 0h2m1 0h3m1 0h2m1 0h2m2 0h2m1 0h1m1 0h1m1 0h3m2 0h2m1 0h1M1 106.5h1m9 0h1m1 0h2m4 0h1m1 0h3m9 0h1m5 0h1m5 0h3m32 0h3m2 0h1m6 0h1m1 0h1m1 0h2m2 0h4m1 0h1m1 0h2m1 0h1m1 0h1m2 0h3m2 0h4m2 0h4m3 0h1m2 0h1m2 0h5m3 0h2m1 0h1m1 0h1m1 0h1m2 0h1m2 0h2m1 0h1m2 0h1m1 0h1m1 0h1m1 0h2m1 0h1m1 0h1m2 0h5m1 0h1m1 0h3m5 0h2m3 0h1m1 0h3m2 0h2m2 0h1m1 0h4m1 0h1m1 0h3m1 0h2m1 0h2m2 0h1m1 0h3m1 0h1m1 0h3m13 0h1m2 0h2m2 0h2m2 0h2m1 0h1m2 0h1m1 0h6m1 0h2m1 0h1m1 0h3m1 0h1m1 0h3m2 0h3m1 0h3m2 0h1m1 0h1m5 0h1m1 0h1m1 0h4m2 0h3m2 0h3m5 0h1m5 0h2m1 0h4m4 0h1m6 0h5m1 0h6m3 0h1m1 0h1m2 0h2m1 0h2m1 0h4m5 0h2m4 0h2m3 0h2m1 0h5m3 0h3m3 0h2m1 0h2m2 0h1m2 0h1m3 0h2m1 0h1m1 0h1m1 0h1m4 0h5m2 0h2m1 0h1m1 0h3m1 0h1m4 0h1m1 0h1m4 0h4m2 0h1m1 0h3m2 0h2M1 107.5h1m9 0h1m1 0h2m4 0h1m1 0h3m9 0h1m3 0h1m1 0h1m5 0h3m32 0h2m1 0h3m1 0h4m1 0h1m3 0h1m1 0h1m3 0h1m2 0h2m2 0h3m1 0h2m2 0h1m1 0h1m2 0h2m1 0h4m1 0h4m1 0h1m1 0h2m3 0h1m1 0h1m1 0h2m1 0h1m3 0h5m2 0h2m1 0h1m1 0h1m1 0h3m1 0h1m2 0h1m2 0h1m2 0h2m1 0h1m1 0h2m4 0h1m2 0h4m1 0h1m2 0h3m1 0h1m1 0h3m2 0h1m7 0h1m2 0h1m1 0h3m1 0h1m3 0h1m2 0h2m1 0h2m1 0h1m14 0h1m1 0h4m1 0h4m1 0h1m2 0h2m4 0h1m1 0h5m1 0h4m1 0h1m1 0h1m2 0h2m2 0h1m2 0h1m4 0h2m1 0h1m1 0h1m2 0h2m1 0h1m1 0h1m2 0h4m1 0h2m1 0h2m1 0h1m1 0h1m1 0h1m2 0h1m1 0h2m2 0h3m2 0h1m5 0h1m2 0h1m1 0h1m3 0h4m2 0h1m1 0h1m1 0h1m1 0h2m3 0h1m3 0h3m1 0h1m1 0h1m3 0h2m1 0h2m1 0h1m2 0h2m1 0h2m3 0h5m1 0h1m1 0h3m2 0h1m1 0h1m2 0h4m1 0h2m1 0h3m2 0h3m1 0h3m3 0h3m1 0h1m1 0h2m4 0h1m2 0h2m1 0h4m1 0h3m1 0h1m1 0h2m1 0h1m1 0h2m1 0h1M1 108.5h1m9 0h1m1 0h2m4 0h1m1 0h3m9 0h1m2 0h1m2 0h1m5 0h3m34 0h1m2 0h2m1 0h1m2 0h1m4 0h2m2 0h2m1 0h2m2 0h2m2 0h2m2 0h1m5 0h3m2 0h4m3 0h1m2 0h2m1 0h6m1 0h2m2 0h1m1 0h2m4 0h1m1 0h2m8 0h4m1 0h1m1 0h2m1 0h5m3 0h1m1 0h2m3 0h2m2 0h1m3 0h3m2 0h2m1 0h2m1 0h1m1 0h2m1 0h1m1 0h2m2 0h1m1 0h2m1 0h1m1 0h2m2 0h1m1 0h5m13 0h1m1 0h3m1 0h1m1 0h2m1 0h1m1 0h1m1 0h1m4 0h1m2 0h1m4 0h1m1 0h5m2 0h3m1 0h1m1 0h2m2 0h2m1 0h1m1 0h2m1 0h2m3 0h1m1 0h1m4 0h2m1 0h2m2 0h1m1 0h2m2 0h1m3 0h1m3 0h2m4 0h1m2 0h1m2 0h3m2 0h4m4 0h1m2 0h3m7 0h2m1 0h2m1 0h1m2 0h2m1 0h1m1 0h4m2 0h1m3 0h2m1 0h1m1 0h1m1 0h1m3 0h1m4 0h1m1 0h1m1 0h1m3 0h1m2 0h1m1 0h1m4 0h2m3 0h2m2 0h1m1 0h1m2 0h2m1 0h1m2 0h2m1 0h3m4 0h2m1 0h3m3 0h1m4 0h2m1 0h2m1 0h2M1 109.5h1m9 0h1m1 0h2m4 0h1m1 0h3m9 0h1m2 0h2m1 0h1m5 0h3m32 0h2m1 0h2m1 0h5m3 0h4m1 0h2m2 0h1m3 0h1m2 0h1m3 0h2m1 0h3m1 0h3m1 0h4m1 0h6m2 0h1m1 0h1m2 0h1m4 0h2m3 0h2m1 0h3m1 0h3m1 0h2m2 0h3m3 0h2m1 0h1m2 0h1m3 0h2m2 0h2m1 0h1m3 0h1m2 0h3m3 0h2m1 0h2m2 0h1m1 0h3m7 0h2m3 0h1m1 0h1m2 0h1m1 0h1m1 0h2m1 0h1m2 0h1m12 0h2m5 0h2m3 0h2m2 0h1m4 0h1m1 0h4m1 0h1m1 0h1m2 0h3m2 0h3m3 0h1m1 0h2m3 0h1m1 0h1m3 0h1m1 0h2m1 0h1m5 0h2m2 0h1m2 0h2m3 0h2m3 0h5m1 0h1m2 0h2m1 0h1m3 0h1m1 0h2m1 0h1m2 0h5m2 0h2m4 0h1m1 0h1m1 0h2m1 0h4m1 0h3m2 0h1m7 0h3m3 0h1m3 0h4m3 0h3m7 0h1m1 0h1m1 0h1m3 0h2m1 0h2m3 0h2m2 0h1m1 0h1m2 0h1m2 0h2m1 0h2m5 0h1m5 0h3m1 0h1m1 0h2m4 0h3m2 0h3m1 0h1M1 110.5h1m9 0h1m1 0h2m4 0h1m1 0h3m9 0h1m1 0h1m3 0h1m5 0h3m32 0h3m1 0h1m1 0h1m1 0h1m1 0h2m1 0h1m2 0h1m1 0h1m2 0h1m3 0h1m1 0h2m7 0h1m4 0h3m3 0h1m2 0h2m4 0h1m2 0h5m2 0h1m1 0h1m1 0h1m1 0h1m7 0h3m2 0h1m1 0h1m2 0h3m3 0h1m3 0h5m1 0h1m1 0h1m1 0h1m5 0h2m5 0h3m3 0h9m1 0h1m1 0h1m1 0h1m1 0h1m2 0h3m1 0h1m1 0h1m1 0h1m1 0h1m1 0h4m13 0h3m1 0h1m1 0h2m1 0h1m5 0h1m2 0h2m3 0h2m1 0h2m4 0h1m1 0h1m1 0h1m5 0h1m1 0h3m1 0h4m4 0h2m1 0h1m1 0h1m1 0h1m2 0h2m2 0h3m6 0h6m8 0h1m3 0h5m1 0h2m2 0h1m3 0h3m3 0h1m1 0h2m3 0h1m1 0h1m2 0h3m2 0h4m1 0h2m2 0h1m3 0h1m1 0h2m3 0h2m1 0h1m1 0h1m2 0h1m2 0h1m2 0h1m1 0h1m1 0h1m4 0h1m3 0h3m1 0h5m10 0h1m2 0h4m2 0h1m5 0h2m1 0h2m1 0h1m1 0h3m1 0h4m5 0h2M1 111.5h1m9 0h1m1 0h2m4 0h1m1 0h3m9 0h1m1 0h1m1 0h1m1 0h1m5 0h3m32 0h2m1 0h2m1 0h5m4 0h5m2 0h1m1 0h1m3 0h1m1 0h1m1 0h9m1 0h2m1 0h2m1 0h1m3 0h4m2 0h1m1 0h1m1 0h5m1 0h1m4 0h2m1 0h3m1 0h1m4 0h1m1 0h2m5 0h2m1 0h1m3 0h1m3 0h1m3 0h2m3 0h4m1 0h2m3 0h2m1 0h2m4 0h2m1 0h1m1 0h1m4 0h1m2 0h2m2 0h1m2 0h3m1 0h2m2 0h1m14 0h2m1 0h2m2 0h2m6 0h1m1 0h3m1 0h1m5 0h1m1 0h1m1 0h1m4 0h5m1 0h3m3 0h1m1 0h2m1 0h1m1 0h7m3 0h3m1 0h1m1 0h4m2 0h1m1 0h1m1 0h1m1 0h2m2 0h2m1 0h1m2 0h1m1 0h2m4 0h5m3 0h1m2 0h2m3 0h1m2 0h1m2 0h2m4 0h1m2 0h1m2 0h1m5 0h4m1 0h1m2 0h1m1 0h3m1 0h5m1 0h1m1 0h1m3 0h1m2 0h3m1 0h1m2 0h1m2 0h1m2 0h1m1 0h1m1 0h2m1 0h2m1 0h1m1 0h1m1 0h2m2 0h1m6 0h1m1 0h1m1 0h2m2 0h1m1 0h1m3 0h1m3 0h4m2 0h1m3 0h1m1 0h1M1 112.5h1m9 0h1m1 0h2m4 0h1m1 0h3m9 0h1m1 0h2m2 0h1m5 0h3m33 0h2m1 0h1m2 0h2m2 0h1m1 0h1m2 0h6m2 0h3m2 0h1m1 0h2m2 0h4m2 0h1m2 0h1m1 0h1m1 0h1m4 0h1m2 0h1m2 0h5m2 0h1m1 0h1m1 0h1m1 0h1m2 0h2m1 0h1m1 0h2m8 0h4m1 0h1m1 0h2m2 0h4m1 0h5m1 0h1m2 0h3m3 0h1m1 0h1m1 0h2m2 0h1m1 0h2m2 0h1m1 0h1m1 0h5m4 0h2m2 0h1m1 0h1m1 0h1m4 0h3m1 0h1m1 0h1m1 0h2m2 0h1m1 0h6m2 0h2m1 0h3m2 0h2m4 0h2m2 0h1m1 0h1m1 0h1m4 0h1m1 0h1m1 0h1m2 0h3m1 0h5m2 0h1m2 0h1m1 0h4m1 0h2m1 0h2m1 0h1m4 0h1m1 0h1m2 0h2m1 0h1m1 0h1m3 0h1m1 0h2m3 0h1m2 0h2m1 0h2m1 0h2m1 0h3m2 0h2m3 0h1m2 0h1m3 0h1m1 0h3m2 0h3m3 0h5m2 0h1m1 0h2m1 0h1m3 0h1m1 0h1m1 0h1m1 0h2m1 0h3m1 0h1m1 0h6m6 0h1m1 0h1m2 0h1m1 0h2m1 0h2m2 0h2m1 0h3m2 0h2m2 0h1m4 0h2m1 0h1m1 0h2m1 0h1m2 0h2m3 0h2m1 0h1m1 0h1m1 0h1m2 0h2m1 0h1M1 113.5h1m9 0h1m1 0h2m4 0h1m1 0h3m9 0h1m1 0h3m1 0h1m5 0h3m32 0h1m2 0h2m1 0h6m1 0h1m1 0h1m1 0h3m2 0h4m2 0h1m1 0h1m4 0h8m1 0h2m1 0h4m1 0h1m1 0h3m3 0h1m1 0h2m4 0h1m1 0h1m3 0h5m1 0h1m1 0h1m4 0h4m3 0h2m1 0h1m6 0h3m8 0h2m2 0h8m1 0h1m4 0h2m3 0h1m4 0h1m2 0h2m2 0h1m2 0h3m2 0h2m5 0h1m1 0h1m1 0h1m6 0h2m2 0h4m1 0h1m1 0h4m1 0h1m4 0h2m1 0h1m2 0h2m2 0h1m2 0h2m1 0h1m1 0h2m2 0h1m1 0h1m3 0h2m1 0h6m1 0h3m2 0h1m1 0h1m2 0h1m1 0h3m5 0h2m2 0h1m2 0h1m2 0h3m3 0h3m2 0h1m1 0h2m1 0h1m1 0h1m1 0h1m2 0h1m4 0h1m1 0h1m4 0h1m4 0h2m6 0h1m2 0h1m1 0h3m1 0h1m1 0h1m1 0h3m1 0h1m4 0h4m3 0h3m9 0h2m1 0h1m2 0h1m1 0h1m7 0h2m1 0h2m1 0h1m1 0h2m1 0h3m5 0h1m1 0h1m1 0h1m2 0h2m4 0h2m2 0h1m1 0h1m1 0h1m2 0h1M1 114.5h1m9 0h1m1 0h2m4 0h1m1 0h3m9 0h2m4 0h1m5 0h3m32 0h3m1 0h1m7 0h1m3 0h6m5 0h1m5 0h1m6 0h1m3 0h1m3 0h2m3 0h2m1 0h1m2 0h5m5 0h2m7 0h1m1 0h3m7 0h4m2 0h1m1 0h1m1 0h5m1 0h1m1 0h1m1 0h1m2 0h2m1 0h1m1 0h1m2 0h5m2 0h1m2 0h1m1 0h5m8 0h2m2 0h1m3 0h3m2 0h2m1 0h2m1 0h2m1 0h1m4 0h1m1 0h1m4 0h1m8 0h6m1 0h1m1 0h1m1 0h10m1 0h5m2 0h1m4 0h2m3 0h3m4 0h4m1 0h2m1 0h1m1 0h2m4 0h2m2 0h4m1 0h1m3 0h4m2 0h2m1 0h6m2 0h2m1 0h3m2 0h1m1 0h4m2 0h1m1 0h1m2 0h1m4 0h3m2 0h1m1 0h5m2 0h2m1 0h1m2 0h1m2 0h2m1 0h1m1 0h1m1 0h1m4 0h1m1 0h2m1 0h2m1 0h1m3 0h1m3 0h2m1 0h4m1 0h6m1 0h1m1 0h8m1 0h1m1 0h3m1 0h5m1 0h1m3 0h6m1 0h1m2 0h1m2 0h1M1 115.5h1m9 0h1m1 0h2m4 0h1m1 0h3m9 0h2m2 0h1m1 0h1m5 0h3m32 0h4m9 0h1m1 0h1m1 0h1m1 0h1m4 0h2m1 0h2m1 0h1m3 0h1m1 0h4m1 0h2m1 0h10m2 0h1m5 0h3m1 0h1m1 0h1m4 0h2m2 0h6m2 0h1m2 0h4m2 0h1m1 0h3m2 0h1m4 0h1m4 0h2m2 0h1m3 0h2m3 0h1m8 0h5m5 0h2m1 0h1m3 0h1m1 0h4m1 0h2m1 0h2m1 0h1m10 0h1m5 0h3m1 0h3m1 0h1m1 0h3m1 0h1m1 0h4m1 0h2m1 0h1m2 0h1m1 0h1m1 0h2m1 0h5m3 0h1m2 0h6m1 0h2m2 0h2m2 0h1m3 0h1m1 0h1m3 0h1m1 0h1m1 0h1m1 0h2m1 0h3m2 0h1m1 0h4m3 0h2m4 0h1m1 0h1m4 0h1m1 0h2m2 0h2m1 0h1m1 0h1m3 0h2m3 0h1m4 0h4m1 0h1m2 0h1m1 0h2m6 0h1m1 0h1m1 0h3m1 0h3m5 0h2m3 0h2m1 0h2m1 0h3m2 0h1m6 0h1m3 0h1m2 0h3m5 0h1m1 0h1m2 0h7m1 0h1m1 0h2m3 0h2m1 0h2m3 0h5M1 116.5h1m9 0h1m1 0h2m4 0h1m1 0h3m9 0h2m1 0h1m2 0h1m5 0h3m32 0h5m3 0h1m2 0h1m4 0h3m4 0h1m1 0h3m1 0h1m1 0h2m2 0h3m3 0h1m2 0h1m1 0h2m5 0h2m1 0h1m2 0h4m5 0h5m4 0h2m1 0h4m1 0h1m2 0h1m1 0h1m2 0h4m3 0h4m4 0h1m1 0h1m1 0h1m1 0h5m5 0h2m3 0h1m1 0h1m2 0h4m1 0h1m1 0h2m3 0h1m2 0h2m2 0h1m1 0h2m1 0h2m2 0h2m3 0h2m3 0h1m2 0h2m4 0h3m2 0h1m2 0h1m1 0h3m1 0h6m1 0h3m1 0h1m4 0h1m4 0h1m3 0h1m1 0h2m3 0h3m10 0h1m1 0h4m1 0h1m1 0h1m1 0h1m1 0h2m3 0h1m1 0h2m2 0h3m2 0h3m4 0h6m1 0h4m1 0h3m2 0h1m1 0h1m1 0h6m2 0h1m2 0h1m1 0h3m2 0h2m1 0h1m1 0h1m1 0h1m3 0h2m1 0h2m1 0h1m1 0h1m2 0h2m1 0h4m1 0h2m1 0h1m1 0h2m3 0h1m1 0h1m1 0h7m1 0h6m2 0h1m2 0h1m2 0h1m1 0h3m10 0h3m1 0h3m1 0h2m5 0h1M1 117.5h1m9 0h1m1 0h2m4 0h1m1 0h3m9 0h2m1 0h2m1 0h1m5 0h3m37 0h3m1 0h1m4 0h2m1 0h3m3 0h1m4 0h1m1 0h2m2 0h1m2 0h3m1 0h1m2 0h3m3 0h1m1 0h2m1 0h1m1 0h1m2 0h1m1 0h1m1 0h6m3 0h6m1 0h3m5 0h2m1 0h1m2 0h1m1 0h2m3 0h2m1 0h2m7 0h5m1 0h1m1 0h1m1 0h2m3 0h1m4 0h2m2 0h1m1 0h1m4 0h2m4 0h4m3 0h2m4 0h1m12 0h1m5 0h1m3 0h4m1 0h1m1 0h1m2 0h2m1 0h1m1 0h1m1 0h2m1 0h1m6 0h1m1 0h2m1 0h1m3 0h2m4 0h2m4 0h3m1 0h1m1 0h1m2 0h1m1 0h3m3 0h3m2 0h1m2 0h1m2 0h1m6 0h1m1 0h4m2 0h1m2 0h3m1 0h1m2 0h1m1 0h1m2 0h1m4 0h1m2 0h2m3 0h2m2 0h4m3 0h1m2 0h1m2 0h2m1 0h3m2 0h3m1 0h2m2 0h1m5 0h2m2 0h5m1 0h1m1 0h2m1 0h1m1 0h1m3 0h2m3 0h2m1 0h1m1 0h1m1 0h5m1 0h2m3 0h1m1 0h1m3 0h1m1 0h1m1 0h3m1 0h1m1 0h2m2 0h1m1 0h1m1 0h2M1 118.5h1m9 0h1m1 0h2m4 0h1m1 0h3m9 0h3m3 0h1m5 0h3m32 0h1m1 0h1m1 0h5m2 0h1m2 0h1m3 0h5m4 0h3m1 0h1m1 0h1m2 0h3m1 0h1m3 0h1m1 0h2m5 0h1m2 0h4m1 0h3m3 0h4m1 0h1m4 0h1m2 0h1m1 0h1m5 0h1m1 0h1m1 0h3m4 0h4m1 0h1m1 0h1m1 0h9m1 0h3m3 0h3m1 0h1m2 0h2m2 0h7m1 0h2m2 0h3m2 0h1m3 0h8m1 0h1m4 0h3m1 0h1m1 0h3m1 0h1m3 0h1m1 0h1m5 0h1m3 0h2m1 0h3m1 0h2m1 0h1m2 0h2m1 0h1m3 0h5m3 0h4m2 0h2m1 0h2m1 0h3m1 0h2m1 0h3m1 0h1m1 0h4m1 0h2m4 0h3m2 0h1m2 0h4m3 0h1m3 0h1m2 0h1m5 0h3m2 0h2m1 0h1m5 0h2m2 0h2m1 0h2m3 0h5m3 0h5m2 0h2m1 0h2m1 0h1m3 0h6m1 0h1m1 0h3m1 0h2m1 0h1m1 0h4m6 0h1m2 0h3m3 0h1m4 0h2m2 0h2m1 0h1m2 0h3m2 0h2m4 0h1m2 0h1m1 0h2m2 0h1M1 119.5h1m9 0h1m1 0h2m4 0h1m1 0h3m9 0h3m1 0h1m1 0h1m5 0h3m32 0h1m3 0h1m1 0h5m3 0h3m1 0h1m2 0h6m2 0h3m2 0h1m1 0h4m1 0h2m1 0h3m1 0h1m1 0h1m2 0h4m1 0h2m2 0h1m1 0h1m1 0h1m1 0h1m4 0h4m1 0h1m1 0h1m1 0h2m4 0h4m2 0h2m3 0h1m1 0h1m2 0h2m5 0h2m1 0h6m3 0h4m6 0h2m4 0h1m3 0h2m2 0h1m5 0h3m2 0h1m1 0h2m1 0h1m12 0h1m1 0h2m2 0h3m3 0h1m1 0h2m1 0h1m1 0h1m3 0h3m2 0h1m3 0h4m3 0h1m7 0h8m2 0h2m1 0h1m2 0h2m1 0h2m1 0h5m2 0h3m4 0h1m2 0h1m2 0h3m1 0h1m2 0h1m3 0h1m1 0h3m1 0h1m3 0h1m1 0h1m2 0h1m1 0h3m1 0h1m8 0h1m2 0h1m4 0h1m2 0h1m1 0h2m2 0h1m1 0h2m1 0h2m3 0h1m1 0h1m1 0h1m1 0h1m1 0h5m3 0h2m1 0h1m2 0h1m3 0h3m1 0h5m3 0h1m1 0h5m1 0h3m1 0h1m1 0h1m1 0h2m1 0h1m3 0h4m1 0h1m1 0h1m1 0h2m3 0h1m3 0h2M1 120.5h1m9 0h1m1 0h2m4 0h1m1 0h3m9 0h4m2 0h1m5 0h3m32 0h1m1 0h1m1 0h6m2 0h1m2 0h4m2 0h1m3 0h5m3 0h6m2 0h2m1 0h1m1 0h3m4 0h2m3 0h6m1 0h3m1 0h4m1 0h1m2 0h1m1 0h1m1 0h2m3 0h2m3 0h1m1 0h1m1 0h1m1 0h1m2 0h2m1 0h1m2 0h3m3 0h1m2 0h5m3 0h1m1 0h2m3 0h3m2 0h2m2 0h1m2 0h1m2 0h2m2 0h2m1 0h1m3 0h3m2 0h3m1 0h2m4 0h2m9 0h1m1 0h2m1 0h2m4 0h5m1 0h1m1 0h2m1 0h4m3 0h1m1 0h1m2 0h1m1 0h1m1 0h4m1 0h2m1 0h1m6 0h1m1 0h3m2 0h1m2 0h1m2 0h2m1 0h1m3 0h3m1 0h4m1 0h1m5 0h3m1 0h2m3 0h3m4 0h3m2 0h1m2 0h1m1 0h1m2 0h1m1 0h2m2 0h2m3 0h1m1 0h1m1 0h3m3 0h1m7 0h1m2 0h2m3 0h1m1 0h2m3 0h1m7 0h3m1 0h2m1 0h3m1 0h1m5 0h2m1 0h4m1 0h4m1 0h1m2 0h1m4 0h1m2 0h1m1 0h1m2 0h3m1 0h1m1 0h2m1 0h1m5 0h3M1 121.5h1m9 0h1m1 0h2m4 0h1m1 0h3m9 0h5m1 0h1m5 0h3m32 0h1m2 0h2m1 0h3m1 0h1m2 0h1m1 0h2m1 0h2m3 0h1m4 0h1m1 0h1m2 0h2m1 0h1m2 0h1m1 0h2m1 0h5m1 0h3m1 0h5m1 0h1m2 0h4m1 0h2m3 0h1m2 0h3m4 0h1m4 0h3m3 0h1m6 0h1m2 0h3m2 0h1m5 0h2m2 0h1m1 0h2m1 0h1m2 0h3m1 0h1m1 0h2m2 0h2m1 0h1m2 0h2m1 0h2m2 0h3m4 0h2m1 0h1m16 0h1m2 0h2m1 0h1m1 0h1m4 0h3m1 0h1m2 0h1m1 0h2m1 0h4m2 0h1m1 0h2m6 0h7m1 0h1m1 0h2m1 0h2m2 0h4m2 0h2m2 0h5m2 0h4m1 0h2m8 0h1m1 0h5m1 0h1m1 0h2m1 0h4m1 0h4m2 0h2m1 0h2m1 0h7m2 0h1m3 0h1m1 0h2m2 0h1m1 0h2m4 0h4m1 0h1m1 0h1m1 0h2m2 0h6m2 0h2m3 0h3m1 0h1m2 0h4m2 0h5m4 0h1m1 0h1m1 0h3m2 0h1m2 0h1m2 0h1m1 0h3m1 0h3m1 0h1m3 0h1m4 0h1m3 0h1m2 0h2M1 122.5h1m9 0h1m1 0h2m4 0h1m1 0h3m8 0h1m6 0h1m5 0h3m34 0h3m3 0h1m2 0h2m4 0h1m2 0h4m1 0h4m2 0h1m1 0h1m1 0h2m1 0h1m2 0h1m2 0h1m1 0h3m5 0h1m1 0h1m2 0h7m1 0h2m1 0h1m1 0h1m5 0h1m1 0h2m1 0h1m1 0h2m4 0h2m2 0h1m2 0h1m1 0h2m1 0h2m1 0h1m1 0h1m1 0h2m2 0h3m1 0h1m2 0h1m1 0h10m1 0h2m3 0h1m1 0h2m3 0h3m2 0h2m2 0h1m6 0h1m2 0h2m1 0h1m1 0h6m3 0h3m1 0h1m3 0h2m1 0h1m2 0h2m2 0h4m4 0h3m1 0h1m1 0h6m1 0h2m2 0h1m2 0h3m1 0h4m1 0h1m1 0h2m4 0h4m1 0h2m2 0h1m2 0h2m1 0h4m1 0h1m2 0h1m4 0h1m3 0h2m3 0h1m2 0h1m3 0h1m1 0h4m2 0h1m3 0h1m1 0h4m1 0h2m1 0h4m1 0h3m1 0h1m1 0h1m1 0h1m1 0h1m2 0h1m3 0h2m2 0h9m1 0h1m2 0h1m2 0h5m4 0h1m1 0h1m2 0h4m2 0h1m2 0h1m2 0h2m2 0h2m3 0h1m3 0h1m1 0h2m5 0h1m2 0h2m2 0h1m1 0h1m2 0h6M1 123.5h1m9 0h1m1 0h2m4 0h1m1 0h3m8 0h1m4 0h1m1 0h1m5 0h3m32 0h2m1 0h2m3 0h3m4 0h4m1 0h1m3 0h2m4 0h3m1 0h1m1 0h4m1 0h2m1 0h2m4 0h3m1 0h3m1 0h1m1 0h1m1 0h1m2 0h2m2 0h1m3 0h4m1 0h1m3 0h1m2 0h1m1 0h1m2 0h1m3 0h2m1 0h2m1 0h2m1 0h1m1 0h2m6 0h5m1 0h2m1 0h4m2 0h1m2 0h1m1 0h2m2 0h3m5 0h2m1 0h3m4 0h1m1 0h1m1 0h1m1 0h1m9 0h1m4 0h3m1 0h1m3 0h2m1 0h3m3 0h2m2 0h1m1 0h1m3 0h1m1 0h1m1 0h2m1 0h1m1 0h1m2 0h1m2 0h4m1 0h1m3 0h2m5 0h1m1 0h1m1 0h2m7 0h1m1 0h2m5 0h3m1 0h3m1 0h5m2 0h1m1 0h5m3 0h1m1 0h3m1 0h1m2 0h3m1 0h1m1 0h1m1 0h1m1 0h2m1 0h1m1 0h4m1 0h1m3 0h1m1 0h1m1 0h2m1 0h1m3 0h3m1 0h1m8 0h3m3 0h1m1 0h3m1 0h2m2 0h2m1 0h3m1 0h1m2 0h1m1 0h2m1 0h4m2 0h6m1 0h4m1 0h4m2 0h1m1 0h1m2 0h1m1 0h1m1 0h1m2 0h1m4 0h1m3 0h2M1 124.5h1m9 0h1m1 0h2m4 0h1m1 0h3m8 0h1m3 0h1m2 0h1m5 0h3m33 0h2m1 0h3m6 0h2m1 0h2m1 0h1m1 0h5m1 0h1m3 0h1m1 0h1m3 0h2m1 0h2m2 0h1m1 0h3m4 0h1m2 0h1m2 0h3m2 0h2m1 0h2m1 0h3m2 0h2m1 0h1m1 0h4m4 0h1m4 0h1m1 0h2m1 0h1m1 0h5m3 0h2m3 0h6m4 0h2m3 0h2m2 0h1m1 0h4m1 0h5m2 0h1m1 0h4m2 0h2m1 0h3m2 0h2m2 0h1m6 0h1m1 0h2m2 0h1m2 0h3m2 0h1m1 0h2m3 0h1m1 0h2m2 0h2m1 0h1m1 0h1m12 0h3m6 0h1m1 0h1m1 0h2m3 0h7m1 0h2m1 0h1m1 0h1m1 0h3m2 0h1m3 0h1m2 0h1m1 0h1m1 0h2m2 0h2m4 0h1m2 0h2m1 0h3m1 0h2m1 0h1m1 0h1m5 0h3m1 0h1m5 0h1m3 0h1m1 0h1m5 0h1m3 0h2m4 0h2m2 0h1m5 0h2m1 0h2m1 0h1m1 0h1m2 0h1m2 0h2m2 0h1m1 0h7m1 0h6m1 0h4m1 0h1m1 0h2m1 0h1m2 0h1m2 0h1m3 0h1m1 0h2m8 0h3m2 0h3M1 125.5h1m9 0h1m1 0h2m4 0h1m1 0h3m8 0h1m3 0h2m1 0h1m5 0h3m32 0h1m2 0h2m1 0h5m2 0h6m11 0h2m4 0h4m1 0h2m1 0h5m1 0h1m2 0h4m1 0h1m1 0h1m2 0h1m3 0h2m4 0h1m1 0h3m2 0h1m7 0h4m1 0h3m1 0h1m3 0h1m2 0h4m2 0h3m1 0h3m2 0h3m1 0h7m3 0h2m2 0h2m2 0h1m1 0h2m5 0h1m4 0h1m2 0h1m1 0h1m2 0h1m7 0h1m10 0h2m4 0h2m1 0h1m1 0h5m1 0h1m4 0h1m1 0h1m1 0h2m1 0h3m1 0h1m1 0h6m3 0h4m3 0h3m1 0h3m5 0h1m2 0h1m1 0h2m1 0h1m4 0h3m4 0h2m1 0h1m3 0h1m1 0h2m1 0h2m2 0h3m4 0h1m2 0h3m1 0h3m1 0h1m2 0h2m2 0h2m1 0h2m1 0h1m1 0h2m1 0h1m4 0h1m1 0h1m2 0h1m2 0h1m2 0h1m3 0h1m2 0h1m2 0h1m2 0h4m1 0h2m1 0h2m3 0h1m1 0h1m1 0h1m2 0h2m1 0h1m1 0h1m2 0h1m1 0h3m3 0h1m1 0h2m1 0h2m1 0h1m3 0h1m2 0h1m3 0h1m4 0h4m2 0h1m2 0h1M1 126.5h1m9 0h1m1 0h2m4 0h1m1 0h3m8 0h1m2 0h1m3 0h1m5 0h3m32 0h1m1 0h1m1 0h1m2 0h1m3 0h1m2 0h1m1 0h8m1 0h2m1 0h3m1 0h2m2 0h2m3 0h1m1 0h2m1 0h1m1 0h1m5 0h1m2 0h6m1 0h1m1 0h1m3 0h1m1 0h2m1 0h1m4 0h4m6 0h1m1 0h2m1 0h1m2 0h1m1 0h2m1 0h1m2 0h1m1 0h1m1 0h3m1 0h3m1 0h1m1 0h6m1 0h6m1 0h4m1 0h1m1 0h3m1 0h2m2 0h2m5 0h1m4 0h3m1 0h1m6 0h1m3 0h3m2 0h4m2 0h1m1 0h2m3 0h1m2 0h1m1 0h3m3 0h2m1 0h1m3 0h2m2 0h6m5 0h1m1 0h1m1 0h1m1 0h1m2 0h1m1 0h1m1 0h1m3 0h4m2 0h1m1 0h1m1 0h5m1 0h5m1 0h1m1 0h2m1 0h2m1 0h1m1 0h1m1 0h1m4 0h1m1 0h2m2 0h2m4 0h2m3 0h4m3 0h1m2 0h1m3 0h3m2 0h1m1 0h4m1 0h2m4 0h3m6 0h2m1 0h4m2 0h1m1 0h1m1 0h3m3 0h3m1 0h2m1 0h1m2 0h1m1 0h1m2 0h2m2 0h5m4 0h1m5 0h3m1 0h1m2 0h2m2 0h1m6 0h1m2 0h1M1 127.5h1m9 0h1m1 0h2m4 0h1m1 0h3m8 0h1m2 0h1m1 0h1m1 0h1m5 0h3m32 0h1m1 0h6m1 0h4m2 0h2m2 0h1m2 0h2m1 0h1m1 0h2m1 0h2m7 0h1m2 0h7m1 0h1m1 0h1m1 0h3m5 0h1m1 0h2m2 0h1m4 0h2m1 0h1m1 0h1m1 0h1m4 0h2m1 0h3m3 0h4m3 0h1m2 0h5m1 0h1m1 0h1m1 0h1m1 0h1m1 0h4m2 0h2m1 0h2m4 0h3m2 0h1m7 0h1m4 0h1m1 0h1m3 0h2m1 0h2m1 0h1m11 0h1m1 0h2m1 0h1m3 0h1m3 0h2m2 0h2m1 0h3m2 0h2m1 0h3m2 0h1m1 0h1m1 0h2m1 0h1m2 0h1m3 0h1m2 0h3m2 0h3m9 0h1m1 0h1m7 0h1m1 0h1m2 0h1m2 0h1m1 0h1m3 0h1m3 0h1m1 0h3m1 0h1m1 0h4m1 0h1m1 0h1m2 0h4m2 0h2m1 0h2m1 0h2m4 0h4m1 0h1m1 0h4m2 0h2m6 0h2m3 0h2m2 0h2m1 0h2m1 0h4m3 0h1m3 0h1m1 0h2m1 0h2m1 0h7m3 0h1m2 0h1m5 0h2m5 0h2m5 0h1m1 0h2m3 0h1m1 0h2m6 0h1m1 0h1m1 0h1M1 128.5h1m9 0h1m1 0h2m4 0h1m1 0h3m8 0h1m2 0h2m2 0h1m5 0h3m32 0h3m3 0h1m1 0h1m2 0h1m2 0h1m1 0h1m1 0h1m1 0h3m2 0h1m1 0h1m3 0h2m3 0h3m1 0h5m2 0h2m1 0h2m1 0h4m2 0h4m3 0h2m2 0h1m1 0h1m4 0h2m2 0h3m1 0h1m4 0h1m1 0h2m1 0h1m2 0h7m1 0h2m2 0h2m4 0h2m2 0h1m2 0h3m1 0h2m5 0h5m2 0h7m1 0h4m3 0h1m1 0h1m3 0h2m5 0h1m1 0h2m1 0h4m1 0h1m1 0h2m5 0h3m1 0h5m2 0h1m2 0h2m2 0h1m1 0h1m6 0h1m1 0h1m1 0h1m2 0h1m3 0h2m1 0h1m4 0h3m2 0h1m2 0h3m1 0h3m1 0h1m4 0h1m4 0h3m2 0h1m4 0h2m1 0h1m3 0h4m2 0h1m2 0h2m2 0h1m5 0h1m6 0h1m1 0h4m1 0h1m1 0h3m2 0h1m1 0h2m1 0h1m3 0h1m1 0h1m6 0h3m1 0h2m3 0h4m6 0h2m1 0h5m1 0h1m1 0h1m3 0h1m1 0h1m1 0h2m3 0h3m5 0h1m1 0h1m3 0h1m1 0h1m3 0h3m2 0h6m1 0h1m1 0h1m1 0h1M1 129.5h1m9 0h1m1 0h2m4 0h1m1 0h3m8 0h1m2 0h3m1 0h1m5 0h3m33 0h1m1 0h4m1 0h3m3 0h2m1 0h3m1 0h2m5 0h5m1 0h6m1 0h1m1 0h6m1 0h1m1 0h2m1 0h4m1 0h1m1 0h8m3 0h2m1 0h1m1 0h1m2 0h1m3 0h1m2 0h4m3 0h3m1 0h1m1 0h1m1 0h2m1 0h2m2 0h1m3 0h1m4 0h3m1 0h3m3 0h1m3 0h2m3 0h2m1 0h1m2 0h1m1 0h1m3 0h1m3 0h1m1 0h3m2 0h1m1 0h1m2 0h1m10 0h3m3 0h1m3 0h4m3 0h1m2 0h2m1 0h1m3 0h2m2 0h1m1 0h1m1 0h1m2 0h3m1 0h2m1 0h2m6 0h2m1 0h2m1 0h1m2 0h1m1 0h1m1 0h1m1 0h2m3 0h2m5 0h4m1 0h1m1 0h2m1 0h1m1 0h6m4 0h1m1 0h2m1 0h1m3 0h1m3 0h1m1 0h3m1 0h1m2 0h1m4 0h1m1 0h1m1 0h4m3 0h1m3 0h1m2 0h1m4 0h2m1 0h1m3 0h1m1 0h3m2 0h8m1 0h1m1 0h1m1 0h5m1 0h2m2 0h3m2 0h2m2 0h1m3 0h2m4 0h3m2 0h1m1 0h2m1 0h5m1 0h3m2 0h1m4 0h1m1 0h1m1 0h1M1 130.5h1m9 0h1m1 0h2m4 0h1m1 0h3m8 0h1m1 0h1m4 0h1m5 0h3m32 0h1m1 0h5m1 0h1m2 0h2m2 0h1m1 0h1m2 0h4m1 0h1m1 0h2m1 0h1m1 0h2m2 0h3m1 0h5m1 0h3m7 0h1m1 0h2m1 0h1m1 0h1m3 0h3m2 0h1m5 0h1m1 0h3m2 0h3m2 0h4m1 0h1m1 0h2m1 0h1m2 0h1m4 0h3m4 0h2m1 0h1m2 0h1m1 0h4m1 0h2m2 0h1m1 0h7m1 0h3m1 0h5m1 0h2m2 0h1m3 0h3m2 0h2m12 0h1m2 0h1m3 0h6m5 0h4m1 0h1m2 0h1m1 0h3m2 0h2m1 0h5m1 0h1m4 0h1m2 0h3m1 0h1m3 0h2m2 0h2m2 0h6m4 0h1m1 0h1m1 0h4m2 0h1m2 0h1m2 0h1m3 0h2m2 0h1m2 0h3m1 0h3m1 0h1m4 0h2m2 0h2m2 0h1m2 0h1m1 0h1m3 0h3m2 0h3m2 0h3m1 0h1m1 0h1m1 0h3m2 0h1m1 0h5m2 0h2m2 0h3m3 0h1m1 0h5m1 0h1m1 0h2m1 0h1m1 0h1m2 0h3m2 0h2m2 0h2m2 0h4m2 0h4m2 0h1m1 0h1m2 0h1m4 0h1m2 0h1m1 0h1m1 0h2M1 131.5h1m9 0h1m1 0h2m4 0h1m1 0h3m8 0h1m1 0h1m2 0h1m1 0h1m5 0h3m35 0h2m1 0h4m3 0h3m1 0h3m2 0h1m2 0h1m2 0h1m2 0h2m1 0h3m1 0h1m1 0h1m1 0h5m3 0h1m1 0h7m1 0h1m3 0h3m4 0h4m1 0h2m2 0h1m1 0h1m2 0h2m1 0h5m1 0h1m2 0h2m5 0h3m1 0h1m4 0h1m1 0h1m1 0h5m2 0h5m3 0h1m3 0h1m1 0h4m2 0h1m1 0h1m3 0h1m2 0h3m1 0h5m1 0h1m10 0h1m1 0h2m1 0h8m1 0h4m1 0h2m5 0h2m5 0h2m1 0h2m2 0h4m8 0h2m1 0h1m2 0h1m1 0h2m1 0h1m1 0h1m5 0h2m2 0h1m2 0h2m2 0h1m2 0h1m1 0h1m3 0h3m2 0h2m1 0h1m2 0h2m1 0h2m1 0h2m3 0h2m2 0h3m2 0h1m1 0h1m8 0h3m3 0h3m3 0h1m3 0h2m1 0h1m4 0h4m1 0h1m3 0h2m2 0h2m3 0h3m1 0h1m2 0h5m5 0h3m1 0h1m2 0h1m1 0h1m1 0h1m1 0h5m1 0h1m2 0h3m1 0h2m1 0h3m1 0h3m1 0h2m1 0h2m1 0h2m1 0h3M1 132.5h1m9 0h1m1 0h2m4 0h1m1 0h3m8 0h1m1 0h1m1 0h1m2 0h1m5 0h3m32 0h3m1 0h3m1 0h1m3 0h3m1 0h3m1 0h2m4 0h2m3 0h1m1 0h1m2 0h1m1 0h1m1 0h2m1 0h2m1 0h2m2 0h1m5 0h1m2 0h5m2 0h5m9 0h3m1 0h1m1 0h1m1 0h3m3 0h1m3 0h1m1 0h4m2 0h1m1 0h4m2 0h5m2 0h4m2 0h2m3 0h1m1 0h2m1 0h1m1 0h2m2 0h2m3 0h3m1 0h1m2 0h4m1 0h3m2 0h1m1 0h1m1 0h1m4 0h1m3 0h1m1 0h5m4 0h2m5 0h5m2 0h1m1 0h1m1 0h1m1 0h2m2 0h1m3 0h4m3 0h3m1 0h2m3 0h2m1 0h1m2 0h5m1 0h1m1 0h2m1 0h3m8 0h2m2 0h2m1 0h2m5 0h2m4 0h1m2 0h3m1 0h1m5 0h3m1 0h1m1 0h1m1 0h2m2 0h1m1 0h1m1 0h3m3 0h4m1 0h1m3 0h1m2 0h2m2 0h3m1 0h1m1 0h2m2 0h2m1 0h1m1 0h3m3 0h1m2 0h2m2 0h2m1 0h1m2 0h1m3 0h1m3 0h2m2 0h2m1 0h3m2 0h1m1 0h1m2 0h1m1 0h2m5 0h1m2 0h3m5 0h1m1 0h1M1 133.5h1m9 0h1m1 0h2m4 0h1m1 0h3m8 0h1m1 0h1m1 0h2m1 0h1m5 0h3m32 0h1m2 0h2m1 0h1m1 0h3m1 0h6m5 0h1m3 0h4m1 0h1m1 0h1m2 0h4m1 0h5m1 0h1m1 0h1m1 0h4m1 0h2m1 0h1m1 0h3m1 0h1m1 0h2m3 0h2m1 0h1m1 0h1m1 0h1m1 0h2m2 0h1m1 0h3m3 0h4m1 0h1m1 0h1m2 0h1m1 0h1m4 0h1m2 0h4m1 0h1m5 0h4m1 0h1m1 0h3m8 0h2m1 0h2m2 0h1m2 0h3m2 0h1m1 0h2m15 0h2m1 0h1m1 0h2m5 0h2m1 0h3m2 0h1m2 0h3m1 0h2m2 0h1m9 0h3m1 0h1m3 0h3m4 0h3m6 0h2m7 0h1m2 0h1m1 0h1m1 0h3m4 0h1m1 0h1m1 0h1m3 0h2m2 0h1m1 0h2m6 0h1m1 0h1m2 0h1m1 0h1m2 0h1m1 0h1m1 0h1m4 0h3m1 0h2m2 0h2m1 0h1m2 0h1m1 0h3m2 0h3m1 0h2m3 0h3m1 0h2m1 0h2m2 0h4m1 0h1m6 0h4m1 0h2m1 0h1m1 0h1m4 0h3m2 0h3m1 0h1m1 0h3m2 0h1m1 0h8m1 0h5m1 0h1m1 0h1m1 0h1m1 0h1m1 0h1M1 134.5h1m9 0h1m1 0h2m4 0h1m1 0h3m8 0h1m1 0h2m3 0h1m5 0h3m34 0h1m4 0h1m3 0h1m5 0h1m1 0h2m4 0h1m1 0h3m1 0h3m2 0h1m1 0h1m2 0h4m2 0h2m1 0h1m2 0h4m1 0h2m3 0h2m2 0h3m2 0h2m4 0h4m3 0h2m1 0h1m1 0h1m1 0h2m1 0h1m1 0h2m1 0h2m4 0h1m1 0h3m7 0h1m1 0h1m2 0h3m2 0h2m1 0h2m1 0h3m3 0h1m1 0h3m2 0h3m2 0h2m2 0h1m4 0h2m14 0h2m1 0h5m2 0h1m1 0h3m1 0h1m5 0h1m1 0h1m1 0h1m3 0h1m1 0h3m1 0h1m1 0h1m1 0h1m3 0h1m5 0h3m5 0h1m2 0h1m2 0h3m1 0h7m1 0h1m1 0h7m1 0h1m3 0h2m1 0h2m1 0h2m3 0h1m1 0h1m1 0h2m1 0h5m1 0h2m2 0h1m1 0h1m7 0h2m1 0h1m1 0h5m7 0h1m2 0h1m2 0h3m4 0h3m1 0h2m2 0h3m2 0h1m3 0h3m1 0h2m1 0h3m2 0h2m4 0h1m5 0h1m1 0h3m1 0h4m2 0h8m1 0h3m2 0h1m1 0h1m2 0h1m3 0h2m2 0h1M1 135.5h1m9 0h1m1 0h2m4 0h1m1 0h3m8 0h1m1 0h2m1 0h1m1 0h1m5 0h3m32 0h1m2 0h3m1 0h3m1 0h1m2 0h3m1 0h1m2 0h1m3 0h1m2 0h5m1 0h1m1 0h3m1 0h1m2 0h4m1 0h1m1 0h1m1 0h4m4 0h1m1 0h2m1 0h1m2 0h3m3 0h2m1 0h2m3 0h2m1 0h1m3 0h4m1 0h2m1 0h2m1 0h2m2 0h3m2 0h1m1 0h1m2 0h1m1 0h1m2 0h3m1 0h3m1 0h1m4 0h3m6 0h1m1 0h1m2 0h1m1 0h1m1 0h2m1 0h1m1 0h1m1 0h2m1 0h2m17 0h3m1 0h3m2 0h1m1 0h2m2 0h3m1 0h1m2 0h1m1 0h1m7 0h1m1 0h1m1 0h1m5 0h2m1 0h1m1 0h1m4 0h5m4 0h1m4 0h1m3 0h1m1 0h2m1 0h1m1 0h7m2 0h1m1 0h2m2 0h2m2 0h4m1 0h2m1 0h1m1 0h2m1 0h2m1 0h1m1 0h1m1 0h2m4 0h1m1 0h1m1 0h2m2 0h3m2 0h1m2 0h1m3 0h1m1 0h3m1 0h2m1 0h1m1 0h3m2 0h1m2 0h1m10 0h5m4 0h3m1 0h1m2 0h1m2 0h2m2 0h1m1 0h3m1 0h5m1 0h2m7 0h1m1 0h2m2 0h3m2 0h2m2 0h6M1 136.5h1m9 0h1m1 0h2m4 0h1m1 0h3m8 0h1m1 0h3m2 0h1m5 0h3m33 0h2m1 0h1m3 0h1m2 0h1m4 0h1m1 0h2m3 0h1m1 0h1m1 0h1m3 0h1m4 0h1m6 0h2m1 0h1m1 0h2m5 0h2m1 0h2m1 0h4m2 0h3m1 0h2m4 0h1m2 0h1m1 0h1m6 0h1m1 0h3m1 0h2m1 0h1m2 0h3m2 0h1m1 0h3m3 0h1m1 0h1m1 0h1m1 0h2m1 0h3m1 0h3m1 0h2m2 0h2m2 0h5m1 0h1m1 0h1m1 0h2m4 0h3m3 0h2m8 0h2m3 0h4m4 0h1m3 0h2m1 0h1m3 0h1m3 0h2m2 0h2m4 0h1m1 0h1m5 0h3m1 0h7m1 0h1m7 0h1m1 0h1m1 0h1m1 0h1m2 0h1m1 0h1m1 0h1m1 0h1m4 0h2m2 0h1m1 0h1m5 0h5m2 0h1m2 0h2m1 0h2m3 0h1m1 0h1m4 0h1m2 0h2m1 0h1m2 0h1m1 0h1m2 0h3m3 0h2m3 0h1m2 0h1m3 0h1m3 0h4m1 0h1m3 0h4m2 0h5m1 0h2m1 0h2m4 0h1m1 0h2m1 0h3m3 0h1m2 0h2m6 0h2m2 0h2m1 0h3m1 0h3m1 0h1m1 0h3m3 0h1m7 0h1M1 137.5h1m9 0h1m1 0h2m4 0h1m1 0h3m8 0h1m1 0h4m1 0h1m5 0h3m32 0h1m2 0h2m1 0h3m1 0h1m1 0h2m1 0h2m7 0h1m1 0h5m5 0h6m1 0h4m1 0h1m1 0h6m1 0h2m1 0h1m1 0h3m1 0h1m1 0h3m2 0h3m2 0h1m1 0h1m1 0h1m2 0h2m1 0h4m2 0h1m4 0h3m2 0h2m3 0h1m1 0h1m2 0h4m1 0h3m1 0h3m2 0h1m2 0h4m2 0h1m1 0h1m1 0h1m3 0h2m3 0h1m2 0h3m2 0h1m1 0h2m1 0h1m13 0h1m3 0h4m1 0h1m1 0h3m2 0h2m1 0h1m3 0h2m2 0h2m1 0h1m6 0h1m2 0h3m2 0h1m2 0h1m4 0h3m2 0h1m3 0h1m2 0h1m1 0h2m4 0h1m3 0h2m2 0h2m1 0h4m2 0h2m4 0h1m1 0h2m1 0h2m2 0h5m1 0h1m5 0h1m1 0h2m2 0h1m7 0h2m1 0h1m1 0h1m1 0h5m1 0h8m3 0h6m2 0h1m1 0h1m1 0h9m2 0h2m1 0h1m1 0h1m1 0h3m1 0h2m1 0h2m5 0h1m1 0h1m1 0h7m1 0h1m1 0h2m2 0h2m2 0h1m1 0h1m1 0h2m6 0h1m1 0h1m1 0h2M1 138.5h1m9 0h1m1 0h2m4 0h1m1 0h3m8 0h2m5 0h1m5 0h3m32 0h3m2 0h1m2 0h1m4 0h2m1 0h2m2 0h1m1 0h2m3 0h1m3 0h3m2 0h3m2 0h4m1 0h4m3 0h2m1 0h2m3 0h2m3 0h3m3 0h2m1 0h1m3 0h1m1 0h4m3 0h1m1 0h1m1 0h2m1 0h4m1 0h1m1 0h1m1 0h1m3 0h2m3 0h2m1 0h1m1 0h1m1 0h1m3 0h1m3 0h1m2 0h2m1 0h2m1 0h1m1 0h2m1 0h1m2 0h2m1 0h2m1 0h1m1 0h1m1 0h1m2 0h1m3 0h2m2 0h6m1 0h2m1 0h2m1 0h1m4 0h2m3 0h2m2 0h3m1 0h1m1 0h2m4 0h3m3 0h2m1 0h1m1 0h1m3 0h1m1 0h1m1 0h1m1 0h1m2 0h1m1 0h2m1 0h1m3 0h2m1 0h6m6 0h1m3 0h1m1 0h1m1 0h4m1 0h1m1 0h1m1 0h1m2 0h1m2 0h1m2 0h2m1 0h3m6 0h2m1 0h1m2 0h1m3 0h1m4 0h2m4 0h4m3 0h1m3 0h6m1 0h2m1 0h5m1 0h2m2 0h5m1 0h1m4 0h5m1 0h1m1 0h1m3 0h1m7 0h1m1 0h1m2 0h6m1 0h2m1 0h7m2 0h1m2 0h2m1 0h8m1 0h1M1 139.5h1m9 0h1m1 0h2m4 0h1m1 0h3m8 0h2m3 0h1m1 0h1m5 0h3m32 0h1m1 0h2m2 0h5m1 0h1m2 0h5m1 0h2m7 0h1m3 0h1m1 0h4m3 0h3m1 0h2m1 0h1m1 0h5m3 0h1m1 0h3m1 0h5m2 0h2m1 0h1m2 0h2m1 0h1m4 0h1m1 0h1m1 0h1m3 0h3m7 0h2m8 0h2m3 0h1m1 0h1m1 0h3m4 0h3m3 0h3m3 0h2m1 0h1m1 0h1m1 0h1m1 0h9m2 0h2m1 0h2m5 0h1m2 0h1m1 0h1m1 0h1m1 0h2m1 0h1m1 0h2m3 0h3m1 0h3m1 0h1m2 0h2m4 0h1m1 0h1m2 0h1m1 0h2m1 0h1m1 0h2m5 0h1m3 0h2m1 0h3m1 0h5m1 0h1m1 0h2m4 0h4m1 0h1m8 0h2m4 0h2m1 0h1m1 0h4m4 0h7m1 0h1m2 0h1m1 0h2m1 0h1m3 0h1m1 0h1m5 0h4m2 0h2m6 0h1m1 0h1m7 0h1m2 0h1m2 0h2m1 0h1m4 0h1m4 0h2m1 0h1m2 0h1m4 0h4m2 0h2m1 0h8m1 0h1m3 0h3m1 0h3m3 0h2m3 0h2m1 0h1m3 0h1M1 140.5h1m9 0h1m1 0h2m4 0h1m1 0h3m8 0h2m2 0h1m2 0h1m5 0h3m32 0h3m1 0h1m1 0h1m4 0h1m1 0h1m1 0h8m2 0h3m3 0h1m1 0h1m2 0h3m2 0h1m4 0h2m3 0h1m1 0h1m2 0h1m1 0h2m1 0h1m1 0h1m3 0h4m1 0h5m2 0h4m2 0h1m2 0h2m2 0h2m1 0h1m2 0h1m1 0h2m2 0h1m1 0h2m2 0h1m1 0h1m1 0h2m2 0h1m2 0h1m2 0h2m1 0h6m1 0h7m2 0h1m5 0h2m7 0h1m1 0h1m1 0h2m4 0h2m3 0h1m1 0h1m5 0h4m1 0h2m3 0h4m3 0h1m1 0h2m3 0h1m2 0h2m2 0h2m2 0h1m1 0h1m1 0h2m1 0h1m6 0h6m1 0h7m1 0h2m3 0h1m1 0h2m6 0h3m9 0h3m3 0h1m2 0h1m2 0h6m1 0h4m2 0h2m1 0h1m7 0h1m3 0h3m1 0h1m1 0h1m1 0h2m1 0h4m1 0h1m1 0h2m2 0h2m1 0h1m3 0h4m2 0h1m3 0h3m1 0h1m1 0h4m1 0h1m1 0h2m5 0h1m3 0h2m1 0h3m2 0h2m1 0h1m2 0h2m4 0h1m4 0h1m4 0h2m2 0h1m2 0h4M1 141.5h1m9 0h1m1 0h2m4 0h1m1 0h3m8 0h2m2 0h2m1 0h1m5 0h3m36 0h4m1 0h3m1 0h5m1 0h1m2 0h1m1 0h1m3 0h1m1 0h2m2 0h1m1 0h2m1 0h2m1 0h1m2 0h4m3 0h1m1 0h3m2 0h1m2 0h1m2 0h1m1 0h1m2 0h1m3 0h1m1 0h2m5 0h7m1 0h1m2 0h4m3 0h1m2 0h2m5 0h2m2 0h2m1 0h4m1 0h4m1 0h1m1 0h2m1 0h2m2 0h2m2 0h1m1 0h2m8 0h1m1 0h1m2 0h1m1 0h1m2 0h1m12 0h4m1 0h1m3 0h7m3 0h2m2 0h1m2 0h1m1 0h2m3 0h1m2 0h1m3 0h3m2 0h3m3 0h2m1 0h1m3 0h1m2 0h1m1 0h1m1 0h2m2 0h2m1 0h3m1 0h2m1 0h2m3 0h11m2 0h4m1 0h1m1 0h3m1 0h2m3 0h2m2 0h1m1 0h2m1 0h1m8 0h2m2 0h1m4 0h2m3 0h1m1 0h1m2 0h1m2 0h2m3 0h1m1 0h1m4 0h2m1 0h3m5 0h1m4 0h1m2 0h1m7 0h1m1 0h3m1 0h2m1 0h1m3 0h1m2 0h4m3 0h5m5 0h6m2 0h1m3 0h2M1 142.5h1m9 0h1m1 0h2m4 0h1m1 0h3m8 0h2m1 0h1m3 0h1m5 0h3m33 0h2m1 0h1m2 0h2m2 0h1m2 0h3m3 0h2m3 0h3m3 0h2m1 0h1m1 0h3m8 0h1m3 0h1m5 0h1m1 0h5m2 0h2m2 0h1m1 0h1m3 0h3m2 0h2m1 0h1m2 0h1m3 0h3m1 0h1m1 0h3m1 0h4m1 0h1m1 0h1m1 0h4m1 0h4m1 0h1m1 0h3m5 0h1m3 0h4m2 0h1m2 0h1m3 0h4m2 0h1m2 0h1m1 0h1m1 0h1m1 0h2m1 0h1m2 0h1m1 0h2m3 0h5m1 0h1m3 0h2m1 0h4m1 0h1m2 0h2m5 0h1m1 0h3m1 0h3m2 0h1m2 0h1m4 0h1m11 0h1m2 0h2m1 0h1m1 0h1m4 0h2m1 0h1m2 0h1m2 0h1m6 0h5m2 0h2m1 0h1m1 0h1m2 0h1m2 0h4m4 0h1m2 0h2m4 0h2m1 0h2m2 0h1m3 0h3m1 0h1m2 0h1m1 0h1m1 0h1m2 0h1m1 0h1m3 0h1m1 0h1m3 0h1m1 0h6m2 0h1m4 0h1m3 0h1m1 0h1m4 0h3m1 0h2m1 0h1m2 0h2m1 0h1m1 0h1m2 0h3m3 0h1m1 0h2m4 0h2m2 0h1m2 0h1m1 0h1m1 0h1m1 0h2m1 0h1m2 0h2M1 143.5h1m9 0h1m1 0h2m4 0h1m1 0h3m8 0h2m1 0h1m1 0h1m1 0h1m5 0h3m35 0h2m3 0h1m1 0h1m2 0h6m2 0h3m1 0h1m1 0h2m1 0h1m2 0h2m2 0h6m2 0h4m1 0h1m1 0h5m1 0h1m1 0h1m2 0h2m3 0h2m3 0h1m1 0h4m9 0h4m1 0h3m1 0h1m1 0h1m1 0h2m1 0h3m2 0h3m2 0h4m1 0h2m2 0h3m1 0h2m4 0h2m5 0h1m3 0h1m1 0h1m4 0h1m1 0h1m3 0h2m3 0h2m6 0h2m4 0h5m1 0h1m3 0h1m2 0h2m1 0h1m1 0h2m1 0h2m5 0h1m2 0h1m5 0h2m1 0h2m2 0h1m1 0h4m3 0h1m2 0h1m3 0h1m1 0h1m1 0h3m3 0h2m2 0h1m1 0h1m1 0h2m3 0h1m3 0h3m2 0h1m6 0h1m2 0h1m5 0h2m3 0h1m4 0h6m5 0h2m2 0h3m2 0h5m3 0h5m1 0h1m3 0h2m1 0h2m1 0h1m3 0h4m2 0h1m2 0h2m5 0h1m6 0h5m1 0h2m4 0h1m1 0h2m2 0h2m3 0h4m2 0h1m1 0h4m3 0h1m1 0h2m1 0h2m2 0h2M1 144.5h1m9 0h1m1 0h2m4 0h1m1 0h3m8 0h2m1 0h2m2 0h1m5 0h3m33 0h2m3 0h1m4 0h1m1 0h1m2 0h7m1 0h1m2 0h1m3 0h1m3 0h1m1 0h1m3 0h1m4 0h3m4 0h1m2 0h1m2 0h5m2 0h2m1 0h2m3 0h1m3 0h1m2 0h1m2 0h2m4 0h4m2 0h1m3 0h2m1 0h3m2 0h1m1 0h2m2 0h2m2 0h1m1 0h2m1 0h3m1 0h5m3 0h3m3 0h1m1 0h2m1 0h5m2 0h2m1 0h1m1 0h2m1 0h1m1 0h1m2 0h1m3 0h1m3 0h2m1 0h1m1 0h1m1 0h2m1 0h3m1 0h1m1 0h2m1 0h3m5 0h2m1 0h5m3 0h1m1 0h1m1 0h1m3 0h4m2 0h1m1 0h3m2 0h1m1 0h3m1 0h2m1 0h2m1 0h1m8 0h2m1 0h1m1 0h1m1 0h6m3 0h3m1 0h4m1 0h1m3 0h1m1 0h3m2 0h1m2 0h6m3 0h1m2 0h1m1 0h1m2 0h2m7 0h9m1 0h1m1 0h3m2 0h4m3 0h3m1 0h1m3 0h2m4 0h3m4 0h1m1 0h5m1 0h2m3 0h1m1 0h3m4 0h1m1 0h1m1 0h1m3 0h1m3 0h1m1 0h2m1 0h1m2 0h4m2 0h1m1 0h2M1 145.5h1m9 0h1m1 0h2m4 0h1m1 0h3m8 0h2m1 0h3m1 0h1m5 0h3m33 0h1m1 0h2m3 0h3m3 0h2m1 0h1m1 0h1m2 0h1m2 0h1m2 0h4m5 0h1m1 0h1m2 0h1m2 0h2m1 0h3m2 0h4m2 0h1m3 0h1m3 0h1m3 0h1m1 0h2m1 0h3m1 0h1m2 0h1m1 0h1m3 0h1m3 0h2m3 0h1m5 0h4m4 0h1m1 0h4m1 0h2m3 0h2m1 0h2m2 0h1m1 0h1m1 0h6m1 0h3m3 0h1m1 0h2m1 0h3m5 0h1m1 0h1m12 0h3m3 0h1m1 0h2m4 0h1m2 0h3m4 0h5m2 0h1m1 0h2m1 0h1m1 0h3m1 0h2m4 0h1m3 0h1m2 0h1m5 0h3m1 0h1m3 0h1m1 0h4m1 0h2m5 0h1m3 0h3m2 0h1m2 0h1m3 0h1m1 0h2m2 0h8m1 0h7m1 0h3m4 0h1m1 0h1m1 0h1m2 0h1m1 0h2m2 0h1m3 0h1m1 0h1m2 0h1m2 0h1m1 0h1m2 0h1m1 0h3m1 0h3m2 0h4m2 0h7m2 0h1m2 0h3m4 0h2m1 0h1m1 0h1m1 0h1m2 0h2m2 0h1m4 0h1m3 0h1m1 0h1m1 0h2m1 0h1m3 0h1m2 0h1m2 0h1m2 0h1M1 146.5h1m9 0h1m1 0h2m4 0h1m1 0h3m8 0h3m4 0h1m5 0h3m32 0h3m3 0h1m1 0h1m2 0h1m2 0h1m1 0h2m1 0h5m1 0h4m1 0h2m3 0h2m1 0h1m1 0h1m5 0h4m1 0h1m1 0h1m2 0h1m1 0h5m1 0h1m1 0h4m2 0h1m4 0h2m1 0h2m1 0h4m1 0h1m1 0h1m1 0h2m1 0h1m3 0h3m1 0h1m4 0h1m1 0h1m1 0h1m1 0h3m1 0h1m2 0h1m1 0h3m2 0h2m1 0h2m1 0h6m3 0h1m4 0h2m1 0h2m1 0h1m1 0h1m4 0h3m1 0h3m5 0h3m1 0h1m1 0h2m1 0h2m1 0h1m2 0h4m1 0h4m2 0h2m2 0h2m2 0h1m1 0h2m1 0h3m2 0h1m3 0h1m3 0h1m4 0h1m4 0h1m2 0h1m3 0h6m8 0h2m1 0h2m2 0h3m1 0h1m1 0h1m1 0h1m3 0h1m2 0h3m2 0h1m3 0h3m2 0h3m2 0h3m2 0h2m2 0h1m2 0h1m1 0h1m1 0h1m2 0h1m1 0h1m1 0h3m2 0h2m1 0h1m1 0h1m1 0h2m1 0h2m1 0h1m4 0h1m2 0h3m4 0h1m2 0h4m1 0h3m1 0h6m1 0h2m1 0h2m1 0h1m3 0h1m1 0h6m1 0h2m1 0h3m1 0h2m1 0h1m1 0h1m1 0h4m1 0h1m2 0h1M1 147.5h1m9 0h1m1 0h2m4 0h1m1 0h3m8 0h3m2 0h1m1 0h1m5 0h3m35 0h2m1 0h6m2 0h2m1 0h3m3 0h1m2 0h1m4 0h2m1 0h1m1 0h2m1 0h4m2 0h4m1 0h1m2 0h5m2 0h1m2 0h2m4 0h1m6 0h2m2 0h1m2 0h1m4 0h4m2 0h1m4 0h1m1 0h1m1 0h4m1 0h1m2 0h1m3 0h7m1 0h1m3 0h2m1 0h1m2 0h1m3 0h1m1 0h1m3 0h3m1 0h1m1 0h2m2 0h3m1 0h1m2 0h1m8 0h1m7 0h2m1 0h2m1 0h1m1 0h1m2 0h4m5 0h1m2 0h1m1 0h1m2 0h1m1 0h2m1 0h1m3 0h2m1 0h1m1 0h3m1 0h2m2 0h2m1 0h6m2 0h2m1 0h2m3 0h2m2 0h1m1 0h1m1 0h3m1 0h2m1 0h4m3 0h3m3 0h1m1 0h2m1 0h1m1 0h3m2 0h2m2 0h1m2 0h2m1 0h1m1 0h3m1 0h2m1 0h1m1 0h2m3 0h3m3 0h2m2 0h4m2 0h1m1 0h3m1 0h4m2 0h4m4 0h3m3 0h1m1 0h2m1 0h2m1 0h4m1 0h1m1 0h1m2 0h1m2 0h2m3 0h3m1 0h3m5 0h1m2 0h1m1 0h3m1 0h1m1 0h3m1 0h1m4 0h1m1 0h1M1 148.5h1m9 0h1m1 0h2m4 0h1m1 0h3m8 0h3m1 0h1m2 0h1m5 0h3m32 0h3m1 0h1m2 0h1m2 0h2m2 0h1m1 0h1m3 0h3m1 0h1m2 0h2m1 0h2m4 0h1m1 0h1m2 0h1m4 0h1m1 0h1m2 0h1m1 0h2m1 0h1m2 0h4m1 0h1m2 0h1m1 0h1m2 0h2m3 0h9m4 0h3m5 0h1m1 0h5m1 0h1m1 0h1m1 0h1m1 0h1m5 0h1m1 0h2m2 0h2m2 0h2m1 0h1m2 0h3m1 0h2m2 0h5m1 0h1m2 0h2m5 0h2m1 0h3m1 0h2m1 0h2m1 0h1m1 0h5m1 0h1m3 0h1m1 0h2m6 0h1m1 0h6m1 0h1m1 0h1m1 0h3m1 0h1m1 0h1m1 0h1m2 0h1m1 0h1m4 0h1m1 0h1m2 0h1m2 0h1m2 0h3m1 0h1m2 0h4m1 0h1m2 0h2m3 0h3m2 0h1m1 0h1m1 0h2m2 0h1m1 0h5m1 0h2m1 0h1m1 0h1m6 0h3m1 0h2m2 0h1m2 0h1m2 0h1m3 0h1m2 0h2m1 0h6m1 0h2m2 0h1m2 0h1m3 0h1m1 0h1m1 0h1m5 0h3m1 0h1m4 0h1m2 0h4m7 0h1m5 0h1m1 0h1m2 0h1m2 0h3m3 0h4m1 0h1m5 0h1m2 0h1m1 0h1m4 0h1m1 0h2m2 0h1m4 0h1M1 149.5h1m9 0h1m1 0h2m4 0h1m1 0h3m8 0h3m1 0h2m1 0h1m5 0h3m32 0h2m1 0h2m1 0h1m1 0h1m1 0h1m2 0h4m5 0h2m2 0h1m2 0h3m3 0h3m4 0h1m2 0h4m1 0h5m3 0h1m2 0h2m1 0h3m6 0h2m1 0h2m2 0h1m1 0h1m3 0h1m1 0h4m2 0h2m1 0h1m6 0h3m2 0h1m1 0h1m3 0h2m2 0h3m2 0h2m1 0h2m2 0h1m1 0h1m4 0h1m6 0h2m3 0h1m2 0h7m1 0h1m1 0h1m2 0h1m9 0h1m1 0h4m1 0h2m2 0h1m2 0h3m3 0h2m2 0h1m1 0h1m2 0h3m1 0h2m1 0h2m3 0h3m1 0h4m2 0h2m1 0h1m1 0h1m3 0h3m4 0h3m2 0h1m1 0h1m1 0h1m3 0h2m2 0h2m1 0h1m3 0h2m1 0h1m2 0h2m2 0h3m5 0h1m5 0h2m5 0h3m1 0h1m3 0h1m7 0h2m1 0h2m1 0h1m1 0h1m3 0h1m1 0h2m4 0h3m5 0h2m1 0h1m2 0h2m2 0h3m2 0h1m1 0h1m1 0h2m4 0h5m4 0h2m1 0h2m2 0h3m3 0h1m1 0h2m2 0h1m5 0h1m3 0h2m3 0h1m2 0h1m1 0h1M1 150.5h1m9 0h1m1 0h2m4 0h1m1 0h3m8 0h4m3 0h1m5 0h3m32 0h3m4 0h2m2 0h1m5 0h2m1 0h1m1 0h1m1 0h1m2 0h1m2 0h5m1 0h3m1 0h1m5 0h5m5 0h2m1 0h2m9 0h1m1 0h1m5 0h1m2 0h1m2 0h1m2 0h3m1 0h1m1 0h1m4 0h4m1 0h2m1 0h1m1 0h1m1 0h1m3 0h5m2 0h4m3 0h2m2 0h1m1 0h6m2 0h3m1 0h2m2 0h1m1 0h1m2 0h4m3 0h1m2 0h1m1 0h1m1 0h3m1 0h4m2 0h6m2 0h1m1 0h6m2 0h5m3 0h1m1 0h1m1 0h1m6 0h5m1 0h3m1 0h1m1 0h4m1 0h5m2 0h3m1 0h2m8 0h2m3 0h2m2 0h2m1 0h1m3 0h1m1 0h1m1 0h3m4 0h2m2 0h9m4 0h1m1 0h1m2 0h1m1 0h6m5 0h3m1 0h1m1 0h3m2 0h3m1 0h6m3 0h1m5 0h2m1 0h1m1 0h1m1 0h3m6 0h2m4 0h3m1 0h2m2 0h1m5 0h4m2 0h3m2 0h2m1 0h1m2 0h1m1 0h1m1 0h1m1 0h4m4 0h3M1 151.5h1m9 0h1m1 0h2m4 0h1m1 0h3m8 0h4m1 0h1m1 0h1m5 0h3m34 0h3m1 0h5m2 0h7m3 0h2m1 0h1m2 0h2m3 0h1m2 0h2m3 0h1m2 0h4m1 0h1m1 0h2m1 0h1m4 0h1m1 0h1m2 0h2m4 0h4m2 0h2m1 0h1m1 0h2m1 0h2m1 0h3m3 0h1m2 0h2m5 0h3m1 0h1m2 0h2m1 0h3m2 0h2m2 0h3m5 0h1m1 0h2m2 0h3m1 0h1m1 0h2m1 0h1m3 0h1m2 0h1m1 0h1m1 0h1m5 0h1m12 0h1m3 0h2m2 0h1m1 0h5m2 0h8m1 0h4m6 0h3m2 0h2m1 0h1m1 0h1m1 0h3m1 0h1m1 0h1m1 0h5m2 0h1m2 0h1m4 0h5m1 0h1m1 0h2m1 0h1m2 0h3m1 0h1m1 0h2m1 0h3m1 0h4m1 0h6m2 0h3m2 0h1m2 0h1m2 0h1m4 0h1m1 0h5m3 0h2m1 0h2m3 0h3m1 0h3m1 0h1m4 0h3m3 0h1m2 0h1m1 0h3m2 0h3m1 0h3m1 0h1m4 0h1m2 0h7m2 0h5m2 0h1m1 0h1m1 0h3m1 0h3m1 0h3m1 0h4m2 0h1m2 0h1m3 0h1M1 152.5h1m9 0h1m1 0h2m4 0h1m1 0h3m8 0h5m2 0h1m5 0h3m33 0h2m11 0h1m2 0h2m1 0h4m1 0h1m1 0h2m2 0h3m3 0h2m1 0h1m5 0h3m3 0h2m2 0h2m1 0h1m1 0h3m4 0h3m1 0h1m1 0h2m1 0h1m1 0h3m3 0h1m4 0h4m1 0h4m1 0h3m1 0h1m1 0h5m2 0h1m2 0h1m1 0h1m2 0h1m1 0h7m2 0h1m1 0h4m1 0h1m1 0h2m3 0h4m2 0h1m2 0h1m2 0h1m1 0h3m4 0h4m1 0h3m2 0h1m1 0h7m2 0h1m1 0h2m3 0h2m1 0h3m5 0h1m2 0h3m3 0h1m2 0h1m8 0h1m6 0h2m4 0h1m2 0h1m1 0h4m1 0h3m1 0h1m4 0h1m1 0h1m1 0h4m2 0h1m2 0h1m2 0h3m2 0h1m2 0h4m2 0h2m6 0h1m2 0h1m2 0h1m1 0h1m2 0h1m6 0h4m1 0h1m8 0h1m1 0h2m1 0h2m1 0h1m2 0h1m1 0h2m1 0h3m4 0h2m2 0h1m1 0h1m3 0h1m2 0h1m1 0h2m1 0h3m1 0h2m1 0h2m1 0h1m2 0h1m1 0h1m2 0h1m3 0h1m1 0h2m3 0h2m1 0h1m2 0h2m5 0h1m1 0h1M1 153.5h1m9 0h1m1 0h2m4 0h1m1 0h3m8 0h6m1 0h1m5 0h3m36 0h1m1 0h1m1 0h5m2 0h1m1 0h1m1 0h1m3 0h1m4 0h1m2 0h2m1 0h1m1 0h7m2 0h4m1 0h1m3 0h3m1 0h1m1 0h1m1 0h3m2 0h5m1 0h5m4 0h1m5 0h4m2 0h1m7 0h5m1 0h1m2 0h1m2 0h3m2 0h3m1 0h1m3 0h2m1 0h1m2 0h3m1 0h1m3 0h1m8 0h1m2 0h1m1 0h1m1 0h4m1 0h2m18 0h1m2 0h2m9 0h1m3 0h2m2 0h3m4 0h2m3 0h3m1 0h3m1 0h2m3 0h1m2 0h1m2 0h1m2 0h2m1 0h1m1 0h1m3 0h1m3 0h1m2 0h1m1 0h1m1 0h1m2 0h1m2 0h1m1 0h1m3 0h2m2 0h2m2 0h1m1 0h1m3 0h1m1 0h2m1 0h3m2 0h4m3 0h1m3 0h1m1 0h2m1 0h1m2 0h4m3 0h1m2 0h1m3 0h2m2 0h2m1 0h1m2 0h3m2 0h1m2 0h5m1 0h2m1 0h1m1 0h3m3 0h1m1 0h3m1 0h1m2 0h3m1 0h1m1 0h2m1 0h2m3 0h1m1 0h1m1 0h1m2 0h2m4 0h1m3 0h1m2 0h3m1 0h2m2 0h1M1 154.5h1m9 0h1m1 0h2m4 0h1m1 0h3m15 0h1m4 0h1m36 0h2m7 0h2m2 0h1m1 0h7m2 0h3m3 0h1m2 0h1m3 0h1m2 0h1m1 0h1m2 0h1m1 0h2m3 0h1m4 0h6m3 0h3m1 0h2m7 0h1m2 0h1m1 0h1m3 0h5m1 0h1m2 0h1m1 0h3m3 0h1m1 0h9m1 0h1m2 0h1m1 0h4m1 0h2m1 0h2m1 0h3m1 0h2m1 0h4m3 0h2m2 0h1m2 0h1m2 0h1m1 0h3m2 0h2m1 0h1m8 0h2m3 0h4m1 0h1m2 0h2m1 0h2m2 0h2m3 0h3m1 0h2m2 0h2m1 0h1m2 0h1m1 0h1m1 0h2m1 0h2m1 0h1m3 0h1m1 0h2m2 0h1m2 0h1m1 0h1m1 0h1m1 0h1m2 0h1m1 0h4m1 0h4m2 0h5m1 0h1m2 0h1m1 0h2m1 0h1m5 0h2m3 0h1m1 0h1m1 0h1m1 0h1m10 0h1m1 0h3m1 0h4m2 0h1m4 0h4m1 0h1m1 0h3m3 0h2m2 0h3m5 0h1m1 0h1m2 0h3m3 0h1m2 0h1m1 0h1m1 0h3m1 0h5m1 0h2m1 0h5m1 0h2m2 0h2m2 0h1m2 0h1m1 0h2m1 0h3m3 0h1m1 0h1m6 0h2M1 155.5h1m9 0h1m1 0h2m4 0h1m1 0h3m13 0h1m1 0h1m4 0h1m35 0h1m3 0h2m2 0h3m4 0h5m4 0h1m2 0h2m1 0h1m1 0h1m2 0h1m1 0h1m1 0h1m1 0h3m1 0h3m2 0h1m1 0h5m1 0h1m1 0h1m1 0h1m2 0h5m3 0h2m1 0h3m1 0h1m4 0h1m2 0h2m1 0h2m1 0h4m1 0h1m1 0h1m1 0h4m4 0h1m1 0h4m2 0h2m1 0h2m1 0h1m4 0h1m2 0h1m8 0h1m1 0h2m2 0h1m1 0h1m2 0h1m2 0h1m1 0h4m1 0h1m1 0h1m13 0h5m1 0h2m3 0h1m1 0h1m3 0h2m1 0h2m1 0h1m2 0h3m1 0h1m2 0h1m1 0h1m2 0h2m1 0h1m1 0h1m1 0h3m1 0h2m1 0h1m3 0h2m1 0h1m2 0h1m1 0h1m5 0h1m1 0h2m1 0h1m5 0h2m1 0h1m1 0h3m1 0h1m1 0h1m1 0h2m1 0h1m3 0h1m1 0h1m1 0h1m1 0h3m1 0h1m1 0h2m1 0h2m3 0h1m1 0h2m5 0h1m1 0h2m1 0h1m1 0h3m4 0h1m1 0h2m4 0h1m2 0h4m1 0h2m2 0h1m4 0h1m1 0h1m2 0h1m2 0h4m1 0h3m1 0h2m1 0h1m5 0h2m1 0h1m1 0h2m1 0h2m2 0h1m2 0h6m1 0h1m4 0h1m1 0h1m5 0h2m3 0h2M1 156.5h1m9 0h1m1 0h2m4 0h1m1 0h3m12 0h1m2 0h1m4 0h1m35 0h3m1 0h1m1 0h1m1 0h1m2 0h1m2 0h1m1 0h3m2 0h7m4 0h3m1 0h1m1 0h1m1 0h1m1 0h2m3 0h3m1 0h1m1 0h1m2 0h1m2 0h3m3 0h1m1 0h2m1 0h1m1 0h1m2 0h3m2 0h2m4 0h1m1 0h1m2 0h3m1 0h1m1 0h2m1 0h5m1 0h1m1 0h1m1 0h2m1 0h1m1 0h2m1 0h2m1 0h5m5 0h2m1 0h3m1 0h1m2 0h3m2 0h1m1 0h3m1 0h1m3 0h1m2 0h1m1 0h3m12 0h1m2 0h2m1 0h2m2 0h1m2 0h4m3 0h3m1 0h2m3 0h1m1 0h1m2 0h1m1 0h7m1 0h7m1 0h1m1 0h5m1 0h1m5 0h1m1 0h6m2 0h4m1 0h1m2 0h1m1 0h7m1 0h2m1 0h3m1 0h2m3 0h3m2 0h2m1 0h2m1 0h1m1 0h1m1 0h1m3 0h3m1 0h1m3 0h1m2 0h2m3 0h1m1 0h1m1 0h3m1 0h2m1 0h2m1 0h1m1 0h4m3 0h1m1 0h5m1 0h1m2 0h1m3 0h4m3 0h3m2 0h1m4 0h1m4 0h1m3 0h2m1 0h2m1 0h1m1 0h4m1 0h1m1 0h3m3 0h1m1 0h2m1 0h1m3 0h1m1 0h1M1 157.5h1m9 0h1m1 0h2m4 0h1m1 0h3m12 0h2m1 0h1m4 0h1m36 0h5m2 0h4m1 0h5m1 0h1m2 0h2m1 0h2m1 0h1m1 0h1m1 0h1m1 0h2m1 0h3m1 0h3m1 0h4m1 0h1m1 0h2m1 0h2m3 0h1m1 0h1m1 0h1m2 0h1m1 0h1m6 0h4m3 0h2m3 0h4m1 0h3m3 0h1m3 0h4m2 0h4m2 0h1m2 0h8m1 0h1m2 0h6m1 0h1m2 0h1m2 0h2m5 0h1m2 0h1m1 0h1m2 0h2m1 0h1m14 0h1m3 0h4m2 0h1m1 0h1m4 0h2m4 0h2m5 0h8m1 0h1m2 0h1m2 0h1m3 0h2m1 0h2m4 0h1m4 0h4m6 0h1m6 0h6m7 0h3m1 0h2m1 0h2m1 0h1m5 0h4m1 0h1m1 0h2m2 0h1m1 0h2m1 0h1m3 0h2m1 0h1m2 0h1m1 0h1m2 0h1m2 0h3m4 0h1m2 0h1m2 0h1m2 0h2m2 0h7m2 0h1m6 0h2m6 0h2m1 0h2m1 0h2m1 0h2m1 0h1m1 0h1m2 0h1m1 0h1m1 0h1m1 0h1m2 0h3m2 0h1m1 0h4m3 0h1m1 0h2m2 0h4m2 0h1M1 158.5h1m9 0h1m1 0h2m4 0h1m1 0h3m11 0h1m3 0h1m4 0h1m36 0h2m1 0h1m2 0h2m7 0h2m2 0h1m1 0h2m3 0h2m1 0h2m5 0h7m3 0h2m2 0h1m4 0h1m2 0h1m1 0h4m2 0h4m5 0h1m3 0h1m1 0h1m2 0h1m2 0h1m1 0h1m1 0h2m1 0h1m4 0h3m1 0h3m1 0h1m1 0h1m5 0h3m4 0h3m2 0h2m2 0h1m1 0h2m1 0h1m1 0h5m2 0h1m1 0h3m1 0h1m3 0h1m1 0h6m12 0h1m1 0h1m1 0h1m1 0h1m1 0h1m2 0h3m1 0h2m1 0h1m1 0h2m2 0h2m1 0h2m11 0h1m2 0h1m3 0h3m1 0h1m2 0h1m1 0h1m1 0h1m2 0h3m1 0h5m2 0h1m1 0h2m8 0h2m1 0h2m6 0h1m3 0h2m3 0h1m2 0h1m1 0h1m2 0h2m2 0h3m4 0h2m2 0h1m2 0h2m1 0h1m1 0h2m2 0h1m2 0h1m3 0h2m2 0h1m5 0h3m2 0h1m1 0h2m5 0h6m7 0h4m1 0h2m4 0h1m3 0h2m1 0h1m2 0h2m6 0h1m1 0h1m3 0h1m1 0h1m1 0h2m2 0h2m1 0h1m1 0h6m1 0h2M1 159.5h1m9 0h1m1 0h2m4 0h1m1 0h3m11 0h1m1 0h1m1 0h1m4 0h1m35 0h2m1 0h1m2 0h2m1 0h1m1 0h2m1 0h2m1 0h1m1 0h1m4 0h1m3 0h1m1 0h4m2 0h8m1 0h1m2 0h6m1 0h2m1 0h1m1 0h1m5 0h1m1 0h1m4 0h2m1 0h2m4 0h1m3 0h4m1 0h1m2 0h4m4 0h2m1 0h1m1 0h1m3 0h1m2 0h1m4 0h3m1 0h1m1 0h2m3 0h2m1 0h3m7 0h5m2 0h1m1 0h4m1 0h5m16 0h1m2 0h1m2 0h3m2 0h2m2 0h1m1 0h1m1 0h1m4 0h1m1 0h1m2 0h1m1 0h2m1 0h1m1 0h2m1 0h2m1 0h3m1 0h2m2 0h1m1 0h3m1 0h2m1 0h1m1 0h2m1 0h1m1 0h2m4 0h1m1 0h1m1 0h5m1 0h1m1 0h1m2 0h4m6 0h1m1 0h1m2 0h3m1 0h2m1 0h1m1 0h4m1 0h6m1 0h1m7 0h2m1 0h1m1 0h4m1 0h1m1 0h1m2 0h1m2 0h1m1 0h5m1 0h3m1 0h1m1 0h1m1 0h1m3 0h6m3 0h3m2 0h1m1 0h1m2 0h1m7 0h1m5 0h2m1 0h2m1 0h1m1 0h1m1 0h4m3 0h3m1 0h1m4 0h1m4 0h3M1 160.5h1m9 0h1m1 0h2m4 0h1m1 0h3m11 0h2m2 0h1m4 0h1m35 0h2m1 0h2m2 0h2m2 0h1m1 0h1m2 0h3m1 0h2m4 0h2m1 0h1m1 0h2m5 0h1m1 0h4m2 0h3m3 0h3m4 0h4m2 0h2m1 0h1m1 0h2m6 0h5m2 0h1m1 0h2m1 0h4m1 0h2m1 0h1m1 0h5m1 0h1m1 0h4m2 0h3m7 0h2m1 0h4m1 0h1m1 0h10m1 0h2m2 0h2m1 0h1m2 0h1m2 0h1m3 0h1m14 0h3m1 0h2m1 0h1m1 0h1m1 0h2m1 0h1m1 0h3m2 0h1m2 0h2m6 0h1m1 0h4m1 0h1m4 0h1m5 0h3m1 0h3m2 0h4m4 0h2m2 0h1m5 0h1m1 0h5m1 0h1m1 0h2m2 0h2m5 0h4m1 0h1m2 0h1m1 0h1m2 0h1m5 0h1m4 0h1m2 0h1m2 0h4m1 0h1m2 0h1m1 0h4m2 0h1m1 0h1m3 0h4m1 0h4m1 0h1m1 0h1m1 0h2m3 0h1m2 0h1m5 0h1m1 0h1m8 0h1m2 0h2m1 0h2m2 0h1m2 0h2m2 0h2m1 0h1m1 0h1m1 0h3m2 0h6m1 0h1m1 0h2m1 0h3m1 0h1m1 0h2M1 161.5h1m9 0h1m1 0h2m4 0h1m1 0h3m11 0h3m1 0h1m4 0h1m35 0h1m1 0h1m1 0h1m2 0h4m1 0h6m3 0h2m1 0h2m4 0h1m3 0h1m2 0h3m1 0h1m1 0h1m1 0h4m1 0h4m1 0h4m1 0h1m1 0h2m2 0h3m4 0h2m2 0h2m1 0h1m1 0h2m1 0h1m2 0h2m1 0h1m2 0h2m1 0h1m1 0h1m1 0h1m2 0h2m5 0h1m1 0h4m2 0h2m1 0h3m3 0h1m1 0h1m3 0h1m3 0h2m1 0h1m1 0h6m3 0h4m1 0h5m1 0h1m1 0h2m10 0h2m1 0h1m1 0h1m3 0h1m1 0h2m1 0h1m1 0h1m3 0h3m1 0h4m2 0h1m2 0h1m1 0h1m2 0h5m1 0h2m1 0h1m2 0h1m3 0h1m1 0h4m1 0h2m4 0h2m1 0h2m1 0h1m1 0h2m2 0h1m1 0h3m2 0h1m3 0h2m1 0h1m1 0h8m1 0h1m1 0h2m2 0h1m2 0h2m2 0h1m1 0h1m1 0h1m1 0h1m1 0h2m1 0h2m1 0h1m2 0h1m2 0h2m2 0h2m1 0h1m2 0h2m1 0h3m1 0h1m3 0h2m1 0h2m4 0h1m3 0h1m1 0h1m1 0h3m1 0h2m1 0h1m3 0h1m1 0h3m1 0h4m3 0h2m2 0h1m1 0h2m1 0h2m1 0h1m2 0h1m4 0h1m2 0h4m1 0h1m3 0h3m1 0h3M1 162.5h1m9 0h1m1 0h2m4 0h1m1 0h3m10 0h1m4 0h1m4 0h1m36 0h6m1 0h1m1 0h2m1 0h2m1 0h3m1 0h3m4 0h1m1 0h1m1 0h1m4 0h3m1 0h4m2 0h2m8 0h2m1 0h5m3 0h1m1 0h2m1 0h1m2 0h1m2 0h1m1 0h2m4 0h1m1 0h1m1 0h4m4 0h1m1 0h5m1 0h1m1 0h3m2 0h1m4 0h1m2 0h5m2 0h2m1 0h4m1 0h4m1 0h2m5 0h3m1 0h2m1 0h2m1 0h1m1 0h3m3 0h4m5 0h1m1 0h1m1 0h1m3 0h2m4 0h1m1 0h1m7 0h6m2 0h1m1 0h1m1 0h3m6 0h1m5 0h1m1 0h1m4 0h2m2 0h1m3 0h2m1 0h1m1 0h1m1 0h1m1 0h1m1 0h2m6 0h2m5 0h1m2 0h4m1 0h1m2 0h1m1 0h2m1 0h2m1 0h2m7 0h2m10 0h2m1 0h1m4 0h7m1 0h1m5 0h2m3 0h2m2 0h2m1 0h2m1 0h1m1 0h2m2 0h3m2 0h2m1 0h2m5 0h1m3 0h1m1 0h1m2 0h2m1 0h1m1 0h1m2 0h1m1 0h2m3 0h1m1 0h2m3 0h1m2 0h4m1 0h1m1 0h3m4 0h1m1 0h1M1 163.5h1m9 0h1m1 0h2m4 0h1m1 0h3m10 0h1m2 0h1m1 0h1m4 0h1m35 0h1m2 0h3m1 0h6m1 0h6m2 0h1m1 0h2m2 0h1m5 0h1m3 0h2m1 0h3m1 0h4m1 0h1m1 0h2m1 0h2m3 0h1m1 0h1m1 0h1m2 0h1m4 0h7m1 0h3m2 0h1m2 0h2m1 0h2m1 0h1m7 0h1m1 0h3m2 0h1m2 0h1m1 0h3m2 0h3m1 0h6m3 0h3m2 0h2m4 0h1m2 0h1m2 0h1m3 0h1m1 0h1m1 0h1m1 0h1m1 0h4m1 0h1m10 0h3m2 0h1m1 0h1m1 0h2m1 0h2m1 0h2m1 0h1m1 0h1m1 0h5m6 0h4m2 0h1m4 0h2m2 0h1m1 0h3m1 0h2m4 0h3m1 0h2m9 0h1m1 0h2m2 0h1m1 0h1m1 0h2m3 0h3m6 0h2m1 0h2m2 0h4m3 0h3m2 0h3m1 0h2m5 0h2m2 0h2m1 0h3m2 0h1m5 0h1m1 0h2m2 0h1m2 0h1m3 0h2m1 0h2m1 0h3m1 0h4m1 0h2m1 0h2m2 0h1m1 0h3m1 0h5m1 0h1m1 0h1m3 0h4m1 0h2m2 0h2m1 0h7m1 0h1m1 0h1m1 0h1m2 0h1m5 0h1m1 0h1m2 0h1M1 164.5h1m9 0h1m1 0h2m4 0h1m1 0h3m10 0h1m1 0h1m2 0h1m4 0h1m35 0h3m1 0h1m3 0h1m2 0h1m2 0h3m1 0h1m2 0h2m1 0h1m1 0h2m5 0h1m2 0h2m3 0h1m1 0h1m2 0h1m1 0h1m4 0h2m1 0h1m1 0h5m4 0h2m1 0h1m1 0h1m4 0h2m1 0h2m3 0h1m4 0h2m3 0h1m1 0h3m1 0h4m1 0h1m1 0h3m1 0h1m1 0h5m2 0h1m1 0h3m3 0h1m1 0h2m1 0h4m1 0h2m4 0h1m3 0h2m3 0h2m2 0h1m2 0h2m2 0h2m1 0h3m2 0h2m3 0h2m2 0h1m2 0h1m1 0h1m1 0h3m3 0h3m2 0h2m1 0h1m2 0h2m1 0h2m2 0h2m1 0h3m1 0h2m1 0h4m5 0h1m2 0h3m2 0h2m2 0h2m1 0h2m1 0h1m2 0h1m2 0h3m6 0h2m2 0h1m6 0h2m2 0h1m2 0h1m1 0h3m2 0h1m1 0h4m2 0h2m1 0h1m4 0h4m1 0h7m4 0h1m1 0h6m3 0h1m1 0h2m1 0h1m1 0h1m1 0h3m2 0h2m1 0h1m1 0h3m5 0h1m1 0h2m1 0h1m1 0h1m3 0h5m8 0h2m3 0h2m3 0h1m1 0h2m2 0h1m2 0h1m4 0h8M1 165.5h1m9 0h1m1 0h2m4 0h1m1 0h3m10 0h1m1 0h2m1 0h1m4 0h1m35 0h2m1 0h2m1 0h2m1 0h2m1 0h7m3 0h2m1 0h1m2 0h1m2 0h1m5 0h3m1 0h3m1 0h4m1 0h2m3 0h2m3 0h2m1 0h4m4 0h1m1 0h3m1 0h1m2 0h1m1 0h1m4 0h4m1 0h1m1 0h2m1 0h1m3 0h2m3 0h2m4 0h6m4 0h2m3 0h1m2 0h1m1 0h3m8 0h1m3 0h2m1 0h1m1 0h3m2 0h1m1 0h1m1 0h1m1 0h1m14 0h2m5 0h1m1 0h3m1 0h1m1 0h2m2 0h5m3 0h2m4 0h1m1 0h1m1 0h2m1 0h2m8 0h1m2 0h1m2 0h2m1 0h5m3 0h1m2 0h4m1 0h2m6 0h3m8 0h1m7 0h1m1 0h1m1 0h1m2 0h2m1 0h2m2 0h1m1 0h1m4 0h2m5 0h1m2 0h1m2 0h1m1 0h2m2 0h3m1 0h3m1 0h1m4 0h3m1 0h2m1 0h2m2 0h1m1 0h2m3 0h5m1 0h3m1 0h3m1 0h1m4 0h2m2 0h2m1 0h3m1 0h1m1 0h2m1 0h5m2 0h1m2 0h3m2 0h5m1 0h2m1 0h1m1 0h4M1 166.5h1m9 0h1m1 0h2m4 0h1m1 0h3m10 0h2m3 0h1m4 0h1m35 0h1m1 0h1m1 0h1m3 0h1m2 0h1m2 0h1m2 0h1m2 0h4m1 0h1m1 0h1m3 0h3m3 0h2m1 0h1m2 0h1m2 0h1m1 0h1m1 0h1m1 0h2m2 0h1m2 0h3m1 0h11m1 0h1m2 0h1m1 0h4m1 0h1m2 0h1m1 0h4m2 0h1m3 0h4m2 0h1m1 0h3m2 0h2m1 0h1m3 0h7m1 0h2m1 0h2m1 0h5m2 0h3m4 0h2m1 0h2m2 0h2m3 0h3m6 0h1m1 0h2m1 0h3m1 0h1m1 0h1m2 0h1m3 0h2m2 0h2m3 0h1m1 0h1m4 0h1m2 0h1m2 0h2m2 0h4m1 0h3m3 0h4m1 0h1m1 0h9m1 0h5m5 0h1m2 0h1m3 0h2m1 0h1m6 0h5m1 0h4m1 0h5m1 0h1m1 0h1m5 0h2m1 0h1m2 0h3m1 0h1m2 0h1m3 0h1m1 0h1m2 0h2m1 0h5m1 0h2m1 0h2m3 0h1m2 0h1m1 0h2m5 0h1m2 0h4m2 0h2m1 0h3m1 0h2m1 0h1m3 0h1m1 0h1m4 0h2m4 0h4m2 0h1m2 0h3m2 0h1m2 0h2m2 0h1m1 0h2m2 0h3m1 0h3m1 0h1M1 167.5h1m9 0h1m1 0h2m4 0h1m1 0h3m10 0h2m1 0h1m1 0h1m4 0h1m38 0h2m1 0h1m1 0h4m3 0h5m2 0h2m4 0h1m2 0h2m1 0h1m1 0h1m1 0h1m2 0h3m1 0h4m1 0h1m1 0h5m1 0h1m1 0h1m1 0h5m1 0h1m4 0h5m1 0h2m1 0h3m3 0h2m1 0h1m2 0h1m4 0h1m1 0h2m1 0h3m6 0h2m1 0h1m2 0h2m2 0h2m6 0h1m1 0h1m3 0h1m5 0h4m1 0h1m2 0h4m2 0h2m2 0h1m12 0h1m1 0h2m1 0h2m2 0h1m1 0h2m4 0h1m1 0h1m1 0h1m2 0h1m1 0h1m1 0h1m4 0h3m3 0h1m2 0h1m2 0h4m1 0h1m2 0h2m1 0h1m1 0h3m3 0h2m2 0h2m1 0h2m1 0h1m6 0h1m6 0h1m1 0h5m1 0h1m1 0h2m2 0h1m1 0h2m1 0h1m2 0h1m1 0h1m4 0h1m3 0h2m3 0h2m1 0h1m1 0h1m1 0h2m1 0h1m3 0h1m2 0h2m1 0h2m1 0h1m1 0h1m2 0h1m1 0h1m2 0h1m1 0h1m3 0h2m1 0h1m1 0h2m1 0h3m1 0h3m2 0h2m1 0h1m1 0h3m1 0h1m1 0h2m1 0h2m1 0h2m3 0h1m1 0h2m3 0h4m2 0h3m1 0h1m3 0h3m3 0h1m4 0h1m3 0h1M1 168.5h1m9 0h1m1 0h2m4 0h1m1 0h3m10 0h3m2 0h1m4 0h1m35 0h3m1 0h1m1 0h1m1 0h1m2 0h1m1 0h2m1 0h1m1 0h5m2 0h1m1 0h1m7 0h1m1 0h2m2 0h2m1 0h1m1 0h1m1 0h1m1 0h2m3 0h1m3 0h1m1 0h1m1 0h3m1 0h3m1 0h2m1 0h1m3 0h1m3 0h2m1 0h1m2 0h1m1 0h4m1 0h2m1 0h1m1 0h1m2 0h2m1 0h1m1 0h3m1 0h5m1 0h1m1 0h2m1 0h4m2 0h2m1 0h1m1 0h6m2 0h3m1 0h1m1 0h3m1 0h1m2 0h1m2 0h1m2 0h3m2 0h5m3 0h1m1 0h3m1 0h1m3 0h1m1 0h2m1 0h1m1 0h3m1 0h1m1 0h2m2 0h6m1 0h1m1 0h4m11 0h1m2 0h2m1 0h1m4 0h2m4 0h5m4 0h1m1 0h3m2 0h2m2 0h1m1 0h1m1 0h2m1 0h1m1 0h1m3 0h1m2 0h1m4 0h6m3 0h2m2 0h1m1 0h3m1 0h2m3 0h4m1 0h5m2 0h1m1 0h5m2 0h1m2 0h1m4 0h3m1 0h1m3 0h2m1 0h1m4 0h4m9 0h2m3 0h2m1 0h5m3 0h1m1 0h2m3 0h2m2 0h2m2 0h1m3 0h2m1 0h1m3 0h1m1 0h1m4 0h1M1 169.5h1m9 0h1m1 0h2m4 0h1m1 0h3m10 0h4m1 0h1m4 0h1m35 0h1m3 0h1m2 0h4m4 0h2m1 0h1m5 0h1m1 0h1m2 0h2m1 0h10m2 0h2m2 0h3m1 0h5m2 0h2m1 0h2m1 0h2m1 0h2m3 0h4m1 0h1m1 0h1m1 0h2m1 0h1m2 0h4m1 0h1m1 0h1m5 0h2m2 0h3m3 0h1m1 0h5m1 0h3m1 0h3m1 0h1m5 0h1m3 0h4m2 0h2m1 0h3m4 0h1m1 0h1m1 0h5m1 0h2m1 0h1m1 0h1m8 0h3m3 0h2m1 0h1m2 0h1m2 0h1m3 0h2m1 0h2m1 0h1m3 0h1m3 0h1m1 0h1m1 0h1m3 0h2m1 0h1m2 0h2m1 0h2m1 0h3m1 0h2m1 0h2m3 0h1m2 0h2m1 0h3m1 0h2m1 0h2m2 0h1m1 0h3m1 0h2m1 0h1m2 0h2m2 0h2m4 0h2m1 0h2m1 0h3m1 0h2m6 0h1m2 0h2m1 0h3m2 0h2m1 0h2m2 0h1m2 0h1m2 0h7m3 0h2m1 0h3m1 0h1m4 0h2m1 0h3m1 0h1m1 0h2m1 0h2m3 0h8m1 0h1m2 0h1m5 0h1m1 0h2m2 0h4m2 0h4m2 0h3m1 0h1m1 0h1m1 0h1m2 0h2m4 0h1M1 170.5h1m9 0h1m1 0h2m4 0h1m1 0h3m9 0h1m5 0h1m4 0h1m35 0h3m1 0h2m5 0h1m6 0h1m2 0h1m5 0h1m3 0h2m2 0h4m2 0h1m2 0h1m2 0h2m5 0h2m2 0h4m1 0h1m2 0h7m2 0h2m1 0h1m1 0h1m1 0h1m1 0h2m2 0h1m1 0h1m1 0h1m2 0h1m1 0h1m2 0h6m2 0h7m3 0h1m1 0h6m2 0h2m1 0h2m1 0h4m1 0h1m1 0h3m1 0h2m1 0h3m1 0h1m1 0h1m3 0h3m1 0h1m3 0h1m2 0h1m2 0h2m3 0h9m1 0h1m2 0h1m3 0h1m3 0h1m1 0h1m1 0h2m4 0h1m1 0h2m1 0h2m1 0h2m1 0h1m2 0h1m1 0h1m2 0h1m1 0h2m2 0h2m2 0h2m1 0h2m6 0h2m1 0h2m2 0h1m2 0h2m1 0h5m1 0h2m3 0h1m1 0h3m6 0h2m1 0h3m1 0h1m3 0h1m1 0h1m3 0h1m2 0h1m1 0h1m1 0h5m1 0h1m1 0h1m1 0h1m6 0h1m6 0h5m1 0h5m1 0h1m2 0h2m3 0h1m6 0h2m2 0h3m1 0h1m2 0h4m6 0h3m2 0h2m1 0h1m1 0h1m4 0h1m2 0h1m3 0h1m1 0h1m3 0h2m1 0h2m2 0h2M1 171.5h1m9 0h1m1 0h2m4 0h1m1 0h3m9 0h1m3 0h1m1 0h1m4 0h1m35 0h2m1 0h2m1 0h5m3 0h2m6 0h1m1 0h1m3 0h1m1 0h2m2 0h1m1 0h3m2 0h2m1 0h5m1 0h1m2 0h5m2 0h1m1 0h4m1 0h3m4 0h1m1 0h2m4 0h2m3 0h1m1 0h4m1 0h2m1 0h1m3 0h3m1 0h1m3 0h1m1 0h1m1 0h1m1 0h2m1 0h4m1 0h1m1 0h1m2 0h1m1 0h1m1 0h1m1 0h1m8 0h1m2 0h2m2 0h1m2 0h2m2 0h1m1 0h2m14 0h1m1 0h3m1 0h1m6 0h1m2 0h2m3 0h1m1 0h6m2 0h1m3 0h2m2 0h1m1 0h1m7 0h1m1 0h1m4 0h2m1 0h1m1 0h2m4 0h1m1 0h1m1 0h1m4 0h1m4 0h1m4 0h4m1 0h1m1 0h1m3 0h1m1 0h1m5 0h1m3 0h1m2 0h1m1 0h2m1 0h2m5 0h2m1 0h1m2 0h1m2 0h2m1 0h1m4 0h3m1 0h1m1 0h5m3 0h3m1 0h2m1 0h3m1 0h12m3 0h3m2 0h4m1 0h7m1 0h2m3 0h1m1 0h1m1 0h1m2 0h1m2 0h2m1 0h1m1 0h1m2 0h3m1 0h1m10 0h2M1 172.5h1m9 0h1m1 0h2m4 0h1m1 0h3m9 0h1m2 0h1m2 0h1m4 0h1m36 0h4m1 0h2m2 0h1m1 0h1m1 0h1m1 0h7m2 0h3m1 0h1m2 0h2m2 0h3m5 0h1m1 0h1m2 0h1m3 0h2m4 0h3m3 0h1m1 0h1m2 0h1m1 0h1m5 0h1m1 0h1m4 0h1m2 0h1m1 0h4m4 0h1m1 0h5m1 0h1m1 0h1m1 0h1m2 0h1m2 0h1m1 0h1m2 0h1m1 0h3m1 0h2m5 0h3m4 0h3m1 0h2m1 0h5m1 0h1m1 0h1m2 0h1m6 0h1m6 0h3m2 0h2m1 0h2m1 0h1m1 0h2m1 0h1m2 0h1m1 0h2m1 0h1m1 0h1m1 0h2m3 0h1m2 0h2m1 0h1m2 0h1m1 0h3m1 0h1m1 0h3m2 0h4m1 0h2m1 0h3m1 0h1m2 0h1m2 0h4m1 0h1m1 0h1m10 0h2m1 0h1m3 0h1m6 0h1m1 0h2m1 0h1m1 0h3m10 0h1m1 0h4m1 0h4m2 0h2m2 0h6m7 0h1m2 0h3m1 0h1m1 0h1m1 0h1m3 0h2m2 0h1m2 0h1m2 0h6m2 0h2m1 0h1m1 0h3m2 0h4m1 0h2m1 0h1m1 0h1m2 0h1m4 0h1m2 0h1m2 0h4m2 0h1m1 0h2m1 0h4M1 173.5h1m9 0h1m1 0h2m4 0h1m1 0h3m9 0h1m2 0h2m1 0h1m4 0h1m35 0h2m1 0h1m1 0h1m2 0h3m2 0h2m3 0h1m1 0h1m2 0h1m1 0h1m2 0h4m4 0h3m5 0h3m1 0h1m1 0h7m1 0h1m1 0h1m1 0h1m1 0h1m1 0h1m1 0h2m3 0h2m1 0h3m1 0h1m1 0h2m4 0h1m1 0h2m1 0h3m1 0h1m6 0h1m2 0h2m1 0h2m4 0h2m1 0h3m1 0h3m2 0h1m1 0h1m1 0h3m4 0h2m1 0h2m4 0h1m1 0h1m2 0h3m1 0h5m1 0h1m1 0h1m10 0h3m1 0h1m1 0h1m1 0h1m3 0h1m1 0h4m1 0h2m1 0h1m3 0h1m1 0h2m1 0h1m1 0h3m1 0h1m1 0h3m1 0h1m4 0h1m1 0h1m1 0h1m1 0h3m1 0h2m1 0h1m3 0h2m2 0h2m1 0h4m5 0h4m2 0h4m5 0h2m1 0h3m4 0h2m1 0h2m4 0h1m4 0h2m1 0h2m4 0h3m1 0h2m2 0h1m1 0h3m4 0h2m5 0h2m1 0h1m1 0h2m3 0h1m5 0h1m1 0h1m1 0h4m1 0h6m2 0h3m2 0h3m2 0h2m1 0h4m5 0h1m1 0h1m2 0h2m1 0h4m2 0h2m3 0h1m2 0h2m1 0h4m1 0h1M1 174.5h1m9 0h1m1 0h2m4 0h1m1 0h3m9 0h1m1 0h1m3 0h1m4 0h1m35 0h3m4 0h1m3 0h1m2 0h1m1 0h3m1 0h1m1 0h1m1 0h2m1 0h1m3 0h1m2 0h2m1 0h2m2 0h1m2 0h1m4 0h2m2 0h1m2 0h1m2 0h5m1 0h2m1 0h3m1 0h1m1 0h1m3 0h1m1 0h3m2 0h1m1 0h1m2 0h4m2 0h1m3 0h1m1 0h3m1 0h4m2 0h1m1 0h3m6 0h2m1 0h1m1 0h2m1 0h2m1 0h3m3 0h4m5 0h1m2 0h1m3 0h1m2 0h4m3 0h1m1 0h4m2 0h1m2 0h1m1 0h2m1 0h3m2 0h1m1 0h2m2 0h1m2 0h3m2 0h1m1 0h2m3 0h1m1 0h1m1 0h1m2 0h2m2 0h8m3 0h1m2 0h1m4 0h2m1 0h2m2 0h1m2 0h1m2 0h3m1 0h2m1 0h3m2 0h1m5 0h2m1 0h1m1 0h2m2 0h1m1 0h2m3 0h2m2 0h3m1 0h1m2 0h3m6 0h4m1 0h7m1 0h1m1 0h5m3 0h5m2 0h2m1 0h1m2 0h1m1 0h1m1 0h1m2 0h3m1 0h2m4 0h2m3 0h2m1 0h1m2 0h1m2 0h1m1 0h1m3 0h2m2 0h4m2 0h2m5 0h2m1 0h1m2 0h3m1 0h2m1 0h5m2 0h1" stroke="#fff" stroke-width="1" fill="none"/><path d="M0 77.5h496M384.5 0v175" stroke="#960000" stroke-width="1" fill="none"/><path d="M1 77.5h1M11 77.5h1M13 77.5h2M19 77.5h1M21 77.5h3M32 77.5h2M36 77.5h2M39 77.5h1M45 77.5h2M80 77.5h1M83 77.5h2M87 77.5h4M93 77.5h5M99 77.5h1M101 77.5h2M105 77.5h1M110 77.5h2M113 77.5h2M117 77.5h3M121 77.5h1M123 77.5h4M128 77.5h1M130 77.5h3M134 77.5h3M140 77.5h1M142 77.5h1M144 77.5h1M146 77.5h1M149 77.5h2M153 77.5h2M156 77.5h3M160 77.5h1M162 77.5h2M169 77.5h2M174 77.5h3M181 77.5h1M184 77.5h2M194 77.5h6M201 77.5h1M203 77.5h3M207 77.5h2M210 77.5h1M213 77.5h2M217 77.5h1M221 77.5h1M223 77.5h1M225 77.5h2M228 77.5h1M230 77.5h6M237 77.5h2M240 77.5h2M243 77.5h1M246 77.5h1M252 77.5h1M256 77.5h1M258 77.5h1M266 77.5h1M268 77.5h4M273 77.5h5M280 77.5h3M284 77.5h1M289 77.5h1M292 77.5h2M295 77.5h1M297 77.5h5M303 77.5h2M309 77.5h3M315 77.5h7M326 77.5h1M332 77.5h1M334 77.5h1M336 77.5h3M341 77.5h2M345 77.5h1M350 77.5h2M353 77.5h1M356 77.5h1M359 77.5h1M363 77.5h1M366 77.5h2M369 77.5h3M373 77.5h1M376 77.5h1M378 77.5h2M381 77.5h1M384 77.5h3M388 77.5h4M393 77.5h1M397 77.5h3M401 77.5h2M407 77.5h1M409 77.5h1M411 77.5h1M415 77.5h1M417 77.5h1M420 77.5h1M422 77.5h1M424 77.5h1M428 77.5h2M432 77.5h1M435 77.5h4M440 77.5h1M445 77.5h1M447 77.5h1M450 77.5h1M452 77.5h3M456 77.5h1M458 77.5h2M463 77.5h1M465 77.5h1M468 77.5h1M471 77.5h1M479 77.5h1M481 77.5h1M483 77.5h1M485 77.5h3M489 77.5h1M491 77.5h2M384.5 0v1M384.5 3v2M384.5 8v3M384.5 14v1M384.5 17v1M384.5 19v2M384.5 22v1M384.5 24v1M384.5 26v1M384.5 28v2M384.5 32v5M384.5 39v1M384.5 41v2M384.5 44v2M384.5 47v2M384.5 52v3M384.5 57v1M384.5 60v2M384.5 63v5M384.5 69v1M384.5 73v1M384.5 75v4M384.5 80v1M384.5 82v2M384.5 86v4M384.5 92v1M384.5 97v1M384.5 100v2M384.5 108v1M384.5 111v2M384.5 114v1M384.5 118v1M384.5 120v1M384.5 122v2M384.5 125v3M384.5 129v2M384.5 132v2M384.5 135v2M384.5 138v1M384.5 141v2M384.5 144v1M384.5 146v1M384.5 149v1M384.5 153v3M384.5 157v1M384.5 159v1M384.5 161v4M384.5 167v1M384.5 170v3" stroke="#f00" stroke-width="1" fill="none"/></svg>
<div class="a" style="left:898px;top:193px;width:2px;height:2px;background:#960000"></div>
<div class="a" style="left:1892px;top:193px;width:2px;height:2px;background:#960000"></div>
<div class="a" style="left:1668px;top:37px;width:2px;height:2px;background:#960000"></div>
<div class="a" style="left:1668px;top:389px;width:2px;height:2px;background:#960000"></div>
<div class="a sb" style="left:1894px;top:37px;width:17px;height:354px">
<svg style="left:5px;top:8px" width="7" height="4" viewBox="0 0 7 4"><path d="M0 4L3.500 0 7 4z" fill="#555"/></svg>
<svg style="left:5px;top:343px" width="7" height="4" viewBox="0 0 7 4"><path d="M0 0L3.500 4 7 0z" fill="#555"/></svg>
<div class="a thumb" style="left:1px;top:32px;width:15px;height:17px"><svg style="left:3px;top:4px" width="7" height="7" viewBox="0 0 7 7" shape-rendering="crispEdges"><path d="M0 .5h7M0 2.500h7M0 4.500h7M0 6.500h7" stroke="#7a8296" stroke-width="1"/></svg></div>
</div>
<div class="a tbx" style="left:899px;top:392px;width:492.5px;padding:0"><span class="a w" style="left:1.4px;letter-spacing:-0.20px">Byte</span><span class="a w" style="left:25.3px;letter-spacing:0.38px">position:</span><span class="a w" style="left:74.3px;letter-spacing:-0.60px">48;</span><span class="a w" style="left:93.1px;letter-spacing:-0.39px">Row:</span><span class="a w" style="left:122px;letter-spacing:-0.43px">106517;</span><span class="a w" style="left:163.5px;letter-spacing:0.07px">Address:</span><span class="a w" style="left:211.1px;letter-spacing:-0.39px">1963321392;</span><span class="a w" style="left:276.5px;letter-spacing:-0.03px">Value:</span><span class="a w" style="left:310.4px;letter-spacing:0.00px">57</span></div>
<div class="a sbh" style="left:1396px;top:391px;width:498px;height:17px">
<svg style="left:8px;top:5px" width="4" height="7" viewBox="0 0 4 7"><path d="M4 0L0 3.500 4 7z" fill="#555"/></svg>
<svg style="left:486.5px;top:5px" width="4" height="7" viewBox="0 0 4 7"><path d="M0 0L4 3.500 0 7z" fill="#555"/></svg>
<div class="a thumbh" style="left:18px;top:1px;width:18px;height:15px"><svg style="left:4px;top:3px" width="8" height="7" viewBox="0 0 8 7" shape-rendering="crispEdges"><path d="M.5 0v7M2.500 0v7M4.500 0v7M6.500 0v7" stroke="#5f6678" stroke-width="1"/></svg></div>
</div>
<div class="a" style="left:1894px;top:391px;width:17px;height:17px;background:#fff;font-size:9px;line-height:18px;text-align:center;letter-spacing:-.8px;color:#000;padding-right:1px">64</div>
<div class="a txt" style="left:903px;top:413px;letter-spacing:.08px">Address:</div>
<div class="a txt" style="left:957.5px;top:413px;letter-spacing:-.13px">1961515056</div>
<div class="a txt" style="left:1027.5px;top:413px;letter-spacing:-.07px">Selected:</div>
<div class="a tab in" style="left:4px;top:441px;width:148px">
<svg class="a" style="left:2px;top:2px" width="16" height="16" viewBox="0 0 17 16" preserveAspectRatio="none">
<path d="M4.400.8H15.100c1 0 1.400.5 1.400 1.300V3.700H14.100L12.700 14.500H2.200C1.100 14.500.5 13.900.5 13V11.600H2.900z" fill="#f3f9fd" stroke="#1b7ec3" stroke-width="1.150" stroke-linejoin="round"/>
<path d="M.7 11.600H9.800c.7 0 1 .5 1 1.200M14.100 3.700V2.300" fill="none" stroke="#1b7ec3" stroke-width="1"/>
<g fill="none" stroke="#383838" stroke-width="1.100">
<ellipse cx="6.700" cy="3.900" rx="1.150" ry="1.600"/><path d="M10.800 2.200v3.400M9.800 3l1-.8"/>
<path d="M5.300 7.100v3.400M4.300 7.900l1-.8"/><ellipse cx="8.800" cy="8.800" rx="1.150" ry="1.600"/></g>
</svg>
<div class="a tt" style="left:20.500px;letter-spacing:.22px">Silicon</div>
<div class="a tt" style="left:57px;letter-spacing:.92px">Motion</div>
<div class="a tt" style="left:97.800px;letter-spacing:-.5px">XOR</div>
<div class="a tt" style="left:123px">2</div>
<svg class="a" style="left:134px;top:6px" width="9" height="9" viewBox="0 0 9 9"><path d="M.7.7l7.600 7.600M8.300.7L.7 8.300" stroke="#161616" stroke-width="1.4" fill="none"/></svg>
</div>
<div class="a band in" style="left:4px;top:462px;width:885px;height:4px;border-radius:0 3px 0 0"></div>
<div class="a band in" style="left:4px;top:862px;width:885px;height:4px;border-radius:0 0 3px 3px"></div>
<div class="a frame" style="left:4px;top:466px;width:885px;height:396px"></div>
<div class="a ib" style="left:6px;top:468px;width:879px;height:373px"></div>
<div class="a dash" style="left:7px;top:469px;width:860px;height:2px;background-position:2px 0"></div>
<div class="a dash" style="left:7px;top:821px;width:860px;height:2px;background-position:2px 0"></div>
<div class="a dashv" style="left:7px;top:471px;width:2px;height:350px"></div>
<div class="a dashv" style="left:865px;top:471px;width:2px;height:350px"></div>
<div class="a" style="left:7px;top:469px;width:2px;height:2px;background:#fff"></div>
<div class="a" style="left:865px;top:469px;width:2px;height:2px;background:#fff"></div>
<div class="a" style="left:865px;top:821px;width:2px;height:2px;background:#fff"></div>
<svg style="left:9px;top:471px" width="856" height="350" viewBox="0 0 428 175" shape-rendering="crispEdges"><rect width="428" height="175" fill="#696969"/><path d="M260 6.5h1m1 0h4m5 0h1m1 0h1m2 0h2m1 0h4m1 0h4m1 0h1m3 0h7m3 0h1m5 0h3m5 0h2m1 0h1m3 0h1m1 0h7m1 0h2m3 0h1m1 0h3m2 0h2m5 0h3m1 0h1m2 0h4m2 0h7m2 0h1m1 0h5m1 0h1m1 0h2m3 0h7m1 0h2m1 0h4m1 0h4m5 0h1m1 0h1m1 0h1m2 0h2m2 0h2M257 18.5h2m1 0h2m5 0h2m1 0h2m5 0h7m1 0h7m2 0h1m2 0h1m1 0h1m5 0h1m3 0h3m1 0h1m2 0h2m1 0h7m1 0h1m1 0h3m1 0h7m1 0h1m1 0h5m1 0h2m1 0h4m5 0h1m1 0h4m5 0h3m2 0h1m5 0h1m1 0h1m1 0h3m2 0h5m3 0h1m1 0h1m2 0h3m2 0h2m1 0h2m5 0h3M1 26.5h1m11 0h1m1 0h1m1 0h2m1 0h1m2 0h1m7 0h1m6 0h1m41 0h1m1 0h2m2 0h1m1 0h4m1 0h2m2 0h4m4 0h2m5 0h1m1 0h1m1 0h1m2 0h3m2 0h1m2 0h1m1 0h2m2 0h2m1 0h1m1 0h1m1 0h2m3 0h2m3 0h2m1 0h2m1 0h7m1 0h2m1 0h1m4 0h1m3 0h1m2 0h2m3 0h4m1 0h1m2 0h2m2 0h3m2 0h1m5 0h1m4 0h1m6 0h1m6 0h8m2 0h1m1 0h6m12 0h128m1 0h43M1 27.5h1m11 0h1m1 0h1m1 0h2m1 0h1m2 0h1m7 0h1m5 0h2m41 0h3m1 0h2m1 0h1m2 0h1m1 0h1m2 0h1m1 0h1m2 0h1m2 0h2m1 0h1m4 0h5m1 0h1m3 0h1m2 0h2m1 0h2m1 0h1m4 0h3m2 0h5m1 0h1m2 0h2m1 0h2m3 0h5m2 0h1m1 0h1m1 0h2m1 0h6m2 0h1m1 0h1m1 0h4m1 0h6m1 0h1m4 0h2m7 0h2m4 0h3m1 0h3m1 0h3m4 0h2m2 0h2m1 0h2m3 0h2m12 0h128m1 0h43M1 28.5h1m11 0h1m1 0h1m1 0h2m1 0h1m2 0h1m7 0h1m4 0h1m1 0h1m41 0h1m2 0h1m1 0h3m1 0h4m1 0h1m2 0h6m2 0h4m4 0h3m3 0h1m1 0h2m1 0h1m2 0h1m1 0h1m4 0h3m1 0h1m1 0h2m3 0h1m4 0h1m1 0h3m1 0h2m1 0h2m6 0h1m1 0h3m3 0h1m1 0h1m1 0h1m4 0h3m2 0h1m1 0h4m1 0h3m4 0h1m2 0h2m2 0h3m1 0h1m1 0h1m3 0h2m5 0h8m1 0h3m1 0h1m1 0h1m13 0h128m1 0h43M1 29.5h1m11 0h1m1 0h1m1 0h2m1 0h1m2 0h1m7 0h1m4 0h3m41 0h1m4 0h3m2 0h1m2 0h1m1 0h3m2 0h2m1 0h2m1 0h1m3 0h2m2 0h3m1 0h1m5 0h5m1 0h2m3 0h1m1 0h1m2 0h1m2 0h2m1 0h7m3 0h1m2 0h3m1 0h1m2 0h1m1 0h1m1 0h4m1 0h2m3 0h1m1 0h1m1 0h2m2 0h2m2 0h1m1 0h1m1 0h1m1 0h1m1 0h1m1 0h1m6 0h2m4 0h1m1 0h2m3 0h1m1 0h2m2 0h1m1 0h2m1 0h1m1 0h3m1 0h1m2 0h1m13 0h114m1 0h13m1 0h43M1 30.5h1m11 0h1m1 0h1m1 0h2m1 0h1m2 0h1m7 0h1m3 0h1m2 0h1m41 0h1m4 0h4m1 0h1m1 0h1m1 0h2m1 0h5m1 0h1m1 0h1m1 0h2m3 0h4m3 0h1m2 0h1m1 0h1m1 0h1m1 0h4m1 0h3m2 0h1m2 0h1m1 0h1m1 0h2m4 0h4m2 0h1m1 0h1m1 0h1m2 0h4m1 0h1m6 0h1m2 0h2m3 0h1m2 0h1m1 0h2m2 0h2m1 0h2m3 0h1m1 0h1m2 0h2m2 0h3m2 0h2m4 0h1m1 0h1m2 0h4m2 0h5m3 0h1m1 0h1m13 0h128m1 0h43M1 31.5h1m11 0h1m1 0h1m1 0h2m1 0h1m2 0h1m7 0h1m3 0h1m1 0h2m41 0h3m1 0h1m2 0h1m1 0h2m4 0h2m3 0h3m1 0h2m1 0h3m1 0h2m1 0h4m1 0h1m1 0h1m2 0h3m1 0h5m3 0h2m2 0h2m1 0h4m1 0h3m2 0h1m3 0h1m2 0h2m1 0h2m1 0h1m3 0h7m2 0h4m1 0h7m1 0h2m1 0h4m1 0h1m1 0h2m3 0h1m1 0h3m3 0h1m1 0h1m2 0h1m1 0h3m1 0h1m1 0h3m4 0h2m1 0h2m16 0h128m1 0h43M1 32.5h1m11 0h1m1 0h1m1 0h2m1 0h1m2 0h1m7 0h1m3 0h2m1 0h1m41 0h1m2 0h3m1 0h5m5 0h4m11 0h4m3 0h1m2 0h1m1 0h1m1 0h6m1 0h2m3 0h1m1 0h3m2 0h2m2 0h7m1 0h3m1 0h1m5 0h1m4 0h1m1 0h3m1 0h4m2 0h2m1 0h1m1 0h1m1 0h1m1 0h4m4 0h1m1 0h1m2 0h1m3 0h3m2 0h2m4 0h1m1 0h2m1 0h2m2 0h1m1 0h1m1 0h3m1 0h3m1 0h1m13 0h128m1 0h43M1 33.5h1m11 0h1m1 0h1m1 0h2m1 0h1m2 0h1m7 0h1m3 0h4m42 0h1m4 0h2m2 0h1m4 0h1m1 0h1m2 0h2m9 0h1m2 0h2m5 0h1m2 0h2m2 0h2m7 0h1m2 0h5m1 0h2m1 0h2m1 0h3m1 0h1m1 0h4m1 0h2m1 0h1m1 0h5m1 0h3m1 0h5m1 0h2m1 0h2m1 0h2m1 0h2m2 0h1m1 0h5m3 0h5m4 0h2m1 0h2m3 0h2m2 0h1m1 0h2m1 0h1m5 0h1m1 0h1m1 0h1m12 0h128m1 0h43M1 34.5h1m11 0h1m1 0h1m1 0h2m1 0h1m2 0h1m7 0h1m2 0h1m3 0h1m41 0h1m4 0h5m1 0h1m1 0h2m2 0h3m1 0h1m2 0h6m1 0h1m7 0h2m1 0h1m1 0h1m1 0h2m1 0h3m1 0h1m1 0h2m1 0h4m3 0h2m3 0h1m1 0h1m1 0h7m2 0h5m4 0h1m1 0h1m2 0h2m5 0h2m1 0h1m1 0h1m2 0h2m2 0h1m3 0h3m3 0h1m3 0h3m2 0h2m4 0h1m4 0h7m1 0h3m1 0h5m13 0h128m1 0h43M1 35.5h1m11 0h1m1 0h1m1 0h2m1 0h1m2 0h1m7 0h1m2 0h1m2 0h2m43 0h2m1 0h1m1 0h2m3 0h1m2 0h1m1 0h1m2 0h3m1 0h1m4 0h1m1 0h2m1 0h1m1 0h3m2 0h1m2 0h5m1 0h1m4 0h3m2 0h2m1 0h2m1 0h1m1 0h2m2 0h1m4 0h5m1 0h2m1 0h1m1 0h9m3 0h3m1 0h2m1 0h2m1 0h1m2 0h4m1 0h3m6 0h5m1 0h1m1 0h3m4 0h2m4 0h1m1 0h2m3 0h2m2 0h1m2 0h1m13 0h128m1 0h43M1 36.5h1m11 0h1m1 0h1m1 0h2m1 0h1m2 0h1m7 0h1m2 0h1m1 0h1m1 0h1m41 0h1m1 0h2m1 0h1m1 0h4m3 0h1m1 0h2m1 0h3m1 0h1m1 0h4m2 0h4m2 0h3m2 0h1m1 0h1m1 0h5m3 0h3m1 0h2m5 0h2m3 0h1m1 0h3m2 0h4m1 0h4m1 0h1m4 0h1m3 0h2m1 0h1m4 0h1m2 0h1m1 0h1m2 0h7m2 0h1m8 0h1m1 0h1m3 0h1m1 0h1m1 0h2m1 0h1m2 0h1m2 0h2m1 0h1m1 0h3m3 0h2m3 0h2m6 0h2m1 0h128m1 0h43M1 37.5h1m11 0h1m1 0h1m1 0h2m1 0h1m2 0h1m7 0h1m2 0h1m1 0h3m41 0h2m5 0h1m2 0h1m4 0h1m5 0h2m2 0h4m1 0h3m3 0h1m3 0h1m3 0h5m1 0h2m5 0h1m4 0h10m1 0h1m3 0h5m1 0h2m1 0h1m1 0h2m1 0h4m1 0h5m1 0h2m1 0h1m1 0h4m2 0h4m1 0h1m1 0h1m5 0h2m2 0h2m3 0h1m1 0h1m2 0h1m1 0h2m1 0h1m4 0h5m1 0h1m1 0h1m3 0h1m13 0h128m1 0h43M1 38.5h1m11 0h1m1 0h1m1 0h2m1 0h1m2 0h1m7 0h1m2 0h2m2 0h1m41 0h1m1 0h1m2 0h1m2 0h1m1 0h2m1 0h2m1 0h4m1 0h2m2 0h1m1 0h2m3 0h3m2 0h3m2 0h1m1 0h1m1 0h1m1 0h3m3 0h3m1 0h3m1 0h1m3 0h1m2 0h3m1 0h9m2 0h4m4 0h1m1 0h1m1 0h5m5 0h1m3 0h1m3 0h5m2 0h3m2 0h2m2 0h1m1 0h1m3 0h1m2 0h1m1 0h1m1 0h1m4 0h3m6 0h1m1 0h1m1 0h3m1 0h1m4 0h3m1 0h1m1 0h128m1 0h43M1 39.5h1m11 0h1m1 0h1m1 0h2m1 0h1m2 0h1m7 0h1m2 0h2m1 0h2m41 0h3m2 0h1m4 0h1m1 0h1m2 0h1m4 0h2m2 0h1m1 0h2m1 0h1m2 0h5m4 0h1m2 0h3m1 0h1m1 0h1m4 0h1m1 0h1m1 0h3m1 0h3m1 0h1m2 0h1m1 0h1m3 0h1m1 0h3m2 0h2m1 0h1m1 0h5m2 0h7m2 0h2m1 0h3m1 0h1m1 0h3m1 0h3m2 0h1m4 0h1m1 0h2m3 0h1m1 0h2m4 0h1m2 0h4m1 0h1m4 0h1m3 0h1m2 0h1m2 0h1m7 0h1m2 0h128m1 0h43M1 40.5h1m11 0h1m1 0h1m1 0h2m1 0h1m2 0h1m7 0h1m2 0h3m1 0h1m41 0h4m1 0h1m1 0h3m1 0h1m1 0h2m3 0h2m3 0h1m1 0h1m1 0h2m2 0h7m2 0h1m1 0h3m1 0h5m3 0h3m1 0h3m4 0h3m2 0h1m2 0h3m1 0h2m1 0h2m3 0h1m1 0h1m4 0h1m7 0h3m1 0h4m1 0h1m2 0h2m4 0h1m2 0h2m3 0h3m2 0h2m2 0h1m4 0h2m1 0h1m2 0h5m1 0h2m1 0h3m1 0h2m5 0h3m1 0h4m1 0h129m1 0h43M1 41.5h1m11 0h1m1 0h1m1 0h2m1 0h1m2 0h1m7 0h1m2 0h5m41 0h2m3 0h1m1 0h1m2 0h2m3 0h1m1 0h1m3 0h1m4 0h1m4 0h1m2 0h2m1 0h2m2 0h1m1 0h6m1 0h1m2 0h1m1 0h7m2 0h2m1 0h2m1 0h3m2 0h3m2 0h2m1 0h4m1 0h3m1 0h9m3 0h7m2 0h6m1 0h1m6 0h1m1 0h1m6 0h3m3 0h2m1 0h1m2 0h1m1 0h2m5 0h1m1 0h1m2 0h1m13 0h9m1 0h37m1 0h80m1 0h43M1 42.5h1m11 0h1m1 0h1m1 0h2m1 0h1m2 0h1m7 0h1m1 0h1m4 0h1m41 0h6m2 0h1m4 0h2m2 0h1m1 0h2m2 0h1m1 0h4m3 0h1m1 0h1m4 0h1m2 0h3m1 0h4m1 0h6m1 0h1m3 0h1m2 0h2m3 0h5m1 0h1m1 0h5m1 0h2m1 0h1m4 0h1m3 0h1m2 0h3m1 0h4m2 0h1m2 0h3m1 0h3m2 0h1m2 0h4m3 0h2m1 0h1m1 0h1m4 0h1m1 0h1m2 0h5m1 0h5m1 0h4m6 0h1m5 0h1m1 0h128m1 0h43M1 43.5h1m11 0h1m1 0h1m1 0h2m1 0h1m2 0h1m7 0h1m1 0h1m3 0h2m46 0h1m2 0h1m1 0h1m4 0h1m1 0h1m2 0h2m1 0h1m2 0h2m2 0h1m1 0h1m1 0h5m1 0h1m2 0h6m1 0h1m6 0h1m2 0h2m2 0h2m1 0h1m1 0h2m1 0h1m3 0h1m1 0h4m1 0h2m1 0h1m1 0h1m1 0h7m3 0h3m2 0h3m1 0h2m4 0h4m1 0h1m1 0h1m1 0h2m1 0h3m7 0h2m1 0h1m1 0h1m1 0h2m1 0h2m8 0h1m1 0h1m2 0h1m13 0h128m1 0h43M1 44.5h1m11 0h1m1 0h1m1 0h2m1 0h1m2 0h1m7 0h1m1 0h1m2 0h1m1 0h1m42 0h1m1 0h1m1 0h3m1 0h3m2 0h1m2 0h3m3 0h1m1 0h1m1 0h2m2 0h1m1 0h5m1 0h1m2 0h3m1 0h3m1 0h2m1 0h2m1 0h1m1 0h1m3 0h1m2 0h1m5 0h1m1 0h2m2 0h4m2 0h3m5 0h2m1 0h1m4 0h1m1 0h1m1 0h3m3 0h1m1 0h4m1 0h1m1 0h1m2 0h1m1 0h1m1 0h3m2 0h1m1 0h2m7 0h1m1 0h2m1 0h5m1 0h2m1 0h2m2 0h1m2 0h2m4 0h1m1 0h1m3 0h130m1 0h43M1 45.5h1m11 0h1m1 0h1m1 0h2m1 0h1m2 0h1m7 0h1m1 0h1m2 0h3m41 0h2m5 0h1m2 0h1m1 0h1m2 0h1m2 0h1m1 0h2m4 0h1m4 0h2m1 0h4m5 0h6m8 0h1m2 0h1m2 0h3m1 0h4m1 0h2m4 0h3m1 0h3m1 0h1m1 0h1m1 0h1m1 0h3m1 0h4m1 0h1m1 0h7m2 0h1m1 0h2m3 0h2m3 0h2m1 0h1m1 0h1m1 0h1m1 0h1m1 0h2m1 0h3m1 0h2m1 0h1m1 0h2m1 0h2m1 0h1m1 0h3m1 0h1m2 0h1m13 0h128m1 0h43M1 46.5h1m11 0h1m1 0h1m1 0h2m1 0h1m2 0h1m7 0h1m1 0h1m1 0h1m2 0h1m41 0h2m1 0h1m3 0h5m2 0h1m2 0h5m3 0h4m2 0h4m1 0h2m1 0h1m1 0h4m1 0h1m2 0h2m2 0h3m2 0h5m1 0h3m4 0h1m1 0h10m1 0h2m1 0h1m4 0h2m2 0h1m1 0h4m1 0h1m3 0h1m4 0h2m2 0h1m1 0h1m1 0h1m2 0h1m1 0h2m3 0h3m1 0h3m3 0h2m1 0h1m3 0h4m1 0h4m2 0h1m1 0h1m7 0h3m3 0h1m1 0h128m1 0h43M1 47.5h1m11 0h1m1 0h1m1 0h2m1 0h1m2 0h1m7 0h1m1 0h1m1 0h1m1 0h2m41 0h1m2 0h1m1 0h1m3 0h2m1 0h2m1 0h1m1 0h1m2 0h1m3 0h1m1 0h1m4 0h2m1 0h1m1 0h2m3 0h1m1 0h6m1 0h1m1 0h1m4 0h1m2 0h1m2 0h3m1 0h2m1 0h3m3 0h3m1 0h2m1 0h1m2 0h1m1 0h1m1 0h7m2 0h1m2 0h1m1 0h2m1 0h3m4 0h5m3 0h1m2 0h3m1 0h3m4 0h5m1 0h1m1 0h2m2 0h1m1 0h2m3 0h2m2 0h1m1 0h3m8 0h1m3 0h128m1 0h43M1 48.5h1m11 0h1m1 0h1m1 0h2m1 0h1m2 0h1m7 0h1m1 0h1m1 0h2m1 0h1m41 0h1m1 0h1m2 0h7m1 0h3m2 0h1m1 0h2m2 0h5m1 0h1m1 0h3m4 0h1m1 0h4m1 0h6m1 0h3m2 0h1m2 0h1m4 0h1m3 0h1m2 0h2m1 0h3m1 0h3m1 0h5m3 0h1m3 0h3m1 0h2m2 0h1m2 0h3m2 0h3m1 0h3m2 0h2m1 0h4m2 0h1m1 0h1m2 0h1m4 0h2m1 0h1m2 0h6m1 0h4m1 0h3m15 0h128m1 0h43M1 49.5h1m11 0h1m1 0h1m1 0h2m1 0h1m2 0h1m7 0h1m1 0h1m1 0h4m41 0h2m4 0h2m2 0h1m4 0h3m2 0h1m2 0h2m2 0h1m2 0h1m1 0h1m1 0h4m3 0h1m1 0h5m2 0h1m5 0h2m2 0h2m3 0h2m1 0h3m1 0h2m1 0h1m1 0h3m4 0h1m1 0h1m2 0h4m2 0h2m1 0h4m2 0h2m1 0h4m2 0h4m1 0h1m1 0h1m1 0h1m1 0h7m6 0h1m1 0h1m1 0h3m1 0h1m1 0h2m1 0h1m3 0h4m18 0h128m1 0h43M1 50.5h1m11 0h1m1 0h1m1 0h2m1 0h1m2 0h1m7 0h1m1 0h2m3 0h1m41 0h2m1 0h1m2 0h6m2 0h1m1 0h7m2 0h1m2 0h2m1 0h1m1 0h2m1 0h1m2 0h1m2 0h3m2 0h2m1 0h4m1 0h1m2 0h2m1 0h1m3 0h1m4 0h7m1 0h5m2 0h1m5 0h3m1 0h3m2 0h1m4 0h1m3 0h1m1 0h1m1 0h2m1 0h1m1 0h2m3 0h4m5 0h1m1 0h1m2 0h1m1 0h3m1 0h1m2 0h2m1 0h1m2 0h4m2 0h3m1 0h1m13 0h128m1 0h43M1 51.5h1m11 0h1m1 0h1m1 0h2m1 0h1m2 0h1m7 0h1m1 0h2m2 0h2m41 0h1m4 0h3m2 0h1m4 0h1m1 0h1m2 0h2m2 0h1m2 0h1m2 0h3m1 0h1m2 0h1m3 0h1m1 0h4m2 0h2m6 0h1m2 0h1m2 0h2m2 0h4m2 0h1m2 0h4m1 0h3m2 0h1m1 0h2m1 0h5m2 0h2m1 0h1m2 0h14m2 0h1m1 0h1m1 0h2m1 0h5m2 0h4m4 0h1m1 0h4m2 0h2m3 0h1m5 0h2m13 0h128m1 0h43M1 52.5h1m11 0h1m1 0h1m1 0h2m1 0h1m2 0h1m7 0h1m1 0h2m1 0h1m1 0h1m41 0h1m4 0h1m1 0h2m1 0h5m2 0h7m1 0h4m4 0h1m4 0h2m2 0h3m1 0h4m1 0h1m2 0h2m2 0h1m2 0h2m2 0h2m1 0h3m2 0h4m3 0h2m2 0h2m1 0h1m4 0h1m1 0h1m1 0h1m2 0h3m3 0h1m1 0h1m1 0h1m2 0h8m1 0h2m1 0h2m4 0h3m2 0h2m4 0h1m1 0h2m1 0h5m1 0h4m2 0h2m2 0h1m13 0h128m1 0h43M1 53.5h1m11 0h1m1 0h1m1 0h2m1 0h1m2 0h1m7 0h1m1 0h2m1 0h3m41 0h1m6 0h1m1 0h2m2 0h1m1 0h1m1 0h1m1 0h1m1 0h4m1 0h2m5 0h5m5 0h4m1 0h1m1 0h2m3 0h1m1 0h4m2 0h3m2 0h2m2 0h2m3 0h5m1 0h4m1 0h6m1 0h2m1 0h4m2 0h1m1 0h3m1 0h1m2 0h2m1 0h1m1 0h1m1 0h1m1 0h1m1 0h2m1 0h1m1 0h2m3 0h1m2 0h1m4 0h1m2 0h1m1 0h2m1 0h2m3 0h1m1 0h1m1 0h1m2 0h2m12 0h128m1 0h43M1 54.5h1m11 0h1m1 0h1m1 0h2m1 0h1m2 0h1m7 0h1m1 0h3m2 0h1m41 0h1m2 0h3m1 0h2m2 0h1m5 0h6m2 0h2m1 0h1m5 0h1m4 0h4m3 0h6m3 0h2m1 0h2m1 0h1m3 0h2m2 0h6m1 0h5m3 0h2m1 0h1m1 0h1m1 0h2m6 0h1m4 0h2m1 0h1m2 0h5m1 0h1m1 0h2m1 0h1m2 0h1m1 0h3m1 0h1m1 0h5m4 0h1m3 0h3m1 0h1m2 0h3m1 0h1m1 0h3m15 0h128m1 0h43M1 55.5h1m11 0h1m1 0h1m1 0h2m1 0h1m2 0h1m7 0h1m1 0h3m1 0h2m41 0h2m1 0h4m1 0h1m1 0h1m2 0h1m1 0h1m1 0h1m2 0h2m4 0h2m3 0h2m1 0h2m1 0h1m3 0h1m3 0h4m1 0h1m1 0h1m2 0h1m1 0h2m1 0h2m1 0h2m2 0h4m2 0h1m3 0h2m4 0h2m1 0h4m1 0h2m1 0h4m1 0h3m2 0h5m1 0h1m3 0h4m1 0h1m2 0h1m1 0h2m2 0h4m1 0h1m3 0h1m2 0h1m1 0h2m1 0h1m2 0h1m1 0h2m2 0h4m1 0h1m16 0h128m1 0h43M1 56.5h1m11 0h1m1 0h1m1 0h2m1 0h1m2 0h1m7 0h1m1 0h4m1 0h1m41 0h1m1 0h2m4 0h7m3 0h4m1 0h6m3 0h4m2 0h2m2 0h1m6 0h3m2 0h1m1 0h1m2 0h1m4 0h2m1 0h1m4 0h3m2 0h2m1 0h3m1 0h2m1 0h1m1 0h1m5 0h4m1 0h1m2 0h3m1 0h3m2 0h3m1 0h3m2 0h2m1 0h4m2 0h1m1 0h5m4 0h1m1 0h1m2 0h2m1 0h2m1 0h1m1 0h1m1 0h1m1 0h3m1 0h2m12 0h128m1 0h43M1 57.5h1m11 0h1m1 0h1m1 0h2m1 0h1m2 0h1m7 0h1m1 0h6m41 0h2m1 0h2m2 0h2m1 0h1m2 0h3m4 0h2m2 0h1m6 0h2m1 0h2m1 0h1m3 0h2m2 0h2m1 0h1m1 0h1m1 0h1m4 0h1m2 0h4m3 0h4m1 0h2m2 0h3m1 0h5m1 0h1m1 0h4m1 0h4m2 0h1m1 0h2m1 0h1m2 0h2m1 0h2m1 0h2m2 0h4m3 0h2m1 0h1m1 0h2m3 0h1m1 0h2m2 0h1m1 0h4m2 0h1m1 0h2m2 0h1m1 0h1m5 0h1m1 0h1m11 0h128m1 0h43M1 58.5h1m11 0h1m1 0h1m1 0h2m1 0h1m2 0h1m7 0h2m5 0h1m41 0h4m1 0h1m1 0h1m1 0h1m1 0h2m1 0h1m2 0h4m4 0h5m1 0h4m1 0h1m2 0h1m2 0h1m3 0h6m1 0h2m6 0h3m1 0h2m1 0h1m2 0h1m1 0h2m1 0h3m2 0h1m2 0h2m1 0h1m4 0h1m3 0h2m1 0h2m3 0h2m1 0h1m1 0h1m3 0h5m3 0h2m1 0h1m1 0h2m3 0h3m1 0h2m3 0h2m1 0h1m2 0h5m2 0h2m2 0h4m1 0h1m5 0h2m1 0h1m2 0h1m1 0h128m1 0h43M1 59.5h1m11 0h1m1 0h1m1 0h2m1 0h1m2 0h1m7 0h2m4 0h2m41 0h1m4 0h1m1 0h3m3 0h1m1 0h3m2 0h2m2 0h1m1 0h2m3 0h1m2 0h1m1 0h3m1 0h1m4 0h4m5 0h1m2 0h1m1 0h1m1 0h1m1 0h3m2 0h3m1 0h2m1 0h6m3 0h3m1 0h4m1 0h4m2 0h2m5 0h2m1 0h3m1 0h4m1 0h1m1 0h3m1 0h2m1 0h1m1 0h2m4 0h3m2 0h1m1 0h1m1 0h2m1 0h2m1 0h2m2 0h3m1 0h2m2 0h1m13 0h128m1 0h43M1 60.5h1m11 0h1m1 0h1m1 0h2m1 0h1m2 0h1m7 0h2m3 0h1m1 0h1m41 0h1m3 0h2m1 0h5m2 0h1m3 0h2m1 0h1m1 0h1m1 0h2m6 0h3m2 0h3m1 0h1m3 0h4m1 0h1m1 0h3m1 0h2m1 0h4m2 0h1m2 0h2m1 0h3m1 0h2m9 0h1m4 0h1m3 0h5m1 0h1m2 0h3m1 0h1m1 0h4m1 0h3m2 0h2m1 0h4m2 0h1m1 0h1m2 0h1m2 0h1m2 0h1m1 0h1m2 0h1m1 0h3m1 0h2m2 0h5m1 0h1m6 0h1m2 0h2m2 0h128m1 0h43M1 61.5h1m11 0h1m1 0h1m1 0h2m1 0h1m2 0h1m7 0h2m3 0h3m41 0h1m5 0h2m2 0h1m4 0h1m1 0h1m2 0h2m2 0h1m1 0h2m3 0h2m1 0h4m7 0h1m1 0h1m5 0h1m1 0h3m1 0h2m2 0h5m1 0h2m1 0h2m1 0h3m1 0h1m1 0h1m1 0h1m2 0h1m1 0h9m3 0h3m1 0h1m2 0h4m2 0h4m5 0h1m1 0h2m1 0h1m1 0h3m5 0h1m2 0h3m1 0h2m2 0h1m1 0h1m5 0h2m1 0h1m2 0h1m13 0h128m1 0h43M1 62.5h1m11 0h1m1 0h1m1 0h2m1 0h1m2 0h1m7 0h2m2 0h1m2 0h1m41 0h1m2 0h1m1 0h1m1 0h5m2 0h1m2 0h5m4 0h3m2 0h6m5 0h1m3 0h1m1 0h1m1 0h2m1 0h1m1 0h2m2 0h1m1 0h1m1 0h1m1 0h2m1 0h1m1 0h5m1 0h2m1 0h2m3 0h2m6 0h1m1 0h1m3 0h1m1 0h2m1 0h1m2 0h2m1 0h1m2 0h1m1 0h1m2 0h2m5 0h4m2 0h3m3 0h1m2 0h1m1 0h1m1 0h1m2 0h2m2 0h2m1 0h4m2 0h4m3 0h2m2 0h3m1 0h1m1 0h128m1 0h43M1 63.5h1m11 0h1m1 0h1m1 0h2m1 0h1m2 0h1m7 0h2m2 0h1m1 0h2m41 0h1m6 0h1m3 0h2m2 0h1m3 0h6m1 0h1m3 0h1m1 0h1m1 0h2m2 0h1m6 0h3m2 0h2m5 0h1m2 0h2m1 0h3m1 0h4m1 0h1m3 0h6m2 0h1m1 0h1m1 0h1m1 0h8m1 0h4m2 0h1m1 0h3m3 0h1m1 0h4m1 0h1m1 0h2m1 0h3m1 0h1m1 0h1m1 0h2m2 0h1m2 0h1m1 0h1m1 0h2m4 0h2m1 0h2m1 0h1m2 0h1m2 0h2m6 0h2m4 0h128m1 0h43M1 64.5h1m11 0h1m1 0h1m1 0h2m1 0h1m2 0h1m7 0h2m2 0h2m1 0h1m41 0h1m2 0h1m3 0h5m2 0h1m3 0h4m3 0h1m2 0h2m1 0h2m1 0h1m3 0h5m7 0h2m1 0h3m2 0h2m1 0h2m2 0h1m1 0h1m2 0h2m2 0h1m2 0h2m1 0h2m4 0h3m2 0h1m4 0h7m1 0h1m2 0h1m1 0h1m2 0h3m2 0h1m2 0h2m2 0h4m2 0h1m1 0h2m2 0h1m4 0h1m4 0h2m1 0h2m1 0h5m1 0h3m1 0h1m3 0h3m1 0h2m2 0h1m1 0h128m1 0h43M1 65.5h1m11 0h1m1 0h1m1 0h2m1 0h1m2 0h1m7 0h2m2 0h4m41 0h2m1 0h1m1 0h1m1 0h1m2 0h2m1 0h1m1 0h3m2 0h2m1 0h2m2 0h1m3 0h3m1 0h3m3 0h1m3 0h4m3 0h1m2 0h3m1 0h2m2 0h3m1 0h3m3 0h2m1 0h6m1 0h2m1 0h1m1 0h3m1 0h2m1 0h2m2 0h2m1 0h7m1 0h1m3 0h5m1 0h2m2 0h1m3 0h3m2 0h1m3 0h2m3 0h1m1 0h1m2 0h2m1 0h2m3 0h2m1 0h2m2 0h2m9 0h1m2 0h128m1 0h43M1 66.5h1m11 0h1m1 0h1m1 0h2m1 0h1m2 0h1m7 0h2m1 0h1m3 0h1m41 0h1m2 0h1m1 0h1m1 0h3m1 0h1m1 0h2m1 0h3m1 0h3m2 0h1m1 0h3m3 0h2m1 0h1m2 0h1m2 0h1m4 0h7m4 0h1m1 0h2m2 0h2m3 0h3m1 0h2m1 0h2m1 0h3m2 0h2m1 0h1m3 0h2m1 0h1m1 0h1m2 0h1m3 0h2m4 0h1m1 0h6m1 0h1m2 0h1m1 0h5m2 0h1m1 0h1m8 0h1m1 0h1m3 0h2m1 0h1m1 0h5m2 0h2m1 0h2m1 0h2m1 0h3m5 0h128m1 0h43M1 67.5h1m11 0h1m1 0h1m1 0h2m1 0h1m2 0h1m7 0h2m1 0h1m2 0h2m41 0h3m2 0h2m2 0h1m7 0h1m2 0h1m3 0h1m2 0h2m2 0h1m3 0h2m4 0h1m3 0h4m1 0h1m6 0h2m1 0h2m2 0h4m1 0h2m2 0h1m3 0h1m1 0h3m1 0h2m1 0h1m2 0h1m1 0h4m1 0h1m2 0h1m1 0h1m1 0h8m3 0h1m2 0h4m1 0h1m2 0h1m1 0h1m1 0h3m1 0h1m2 0h3m1 0h1m1 0h1m1 0h2m2 0h1m1 0h2m1 0h1m1 0h2m5 0h2m2 0h1m9 0h128m1 0h43M1 68.5h1m11 0h1m1 0h1m1 0h2m1 0h1m2 0h1m7 0h2m1 0h1m1 0h1m1 0h1m46 0h1m1 0h1m1 0h3m2 0h1m2 0h3m1 0h1m4 0h3m4 0h2m3 0h3m1 0h2m2 0h4m1 0h1m1 0h3m1 0h2m2 0h1m3 0h1m3 0h2m1 0h1m1 0h2m2 0h5m2 0h1m1 0h1m4 0h1m1 0h1m1 0h1m2 0h6m2 0h1m1 0h1m1 0h4m1 0h1m1 0h1m2 0h1m2 0h4m2 0h1m1 0h2m1 0h1m2 0h1m1 0h2m1 0h1m2 0h2m1 0h1m2 0h3m1 0h3m2 0h2m3 0h4m3 0h131m1 0h43M1 69.5h1m11 0h1m1 0h1m1 0h2m1 0h1m2 0h1m7 0h2m1 0h1m1 0h3m41 0h2m5 0h1m7 0h1m4 0h1m2 0h2m1 0h1m2 0h4m2 0h3m3 0h1m1 0h1m1 0h2m1 0h1m1 0h1m4 0h1m1 0h2m1 0h2m2 0h3m2 0h4m4 0h2m4 0h2m1 0h1m1 0h8m3 0h2m1 0h1m3 0h5m1 0h2m1 0h3m1 0h4m1 0h3m2 0h1m1 0h1m2 0h1m2 0h1m2 0h1m4 0h1m2 0h1m1 0h2m2 0h2m2 0h2m1 0h1m1 0h1m12 0h128m1 0h43M1 70.5h1m11 0h1m1 0h1m1 0h2m1 0h1m2 0h1m7 0h2m1 0h2m2 0h1m41 0h1m2 0h3m1 0h5m1 0h3m1 0h3m2 0h1m2 0h2m1 0h1m2 0h1m1 0h1m5 0h1m1 0h3m2 0h1m2 0h4m1 0h1m6 0h1m3 0h2m4 0h1m2 0h1m1 0h4m1 0h1m2 0h4m4 0h1m1 0h1m1 0h2m1 0h3m2 0h2m1 0h1m1 0h1m2 0h1m1 0h2m1 0h2m2 0h1m3 0h1m6 0h1m1 0h3m1 0h2m1 0h1m1 0h1m2 0h1m1 0h3m1 0h2m2 0h1m2 0h2m1 0h1m13 0h128m1 0h43M1 71.5h1m11 0h1m1 0h1m1 0h2m1 0h1m2 0h1m7 0h2m1 0h2m1 0h2m41 0h2m3 0h1m4 0h1m1 0h1m2 0h1m1 0h1m1 0h3m1 0h2m1 0h2m3 0h1m3 0h3m1 0h1m1 0h1m1 0h1m1 0h3m2 0h1m2 0h1m3 0h2m1 0h2m5 0h4m1 0h2m2 0h7m1 0h1m1 0h1m1 0h7m1 0h1m2 0h4m1 0h1m1 0h5m2 0h2m1 0h1m1 0h1m2 0h4m2 0h1m1 0h2m4 0h1m1 0h1m2 0h1m1 0h1m1 0h2m2 0h1m1 0h2m3 0h1m1 0h2m1 0h1m1 0h1m13 0h128m1 0h43M1 72.5h1m11 0h1m1 0h1m1 0h2m1 0h1m2 0h1m7 0h2m1 0h3m1 0h1m41 0h1m6 0h1m1 0h1m1 0h5m1 0h5m2 0h6m2 0h2m1 0h1m3 0h1m1 0h3m2 0h6m1 0h4m1 0h2m1 0h1m3 0h1m5 0h7m2 0h2m5 0h1m2 0h1m1 0h1m3 0h1m4 0h1m3 0h2m4 0h8m1 0h1m3 0h4m2 0h3m1 0h3m1 0h2m1 0h1m1 0h1m2 0h5m1 0h4m3 0h2m15 0h128m1 0h43M1 73.5h1m11 0h1m1 0h1m1 0h2m1 0h1m2 0h1m7 0h2m1 0h5m41 0h2m1 0h1m3 0h1m2 0h1m2 0h1m1 0h4m2 0h1m2 0h1m1 0h2m5 0h5m5 0h1m1 0h4m1 0h2m2 0h1m2 0h5m3 0h1m1 0h2m1 0h1m2 0h1m3 0h3m1 0h1m1 0h2m1 0h1m1 0h9m2 0h3m2 0h2m1 0h10m1 0h1m1 0h1m1 0h1m1 0h3m2 0h1m5 0h3m2 0h1m1 0h1m2 0h1m1 0h2m1 0h1m2 0h1m1 0h2m1 0h2m16 0h128m1 0h43M1 74.5h1m11 0h1m1 0h1m1 0h2m1 0h1m2 0h1m7 0h3m4 0h1m41 0h1m2 0h1m1 0h1m1 0h5m1 0h1m3 0h2m1 0h4m1 0h1m1 0h1m1 0h1m1 0h1m1 0h2m1 0h1m1 0h2m2 0h2m4 0h4m1 0h2m1 0h1m4 0h2m1 0h3m3 0h5m1 0h3m1 0h2m2 0h2m1 0h1m3 0h2m3 0h2m1 0h3m1 0h1m1 0h1m1 0h1m4 0h1m1 0h4m1 0h1m2 0h1m1 0h2m4 0h1m1 0h1m2 0h1m3 0h3m1 0h1m1 0h6m1 0h4m2 0h3m1 0h2m12 0h128m1 0h43M1 75.5h1m11 0h1m1 0h1m1 0h2m1 0h1m2 0h1m7 0h3m3 0h2m41 0h1m1 0h1m1 0h2m1 0h1m1 0h1m2 0h1m2 0h1m4 0h1m2 0h2m1 0h1m2 0h1m1 0h1m2 0h2m1 0h1m1 0h1m1 0h1m1 0h1m1 0h4m1 0h1m4 0h3m2 0h1m1 0h6m1 0h2m1 0h8m1 0h1m1 0h2m1 0h1m1 0h7m1 0h1m3 0h1m1 0h1m1 0h6m3 0h1m1 0h1m1 0h2m1 0h3m1 0h2m1 0h4m2 0h3m1 0h1m4 0h1m1 0h5m1 0h2m1 0h1m1 0h4m3 0h1m13 0h128m1 0h43M1 76.5h1m11 0h1m1 0h1m1 0h2m1 0h1m2 0h1m7 0h3m2 0h1m1 0h1m41 0h2m1 0h1m1 0h6m3 0h1m2 0h1m1 0h3m1 0h1m2 0h2m3 0h1m1 0h2m2 0h1m1 0h1m1 0h3m2 0h1m1 0h2m1 0h1m6 0h2m5 0h1m2 0h1m1 0h5m1 0h1m1 0h4m2 0h4m2 0h2m1 0h2m2 0h5m2 0h1m1 0h2m1 0h1m1 0h2m1 0h1m1 0h2m3 0h2m1 0h2m2 0h1m1 0h1m1 0h2m1 0h2m1 0h1m1 0h2m1 0h1m2 0h5m1 0h2m2 0h3m4 0h1m12 0h128m1 0h43M1 78.5h1m11 0h1m1 0h1m1 0h2m1 0h1m2 0h1m7 0h3m1 0h1m2 0h1m43 0h2m3 0h5m2 0h1m2 0h5m2 0h4m1 0h1m6 0h2m1 0h2m1 0h2m2 0h4m1 0h1m1 0h3m2 0h1m3 0h1m2 0h1m5 0h4m1 0h1m2 0h3m2 0h2m1 0h1m4 0h2m1 0h3m1 0h1m8 0h2m4 0h6m1 0h6m3 0h3m2 0h2m3 0h2m1 0h1m1 0h2m1 0h3m1 0h2m1 0h2m1 0h3m5 0h1m2 0h2m1 0h2m1 0h129m1 0h43M1 79.5h1m11 0h1m1 0h1m1 0h2m1 0h1m2 0h1m7 0h3m1 0h1m1 0h2m41 0h2m2 0h2m2 0h1m1 0h1m1 0h1m2 0h1m5 0h1m2 0h3m4 0h2m1 0h1m6 0h3m1 0h2m1 0h1m1 0h1m6 0h1m2 0h2m1 0h2m1 0h8m2 0h3m1 0h1m2 0h1m1 0h6m4 0h3m1 0h2m1 0h1m1 0h3m1 0h4m1 0h1m2 0h3m1 0h1m1 0h1m1 0h1m2 0h1m3 0h1m5 0h1m4 0h2m6 0h4m1 0h2m2 0h1m2 0h1m4 0h1m2 0h1m5 0h128m1 0h43M1 80.5h1m11 0h1m1 0h1m1 0h2m1 0h1m2 0h1m7 0h3m1 0h2m1 0h1m41 0h1m2 0h1m1 0h1m3 0h3m5 0h4m4 0h8m1 0h1m3 0h2m1 0h3m2 0h1m2 0h3m2 0h3m1 0h1m3 0h1m2 0h4m1 0h1m1 0h4m1 0h2m1 0h2m2 0h2m1 0h1m3 0h2m1 0h1m3 0h1m1 0h2m1 0h1m1 0h1m1 0h1m1 0h1m2 0h3m1 0h1m1 0h1m2 0h1m2 0h7m1 0h1m1 0h1m1 0h1m2 0h3m1 0h1m1 0h2m1 0h6m2 0h1m1 0h4m1 0h1m1 0h2m2 0h1m4 0h1m1 0h128m1 0h43M1 81.5h1m11 0h1m1 0h1m1 0h2m1 0h1m2 0h1m7 0h3m1 0h4m41 0h2m2 0h1m2 0h1m2 0h1m1 0h1m2 0h3m2 0h2m1 0h2m3 0h1m2 0h2m1 0h1m4 0h3m1 0h1m1 0h4m8 0h1m3 0h2m1 0h2m1 0h2m1 0h1m2 0h1m4 0h4m1 0h2m1 0h1m1 0h2m1 0h4m1 0h1m2 0h1m2 0h1m1 0h2m2 0h3m1 0h2m1 0h3m2 0h1m4 0h1m1 0h1m1 0h3m3 0h1m1 0h1m1 0h2m1 0h4m2 0h1m1 0h2m2 0h3m2 0h1m2 0h2m12 0h128m1 0h43M1 82.5h1m11 0h1m1 0h1m1 0h2m1 0h1m2 0h1m7 0h4m3 0h1m41 0h2m2 0h2m1 0h3m1 0h2m1 0h2m1 0h1m1 0h4m1 0h4m4 0h2m2 0h1m2 0h1m4 0h1m1 0h2m2 0h1m1 0h1m2 0h1m2 0h1m2 0h1m3 0h1m4 0h6m1 0h1m1 0h2m4 0h1m6 0h1m3 0h1m2 0h1m1 0h1m2 0h1m1 0h1m2 0h1m2 0h1m1 0h1m1 0h3m1 0h1m3 0h2m1 0h1m2 0h1m1 0h1m2 0h1m2 0h4m2 0h7m1 0h2m1 0h2m2 0h2m1 0h1m5 0h1m7 0h128m1 0h43M1 83.5h1m11 0h1m1 0h1m1 0h2m1 0h1m2 0h1m7 0h4m2 0h2m42 0h1m2 0h2m1 0h1m2 0h1m1 0h1m2 0h1m4 0h5m2 0h1m1 0h1m2 0h6m2 0h2m2 0h2m2 0h1m1 0h1m1 0h1m4 0h1m2 0h2m1 0h3m2 0h1m1 0h1m1 0h2m2 0h2m2 0h2m1 0h2m1 0h1m1 0h5m3 0h1m2 0h1m2 0h3m2 0h1m1 0h6m1 0h1m1 0h1m1 0h1m4 0h1m1 0h1m1 0h2m3 0h5m1 0h1m1 0h1m1 0h2m2 0h1m1 0h2m1 0h1m1 0h3m1 0h1m1 0h3m6 0h1m5 0h128m1 0h43M1 84.5h1m11 0h1m1 0h1m1 0h2m1 0h1m2 0h1m7 0h4m1 0h1m1 0h1m41 0h1m2 0h1m1 0h6m2 0h2m2 0h3m1 0h2m2 0h3m1 0h1m3 0h1m4 0h5m1 0h1m2 0h2m2 0h1m1 0h4m1 0h1m2 0h1m3 0h1m4 0h3m1 0h1m1 0h5m3 0h2m4 0h1m1 0h2m1 0h2m4 0h2m2 0h1m6 0h1m3 0h4m1 0h7m2 0h1m1 0h4m5 0h1m4 0h2m1 0h7m2 0h5m4 0h3m4 0h1m1 0h128m1 0h43M1 85.5h1m11 0h1m1 0h1m1 0h2m1 0h1m2 0h1m7 0h4m1 0h3m41 0h3m1 0h2m1 0h1m2 0h6m1 0h1m2 0h2m2 0h1m1 0h2m3 0h1m3 0h1m1 0h1m1 0h3m2 0h4m2 0h1m5 0h3m1 0h8m1 0h4m3 0h2m1 0h3m1 0h2m1 0h1m1 0h1m1 0h7m2 0h2m1 0h5m1 0h1m1 0h1m1 0h1m3 0h3m1 0h5m2 0h1m1 0h3m1 0h1m1 0h3m2 0h1m1 0h1m4 0h2m1 0h2m1 0h5m1 0h2m1 0h1m13 0h128m1 0h43M1 86.5h1m11 0h1m1 0h1m1 0h2m1 0h1m2 0h1m7 0h5m2 0h1m41 0h4m1 0h1m1 0h2m2 0h2m1 0h1m2 0h6m2 0h4m3 0h4m1 0h3m2 0h1m1 0h1m1 0h6m1 0h3m2 0h1m6 0h2m2 0h1m2 0h3m3 0h3m3 0h2m1 0h1m4 0h1m2 0h2m1 0h4m2 0h2m1 0h1m1 0h1m2 0h7m2 0h2m2 0h4m3 0h1m2 0h2m2 0h1m1 0h1m1 0h1m2 0h5m1 0h9m2 0h1m12 0h128m1 0h43M1 87.5h1m11 0h1m1 0h1m1 0h2m1 0h1m2 0h1m7 0h5m1 0h2m41 0h1m4 0h1m1 0h1m2 0h1m4 0h1m1 0h1m2 0h2m2 0h1m1 0h2m1 0h10m2 0h1m2 0h5m2 0h2m2 0h1m1 0h1m2 0h2m2 0h1m3 0h1m1 0h1m1 0h2m2 0h7m3 0h1m1 0h2m1 0h6m2 0h1m2 0h1m1 0h5m1 0h1m2 0h2m1 0h1m1 0h1m8 0h5m2 0h1m1 0h2m1 0h2m1 0h1m1 0h2m2 0h1m2 0h1m3 0h2m2 0h1m16 0h128m1 0h43M1 88.5h1m11 0h1m1 0h1m1 0h2m1 0h1m2 0h1m7 0h6m1 0h1m41 0h1m2 0h3m1 0h5m6 0h3m4 0h3m1 0h1m2 0h1m1 0h3m2 0h1m4 0h1m1 0h2m1 0h3m1 0h4m1 0h1m2 0h2m2 0h1m4 0h1m1 0h3m2 0h1m1 0h3m2 0h2m1 0h1m1 0h1m2 0h1m3 0h1m2 0h1m4 0h1m1 0h1m2 0h1m1 0h4m1 0h1m1 0h1m2 0h1m2 0h4m2 0h1m1 0h1m6 0h1m1 0h1m1 0h2m1 0h1m1 0h3m1 0h1m1 0h3m2 0h3m14 0h128m1 0h43M1 89.5h1m11 0h1m1 0h1m1 0h2m1 0h1m2 0h1m7 0h8m41 0h1m5 0h1m3 0h1m1 0h1m2 0h1m1 0h1m2 0h1m3 0h1m2 0h1m1 0h1m1 0h8m5 0h6m7 0h1m2 0h2m1 0h3m1 0h3m2 0h2m3 0h5m4 0h1m1 0h4m1 0h5m1 0h1m1 0h2m2 0h1m1 0h5m1 0h1m1 0h4m1 0h2m2 0h1m2 0h1m1 0h5m2 0h2m2 0h6m5 0h1m2 0h1m1 0h5m1 0h1m13 0h128m1 0h43M1 90.5h1m11 0h1m1 0h1m1 0h2m1 0h1m2 0h1m7 0h1m6 0h1m8 0h1m32 0h1m3 0h3m1 0h1m2 0h1m1 0h2m2 0h2m1 0h4m1 0h4m2 0h4m4 0h1m2 0h1m1 0h1m2 0h5m1 0h4m1 0h2m1 0h2m5 0h1m1 0h5m2 0h8m2 0h1m2 0h3m1 0h1m1 0h1m1 0h1m1 0h1m4 0h3m1 0h1m2 0h2m1 0h4m2 0h1m1 0h4m2 0h3m1 0h1m1 0h2m3 0h2m1 0h1m2 0h4m6 0h1m1 0h1m1 0h1m1 0h1m13 0h128m1 0h43M1 91.5h1m11 0h1m1 0h1m1 0h2m1 0h1m2 0h1m7 0h1m5 0h2m8 0h1m32 0h3m1 0h2m1 0h1m2 0h1m2 0h1m1 0h3m3 0h1m2 0h1m1 0h2m2 0h2m2 0h4m3 0h1m2 0h3m1 0h1m1 0h1m1 0h2m3 0h1m2 0h3m1 0h6m1 0h3m4 0h2m1 0h1m1 0h2m1 0h1m1 0h4m1 0h4m1 0h1m2 0h4m2 0h2m4 0h1m1 0h4m1 0h1m3 0h2m1 0h1m2 0h3m3 0h2m1 0h1m2 0h4m2 0h1m2 0h3m1 0h2m2 0h1m2 0h1m13 0h128m1 0h43M1 92.5h1m11 0h1m1 0h1m1 0h2m1 0h1m2 0h1m7 0h1m4 0h1m1 0h1m8 0h1m32 0h6m1 0h4m3 0h9m4 0h2m1 0h1m1 0h5m2 0h1m2 0h1m1 0h1m2 0h5m2 0h3m1 0h1m2 0h1m4 0h1m4 0h1m1 0h2m1 0h1m2 0h1m1 0h1m2 0h2m1 0h1m2 0h2m2 0h1m1 0h2m1 0h4m1 0h1m2 0h1m1 0h1m1 0h2m1 0h5m2 0h1m2 0h4m4 0h1m2 0h2m2 0h1m1 0h1m1 0h1m2 0h2m4 0h5m1 0h3m15 0h128m1 0h43M1 93.5h1m11 0h1m1 0h1m1 0h2m1 0h1m2 0h1m7 0h1m4 0h3m8 0h1m32 0h2m3 0h1m1 0h2m1 0h1m1 0h1m2 0h2m4 0h1m1 0h2m2 0h1m8 0h3m5 0h3m5 0h1m2 0h1m1 0h1m2 0h2m1 0h3m1 0h4m1 0h2m3 0h1m1 0h1m4 0h3m1 0h6m1 0h2m2 0h1m1 0h2m1 0h6m4 0h2m1 0h2m1 0h3m1 0h2m1 0h1m1 0h3m3 0h3m4 0h3m1 0h1m4 0h2m2 0h2m2 0h1m16 0h128m1 0h43M1 94.5h1m11 0h1m1 0h1m1 0h2m1 0h1m2 0h1m7 0h1m3 0h1m2 0h1m8 0h1m32 0h1m1 0h1m4 0h2m1 0h2m2 0h1m2 0h2m1 0h1m4 0h4m2 0h4m4 0h1m2 0h1m1 0h1m1 0h3m1 0h1m2 0h3m2 0h1m2 0h2m2 0h2m4 0h4m1 0h5m2 0h3m6 0h1m3 0h2m1 0h4m6 0h1m1 0h3m1 0h1m2 0h5m2 0h3m1 0h2m1 0h2m1 0h2m3 0h2m1 0h1m2 0h2m1 0h1m3 0h4m1 0h3m1 0h2m12 0h128m1 0h43M1 95.5h1m11 0h1m1 0h1m1 0h2m1 0h1m2 0h1m7 0h1m3 0h1m1 0h2m8 0h1m32 0h2m1 0h3m1 0h1m2 0h1m1 0h1m1 0h2m1 0h1m2 0h3m1 0h1m1 0h1m5 0h1m1 0h2m1 0h2m2 0h1m2 0h5m1 0h1m3 0h1m2 0h1m2 0h1m2 0h3m1 0h4m2 0h1m2 0h1m1 0h1m1 0h2m2 0h1m1 0h1m1 0h2m1 0h1m2 0h2m1 0h1m1 0h6m2 0h5m2 0h4m2 0h1m3 0h1m2 0h3m1 0h1m3 0h3m1 0h2m1 0h1m1 0h2m1 0h1m2 0h2m1 0h4m5 0h1m13 0h128m1 0h43M1 96.5h1m11 0h1m1 0h1m1 0h2m1 0h1m2 0h1m7 0h1m3 0h2m1 0h1m8 0h1m32 0h2m1 0h1m5 0h4m1 0h1m1 0h8m3 0h2m2 0h4m1 0h1m1 0h2m2 0h3m1 0h1m2 0h3m1 0h4m6 0h1m1 0h1m3 0h1m1 0h4m2 0h2m1 0h2m1 0h3m1 0h1m1 0h1m2 0h1m1 0h1m1 0h7m1 0h1m2 0h1m1 0h1m2 0h3m1 0h3m2 0h1m2 0h5m1 0h3m2 0h2m2 0h1m1 0h1m4 0h2m1 0h1m2 0h2m1 0h1m3 0h2m4 0h1m3 0h1m1 0h2m1 0h1m1 0h57m1 0h70m1 0h43M1 97.5h1m11 0h1m1 0h1m1 0h2m1 0h1m2 0h1m7 0h1m3 0h4m8 0h1m32 0h1m4 0h1m3 0h2m2 0h1m3 0h1m3 0h1m2 0h1m1 0h2m6 0h4m5 0h6m1 0h1m6 0h1m1 0h7m1 0h1m1 0h2m1 0h2m1 0h1m1 0h1m1 0h1m1 0h1m1 0h2m1 0h1m2 0h4m1 0h3m4 0h2m1 0h1m3 0h4m1 0h2m3 0h1m1 0h2m2 0h2m2 0h2m1 0h1m5 0h1m1 0h2m3 0h2m2 0h1m1 0h2m2 0h1m1 0h1m1 0h2m2 0h1m13 0h128m1 0h43M1 98.5h1m11 0h1m1 0h1m1 0h2m1 0h1m2 0h1m7 0h1m2 0h1m3 0h1m8 0h1m33 0h1m1 0h3m2 0h4m2 0h1m3 0h3m2 0h1m1 0h7m1 0h2m8 0h2m1 0h3m1 0h2m1 0h3m3 0h1m2 0h2m1 0h1m1 0h1m1 0h6m1 0h4m1 0h1m2 0h2m1 0h1m2 0h1m1 0h1m3 0h1m2 0h3m1 0h1m5 0h1m2 0h1m1 0h1m1 0h1m1 0h2m1 0h2m2 0h1m4 0h1m1 0h1m2 0h1m5 0h1m4 0h1m2 0h1m2 0h1m2 0h1m2 0h2m1 0h2m2 0h3m5 0h1m1 0h129m1 0h43M1 99.5h1m11 0h1m1 0h1m1 0h2m1 0h1m2 0h1m7 0h1m2 0h1m2 0h2m8 0h1m32 0h1m1 0h1m2 0h4m4 0h1m1 0h3m2 0h5m1 0h2m1 0h1m1 0h1m2 0h5m2 0h1m1 0h3m1 0h2m1 0h1m7 0h1m1 0h2m1 0h3m1 0h2m3 0h2m1 0h1m2 0h3m1 0h5m1 0h4m1 0h1m1 0h2m2 0h2m2 0h2m1 0h2m1 0h2m2 0h6m1 0h1m3 0h4m1 0h3m5 0h2m1 0h1m1 0h1m2 0h1m2 0h1m1 0h2m3 0h2m1 0h3m1 0h2m12 0h128m1 0h43M1 100.5h1m11 0h1m1 0h1m1 0h2m1 0h1m2 0h1m7 0h1m2 0h1m1 0h1m1 0h1m8 0h1m35 0h1m1 0h1m1 0h2m1 0h2m1 0h2m3 0h4m3 0h1m1 0h2m4 0h1m1 0h1m1 0h3m1 0h4m1 0h1m1 0h4m1 0h4m1 0h1m2 0h1m3 0h1m1 0h1m2 0h1m1 0h1m1 0h1m1 0h4m1 0h1m2 0h2m1 0h1m2 0h1m1 0h1m3 0h2m1 0h2m2 0h5m1 0h1m1 0h1m1 0h2m1 0h1m2 0h1m1 0h1m2 0h3m3 0h1m5 0h1m4 0h1m1 0h1m2 0h5m1 0h2m1 0h2m1 0h2m1 0h1m1 0h1m3 0h3m2 0h3m1 0h128m1 0h43M1 101.5h1m11 0h1m1 0h1m1 0h2m1 0h1m2 0h1m7 0h1m2 0h1m1 0h3m8 0h1m32 0h1m1 0h1m4 0h1m2 0h2m1 0h1m1 0h1m4 0h2m2 0h1m1 0h2m3 0h8m4 0h4m1 0h1m1 0h1m4 0h3m2 0h1m1 0h2m4 0h3m2 0h1m2 0h6m1 0h2m1 0h1m1 0h1m1 0h6m3 0h1m1 0h2m2 0h6m1 0h3m2 0h1m2 0h1m3 0h2m1 0h1m1 0h2m6 0h1m2 0h1m1 0h1m1 0h2m2 0h2m1 0h1m2 0h3m4 0h2m13 0h128m1 0h43M1 102.5h1m11 0h1m1 0h1m1 0h2m1 0h1m2 0h1m7 0h1m2 0h2m2 0h1m8 0h1m32 0h1m2 0h1m1 0h4m2 0h1m2 0h1m2 0h2m1 0h2m3 0h4m3 0h1m1 0h1m4 0h1m2 0h3m1 0h1m1 0h4m2 0h1m1 0h4m1 0h1m6 0h1m2 0h6m1 0h4m2 0h2m1 0h1m4 0h1m1 0h1m4 0h3m2 0h2m1 0h1m1 0h2m1 0h1m1 0h5m2 0h1m1 0h5m2 0h1m1 0h1m2 0h2m1 0h1m2 0h1m1 0h1m2 0h5m1 0h7m1 0h1m1 0h1m3 0h1m2 0h1m1 0h1m2 0h130m1 0h43M1 103.5h1m11 0h1m1 0h1m1 0h2m1 0h1m2 0h1m7 0h1m2 0h2m1 0h2m8 0h1m32 0h1m2 0h5m3 0h1m2 0h2m1 0h1m5 0h2m1 0h2m5 0h3m5 0h1m1 0h6m1 0h1m6 0h1m2 0h2m2 0h7m2 0h1m2 0h4m3 0h2m1 0h1m1 0h2m1 0h6m2 0h1m1 0h2m1 0h7m2 0h7m3 0h3m1 0h1m2 0h2m1 0h1m1 0h1m1 0h1m2 0h1m1 0h1m1 0h2m1 0h2m1 0h1m4 0h2m4 0h1m9 0h1m4 0h91m1 0h36m1 0h43M1 104.5h1m11 0h1m1 0h1m1 0h2m1 0h1m2 0h1m7 0h1m2 0h3m1 0h1m8 0h1m32 0h1m2 0h3m1 0h3m1 0h2m5 0h4m4 0h5m1 0h3m4 0h2m1 0h3m1 0h3m1 0h2m1 0h2m3 0h1m2 0h2m2 0h1m4 0h6m2 0h2m1 0h1m5 0h1m2 0h1m1 0h1m2 0h2m1 0h2m2 0h1m1 0h2m1 0h1m1 0h1m3 0h4m1 0h1m1 0h2m1 0h1m1 0h1m1 0h1m2 0h1m1 0h2m1 0h2m1 0h4m4 0h5m1 0h1m1 0h3m1 0h2m2 0h1m2 0h1m2 0h2m3 0h2m1 0h128m1 0h12m1 0h30M1 105.5h1m11 0h1m1 0h1m1 0h2m1 0h1m2 0h1m7 0h1m2 0h5m8 0h1m34 0h1m2 0h1m1 0h1m1 0h2m2 0h1m1 0h1m1 0h1m2 0h2m1 0h2m1 0h1m2 0h1m2 0h6m1 0h1m1 0h1m1 0h3m1 0h1m2 0h2m1 0h1m3 0h1m6 0h6m2 0h2m4 0h1m1 0h2m2 0h3m1 0h4m1 0h4m2 0h2m1 0h2m1 0h2m1 0h4m1 0h1m3 0h2m1 0h7m2 0h3m5 0h1m2 0h1m1 0h1m1 0h2m2 0h1m1 0h3m1 0h3m1 0h1m3 0h2m12 0h128m1 0h43M1 106.5h1m11 0h1m1 0h1m1 0h2m1 0h1m2 0h1m7 0h1m1 0h1m4 0h1m8 0h1m34 0h1m1 0h2m1 0h2m1 0h5m2 0h5m3 0h4m2 0h5m4 0h1m1 0h3m1 0h11m2 0h1m5 0h2m1 0h1m1 0h2m1 0h2m2 0h3m1 0h2m1 0h2m1 0h1m1 0h2m1 0h1m2 0h2m2 0h1m1 0h1m1 0h7m4 0h1m1 0h2m1 0h1m1 0h2m1 0h5m1 0h1m1 0h1m2 0h2m4 0h1m4 0h11m1 0h2m2 0h1m13 0h128m1 0h43M1 107.5h1m11 0h1m1 0h1m1 0h2m1 0h1m2 0h1m7 0h1m1 0h1m3 0h2m8 0h1m32 0h1m2 0h1m3 0h1m2 0h1m4 0h1m1 0h1m2 0h3m1 0h1m1 0h2m3 0h3m1 0h3m1 0h10m1 0h1m4 0h3m3 0h1m1 0h6m1 0h1m1 0h2m2 0h1m1 0h4m1 0h1m2 0h1m1 0h9m2 0h1m2 0h1m1 0h1m1 0h6m2 0h4m1 0h2m1 0h1m1 0h2m1 0h1m1 0h1m3 0h5m1 0h2m1 0h1m2 0h1m2 0h1m1 0h2m1 0h4m1 0h2m2 0h1m13 0h128m1 0h43M1 108.5h1m11 0h1m1 0h1m1 0h2m1 0h1m2 0h1m7 0h1m1 0h1m2 0h1m1 0h1m8 0h1m32 0h4m3 0h1m1 0h3m2 0h2m1 0h7m1 0h4m1 0h5m2 0h1m3 0h1m1 0h2m1 0h2m1 0h3m1 0h1m4 0h1m2 0h1m1 0h1m1 0h1m3 0h2m2 0h2m1 0h1m3 0h2m3 0h1m1 0h1m3 0h2m3 0h1m2 0h3m2 0h2m1 0h1m1 0h1m4 0h1m1 0h3m2 0h1m2 0h4m4 0h1m3 0h1m3 0h1m5 0h5m2 0h2m1 0h1m1 0h1m1 0h1m1 0h1m13 0h128m1 0h43M1 109.5h1m11 0h1m1 0h1m1 0h2m1 0h1m2 0h1m7 0h1m1 0h1m2 0h3m8 0h1m32 0h2m3 0h4m1 0h1m4 0h1m3 0h3m4 0h1m1 0h2m1 0h1m2 0h4m5 0h5m2 0h1m5 0h1m1 0h1m1 0h1m2 0h3m3 0h2m1 0h2m3 0h2m1 0h2m1 0h1m2 0h1m1 0h1m1 0h6m2 0h7m1 0h5m2 0h1m2 0h3m1 0h1m1 0h9m5 0h2m4 0h1m1 0h2m2 0h1m1 0h2m4 0h1m1 0h2m16 0h128m1 0h43M1 110.5h1m11 0h1m1 0h1m1 0h2m1 0h1m2 0h1m7 0h1m1 0h1m1 0h1m2 0h1m8 0h1m32 0h1m4 0h1m1 0h6m1 0h5m1 0h2m1 0h1m1 0h4m2 0h3m2 0h1m2 0h1m2 0h1m3 0h1m1 0h4m1 0h4m1 0h1m2 0h2m2 0h1m3 0h1m1 0h2m3 0h7m1 0h2m1 0h1m4 0h1m3 0h1m1 0h4m1 0h1m1 0h1m3 0h1m2 0h3m3 0h1m3 0h1m1 0h5m1 0h1m1 0h2m1 0h2m2 0h1m1 0h1m1 0h1m3 0h4m1 0h2m1 0h2m1 0h3m15 0h128m1 0h43M1 111.5h1m11 0h1m1 0h1m1 0h2m1 0h1m2 0h1m7 0h1m1 0h1m1 0h1m1 0h2m8 0h1m32 0h3m1 0h2m1 0h1m2 0h1m1 0h1m2 0h1m1 0h1m2 0h2m2 0h1m1 0h2m5 0h1m1 0h1m1 0h1m3 0h1m3 0h4m1 0h1m5 0h2m1 0h3m1 0h3m1 0h1m1 0h2m1 0h2m2 0h6m1 0h2m1 0h1m2 0h1m1 0h6m3 0h2m1 0h1m1 0h2m1 0h1m1 0h1m3 0h3m3 0h1m1 0h1m1 0h4m1 0h2m3 0h1m2 0h1m2 0h1m1 0h1m1 0h2m2 0h1m4 0h4m5 0h1m13 0h128m1 0h43M1 112.5h1m11 0h1m1 0h1m1 0h2m1 0h1m2 0h1m7 0h1m1 0h1m1 0h2m1 0h1m8 0h1m32 0h4m1 0h1m1 0h1m1 0h3m2 0h8m1 0h1m1 0h2m1 0h1m1 0h1m1 0h3m2 0h3m1 0h2m4 0h1m1 0h2m1 0h4m2 0h1m2 0h2m7 0h3m3 0h1m1 0h1m1 0h2m2 0h1m2 0h2m5 0h1m1 0h1m1 0h3m1 0h2m1 0h1m1 0h1m1 0h1m2 0h1m1 0h1m1 0h3m2 0h2m1 0h5m3 0h1m2 0h2m3 0h2m2 0h1m1 0h5m1 0h2m1 0h2m1 0h2m1 0h2m13 0h128m1 0h43M1 113.5h1m11 0h1m1 0h1m1 0h2m1 0h1m2 0h1m7 0h1m1 0h1m1 0h4m8 0h1m32 0h1m1 0h2m1 0h3m2 0h1m1 0h1m2 0h3m2 0h2m4 0h4m1 0h1m1 0h7m1 0h1m3 0h4m6 0h1m1 0h2m1 0h11m1 0h2m2 0h1m1 0h1m1 0h2m1 0h2m1 0h1m1 0h6m1 0h2m3 0h4m1 0h1m1 0h2m1 0h5m1 0h1m1 0h1m1 0h1m1 0h1m1 0h1m2 0h1m1 0h2m4 0h3m2 0h1m1 0h5m1 0h1m4 0h1m1 0h3m1 0h1m2 0h1m13 0h128m1 0h43M1 114.5h1m11 0h1m1 0h1m1 0h2m1 0h1m2 0h1m7 0h1m1 0h2m3 0h1m8 0h1m36 0h4m1 0h1m1 0h1m2 0h1m2 0h3m1 0h1m3 0h4m2 0h1m6 0h2m2 0h1m3 0h6m1 0h1m1 0h2m4 0h1m1 0h1m1 0h2m3 0h5m1 0h6m3 0h1m1 0h1m4 0h1m1 0h1m1 0h1m3 0h2m3 0h1m1 0h1m1 0h1m3 0h1m2 0h1m1 0h1m2 0h1m2 0h4m2 0h1m1 0h1m2 0h2m4 0h1m1 0h1m2 0h2m1 0h1m2 0h3m4 0h4m13 0h114m1 0h13m1 0h43M1 115.5h1m11 0h1m1 0h1m1 0h2m1 0h1m2 0h1m7 0h1m1 0h2m2 0h2m8 0h1m32 0h2m2 0h4m2 0h1m2 0h1m1 0h1m8 0h1m1 0h3m2 0h5m1 0h2m6 0h2m1 0h1m1 0h1m4 0h1m1 0h1m1 0h1m1 0h4m2 0h3m3 0h1m3 0h2m2 0h1m1 0h2m1 0h1m1 0h4m1 0h3m2 0h2m1 0h2m1 0h2m1 0h9m1 0h2m1 0h1m1 0h1m4 0h1m1 0h3m4 0h2m2 0h1m3 0h2m1 0h2m1 0h2m2 0h3m6 0h1m12 0h128m1 0h43M1 116.5h1m11 0h1m1 0h1m1 0h2m1 0h1m2 0h1m7 0h1m1 0h2m1 0h1m1 0h1m8 0h1m35 0h3m1 0h6m1 0h1m5 0h6m2 0h2m3 0h3m1 0h1m1 0h1m2 0h1m5 0h1m1 0h2m1 0h4m1 0h1m2 0h2m1 0h2m2 0h1m1 0h1m1 0h3m2 0h1m1 0h1m1 0h1m2 0h2m1 0h1m3 0h3m1 0h1m3 0h3m2 0h2m1 0h1m1 0h2m1 0h3m1 0h3m2 0h1m1 0h5m1 0h1m2 0h2m3 0h1m1 0h1m1 0h1m1 0h1m2 0h5m3 0h7m1 0h1m3 0h1m7 0h1m1 0h128m1 0h43M1 117.5h1m11 0h1m1 0h1m1 0h2m1 0h1m2 0h1m7 0h1m1 0h2m1 0h3m8 0h1m33 0h2m4 0h1m2 0h1m6 0h1m2 0h2m2 0h1m2 0h1m6 0h2m4 0h2m3 0h4m1 0h1m3 0h1m1 0h2m1 0h1m1 0h5m1 0h2m1 0h1m1 0h2m3 0h3m1 0h1m4 0h1m1 0h1m1 0h7m3 0h2m2 0h7m2 0h2m2 0h2m1 0h1m1 0h1m2 0h1m1 0h1m1 0h3m4 0h3m1 0h1m1 0h4m2 0h1m1 0h2m1 0h1m1 0h2m1 0h2m2 0h1m8 0h1m4 0h128m1 0h43M1 118.5h1m9 0h1m1 0h1m1 0h1m1 0h2m1 0h1m2 0h1m7 0h1m1 0h3m2 0h1m8 0h1m33 0h1m1 0h1m1 0h2m1 0h4m2 0h1m1 0h6m1 0h1m1 0h1m1 0h1m2 0h1m2 0h2m4 0h2m1 0h1m4 0h2m2 0h1m2 0h4m3 0h1m3 0h2m1 0h1m1 0h1m1 0h6m1 0h4m1 0h2m1 0h1m2 0h1m1 0h1m1 0h1m4 0h3m3 0h1m1 0h1m1 0h1m3 0h2m1 0h1m4 0h1m2 0h5m1 0h1m3 0h3m4 0h1m3 0h6m1 0h2m1 0h1m2 0h5m2 0h2m2 0h4m1 0h1m1 0h128m1 0h43M1 119.5h1m9 0h1m1 0h1m1 0h1m1 0h2m1 0h1m2 0h1m7 0h1m1 0h3m1 0h2m8 0h1m34 0h1m3 0h2m2 0h1m1 0h1m2 0h1m1 0h1m2 0h1m2 0h2m1 0h1m2 0h1m2 0h2m2 0h2m3 0h2m2 0h1m1 0h2m1 0h1m2 0h1m1 0h3m3 0h1m1 0h2m1 0h2m2 0h2m1 0h1m1 0h7m1 0h2m1 0h1m1 0h3m2 0h2m1 0h1m1 0h2m1 0h2m2 0h1m1 0h3m1 0h3m1 0h4m1 0h3m1 0h2m1 0h1m1 0h1m7 0h1m1 0h2m1 0h3m3 0h4m3 0h2m2 0h4m13 0h128m1 0h43M1 120.5h1m9 0h1m1 0h1m1 0h1m1 0h2m1 0h1m2 0h1m7 0h1m1 0h4m1 0h1m8 0h1m32 0h2m5 0h5m1 0h2m1 0h6m5 0h1m6 0h1m1 0h1m2 0h1m2 0h1m3 0h3m1 0h2m1 0h3m2 0h2m1 0h1m1 0h1m1 0h1m1 0h1m2 0h5m1 0h6m2 0h2m1 0h1m1 0h1m2 0h1m3 0h1m2 0h3m2 0h1m2 0h1m1 0h10m2 0h1m2 0h5m1 0h4m7 0h1m1 0h1m2 0h5m1 0h1m2 0h2m1 0h2m2 0h2m1 0h2m1 0h1m7 0h128m1 0h43M1 121.5h1m9 0h1m1 0h1m1 0h1m1 0h2m1 0h1m2 0h1m7 0h1m1 0h6m8 0h1m32 0h2m2 0h2m4 0h2m4 0h3m1 0h2m1 0h2m1 0h3m3 0h1m1 0h1m2 0h1m3 0h1m3 0h7m5 0h5m1 0h6m1 0h4m2 0h4m1 0h1m2 0h1m1 0h3m1 0h4m1 0h1m2 0h6m1 0h1m2 0h4m1 0h1m1 0h4m1 0h2m1 0h3m1 0h1m1 0h3m5 0h1m2 0h1m1 0h4m2 0h1m1 0h2m2 0h1m1 0h1m2 0h1m2 0h1m4 0h1m2 0h1m5 0h128m1 0h43M1 122.5h1m9 0h1m1 0h1m1 0h1m1 0h2m1 0h1m2 0h1m7 0h2m5 0h1m8 0h1m32 0h1m2 0h1m1 0h1m2 0h1m1 0h2m2 0h1m2 0h2m1 0h2m3 0h4m3 0h3m2 0h1m1 0h1m1 0h2m3 0h6m1 0h1m1 0h2m2 0h1m5 0h1m1 0h1m2 0h1m1 0h3m3 0h2m1 0h1m2 0h2m1 0h2m3 0h1m1 0h1m1 0h1m3 0h2m3 0h4m3 0h1m1 0h2m1 0h1m2 0h1m3 0h1m1 0h2m2 0h1m1 0h1m3 0h1m4 0h1m3 0h1m2 0h3m1 0h2m2 0h1m1 0h2m2 0h1m5 0h2m2 0h2m1 0h129m1 0h43M1 123.5h1m9 0h1m1 0h1m1 0h1m1 0h2m1 0h1m2 0h1m7 0h2m4 0h2m8 0h1m32 0h1m4 0h4m1 0h1m1 0h2m1 0h1m1 0h1m2 0h2m2 0h1m2 0h1m2 0h3m1 0h3m8 0h3m2 0h1m6 0h1m2 0h2m1 0h2m4 0h1m2 0h1m2 0h5m1 0h1m1 0h2m1 0h1m1 0h3m1 0h11m2 0h6m3 0h1m1 0h3m1 0h3m1 0h1m2 0h5m3 0h1m1 0h1m2 0h1m1 0h1m1 0h2m2 0h1m1 0h2m7 0h1m2 0h2m2 0h1m8 0h129m1 0h43M1 124.5h1m9 0h1m1 0h1m1 0h1m1 0h2m1 0h1m2 0h1m7 0h2m3 0h1m1 0h1m8 0h1m32 0h2m1 0h1m1 0h3m2 0h1m1 0h1m1 0h1m2 0h5m2 0h5m3 0h5m2 0h1m1 0h1m1 0h1m2 0h1m1 0h3m2 0h3m2 0h1m2 0h1m3 0h1m5 0h8m1 0h6m1 0h1m2 0h2m8 0h2m5 0h1m1 0h1m3 0h2m1 0h3m2 0h1m2 0h4m3 0h2m2 0h2m4 0h1m3 0h5m2 0h2m1 0h2m2 0h2m4 0h1m4 0h3m2 0h129m1 0h43M1 125.5h1m9 0h1m1 0h1m1 0h1m1 0h2m1 0h1m2 0h1m7 0h2m3 0h3m8 0h1m32 0h2m1 0h2m2 0h2m1 0h1m2 0h1m1 0h1m1 0h1m2 0h1m2 0h2m2 0h1m3 0h1m3 0h1m5 0h1m1 0h1m1 0h3m2 0h1m6 0h1m2 0h2m1 0h8m1 0h1m2 0h4m1 0h5m1 0h1m1 0h1m1 0h4m1 0h1m3 0h1m1 0h11m3 0h1m1 0h2m1 0h1m1 0h1m1 0h3m2 0h2m2 0h1m1 0h3m2 0h1m1 0h1m1 0h2m2 0h1m1 0h2m4 0h4m1 0h1m6 0h1m1 0h1m5 0h128m1 0h43M1 126.5h1m9 0h1m1 0h1m1 0h1m1 0h2m1 0h1m2 0h1m7 0h2m2 0h1m2 0h1m8 0h1m32 0h1m2 0h1m3 0h3m1 0h2m1 0h1m2 0h6m2 0h1m1 0h3m3 0h2m3 0h1m3 0h2m2 0h4m1 0h1m1 0h7m7 0h1m4 0h1m1 0h1m1 0h1m1 0h4m2 0h2m1 0h1m2 0h1m1 0h1m3 0h1m1 0h4m2 0h1m1 0h2m1 0h1m2 0h2m1 0h1m1 0h2m2 0h2m1 0h4m2 0h4m1 0h1m6 0h2m2 0h2m1 0h1m2 0h5m1 0h3m1 0h1m2 0h1m2 0h2m4 0h1m1 0h128m1 0h43M1 127.5h1m9 0h1m1 0h1m1 0h1m1 0h2m1 0h1m2 0h1m7 0h2m2 0h1m1 0h2m8 0h1m33 0h1m2 0h2m1 0h2m1 0h1m4 0h1m1 0h1m3 0h1m1 0h2m1 0h2m3 0h2m1 0h1m1 0h2m3 0h1m1 0h1m1 0h2m1 0h1m1 0h1m5 0h2m2 0h2m1 0h2m2 0h3m2 0h2m1 0h1m1 0h1m2 0h2m3 0h2m1 0h4m1 0h3m1 0h1m4 0h3m1 0h3m1 0h1m2 0h6m1 0h1m1 0h3m2 0h1m1 0h3m1 0h1m1 0h1m1 0h1m2 0h1m1 0h4m2 0h1m4 0h2m1 0h1m2 0h2m1 0h1m13 0h128m1 0h43M1 128.5h1m9 0h1m1 0h1m1 0h1m1 0h2m1 0h1m2 0h1m7 0h2m2 0h2m1 0h1m8 0h1m35 0h3m1 0h4m3 0h1m2 0h2m1 0h1m1 0h4m1 0h1m4 0h4m3 0h1m2 0h2m3 0h3m2 0h3m3 0h1m6 0h2m1 0h2m2 0h3m1 0h4m1 0h2m1 0h2m4 0h1m1 0h1m1 0h4m3 0h1m5 0h1m2 0h1m1 0h1m1 0h1m2 0h2m2 0h2m1 0h3m3 0h3m2 0h2m4 0h1m1 0h1m1 0h11m2 0h3m15 0h128m1 0h43M1 129.5h1m9 0h1m1 0h1m1 0h1m1 0h2m1 0h1m2 0h1m7 0h2m2 0h4m8 0h1m32 0h1m3 0h4m2 0h2m3 0h3m2 0h2m4 0h2m3 0h2m1 0h4m3 0h1m1 0h1m1 0h2m1 0h1m1 0h1m2 0h1m2 0h2m2 0h1m1 0h6m1 0h2m1 0h2m1 0h2m1 0h5m1 0h1m1 0h1m2 0h6m1 0h1m2 0h3m1 0h3m1 0h4m1 0h2m2 0h3m1 0h1m1 0h6m1 0h3m2 0h1m1 0h2m2 0h1m1 0h1m1 0h2m4 0h2m1 0h4m2 0h1m2 0h1m13 0h128m1 0h43M1 130.5h1m9 0h1m1 0h1m1 0h1m1 0h2m1 0h1m2 0h1m7 0h2m1 0h1m3 0h1m8 0h1m32 0h1m1 0h2m1 0h1m1 0h2m5 0h2m2 0h4m1 0h1m3 0h2m1 0h3m1 0h2m3 0h1m2 0h2m2 0h2m1 0h1m1 0h1m1 0h1m1 0h1m2 0h1m2 0h2m2 0h1m2 0h4m1 0h1m2 0h4m1 0h2m1 0h2m1 0h1m2 0h1m1 0h1m4 0h3m1 0h1m2 0h2m3 0h1m2 0h2m2 0h3m2 0h1m1 0h5m2 0h1m1 0h2m2 0h1m2 0h1m1 0h1m4 0h5m1 0h3m1 0h5m15 0h128m1 0h43M1 131.5h1m9 0h1m1 0h1m1 0h1m1 0h2m1 0h1m2 0h1m7 0h2m1 0h1m2 0h2m8 0h1m32 0h2m2 0h4m2 0h1m2 0h1m3 0h1m2 0h1m1 0h6m3 0h2m1 0h6m3 0h1m1 0h1m1 0h2m1 0h1m5 0h2m2 0h2m1 0h1m3 0h3m3 0h1m3 0h1m1 0h1m1 0h4m1 0h1m1 0h2m1 0h4m6 0h2m2 0h9m2 0h2m1 0h2m3 0h2m1 0h5m3 0h4m1 0h7m1 0h1m2 0h2m2 0h2m1 0h2m2 0h1m13 0h128m1 0h43M1 132.5h1m9 0h1m1 0h1m1 0h1m1 0h2m1 0h1m2 0h1m7 0h2m1 0h1m1 0h1m1 0h1m8 0h1m32 0h2m1 0h7m1 0h4m4 0h2m1 0h1m2 0h5m1 0h1m1 0h2m4 0h1m2 0h2m2 0h9m1 0h1m2 0h1m1 0h2m2 0h2m3 0h3m4 0h2m1 0h3m1 0h1m2 0h1m4 0h3m1 0h1m1 0h1m1 0h2m2 0h2m1 0h1m1 0h1m1 0h2m4 0h1m1 0h1m1 0h1m3 0h1m1 0h1m4 0h1m2 0h2m1 0h1m1 0h2m1 0h1m2 0h1m1 0h3m1 0h2m2 0h5m1 0h2m12 0h128m1 0h43M1 133.5h1m9 0h1m1 0h1m1 0h1m1 0h2m1 0h1m2 0h1m7 0h2m1 0h1m1 0h3m8 0h1m32 0h2m3 0h1m2 0h1m1 0h1m2 0h1m1 0h1m1 0h2m1 0h2m5 0h1m4 0h3m1 0h1m4 0h1m1 0h1m1 0h6m4 0h1m1 0h1m1 0h3m1 0h8m1 0h1m3 0h6m1 0h2m1 0h1m1 0h10m1 0h1m1 0h2m1 0h7m2 0h4m1 0h3m2 0h3m1 0h1m1 0h2m3 0h5m1 0h1m1 0h1m1 0h1m2 0h2m1 0h2m1 0h1m1 0h2m1 0h2m2 0h1m13 0h128m1 0h43M1 134.5h1m9 0h1m1 0h1m1 0h1m1 0h2m1 0h1m2 0h1m7 0h2m1 0h2m2 0h1m8 0h1m33 0h1m1 0h1m1 0h3m1 0h3m1 0h2m1 0h1m1 0h4m3 0h4m1 0h1m1 0h3m2 0h1m1 0h1m1 0h3m2 0h6m1 0h2m1 0h1m1 0h1m2 0h1m1 0h1m1 0h2m3 0h5m1 0h3m1 0h2m3 0h1m4 0h1m1 0h1m1 0h1m1 0h1m1 0h2m1 0h2m1 0h1m1 0h2m1 0h1m2 0h6m3 0h2m2 0h3m1 0h4m2 0h2m1 0h1m2 0h1m1 0h1m2 0h5m1 0h1m2 0h1m1 0h1m2 0h2m14 0h125m1 0h2m1 0h43M1 135.5h1m9 0h1m1 0h1m1 0h1m1 0h2m1 0h1m2 0h1m7 0h2m1 0h2m1 0h2m8 0h1m32 0h1m4 0h1m1 0h1m2 0h2m3 0h1m1 0h3m4 0h1m2 0h2m2 0h2m1 0h2m1 0h2m4 0h1m1 0h1m2 0h1m7 0h2m1 0h3m2 0h2m1 0h2m1 0h1m1 0h2m3 0h2m1 0h2m1 0h2m1 0h1m3 0h7m1 0h2m2 0h1m3 0h6m2 0h5m1 0h1m1 0h1m1 0h1m4 0h3m3 0h1m1 0h1m2 0h1m1 0h7m1 0h2m4 0h2m1 0h1m2 0h2m12 0h128m1 0h43M1 136.5h1m9 0h1m1 0h1m1 0h1m1 0h2m1 0h1m2 0h1m7 0h2m1 0h3m1 0h1m8 0h1m32 0h4m1 0h1m1 0h4m2 0h9m4 0h3m3 0h1m1 0h1m1 0h1m2 0h1m2 0h2m3 0h1m1 0h3m2 0h3m1 0h1m6 0h2m1 0h1m2 0h1m4 0h3m4 0h2m2 0h1m4 0h1m1 0h1m4 0h3m2 0h1m1 0h2m1 0h1m2 0h3m3 0h2m2 0h1m1 0h3m1 0h1m1 0h3m2 0h2m1 0h2m1 0h1m1 0h2m1 0h5m1 0h5m1 0h5m2 0h3m1 0h2m1 0h1m3 0h128m1 0h43M1 137.5h1m9 0h1m1 0h1m1 0h1m1 0h2m1 0h1m2 0h1m7 0h2m1 0h5m8 0h1m37 0h1m3 0h2m3 0h2m1 0h1m4 0h3m1 0h3m2 0h6m4 0h1m1 0h1m1 0h2m1 0h1m1 0h2m4 0h2m2 0h2m2 0h2m1 0h4m2 0h1m1 0h1m2 0h6m2 0h1m1 0h2m1 0h1m1 0h7m1 0h2m2 0h2m1 0h3m2 0h1m1 0h4m1 0h1m1 0h1m2 0h1m1 0h1m1 0h3m3 0h1m1 0h1m2 0h1m1 0h1m2 0h4m1 0h2m1 0h2m1 0h2m4 0h1m1 0h1m4 0h1m6 0h128m1 0h43M1 138.5h1m9 0h1m1 0h1m1 0h1m1 0h2m1 0h1m2 0h1m7 0h3m4 0h1m8 0h1m32 0h1m2 0h1m1 0h1m1 0h5m1 0h5m1 0h4m2 0h1m1 0h2m3 0h3m1 0h2m1 0h1m2 0h1m1 0h1m1 0h2m1 0h3m2 0h3m1 0h1m2 0h1m3 0h1m2 0h1m2 0h2m1 0h2m1 0h1m1 0h1m1 0h1m1 0h2m2 0h1m4 0h1m2 0h2m1 0h1m2 0h1m3 0h1m1 0h1m1 0h1m1 0h1m1 0h2m2 0h1m3 0h1m2 0h3m3 0h1m1 0h1m4 0h1m2 0h2m1 0h1m1 0h3m1 0h5m1 0h6m1 0h1m2 0h7m4 0h128m1 0h43M1 139.5h1m9 0h1m1 0h1m1 0h1m1 0h2m1 0h1m2 0h1m7 0h3m3 0h2m8 0h1m34 0h1m4 0h2m1 0h1m2 0h1m1 0h1m1 0h1m4 0h1m1 0h1m1 0h2m1 0h1m4 0h1m1 0h2m2 0h2m2 0h3m1 0h1m1 0h1m4 0h1m1 0h1m2 0h2m2 0h4m1 0h2m1 0h2m1 0h1m1 0h2m1 0h1m3 0h2m2 0h3m1 0h2m1 0h2m2 0h1m1 0h2m3 0h6m1 0h2m1 0h2m2 0h1m3 0h3m1 0h2m1 0h2m2 0h3m1 0h4m2 0h2m1 0h1m1 0h2m3 0h1m1 0h1m1 0h1m1 0h2m4 0h1m8 0h128m1 0h43M1 140.5h1m9 0h1m1 0h1m1 0h1m1 0h2m1 0h1m2 0h1m7 0h3m2 0h1m1 0h1m8 0h1m32 0h2m1 0h1m2 0h2m2 0h1m2 0h2m2 0h6m2 0h4m2 0h2m6 0h2m1 0h1m1 0h1m1 0h2m1 0h3m1 0h2m5 0h3m2 0h1m1 0h1m2 0h2m1 0h2m1 0h1m2 0h1m1 0h1m1 0h2m2 0h1m1 0h1m2 0h2m1 0h2m2 0h3m1 0h1m1 0h3m1 0h1m2 0h7m2 0h1m1 0h1m1 0h3m2 0h1m1 0h2m6 0h2m1 0h1m2 0h1m1 0h2m2 0h2m1 0h2m1 0h2m2 0h1m2 0h2m6 0h1m1 0h129m1 0h43M1 141.5h1m9 0h1m1 0h1m1 0h1m1 0h2m1 0h1m2 0h1m7 0h3m2 0h3m8 0h1m33 0h1m8 0h1m1 0h2m1 0h2m3 0h1m3 0h1m1 0h1m5 0h6m1 0h3m2 0h5m1 0h1m6 0h1m2 0h2m1 0h3m1 0h1m1 0h4m2 0h1m1 0h3m1 0h1m1 0h2m1 0h1m1 0h4m1 0h10m1 0h1m1 0h1m1 0h1m1 0h1m2 0h2m1 0h6m1 0h4m1 0h4m3 0h3m1 0h7m2 0h1m1 0h2m1 0h4m2 0h1m2 0h1m12 0h129m1 0h43M1 142.5h1m11 0h1m1 0h1m1 0h2m1 0h1m2 0h1m7 0h3m1 0h1m2 0h1m8 0h1m32 0h1m2 0h3m2 0h7m4 0h1m1 0h2m3 0h1m1 0h1m3 0h3m3 0h1m3 0h1m1 0h1m1 0h1m1 0h4m1 0h2m1 0h1m1 0h1m1 0h3m2 0h1m2 0h1m1 0h7m1 0h5m2 0h1m1 0h2m1 0h1m2 0h1m5 0h1m2 0h3m2 0h1m1 0h6m1 0h3m2 0h1m2 0h1m1 0h1m5 0h1m5 0h1m2 0h1m4 0h5m1 0h2m1 0h1m1 0h4m7 0h1m2 0h1m1 0h1m2 0h128m1 0h43M1 143.5h1m9 0h1m1 0h1m1 0h1m1 0h2m1 0h1m2 0h1m7 0h3m1 0h1m1 0h2m8 0h1m32 0h3m1 0h2m9 0h3m1 0h3m2 0h4m1 0h4m1 0h6m1 0h1m2 0h2m1 0h2m5 0h2m1 0h1m2 0h2m1 0h2m2 0h4m2 0h1m2 0h1m1 0h4m1 0h2m1 0h1m1 0h3m1 0h4m1 0h1m1 0h2m1 0h1m1 0h1m1 0h5m2 0h1m6 0h3m1 0h1m2 0h1m1 0h3m3 0h3m2 0h1m1 0h1m1 0h2m2 0h1m2 0h1m3 0h5m2 0h1m4 0h1m8 0h128m1 0h43M1 144.5h1m9 0h1m1 0h1m1 0h1m1 0h2m1 0h1m2 0h1m7 0h3m1 0h2m1 0h1m8 0h1m32 0h3m1 0h1m2 0h2m1 0h2m1 0h2m1 0h9m2 0h2m4 0h2m1 0h1m1 0h2m4 0h1m1 0h1m1 0h4m1 0h4m1 0h1m2 0h2m2 0h1m4 0h1m2 0h2m1 0h2m1 0h1m1 0h1m2 0h1m2 0h1m2 0h1m1 0h1m2 0h2m1 0h4m2 0h2m1 0h1m4 0h3m3 0h1m2 0h1m1 0h3m1 0h2m1 0h1m1 0h1m2 0h1m5 0h1m1 0h1m2 0h5m1 0h5m1 0h1m1 0h1m1 0h1m6 0h1m6 0h128m1 0h43M1 145.5h1m9 0h1m1 0h1m1 0h1m1 0h2m1 0h1m2 0h1m7 0h3m1 0h4m8 0h1m32 0h2m1 0h1m1 0h3m2 0h1m6 0h2m1 0h1m2 0h2m1 0h2m1 0h2m5 0h3m5 0h3m1 0h1m1 0h1m6 0h1m2 0h2m2 0h9m2 0h6m1 0h1m1 0h1m1 0h1m1 0h10m1 0h1m1 0h2m2 0h6m2 0h5m2 0h1m3 0h2m1 0h4m2 0h1m1 0h3m4 0h1m1 0h3m3 0h2m7 0h1m2 0h1m13 0h128m1 0h43M1 146.5h1m9 0h1m1 0h1m1 0h1m1 0h2m1 0h1m2 0h1m7 0h4m3 0h1m8 0h1m33 0h1m1 0h1m1 0h1m1 0h3m1 0h1m2 0h1m2 0h5m3 0h4m4 0h4m4 0h2m1 0h1m1 0h4m1 0h1m1 0h4m1 0h1m2 0h1m4 0h1m2 0h6m1 0h1m1 0h4m2 0h4m8 0h2m2 0h2m2 0h2m2 0h2m1 0h4m1 0h1m2 0h1m1 0h1m2 0h5m1 0h1m1 0h1m1 0h3m3 0h1m5 0h4m2 0h9m1 0h1m13 0h128m1 0h43M1 147.5h1m9 0h1m1 0h1m1 0h1m1 0h2m1 0h1m2 0h1m7 0h4m2 0h2m8 0h1m32 0h2m1 0h1m2 0h2m1 0h3m3 0h1m1 0h1m2 0h2m4 0h2m2 0h3m1 0h4m6 0h5m1 0h1m4 0h3m2 0h6m1 0h4m6 0h1m1 0h1m1 0h4m1 0h1m1 0h4m1 0h1m1 0h2m2 0h2m1 0h1m1 0h3m1 0h3m2 0h4m1 0h3m1 0h1m1 0h3m1 0h2m1 0h1m1 0h1m1 0h3m4 0h3m3 0h1m1 0h2m3 0h1m3 0h1m1 0h2m13 0h128m1 0h43M1 148.5h1m9 0h1m1 0h1m1 0h1m1 0h2m1 0h1m2 0h1m7 0h4m1 0h1m1 0h1m8 0h1m32 0h1m2 0h1m1 0h1m2 0h4m2 0h1m2 0h2m1 0h1m4 0h4m2 0h2m6 0h1m2 0h1m1 0h1m1 0h6m1 0h2m1 0h1m2 0h1m1 0h1m3 0h1m3 0h1m2 0h1m1 0h7m3 0h2m1 0h1m3 0h2m1 0h1m1 0h1m2 0h5m1 0h1m3 0h3m1 0h1m1 0h4m4 0h3m1 0h1m4 0h1m2 0h2m3 0h2m1 0h1m1 0h10m1 0h1m2 0h1m16 0h128m1 0h43M1 149.5h1m9 0h1m1 0h1m1 0h1m1 0h2m1 0h1m2 0h1m7 0h4m1 0h3m8 0h1m32 0h2m3 0h3m2 0h1m1 0h1m4 0h1m2 0h2m1 0h2m1 0h2m3 0h2m1 0h3m1 0h1m1 0h2m2 0h2m1 0h2m1 0h1m6 0h1m3 0h1m1 0h4m2 0h2m5 0h1m1 0h9m1 0h3m1 0h2m2 0h1m2 0h2m2 0h1m1 0h6m1 0h2m1 0h1m1 0h2m2 0h4m1 0h1m1 0h4m3 0h3m2 0h1m1 0h4m2 0h1m1 0h2m3 0h1m3 0h2m1 0h2m12 0h128m1 0h43M1 150.5h1m9 0h1m1 0h1m1 0h1m1 0h2m1 0h1m2 0h1m7 0h5m2 0h1m8 0h1m32 0h1m1 0h2m1 0h1m2 0h7m2 0h7m1 0h2m1 0h3m1 0h4m3 0h1m2 0h1m1 0h1m1 0h2m1 0h3m1 0h2m1 0h1m1 0h1m2 0h3m1 0h2m4 0h4m1 0h1m1 0h1m1 0h3m1 0h1m1 0h2m2 0h1m5 0h2m2 0h4m1 0h1m1 0h1m5 0h2m1 0h3m6 0h4m1 0h1m1 0h1m2 0h2m4 0h1m4 0h5m1 0h2m1 0h2m1 0h1m1 0h1m1 0h1m13 0h128m1 0h43M1 151.5h1m9 0h1m1 0h1m1 0h1m1 0h2m1 0h1m2 0h1m7 0h5m1 0h2m8 0h1m32 0h1m3 0h2m1 0h1m1 0h2m2 0h1m3 0h1m5 0h2m1 0h2m3 0h2m2 0h3m2 0h1m3 0h2m2 0h1m2 0h1m4 0h2m2 0h1m1 0h3m2 0h7m2 0h4m1 0h1m1 0h1m2 0h1m1 0h2m3 0h5m1 0h2m1 0h3m2 0h4m2 0h1m1 0h4m1 0h1m1 0h5m1 0h1m2 0h2m2 0h3m2 0h1m1 0h1m1 0h2m2 0h1m1 0h2m3 0h2m2 0h1m2 0h1m13 0h128m1 0h43M1 152.5h1m9 0h1m1 0h1m1 0h1m1 0h2m1 0h1m2 0h1m7 0h6m1 0h1m8 0h1m32 0h1m2 0h1m1 0h1m1 0h2m1 0h2m2 0h1m2 0h4m1 0h1m2 0h5m1 0h3m5 0h2m1 0h3m1 0h2m1 0h2m1 0h3m1 0h1m1 0h1m2 0h1m3 0h1m4 0h5m1 0h2m1 0h4m1 0h2m1 0h1m1 0h2m1 0h1m1 0h1m4 0h1m5 0h1m1 0h1m1 0h1m3 0h2m1 0h3m5 0h4m2 0h1m1 0h1m1 0h3m4 0h1m4 0h5m1 0h5m1 0h1m1 0h1m1 0h2m1 0h1m1 0h2m4 0h2m1 0h128m1 0h43M1 153.5h1m9 0h1m1 0h1m1 0h1m1 0h2m1 0h1m2 0h1m7 0h8m8 0h1m33 0h1m3 0h2m5 0h1m3 0h1m2 0h2m1 0h1m2 0h3m3 0h2m1 0h2m1 0h1m3 0h1m1 0h4m5 0h2m2 0h3m1 0h2m1 0h2m1 0h1m2 0h2m1 0h2m3 0h6m1 0h3m1 0h1m2 0h6m3 0h1m1 0h3m2 0h4m1 0h7m3 0h1m1 0h2m1 0h1m1 0h2m3 0h2m1 0h2m1 0h1m1 0h1m1 0h2m2 0h1m1 0h2m1 0h2m1 0h2m1 0h1m1 0h1m12 0h1m1 0h128m1 0h43M1 154.5h1m9 0h1m1 0h1m1 0h1m1 0h2m1 0h1m2 0h1m7 0h1m6 0h1m7 0h1m33 0h1m2 0h3m1 0h5m2 0h1m2 0h5m4 0h3m2 0h4m3 0h2m2 0h3m1 0h6m3 0h2m1 0h3m4 0h1m2 0h1m1 0h4m3 0h2m1 0h2m2 0h2m1 0h1m4 0h2m4 0h4m4 0h1m2 0h1m2 0h8m1 0h1m3 0h3m1 0h1m2 0h1m2 0h1m3 0h1m1 0h1m1 0h1m2 0h2m1 0h4m1 0h3m2 0h1m7 0h1m3 0h1m1 0h2m1 0h128m1 0h43M1 155.5h1m9 0h1m1 0h1m1 0h1m1 0h2m1 0h1m2 0h1m7 0h1m5 0h2m7 0h1m33 0h2m3 0h1m1 0h2m1 0h1m2 0h1m2 0h2m2 0h2m1 0h2m1 0h2m2 0h1m1 0h4m1 0h1m1 0h3m1 0h6m5 0h2m1 0h1m1 0h1m3 0h6m1 0h1m2 0h1m1 0h2m1 0h1m1 0h2m2 0h3m1 0h7m1 0h1m2 0h4m1 0h1m1 0h3m2 0h2m2 0h1m1 0h2m1 0h1m1 0h4m2 0h4m3 0h3m2 0h1m1 0h1m1 0h2m2 0h1m2 0h1m2 0h3m2 0h1m1 0h2m13 0h128m1 0h43M1 156.5h1m9 0h1m1 0h1m1 0h1m1 0h2m1 0h1m2 0h1m7 0h1m4 0h1m1 0h1m7 0h1m33 0h2m1 0h1m1 0h1m1 0h5m1 0h3m1 0h5m3 0h1m1 0h2m2 0h1m1 0h1m1 0h2m2 0h2m1 0h3m2 0h5m2 0h3m1 0h2m1 0h1m3 0h1m1 0h1m2 0h1m2 0h2m2 0h6m1 0h2m1 0h1m1 0h2m1 0h2m2 0h4m1 0h1m2 0h1m1 0h1m2 0h1m3 0h1m1 0h4m2 0h5m1 0h1m2 0h1m1 0h1m2 0h1m5 0h1m3 0h6m1 0h2m1 0h1m1 0h4m8 0h1m2 0h1m3 0h128m1 0h43M1 157.5h1m9 0h1m1 0h1m1 0h1m1 0h2m1 0h1m2 0h1m7 0h1m4 0h3m7 0h1m33 0h3m1 0h4m2 0h1m1 0h1m8 0h1m2 0h2m1 0h2m2 0h2m1 0h1m1 0h1m1 0h1m4 0h3m1 0h2m1 0h1m1 0h1m4 0h1m4 0h2m1 0h4m1 0h1m1 0h1m1 0h3m1 0h6m2 0h1m1 0h1m1 0h8m1 0h5m2 0h2m1 0h4m2 0h6m1 0h1m1 0h4m1 0h3m1 0h3m1 0h1m2 0h1m1 0h1m1 0h4m2 0h3m2 0h1m2 0h2m8 0h1m7 0h128m1 0h43M1 158.5h1m9 0h1m1 0h1m1 0h1m1 0h2m1 0h1m2 0h1m7 0h1m3 0h1m2 0h1m7 0h1m33 0h1m2 0h4m1 0h1m1 0h1m2 0h2m2 0h2m2 0h1m2 0h1m1 0h3m1 0h1m3 0h1m4 0h6m1 0h2m1 0h1m3 0h2m1 0h1m6 0h1m1 0h1m3 0h3m1 0h2m1 0h1m1 0h1m1 0h1m1 0h1m2 0h1m1 0h1m1 0h1m2 0h1m3 0h1m3 0h6m1 0h1m3 0h2m1 0h1m1 0h3m1 0h2m2 0h4m1 0h2m1 0h2m1 0h2m3 0h2m2 0h1m1 0h5m1 0h2m1 0h2m2 0h4m3 0h2m2 0h2m1 0h1m2 0h128m1 0h43M1 159.5h1m9 0h1m1 0h1m1 0h1m1 0h2m1 0h1m2 0h1m7 0h1m3 0h1m1 0h2m7 0h1m33 0h3m2 0h1m2 0h1m1 0h1m4 0h1m5 0h4m2 0h1m3 0h2m1 0h2m1 0h1m3 0h1m1 0h3m1 0h2m1 0h3m3 0h2m2 0h8m2 0h1m1 0h2m2 0h6m1 0h2m1 0h1m1 0h1m1 0h8m1 0h2m1 0h3m1 0h3m1 0h4m1 0h3m1 0h3m2 0h4m1 0h1m1 0h1m4 0h5m1 0h1m1 0h1m5 0h2m1 0h4m2 0h1m2 0h1m13 0h128m1 0h43M1 160.5h1m9 0h1m1 0h1m1 0h1m1 0h2m1 0h1m2 0h1m7 0h1m3 0h2m1 0h1m7 0h1m33 0h1m2 0h3m1 0h2m1 0h2m2 0h1m3 0h4m1 0h1m1 0h2m1 0h1m2 0h1m6 0h7m1 0h2m1 0h3m1 0h1m2 0h1m1 0h1m1 0h1m4 0h2m2 0h3m1 0h2m1 0h2m2 0h2m2 0h4m1 0h1m2 0h1m2 0h2m4 0h1m9 0h4m3 0h1m1 0h2m1 0h5m2 0h3m2 0h2m2 0h1m1 0h1m2 0h1m1 0h5m1 0h5m3 0h1m1 0h1m2 0h2m1 0h3m4 0h129m1 0h43M1 161.5h1m9 0h1m1 0h1m1 0h1m1 0h2m1 0h1m2 0h1m7 0h1m3 0h4m7 0h1m34 0h1m3 0h1m1 0h2m1 0h1m2 0h3m1 0h1m2 0h2m4 0h1m4 0h3m1 0h3m3 0h1m1 0h6m1 0h1m1 0h1m9 0h9m1 0h2m2 0h1m1 0h3m2 0h2m1 0h1m1 0h3m2 0h4m1 0h23m3 0h2m3 0h2m3 0h2m1 0h1m6 0h2m4 0h2m1 0h1m1 0h2m1 0h2m2 0h1m6 0h1m6 0h128m1 0h43M1 162.5h1m9 0h1m1 0h1m1 0h1m1 0h2m1 0h1m2 0h1m7 0h1m2 0h1m3 0h1m7 0h1m33 0h1m4 0h4m1 0h6m1 0h4m1 0h2m1 0h1m2 0h1m5 0h1m1 0h1m1 0h2m2 0h3m1 0h1m1 0h1m2 0h6m1 0h1m1 0h2m3 0h1m4 0h5m1 0h3m1 0h3m1 0h1m2 0h1m4 0h2m2 0h1m2 0h2m1 0h1m1 0h1m1 0h2m1 0h1m1 0h4m1 0h1m1 0h1m1 0h2m2 0h4m2 0h1m1 0h4m1 0h1m1 0h5m2 0h2m1 0h2m1 0h6m1 0h2m1 0h2m12 0h128m1 0h43M1 163.5h1m9 0h1m1 0h1m1 0h1m1 0h2m1 0h1m2 0h1m7 0h1m2 0h1m2 0h2m7 0h1m33 0h1m1 0h1m4 0h1m1 0h3m9 0h2m3 0h1m2 0h1m1 0h2m2 0h4m1 0h2m1 0h3m1 0h3m3 0h1m3 0h2m2 0h1m2 0h1m2 0h3m1 0h1m1 0h1m1 0h7m1 0h2m1 0h1m1 0h2m2 0h5m1 0h2m2 0h1m2 0h3m1 0h2m2 0h3m1 0h2m1 0h1m1 0h1m1 0h1m4 0h3m5 0h1m2 0h1m1 0h3m3 0h1m1 0h2m1 0h2m1 0h1m2 0h2m15 0h128m1 0h43M1 164.5h1m9 0h1m1 0h1m1 0h1m1 0h2m1 0h1m2 0h1m7 0h1m2 0h1m1 0h1m1 0h1m7 0h1m33 0h1m1 0h2m1 0h1m1 0h8m2 0h2m2 0h1m3 0h5m2 0h1m1 0h1m2 0h1m1 0h2m1 0h3m1 0h6m1 0h2m3 0h1m1 0h2m1 0h1m1 0h1m4 0h3m1 0h1m1 0h2m2 0h3m1 0h2m1 0h1m7 0h1m2 0h2m1 0h1m3 0h1m1 0h1m1 0h1m2 0h2m2 0h3m3 0h1m1 0h1m1 0h2m3 0h1m3 0h1m5 0h1m1 0h1m2 0h5m1 0h2m1 0h2m2 0h4m13 0h128m1 0h43M1 165.5h1m9 0h1m1 0h1m1 0h1m1 0h2m1 0h1m2 0h1m7 0h1m2 0h1m1 0h3m7 0h1m33 0h2m1 0h1m1 0h1m1 0h1m2 0h1m1 0h2m1 0h1m4 0h1m4 0h3m2 0h3m1 0h4m3 0h1m1 0h4m1 0h1m1 0h1m4 0h3m3 0h1m1 0h2m2 0h4m1 0h2m2 0h1m1 0h4m1 0h2m1 0h1m1 0h4m1 0h1m2 0h1m2 0h4m1 0h7m2 0h4m1 0h4m2 0h1m1 0h4m1 0h1m3 0h3m2 0h1m1 0h1m1 0h2m2 0h1m7 0h1m1 0h2m2 0h1m13 0h128m1 0h43M1 166.5h1m9 0h1m1 0h1m1 0h1m1 0h2m1 0h1m2 0h1m7 0h1m2 0h2m2 0h1m7 0h1m33 0h2m1 0h2m1 0h4m1 0h2m1 0h2m1 0h4m5 0h1m1 0h1m5 0h1m3 0h3m1 0h1m3 0h1m1 0h3m2 0h4m1 0h1m2 0h1m1 0h1m1 0h2m2 0h6m1 0h5m3 0h2m1 0h1m2 0h1m1 0h1m2 0h1m1 0h1m2 0h5m2 0h1m1 0h1m1 0h1m1 0h2m1 0h3m2 0h1m2 0h2m1 0h1m2 0h1m1 0h1m2 0h2m4 0h1m1 0h1m2 0h5m1 0h3m1 0h3m1 0h1m2 0h1m12 0h128m1 0h43M1 167.5h1m9 0h1m1 0h1m1 0h1m1 0h2m1 0h1m2 0h1m7 0h1m2 0h2m1 0h2m7 0h1m38 0h4m1 0h1m2 0h1m1 0h1m1 0h1m2 0h2m1 0h1m2 0h2m1 0h1m4 0h4m7 0h4m7 0h2m2 0h7m5 0h2m2 0h2m1 0h2m2 0h2m1 0h1m1 0h6m1 0h2m1 0h5m1 0h7m6 0h2m1 0h1m1 0h1m1 0h2m3 0h3m3 0h3m2 0h1m1 0h1m1 0h2m2 0h1m1 0h2m1 0h2m1 0h2m4 0h1m13 0h128m1 0h43M1 168.5h1m9 0h1m1 0h1m1 0h1m1 0h2m1 0h1m2 0h1m7 0h1m2 0h3m1 0h1m7 0h1m33 0h2m1 0h2m1 0h1m1 0h2m1 0h2m1 0h1m2 0h3m1 0h1m1 0h1m2 0h2m1 0h1m4 0h2m10 0h6m1 0h3m2 0h1m2 0h1m3 0h1m4 0h11m3 0h2m1 0h1m1 0h2m1 0h1m1 0h1m4 0h3m2 0h1m2 0h1m1 0h1m3 0h1m1 0h2m1 0h1m2 0h1m2 0h1m1 0h1m3 0h1m1 0h3m1 0h1m2 0h1m1 0h1m1 0h1m3 0h3m5 0h2m2 0h5m1 0h1m1 0h3m1 0h3m2 0h128m1 0h43M1 169.5h1m9 0h1m1 0h1m1 0h1m1 0h2m1 0h1m2 0h1m7 0h1m2 0h5m7 0h1m34 0h1m1 0h2m1 0h2m4 0h1m2 0h3m3 0h1m1 0h2m1 0h2m3 0h1m1 0h2m1 0h1m4 0h1m3 0h1m1 0h1m3 0h1m5 0h1m2 0h2m1 0h8m1 0h2m2 0h1m1 0h3m2 0h1m2 0h1m2 0h3m1 0h4m1 0h1m1 0h3m4 0h5m1 0h6m3 0h1m1 0h2m1 0h1m1 0h3m5 0h2m1 0h1m1 0h1m1 0h2m2 0h1m1 0h2m4 0h1m1 0h2m2 0h2m12 0h128m1 0h43M1 170.5h1m9 0h1m1 0h1m1 0h1m1 0h2m1 0h1m2 0h1m7 0h1m1 0h1m4 0h1m7 0h1m36 0h1m1 0h4m2 0h1m1 0h2m3 0h2m1 0h2m2 0h1m1 0h3m3 0h2m1 0h1m2 0h1m1 0h2m3 0h3m1 0h2m1 0h2m1 0h1m3 0h2m3 0h1m2 0h1m2 0h1m1 0h2m1 0h3m1 0h3m1 0h2m1 0h1m2 0h1m1 0h1m3 0h1m2 0h3m1 0h5m1 0h1m2 0h1m1 0h1m1 0h3m1 0h3m1 0h4m3 0h2m2 0h2m4 0h1m4 0h1m1 0h2m2 0h7m1 0h2m3 0h1m2 0h2m1 0h1m1 0h131m1 0h43M1 171.5h1m9 0h1m1 0h1m1 0h1m1 0h2m1 0h1m2 0h1m7 0h1m1 0h1m3 0h2m7 0h1m33 0h2m5 0h1m2 0h1m1 0h1m2 0h1m1 0h1m3 0h2m1 0h1m1 0h2m1 0h1m2 0h1m1 0h1m6 0h1m3 0h4m7 0h2m2 0h6m1 0h3m1 0h3m1 0h2m1 0h4m1 0h2m1 0h1m1 0h4m1 0h1m1 0h1m1 0h3m2 0h1m3 0h5m1 0h8m2 0h1m1 0h1m2 0h1m1 0h3m5 0h2m1 0h1m1 0h1m1 0h1m3 0h1m2 0h2m1 0h2m3 0h1m16 0h128m1 0h43M1 172.5h1m9 0h1m1 0h1m1 0h1m1 0h2m1 0h1m2 0h1m7 0h1m1 0h1m2 0h1m1 0h1m7 0h1m33 0h1m2 0h2m2 0h3m2 0h1m1 0h1m1 0h4m1 0h1m3 0h4m4 0h5m1 0h1m2 0h1m3 0h1m1 0h4m2 0h3m1 0h1m3 0h1m2 0h1m2 0h1m1 0h1m1 0h1m3 0h2m1 0h4m1 0h1m2 0h1m8 0h1m1 0h3m4 0h1m1 0h3m2 0h3m2 0h1m6 0h4m2 0h1m4 0h2m4 0h1m1 0h1m2 0h5m1 0h1m1 0h3m2 0h1m2 0h1m5 0h1m3 0h3m1 0h128m1 0h43M1 173.5h1m9 0h1m1 0h1m1 0h1m1 0h2m1 0h1m2 0h1m7 0h1m1 0h1m2 0h3m7 0h1m33 0h2m2 0h5m3 0h1m2 0h3m6 0h1m1 0h2m3 0h8m6 0h4m1 0h1m1 0h1m3 0h2m2 0h2m1 0h3m1 0h2m1 0h1m1 0h2m2 0h1m1 0h1m1 0h2m1 0h4m1 0h3m1 0h5m1 0h5m4 0h2m1 0h1m2 0h2m1 0h3m1 0h1m1 0h1m1 0h2m1 0h1m1 0h2m4 0h4m1 0h1m1 0h1m1 0h2m1 0h2m1 0h2m2 0h2m1 0h1m1 0h1m2 0h1m6 0h1m6 0h128m1 0h43M1 174.5h1m9 0h1m1 0h1m1 0h1m1 0h2m1 0h1m2 0h1m7 0h1m1 0h1m1 0h1m2 0h1m7 0h1m33 0h3m2 0h5m1 0h1m1 0h2m2 0h3m1 0h2m2 0h1m13 0h1m2 0h1m3 0h6m1 0h3m2 0h1m11 0h5m1 0h2m2 0h1m1 0h3m2 0h1m4 0h1m3 0h1m3 0h1m3 0h1m2 0h1m3 0h3m1 0h1m1 0h2m4 0h1m6 0h1m1 0h1m1 0h1m1 0h1m2 0h1m1 0h1m1 0h1m2 0h8m1 0h2m1 0h2m2 0h1m2 0h1m1 0h1m3 0h1m1 0h2m1 0h128m1 0h43" stroke="#fff" stroke-width="1" fill="none"/><path d="M0 77.5h428M384.5 0v175" stroke="#960000" stroke-width="1" fill="none"/><path d="M1 77.5h1M13 77.5h1M15 77.5h1M17 77.5h2M20 77.5h1M23 77.5h1M31 77.5h3M36 77.5h3M80 77.5h2M83 77.5h6M90 77.5h1M95 77.5h1M97 77.5h1M101 77.5h1M104 77.5h1M106 77.5h2M110 77.5h1M114 77.5h1M116 77.5h4M121 77.5h1M123 77.5h1M125 77.5h3M129 77.5h2M135 77.5h1M137 77.5h1M140 77.5h2M143 77.5h1M145 77.5h1M147 77.5h2M150 77.5h1M153 77.5h1M157 77.5h3M161 77.5h4M166 77.5h1M168 77.5h1M171 77.5h1M174 77.5h3M179 77.5h1M181 77.5h2M184 77.5h1M186 77.5h3M190 77.5h1M192 77.5h1M194 77.5h1M196 77.5h5M204 77.5h2M207 77.5h1M209 77.5h3M213 77.5h2M217 77.5h2M220 77.5h6M230 77.5h2M235 77.5h2M238 77.5h1M242 77.5h1M256 77.5h172M384.5 6v1M384.5 26v149" stroke="#f00" stroke-width="1" fill="none"/></svg>
<div class="a" style="left:7px;top:625px;width:2px;height:2px;background:#960000"></div>
<div class="a" style="left:865px;top:625px;width:2px;height:2px;background:#960000"></div>
<div class="a" style="left:777px;top:469px;width:2px;height:2px;background:#960000"></div>
<div class="a" style="left:777px;top:821px;width:2px;height:2px;background:#960000"></div>
<div class="a sb" style="left:867px;top:469px;width:17px;height:354px">
<svg style="left:5px;top:8px" width="7" height="4" viewBox="0 0 7 4"><path d="M0 4L3.500 0 7 4z" fill="#555"/></svg>
<svg style="left:5px;top:343px" width="7" height="4" viewBox="0 0 7 4"><path d="M0 0L3.500 4 7 0z" fill="#555"/></svg>
<div class="a thumb" style="left:1px;top:32px;width:15px;height:17px"><svg style="left:3px;top:4px" width="7" height="7" viewBox="0 0 7 7" shape-rendering="crispEdges"><path d="M0 .5h7M0 2.500h7M0 4.500h7M0 6.500h7" stroke="#7a8296" stroke-width="1"/></svg></div>
</div>
<div class="a tbx" style="left:8px;top:824px;width:424.5px;padding:0"><span class="a w" style="left:1.4px;letter-spacing:-0.20px">Byte</span><span class="a w" style="left:25.3px;letter-spacing:0.38px">position:</span><span class="a w" style="left:74.3px;letter-spacing:-0.60px">53;</span><span class="a w" style="left:93.1px;letter-spacing:-0.39px">Row:</span><span class="a w" style="left:122px;letter-spacing:-0.43px">108298;</span><span class="a w" style="left:163.5px;letter-spacing:0.07px">Address:</span><span class="a w" style="left:211.1px;letter-spacing:-0.39px">1996148789;</span><span class="a w" style="left:276.5px;letter-spacing:-0.03px">Value:</span><span class="a w" style="left:310.4px;letter-spacing:0.00px">0</span></div>
<div class="a sbh" style="left:437px;top:823px;width:430px;height:17px">
<svg style="left:8px;top:5px" width="4" height="7" viewBox="0 0 4 7"><path d="M4 0L0 3.500 4 7z" fill="#555"/></svg>
<svg style="left:418.5px;top:5px" width="4" height="7" viewBox="0 0 4 7"><path d="M0 0L4 3.500 0 7z" fill="#555"/></svg>
<div class="a thumbh" style="left:18px;top:1px;width:18px;height:15px"><svg style="left:4px;top:3px" width="8" height="7" viewBox="0 0 8 7" shape-rendering="crispEdges"><path d="M.5 0v7M2.500 0v7M4.500 0v7M6.500 0v7" stroke="#5f6678" stroke-width="1"/></svg></div>
</div>
<div class="a" style="left:867px;top:823px;width:17px;height:17px;background:#fff;font-size:9px;line-height:18px;text-align:center;letter-spacing:-.8px;color:#000;padding-right:1px">64</div>
<div class="a txt" style="left:12px;top:845px;letter-spacing:.08px">Address:</div>
<div class="a txt" style="left:66.5px;top:845px;letter-spacing:-.13px">1996904496</div>
<div class="a txt" style="left:136.5px;top:845px;letter-spacing:-.07px">Selected:</div>
<div class="a tab in" style="left:895px;top:441px;width:148px">
<svg class="a" style="left:2px;top:2px" width="16" height="16" viewBox="0 0 17 16" preserveAspectRatio="none">
<path d="M4.400.8H15.100c1 0 1.400.5 1.400 1.300V3.700H14.100L12.700 14.500H2.200C1.100 14.500.5 13.900.5 13V11.600H2.900z" fill="#f3f9fd" stroke="#1b7ec3" stroke-width="1.150" stroke-linejoin="round"/>
<path d="M.7 11.600H9.800c.7 0 1 .5 1 1.200M14.100 3.700V2.300" fill="none" stroke="#1b7ec3" stroke-width="1"/>
<g fill="none" stroke="#383838" stroke-width="1.100">
<ellipse cx="6.700" cy="3.900" rx="1.150" ry="1.600"/><path d="M10.800 2.200v3.400M9.800 3l1-.8"/>
<path d="M5.300 7.100v3.400M4.300 7.900l1-.8"/><ellipse cx="8.800" cy="8.800" rx="1.150" ry="1.600"/></g>
</svg>
<div class="a tt" style="left:20.500px;letter-spacing:.22px">Silicon</div>
<div class="a tt" style="left:57px;letter-spacing:.92px">Motion</div>
<div class="a tt" style="left:97.800px;letter-spacing:-.5px">XOR</div>
<div class="a tt" style="left:123px">3</div>
<svg class="a" style="left:134px;top:6px" width="9" height="9" viewBox="0 0 9 9"><path d="M.7.7l7.600 7.600M8.300.7L.7 8.300" stroke="#161616" stroke-width="1.4" fill="none"/></svg>
</div>
<div class="a band in" style="left:895px;top:462px;width:1021px;height:4px;border-radius:0 3px 0 0"></div>
<div class="a band in" style="left:895px;top:862px;width:1021px;height:4px;border-radius:0 0 3px 3px"></div>
<div class="a frame" style="left:895px;top:466px;width:1021px;height:396px"></div>
<div class="a ib" style="left:897px;top:468px;width:1015px;height:373px"></div>
<div class="a dash" style="left:898px;top:469px;width:996px;height:2px;background-position:2px 0"></div>
<div class="a dash" style="left:898px;top:821px;width:996px;height:2px;background-position:2px 0"></div>
<div class="a dashv" style="left:898px;top:471px;width:2px;height:350px"></div>
<div class="a dashv" style="left:1892px;top:471px;width:2px;height:350px"></div>
<div class="a" style="left:898px;top:469px;width:2px;height:2px;background:#fff"></div>
<div class="a" style="left:1892px;top:469px;width:2px;height:2px;background:#fff"></div>
<div class="a" style="left:1892px;top:821px;width:2px;height:2px;background:#fff"></div>
<svg style="left:900px;top:471px" width="992" height="350" viewBox="0 0 496 175" shape-rendering="crispEdges"><rect width="496" height="175" fill="#696969"/><path d="M259 0.5h1m3 0h1m2 0h2m1 0h7m2 0h1m5 0h5m1 0h1m1 0h2m1 0h4m2 0h3m1 0h7m1 0h2m1 0h7m5 0h7m2 0h4m1 0h1m2 0h5m1 0h7m2 0h2m3 0h1m5 0h1m2 0h5m2 0h1m3 0h1m5 0h1m1 0h1m3 0h7m5 0h1m2 0h4m1 0h4m2 0h1m1 0h1m1 0h4m2 0h2m3 0h1m1 0h1m1 0h7m2 0h3m3 0h2m2 0h1m1 0h7m2 0h1m2 0h5m1 0h7m1 0h1m5 0h1M260 6.5h2m2 0h2m2 0h3m1 0h1m2 0h2m1 0h7m1 0h1m2 0h5m1 0h5m2 0h1m3 0h2m1 0h4m1 0h2m1 0h1m1 0h7m2 0h3m1 0h3m2 0h1m5 0h1m1 0h2m3 0h1m1 0h7m1 0h5m2 0h5m1 0h2m1 0h2m1 0h2m2 0h1m2 0h1m1 0h1m1 0h1m3 0h7m2 0h1m3 0h1m2 0h1m1 0h2m2 0h3m2 0h1m5 0h5m1 0h5m1 0h1m3 0h4m1 0h2m1 0h5m2 0h3m1 0h1m1 0h2m3 0h2m2 0h1m5 0h1m3 0h4m1 0h2m3 0h1M257 12.5h1m1 0h1m1 0h4m2 0h5m2 0h1m2 0h4m1 0h1m5 0h1m1 0h1m5 0h1m1 0h2m3 0h1m1 0h3m2 0h5m1 0h2m5 0h3m5 0h5m5 0h5m2 0h1m1 0h3m3 0h2m2 0h1m2 0h1m1 0h1m2 0h1m2 0h7m1 0h5m1 0h1m1 0h5m3 0h5m2 0h7m1 0h1m1 0h3m1 0h2m1 0h1m2 0h1m2 0h5m5 0h3m5 0h4m3 0h7m2 0h1m3 0h7m1 0h2m1 0h2m1 0h7m1 0h1m2 0h5m1 0h1M259 18.5h2m2 0h7m1 0h2m2 0h2m5 0h1m1 0h4m1 0h4m1 0h2m1 0h1m2 0h1m2 0h2m1 0h5m3 0h1m2 0h1m1 0h2m1 0h3m1 0h1m1 0h1m3 0h7m1 0h4m2 0h7m1 0h7m2 0h5m1 0h4m3 0h2m1 0h1m3 0h1m1 0h1m3 0h4m5 0h7m2 0h4m1 0h3m2 0h5m2 0h4m1 0h1m1 0h5m1 0h1m2 0h1m5 0h2m1 0h3m1 0h5m2 0h5m3 0h2m5 0h5m1 0h3m1 0h5m1 0h2m2 0h1M259 24.5h1m1 0h7m5 0h3m1 0h5m5 0h2m1 0h2m1 0h2m1 0h1m1 0h7m5 0h5m2 0h3m2 0h2m1 0h1m3 0h1m1 0h4m2 0h1m3 0h3m2 0h4m2 0h1m1 0h3m1 0h3m1 0h1m2 0h4m1 0h1m1 0h2m2 0h1m1 0h1m1 0h4m4 0h4m1 0h5m2 0h2m2 0h1m5 0h4m5 0h2m1 0h4m1 0h1m1 0h2m2 0h5m1 0h1m1 0h1m1 0h2m1 0h2m1 0h1m2 0h2m2 0h1m1 0h7m1 0h2m3 0h1m1 0h1m1 0h5m1 0h2m1 0h1m1 0h1m5 0h4M258 30.5h1m1 0h1m1 0h2m1 0h5m1 0h1m1 0h2m1 0h2m3 0h5m1 0h7m3 0h2m1 0h1m1 0h7m3 0h2m2 0h7m1 0h3m1 0h7m1 0h5m2 0h2m3 0h2m1 0h1m1 0h3m3 0h1m1 0h1m1 0h7m3 0h1m1 0h2m1 0h2m1 0h3m1 0h4m2 0h1m1 0h5m3 0h2m5 0h1m3 0h1m1 0h1m3 0h1m3 0h3m1 0h3m2 0h1m1 0h4m2 0h7m1 0h7m1 0h1m1 0h2m1 0h4m2 0h3m2 0h5m3 0h4m1 0h1m1 0h5m2 0h1m1 0h1M256 36.5h1m3 0h1m1 0h2m5 0h5m1 0h1m3 0h2m5 0h1m1 0h1m5 0h5m2 0h5m1 0h1m5 0h5m2 0h3m1 0h2m5 0h7m1 0h3m1 0h2m1 0h2m1 0h7m1 0h2m1 0h1m3 0h2m3 0h1m2 0h2m5 0h5m5 0h1m1 0h1m3 0h4m1 0h1m1 0h1m2 0h3m2 0h2m3 0h1m1 0h1m3 0h4m1 0h2m5 0h1m1 0h1m1 0h4m1 0h4m1 0h4m5 0h3m1 0h2m1 0h2m1 0h1m2 0h1m5 0h7m1 0h1m1 0h4m1 0h1m1 0h2M260 42.5h7m5 0h2m1 0h2m1 0h1m5 0h2m2 0h1m3 0h2m3 0h3m1 0h2m2 0h1m1 0h1m1 0h3m2 0h1m3 0h5m1 0h1m1 0h7m1 0h5m1 0h7m2 0h4m2 0h3m1 0h5m3 0h2m1 0h1m2 0h2m3 0h1m2 0h2m3 0h5m3 0h3m1 0h7m1 0h3m2 0h4m1 0h7m1 0h3m5 0h7m1 0h1m5 0h3m5 0h2m1 0h1m1 0h7m3 0h1m1 0h1m2 0h1m1 0h1m5 0h3m1 0h1m1 0h2m1 0h1m2 0h2M260 48.5h3m5 0h1m1 0h3m1 0h1m2 0h1m5 0h7m1 0h1m2 0h7m5 0h1m1 0h1m1 0h2m1 0h5m1 0h7m1 0h4m1 0h1m1 0h5m1 0h2m2 0h1m1 0h2m1 0h1m2 0h2m5 0h2m1 0h1m2 0h1m1 0h7m5 0h3m1 0h1m3 0h4m1 0h2m1 0h4m2 0h3m5 0h1m5 0h4m5 0h2m1 0h3m2 0h3m1 0h2m5 0h5m1 0h1m1 0h1m5 0h1m5 0h2m1 0h1m1 0h4m2 0h2m2 0h2m2 0h1m3 0h2m1 0h5M259 54.5h2m1 0h4m2 0h5m3 0h2m2 0h2m1 0h1m2 0h5m5 0h4m1 0h2m1 0h1m3 0h1m2 0h5m2 0h7m1 0h1m2 0h5m2 0h1m5 0h1m1 0h2m1 0h5m1 0h4m1 0h1m1 0h5m1 0h2m1 0h1m3 0h1m1 0h1m1 0h1m5 0h1m3 0h2m1 0h7m2 0h3m1 0h1m5 0h3m5 0h2m1 0h7m1 0h1m5 0h2m1 0h7m1 0h1m3 0h7m5 0h4m3 0h3m1 0h7m5 0h1m2 0h5m1 0h1m1 0h1M259 60.5h1m1 0h5m1 0h5m1 0h5m2 0h7m5 0h3m5 0h1m5 0h1m1 0h1m2 0h3m1 0h2m1 0h7m1 0h2m1 0h1m2 0h1m2 0h5m2 0h3m2 0h1m2 0h7m1 0h3m1 0h3m3 0h7m1 0h1m2 0h5m1 0h7m2 0h1m3 0h2m1 0h2m1 0h1m5 0h2m5 0h7m3 0h1m2 0h1m1 0h2m3 0h1m1 0h1m1 0h2m5 0h4m1 0h1m3 0h1m5 0h1m3 0h5m1 0h4m1 0h1m2 0h2m1 0h2m3 0h5m1 0h1M257 66.5h1m5 0h7m2 0h7m1 0h1m3 0h5m1 0h1m2 0h2m1 0h5m1 0h1m1 0h1m2 0h2m2 0h2m1 0h2m1 0h3m5 0h2m3 0h1m1 0h2m1 0h1m1 0h5m2 0h1m1 0h7m2 0h1m1 0h1m1 0h1m1 0h4m1 0h7m2 0h1m3 0h2m1 0h2m1 0h4m2 0h1m5 0h5m1 0h4m1 0h5m2 0h1m5 0h7m5 0h5m1 0h5m1 0h1m1 0h2m1 0h1m1 0h4m1 0h1m1 0h5m1 0h2m2 0h2m5 0h4m1 0h3m2 0h4m3 0h1m1 0h1M259 72.5h4m3 0h1m3 0h5m5 0h2m1 0h1m1 0h1m1 0h7m1 0h1m1 0h4m2 0h5m5 0h7m3 0h3m5 0h1m5 0h1m2 0h1m1 0h4m1 0h5m1 0h5m2 0h1m1 0h2m1 0h1m1 0h1m3 0h2m1 0h2m5 0h3m1 0h1m1 0h7m2 0h2m2 0h2m2 0h5m2 0h1m1 0h5m1 0h1m5 0h1m5 0h5m1 0h1m1 0h2m1 0h2m1 0h1m3 0h2m5 0h3m1 0h4m3 0h1m1 0h1m2 0h4m3 0h1m2 0h5m5 0h2m1 0h1M257 78.5h4m5 0h1m2 0h7m5 0h1m1 0h3m3 0h2m1 0h7m1 0h3m2 0h2m2 0h2m5 0h7m1 0h3m1 0h4m1 0h2m2 0h1m1 0h4m2 0h1m5 0h1m1 0h2m2 0h1m1 0h2m3 0h7m1 0h1m5 0h4m5 0h4m3 0h1m1 0h2m5 0h5m2 0h1m2 0h2m1 0h7m3 0h5m3 0h4m2 0h3m1 0h4m1 0h1m2 0h3m1 0h2m2 0h4m2 0h5m1 0h2m2 0h5m2 0h1m1 0h5m1 0h5M257 84.5h3m1 0h4m1 0h2m5 0h1m5 0h5m3 0h1m1 0h1m1 0h2m1 0h7m1 0h1m1 0h1m5 0h2m1 0h4m1 0h5m3 0h1m1 0h4m5 0h7m5 0h4m1 0h1m2 0h1m1 0h1m5 0h1m1 0h1m1 0h7m5 0h1m3 0h4m1 0h1m2 0h1m1 0h2m1 0h1m3 0h2m1 0h7m2 0h7m2 0h3m3 0h4m5 0h3m1 0h2m1 0h1m1 0h7m5 0h1m3 0h2m2 0h1m3 0h1m3 0h3m1 0h1m1 0h1m3 0h1m1 0h7M256 90.5h3m1 0h2m5 0h2m3 0h4m2 0h1m1 0h4m1 0h4m1 0h4m1 0h2m1 0h1m1 0h5m1 0h1m3 0h4m3 0h2m1 0h7m3 0h1m3 0h1m3 0h1m1 0h4m1 0h3m2 0h1m1 0h5m2 0h1m5 0h5m1 0h5m5 0h2m2 0h5m5 0h1m2 0h3m2 0h7m3 0h4m2 0h4m1 0h2m3 0h5m1 0h4m2 0h1m1 0h3m2 0h1m2 0h1m1 0h5m2 0h2m1 0h1m1 0h2m2 0h2m1 0h4m5 0h3m2 0h2m1 0h4m1 0h2M258 96.5h1m2 0h1m1 0h1m1 0h2m1 0h1m1 0h2m1 0h2m3 0h1m3 0h1m1 0h1m3 0h4m1 0h4m1 0h5m1 0h1m2 0h3m1 0h3m1 0h2m2 0h3m5 0h2m1 0h1m1 0h5m2 0h3m1 0h1m2 0h1m2 0h4m2 0h2m5 0h1m2 0h3m1 0h2m5 0h3m6 0h6m5 0h1m1 0h7m1 0h4m1 0h1m1 0h7m1 0h4m1 0h1m5 0h7m3 0h7m1 0h5m1 0h5m3 0h2m1 0h1m5 0h4m2 0h3m2 0h1m1 0h2m1 0h2m2 0h3M258 102.5h7m3 0h4m1 0h1m3 0h4m1 0h2m5 0h5m1 0h1m1 0h7m2 0h1m1 0h4m1 0h1m2 0h4m1 0h2m1 0h1m5 0h1m2 0h2m1 0h2m2 0h4m5 0h2m5 0h2m1 0h3m2 0h1m2 0h1m1 0h1m5 0h3m1 0h2m1 0h1m4 0h2m1 0h1m1 0h2m1 0h5m2 0h2m1 0h3m1 0h7m1 0h5m1 0h2m1 0h5m1 0h7m1 0h4m1 0h7m1 0h3m2 0h7m5 0h3m2 0h1m2 0h1m3 0h5m1 0h3m1 0h4M259 108.5h1m2 0h1m1 0h3m5 0h2m1 0h2m1 0h7m1 0h2m1 0h2m3 0h7m2 0h7m2 0h1m2 0h1m3 0h2m5 0h2m1 0h1m1 0h5m1 0h4m3 0h2m2 0h3m1 0h1m1 0h3m1 0h1m2 0h7m1 0h1m2 0h2m1 0h4m2 0h1m3 0h4m1 0h1m2 0h5m3 0h7m2 0h1m3 0h2m3 0h1m1 0h1m3 0h1m1 0h4m1 0h1m1 0h2m2 0h2m5 0h2m2 0h2m1 0h5m5 0h3m5 0h1m1 0h1m2 0h2m2 0h2m1 0h2m1 0h5m2 0h2m1 0h1M256 114.5h1m1 0h2m3 0h2m1 0h4m1 0h1m1 0h1m1 0h2m2 0h2m2 0h1m1 0h1m1 0h1m1 0h1m5 0h1m1 0h2m2 0h5m2 0h3m1 0h5m1 0h1m2 0h4m3 0h1m5 0h2m1 0h1m2 0h4m2 0h2m2 0h1m3 0h1m1 0h2m2 0h2m1 0h7m1 0h5m1 0h1m2 0h1m2 0h1m2 0h2m1 0h3m3 0h7m2 0h1m1 0h1m3 0h1m1 0h1m3 0h1m1 0h7m5 0h4m1 0h1m2 0h3m1 0h5m1 0h2m1 0h1m1 0h1m1 0h5m1 0h1m1 0h3m1 0h5m2 0h7m2 0h5m1 0h2m1 0h1M259 120.5h4m1 0h1m1 0h1m1 0h4m1 0h1m2 0h1m2 0h1m2 0h2m1 0h4m1 0h5m2 0h3m5 0h1m1 0h5m1 0h1m1 0h7m1 0h5m1 0h1m3 0h4m1 0h1m2 0h1m1 0h3m1 0h5m3 0h2m1 0h4m1 0h1m1 0h7m3 0h1m1 0h1m5 0h1m3 0h4m1 0h7m1 0h2m1 0h3m1 0h5m1 0h7m5 0h1m2 0h5m5 0h1m2 0h2m1 0h5m1 0h4m1 0h1m3 0h3m2 0h1m3 0h1m1 0h1m1 0h1m2 0h7m2 0h5m2 0h1m1 0h3M258 126.5h5m1 0h1m1 0h1m1 0h1m2 0h5m5 0h2m2 0h2m2 0h2m1 0h2m1 0h5m1 0h1m1 0h1m1 0h2m1 0h4m1 0h5m1 0h2m1 0h4m1 0h4m1 0h5m2 0h2m1 0h2m1 0h7m1 0h1m5 0h1m1 0h2m1 0h1m1 0h1m1 0h3m3 0h1m1 0h1m1 0h5m3 0h3m2 0h5m1 0h5m2 0h2m5 0h5m1 0h2m1 0h2m1 0h2m1 0h2m3 0h3m2 0h2m1 0h3m1 0h7m3 0h3m5 0h3m2 0h5m1 0h1m2 0h2m3 0h1m5 0h2m2 0h1m2 0h3M260 132.5h7m2 0h7m1 0h2m1 0h2m1 0h2m1 0h1m3 0h4m5 0h2m1 0h1m1 0h2m1 0h3m1 0h5m2 0h2m5 0h2m2 0h3m1 0h1m2 0h3m1 0h1m2 0h3m5 0h5m1 0h2m1 0h7m1 0h7m1 0h3m1 0h1m2 0h1m4 0h2m1 0h2m1 0h1m1 0h5m2 0h1m1 0h2m1 0h5m3 0h1m1 0h1m3 0h4m1 0h2m5 0h3m1 0h2m1 0h7m1 0h7m2 0h1m5 0h3m2 0h4m3 0h1m3 0h2m5 0h7M259 138.5h4m2 0h7m3 0h5m1 0h7m3 0h7m1 0h1m1 0h3m5 0h1m1 0h2m3 0h2m1 0h1m2 0h4m1 0h3m1 0h7m1 0h1m2 0h1m1 0h7m1 0h7m1 0h3m1 0h1m1 0h4m1 0h1m1 0h1m1 0h4m3 0h1m3 0h3m1 0h5m2 0h2m1 0h1m1 0h4m2 0h7m2 0h2m1 0h1m1 0h4m1 0h5m2 0h3m3 0h2m1 0h1m1 0h2m1 0h4m1 0h7m1 0h1m2 0h2m2 0h1m1 0h4m5 0h1m5 0h3m2 0h3m2 0h1M256 144.5h2m1 0h2m1 0h1m1 0h4m5 0h2m1 0h7m1 0h2m1 0h1m5 0h2m1 0h5m2 0h7m2 0h2m2 0h4m1 0h7m5 0h7m3 0h5m2 0h4m2 0h5m1 0h3m2 0h3m1 0h3m2 0h5m1 0h2m1 0h4m1 0h1m1 0h7m2 0h7m1 0h1m1 0h3m2 0h1m1 0h1m3 0h5m1 0h2m1 0h3m3 0h3m1 0h5m3 0h1m5 0h1m1 0h1m2 0h2m5 0h2m1 0h2m1 0h4m2 0h5m1 0h2m1 0h5M260 150.5h3m1 0h7m2 0h3m3 0h3m3 0h2m1 0h7m2 0h5m2 0h7m2 0h1m5 0h2m3 0h1m5 0h7m1 0h2m1 0h2m1 0h2m5 0h4m3 0h2m3 0h7m1 0h4m1 0h7m2 0h2m5 0h7m1 0h5m1 0h2m2 0h2m2 0h2m1 0h2m1 0h7m1 0h4m3 0h1m2 0h1m5 0h7m2 0h7m1 0h4m1 0h7m2 0h1m2 0h4m1 0h1m2 0h2m2 0h1m1 0h2M258 156.5h7m1 0h2m1 0h1m1 0h3m1 0h1m3 0h2m1 0h2m1 0h5m1 0h5m2 0h3m2 0h1m1 0h1m3 0h2m2 0h1m3 0h2m1 0h1m1 0h1m5 0h1m1 0h2m1 0h4m5 0h4m1 0h7m3 0h4m5 0h1m1 0h3m2 0h5m1 0h2m5 0h2m5 0h1m3 0h3m1 0h1m1 0h5m2 0h2m2 0h1m2 0h2m2 0h1m5 0h1m1 0h1m1 0h1m5 0h5m1 0h2m1 0h1m5 0h1m1 0h1m1 0h3m1 0h4m2 0h7m1 0h2m1 0h1m1 0h2m1 0h7m1 0h1m1 0h1m1 0h2M260 162.5h1m1 0h1m5 0h3m2 0h1m2 0h3m2 0h2m1 0h2m5 0h2m1 0h5m1 0h5m2 0h1m1 0h7m1 0h1m3 0h4m2 0h1m5 0h2m1 0h3m5 0h4m3 0h4m3 0h3m2 0h5m1 0h1m3 0h1m1 0h2m1 0h1m2 0h1m5 0h2m1 0h1m1 0h7m2 0h7m1 0h1m3 0h2m3 0h2m2 0h1m5 0h7m3 0h2m2 0h7m1 0h1m1 0h1m2 0h7m1 0h5m5 0h2m3 0h7m1 0h2m5 0h2M258 168.5h2m5 0h3m5 0h7m5 0h2m1 0h1m1 0h2m1 0h1m2 0h5m3 0h5m1 0h1m5 0h3m2 0h1m1 0h7m3 0h1m1 0h1m5 0h5m5 0h7m1 0h2m1 0h5m2 0h1m1 0h2m1 0h4m1 0h3m3 0h3m5 0h5m2 0h1m1 0h1m1 0h4m2 0h2m3 0h1m5 0h1m5 0h3m1 0h4m5 0h1m1 0h1m1 0h7m1 0h1m3 0h5m1 0h1m2 0h7m2 0h7m1 0h4m1 0h7M256 174.5h3m1 0h1m5 0h2m5 0h5m1 0h7m5 0h1m3 0h2m2 0h4m1 0h1m3 0h4m1 0h2m3 0h4m1 0h3m1 0h1m2 0h1m3 0h1m5 0h4m1 0h7m5 0h1m1 0h3m2 0h1m3 0h1m1 0h1m1 0h1m2 0h1m1 0h4m5 0h2m1 0h3m3 0h4m3 0h3m2 0h2m5 0h2m2 0h5m5 0h7m3 0h1m3 0h2m1 0h2m2 0h1m1 0h1m2 0h1m1 0h1m1 0h1m5 0h5m3 0h5m1 0h2m1 0h4m2 0h3m5 0h1" stroke="#fff" stroke-width="1" fill="none"/><path d="M0 77.5h496M384.5 0v175" stroke="#960000" stroke-width="1" fill="none"/><path d="M384.5 0v1M384.5 6v1M384.5 12v1M384.5 18v1M384.5 24v1M384.5 48v1M384.5 72v1M384.5 96v1M384.5 102v1M384.5 108v1M384.5 114v1M384.5 132v1M384.5 144v1" stroke="#f00" stroke-width="1" fill="none"/></svg>
<div class="a" style="left:898px;top:625px;width:2px;height:2px;background:#960000"></div>
<div class="a" style="left:1892px;top:625px;width:2px;height:2px;background:#960000"></div>
<div class="a" style="left:1668px;top:469px;width:2px;height:2px;background:#960000"></div>
<div class="a" style="left:1668px;top:821px;width:2px;height:2px;background:#960000"></div>
<div class="a sb" style="left:1894px;top:469px;width:17px;height:354px">
<svg style="left:5px;top:8px" width="7" height="4" viewBox="0 0 7 4"><path d="M0 4L3.500 0 7 4z" fill="#555"/></svg>
<svg style="left:5px;top:343px" width="7" height="4" viewBox="0 0 7 4"><path d="M0 0L3.500 4 7 0z" fill="#555"/></svg>
<div class="a thumb" style="left:1px;top:32px;width:15px;height:17px"><svg style="left:3px;top:4px" width="7" height="7" viewBox="0 0 7 7" shape-rendering="crispEdges"><path d="M0 .5h7M0 2.500h7M0 4.500h7M0 6.500h7" stroke="#7a8296" stroke-width="1"/></svg></div>
</div>
<div class="a tbx" style="left:899px;top:824px;width:492.5px;padding:0"><span class="a w" style="left:1.4px;letter-spacing:-0.20px">Byte</span><span class="a w" style="left:25.3px;letter-spacing:0.38px">position:</span><span class="a w" style="left:74.3px;letter-spacing:-0.60px">43;</span><span class="a w" style="left:93.1px;letter-spacing:-0.39px">Row:</span><span class="a w" style="left:122px;letter-spacing:-0.43px">108420;</span><span class="a w" style="left:163.5px;letter-spacing:0.07px">Address:</span><span class="a w" style="left:211.1px;letter-spacing:-0.39px">1998397483;</span><span class="a w" style="left:276.5px;letter-spacing:-0.03px">Value:</span><span class="a w" style="left:310.4px;letter-spacing:0.00px">255</span></div>
<div class="a sbh" style="left:1396px;top:823px;width:498px;height:17px">
<svg style="left:8px;top:5px" width="4" height="7" viewBox="0 0 4 7"><path d="M4 0L0 3.500 4 7z" fill="#555"/></svg>
<svg style="left:486.5px;top:5px" width="4" height="7" viewBox="0 0 4 7"><path d="M0 0L4 3.500 0 7z" fill="#555"/></svg>
<div class="a thumbh" style="left:18px;top:1px;width:18px;height:15px"><svg style="left:4px;top:3px" width="8" height="7" viewBox="0 0 8 7" shape-rendering="crispEdges"><path d="M.5 0v7M2.500 0v7M4.500 0v7M6.500 0v7" stroke="#5f6678" stroke-width="1"/></svg></div>
</div>
<div class="a" style="left:1894px;top:823px;width:17px;height:17px;background:#fff;font-size:9px;line-height:18px;text-align:center;letter-spacing:-.8px;color:#000;padding-right:1px">64</div>
<div class="a txt" style="left:903px;top:845px;letter-spacing:.08px">Address:</div>
<div class="a txt" style="left:957.5px;top:845px;letter-spacing:-.13px">1996904496</div>
<div class="a txt" style="left:1027.5px;top:845px;letter-spacing:-.07px">Selected:</div>
<svg style="left:876px;top:16px" width="9" height="9" viewBox="0 0 9 9"><path d="M0 0h9v2H0z" fill="#0a0a0a"/><path d="M0 3.500h9L4.500 8z" fill="#0a0a0a"/></svg>
<svg style="left:1903px;top:15px" width="9" height="9" viewBox="0 0 9 9"><path d="M0 2h8.500L4.250 6.200z" fill="#0a0a0a"/></svg>
<svg style="left:876px;top:447px" width="9" height="9" viewBox="0 0 9 9"><path d="M0 2h8.500L4.250 6.200z" fill="#0a0a0a"/></svg>
<svg style="left:1903px;top:447px" width="9" height="9" viewBox="0 0 9 9"><path d="M0 2h8.500L4.250 6.200z" fill="#0a0a0a"/></svg>
</body></html>
